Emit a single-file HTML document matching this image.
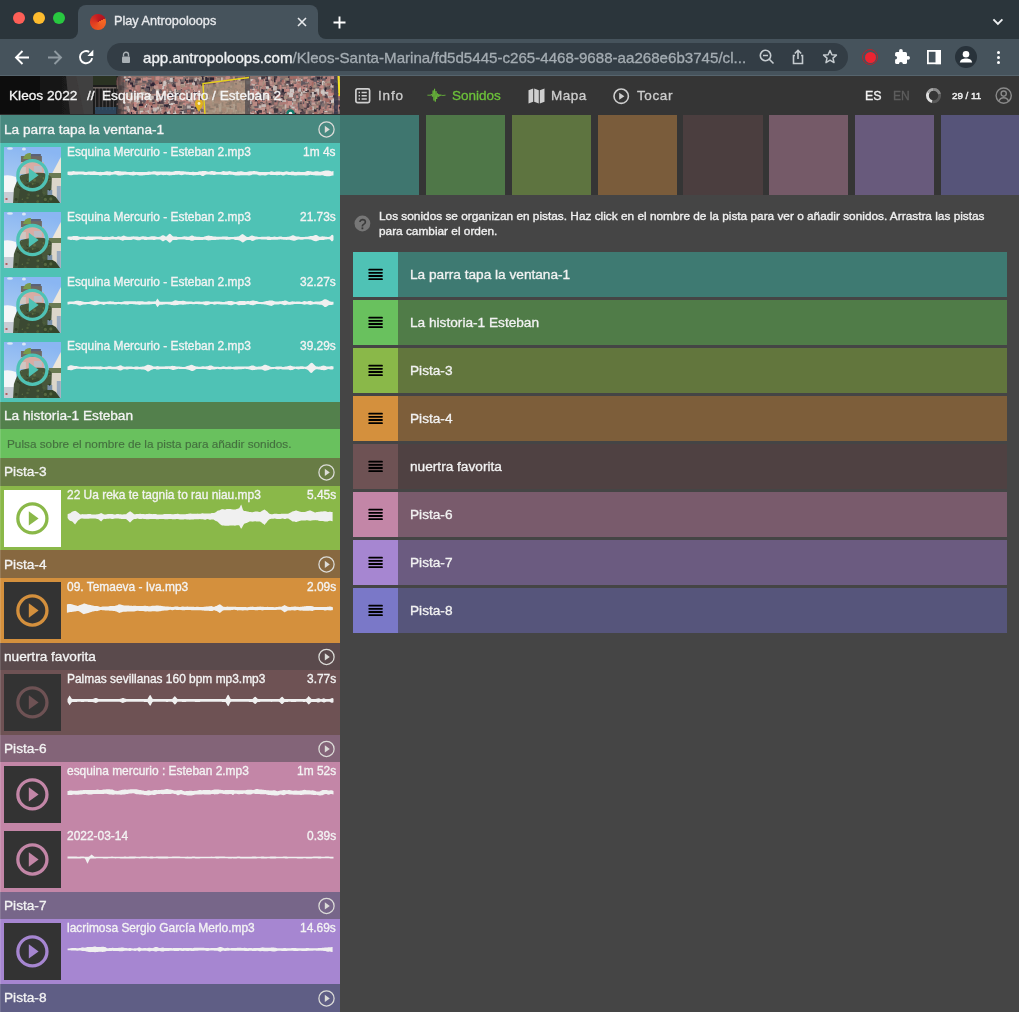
<!DOCTYPE html>
<html><head><meta charset="utf-8">
<style>
*{margin:0;padding:0;box-sizing:border-box}
html,body{width:1019px;height:1012px;overflow:hidden;background:#454545;font-family:"Liberation Sans",sans-serif;position:relative}
.a{position:absolute}
.t{position:absolute;white-space:nowrap;line-height:1;will-change:transform;-webkit-text-stroke:0.32px currentColor}
svg{position:absolute;overflow:visible}
</style></head><body>
<!-- ============ BROWSER CHROME ============ -->
<div class="a" style="left:0;top:0;width:1019px;height:39px;background:#2b353b"></div>
<div class="a" style="left:0;top:39px;width:1019px;height:37px;background:#46535c"></div>
<div class="a" style="left:0;top:75px;width:1019px;height:1px;background:#56646d"></div>
<!-- tab -->
<div class="a" style="left:78px;top:5px;width:240px;height:34px;background:#46535c;border-radius:8px 8px 0 0"></div>
<div class="a" style="left:70px;top:31px;width:8px;height:8px;background:#46535c"></div>
<div class="a" style="left:70px;top:31px;width:8px;height:8px;background:#2b353b;border-bottom-right-radius:8px"></div>
<div class="a" style="left:318px;top:31px;width:8px;height:8px;background:#46535c"></div>
<div class="a" style="left:318px;top:31px;width:8px;height:8px;background:#2b353b;border-bottom-left-radius:8px"></div>
<!-- traffic lights -->
<div class="a" style="left:13px;top:12px;width:12px;height:12px;border-radius:50%;background:#fe5f57"></div>
<div class="a" style="left:33px;top:12px;width:12px;height:12px;border-radius:50%;background:#febc2e"></div>
<div class="a" style="left:53px;top:12px;width:12px;height:12px;border-radius:50%;background:#28c840"></div>
<!-- favicon -->
<div class="a" style="left:90.2px;top:14.1px;width:15.6px;height:15.6px;border-radius:50%;background:conic-gradient(from 0deg,#c21a22 0deg,#b0141f 62deg,#f86a24 63deg,#f06024 120deg,#e84e20 200deg,#e03c22 260deg,#cc2822 320deg,#c21a22 360deg)"></div>
<div class="t" style="left:114px;top:15px;font-size:12.7px;color:#e8eaed">Play Antropoloops</div>
<svg style="left:297px;top:17px" width="10" height="10"><path d="M1 1L9 9M9 1L1 9" stroke="#e8eaed" stroke-width="1.6"/></svg>
<svg style="left:333px;top:15.5px" width="13" height="13"><path d="M6.5 0.5V12.5M0.5 6.5H12.5" stroke="#ffffff" stroke-width="1.9"/></svg>
<svg style="left:992px;top:18px" width="13" height="9"><path d="M1.4 1.4L5.9 5.9L10.4 1.4" stroke="#eef0f2" stroke-width="1.9" fill="none"/></svg>
<!-- nav arrows -->
<svg style="left:14px;top:49px" width="17" height="17"><path d="M15 8.5H2.5M8.5 2L2 8.5L8.5 15" stroke="#ffffff" stroke-width="1.9" fill="none"/></svg>
<svg style="left:46px;top:49px" width="17" height="17"><path d="M2 8.5H14.5M8.5 2L15 8.5L8.5 15" stroke="#8f9aa1" stroke-width="1.9" fill="none"/></svg>
<svg style="left:78px;top:49px" width="17" height="17"><path d="M11.2 2.9A6.1 6.1 0 1 0 14.1 9.1" stroke="#ffffff" stroke-width="1.9" fill="none"/><path d="M9.4 6.9H15.3V0.7Z" fill="#ffffff"/></svg>
<!-- url pill -->
<div class="a" style="left:107px;top:43px;width:741px;height:28px;border-radius:14px;background:#333d45"></div>
<svg style="left:121px;top:51px" width="10" height="13"><path d="M2.5 5.5V3.8A2.5 2.5 0 0 1 7.5 3.8V5.5" stroke="#a9b0b5" stroke-width="1.4" fill="none"/><rect x="1" y="5.5" width="8" height="6.5" rx="1" fill="#a9b0b5"/></svg>
<div class="t" style="left:142.5px;top:50px;font-size:15.11px;color:#eef0f2">app.antropoloops.com<span style="color:#a4acb2">/Kleos-Santa-Marina/fd5d5445-c265-4468-9688-aa268e6b3745/cl...</span></div>
<svg style="left:758px;top:48px" width="18" height="18"><circle cx="7.5" cy="7.5" r="5.2" stroke="#c5cbcf" stroke-width="1.6" fill="none"/><path d="M11.3 11.3L15.5 15.5M5 7.5H10" stroke="#c5cbcf" stroke-width="1.6"/></svg>
<svg style="left:790px;top:49px" width="16" height="16"><path d="M8 10V1.5M4.8 4.5L8 1.3L11.2 4.5" stroke="#c5cbcf" stroke-width="1.6" fill="none"/><path d="M5 6.5H3.5V14.5H12.5V6.5H11" stroke="#c5cbcf" stroke-width="1.6" fill="none"/></svg>
<svg style="left:822px;top:49px" width="16" height="16"><path d="M8 1.5L9.9 5.7L14.4 6.1L11 9.1L12 13.6L8 11.2L4 13.6L5 9.1L1.6 6.1L6.1 5.7Z" stroke="#c5cbcf" stroke-width="1.5" fill="none" stroke-linejoin="round"/></svg>
<div class="a" style="left:862px;top:49px;width:16px;height:16px;border-radius:50%;border:1.3px solid #b3262d;background:#46535c"></div>
<div class="a" style="left:864.5px;top:51.5px;width:11px;height:11px;border-radius:50%;background:#ee2431"></div>
<svg style="left:894px;top:49px" width="17" height="17"><rect x="1.1" y="3" width="11.9" height="12" rx="1.6" fill="#fff"/><circle cx="6.9" cy="1.9" r="1.9" fill="#fff"/><rect x="5.5" y="2" width="2.8" height="2" fill="#fff"/><circle cx="14.1" cy="8.8" r="1.9" fill="#fff"/><rect x="12" y="7.4" width="2.2" height="2.8" fill="#fff"/><circle cx="1.3" cy="8.8" r="1.8" fill="#46535c"/><circle cx="6.9" cy="14.8" r="1.9" fill="#46535c"/></svg>
<svg style="left:927px;top:49.8px" width="14" height="14.2"><rect x="0.9" y="0.9" width="12.2" height="12.4" stroke="#ffffff" stroke-width="1.8" fill="none"/><rect x="8.5" y="0" width="5.5" height="14.2" fill="#ffffff"/></svg>
<div class="a" style="left:955px;top:46px;width:22px;height:22px;border-radius:50%;background:#28323a"></div>
<svg style="left:955px;top:46px" width="22" height="22"><circle cx="11" cy="8.2" r="3.3" fill="#fff"/><path d="M4.8 16.5C5.5 13.2 8 12.4 11 12.4C14 12.4 16.5 13.2 17.2 16.5Z" fill="#fff"/></svg>
<div class="a" style="left:996.5px;top:50.8px;width:3.2px;height:3.2px;border-radius:50%;background:#fff"></div>
<div class="a" style="left:996.5px;top:56px;width:3.2px;height:3.2px;border-radius:50%;background:#fff"></div>
<div class="a" style="left:996.5px;top:61.2px;width:3.2px;height:3.2px;border-radius:50%;background:#fff"></div>

<!-- ============ PAGE ============ -->
<div class="a" style="left:0;top:76px;width:1019px;height:936px;background:#454545"></div>
<svg style="left:0;top:76px" width="340" height="39" viewBox="0 0 340 39">
<defs><linearGradient id="hg" x1="0" x2="1" y1="0" y2="0"><stop offset="0" stop-color="#0e0e0e"/><stop offset="0.55" stop-color="#1a1a1a"/><stop offset="1" stop-color="#2a2826"/></linearGradient></defs>
<defs><filter id="pb" x="0" y="0" width="1" height="1"><feGaussianBlur stdDeviation="0.6"/></filter></defs><g filter="url(#pb)">
<rect x="0" y="0" width="120" height="39" fill="url(#hg)"/>
<path d="M66 0L94 0L97 39L70 39Z" fill="#3c3a3a"/>
<path d="M76 0L94 0L96 39L84 39Z" fill="#444242" opacity="0.6"/>
<rect x="93" y="0" width="26" height="39" fill="#1e1c1c"/>
<rect x="93" y="0" width="26" height="9" fill="#2a3024"/>
<rect x="93" y="11" width="26" height="1.6" fill="#6a605c"/>
<rect x="95.0" y="12" width="1" height="22" fill="#8a8888" opacity="0.45"/>
<rect x="98.6" y="12" width="1" height="22" fill="#8a8888" opacity="0.45"/>
<rect x="102.2" y="12" width="1" height="22" fill="#8a8888" opacity="0.45"/>
<rect x="105.8" y="12" width="1" height="22" fill="#8a8888" opacity="0.45"/>
<rect x="109.4" y="12" width="1" height="22" fill="#8a8888" opacity="0.45"/>
<rect x="113.0" y="12" width="1" height="22" fill="#8a8888" opacity="0.45"/>
<rect x="116.6" y="12" width="1" height="22" fill="#8a8888" opacity="0.45"/>
<rect x="95" y="31" width="23" height="8" fill="#32506a" opacity="0.8"/>
<rect x="0" y="0" width="40" height="39" fill="#0a0a0a" opacity="0.5"/>
</g>
<defs><filter id="mb" x="0" y="0" width="1" height="1"><feGaussianBlur stdDeviation="0.7"/></filter></defs>
<g filter="url(#mb)">
<rect x="118" y="0" width="222" height="39" fill="#9a7c74"/>
<rect x="188.5" y="5.9" width="3.5" height="1.5" fill="#8a7a7a"/>
<rect x="197.9" y="2.3" width="3.0" height="1.3" fill="#bc8a86"/>
<rect x="209.7" y="9.4" width="3.1" height="1.4" fill="#8a7a7a"/>
<rect x="328.2" y="24.6" width="3.2" height="1.4" fill="#443a44"/>
<rect x="127.1" y="8.6" width="3.1" height="1.7" fill="#bc8a86"/>
<rect x="148.3" y="4.6" width="2.3" height="4.1" fill="#5a4a52"/>
<rect x="139.1" y="22.3" width="1.9" height="1.5" fill="#b4746e"/>
<rect x="242.4" y="24.1" width="2.9" height="3.1" fill="#e2dad6"/>
<rect x="220.3" y="36.0" width="2.5" height="2.1" fill="#5a4a52"/>
<rect x="272.6" y="9.5" width="3.2" height="3.0" fill="#e2dad6"/>
<rect x="279.4" y="11.2" width="4.6" height="1.6" fill="#bc8a86"/>
<rect x="153.0" y="13.3" width="4.5" height="2.7" fill="#b4746e"/>
<rect x="287.3" y="22.3" width="4.3" height="2.3" fill="#c48a84"/>
<rect x="249.1" y="22.6" width="2.8" height="4.1" fill="#d0a49c"/>
<rect x="222.2" y="25.9" width="1.4" height="3.7" fill="#6a6068"/>
<rect x="179.7" y="15.0" width="3.5" height="1.3" fill="#6a6068"/>
<rect x="195.6" y="23.8" width="2.9" height="2.0" fill="#7e6a6a"/>
<rect x="145.0" y="9.7" width="2.6" height="4.2" fill="#b4746e"/>
<rect x="153.3" y="15.7" width="2.2" height="1.7" fill="#bc8a86"/>
<rect x="309.5" y="10.9" width="2.7" height="2.5" fill="#443a44"/>
<rect x="330.5" y="5.9" width="1.8" height="2.0" fill="#b49c8c"/>
<rect x="118.7" y="32.4" width="1.8" height="2.2" fill="#d6cac6"/>
<rect x="209.8" y="14.4" width="3.2" height="4.5" fill="#cc9890"/>
<rect x="218.3" y="34.0" width="4.5" height="3.6" fill="#443a44"/>
<rect x="205.2" y="15.4" width="2.9" height="2.6" fill="#302838"/>
<rect x="131.1" y="8.1" width="1.8" height="2.4" fill="#cc9890"/>
<rect x="138.9" y="22.1" width="3.1" height="4.5" fill="#c08680"/>
<rect x="131.8" y="8.1" width="2.5" height="3.4" fill="#c48a84"/>
<rect x="250.9" y="18.5" width="1.6" height="2.9" fill="#6a6068"/>
<rect x="223.6" y="12.2" width="1.7" height="3.8" fill="#d0a49c"/>
<rect x="223.2" y="27.0" width="3.0" height="1.9" fill="#c48a84"/>
<rect x="148.8" y="21.2" width="1.3" height="3.0" fill="#b4746e"/>
<rect x="271.9" y="10.2" width="2.5" height="1.8" fill="#b49c8c"/>
<rect x="235.3" y="30.4" width="2.4" height="2.0" fill="#302838"/>
<rect x="296.6" y="31.9" width="3.8" height="2.0" fill="#d89a94"/>
<rect x="195.6" y="1.1" width="1.3" height="2.2" fill="#d0a49c"/>
<rect x="159.4" y="23.6" width="2.4" height="4.0" fill="#c48a84"/>
<rect x="329.9" y="14.2" width="2.0" height="2.0" fill="#302838"/>
<rect x="191.7" y="18.8" width="4.6" height="3.3" fill="#c08680"/>
<rect x="223.4" y="25.5" width="4.0" height="1.5" fill="#8a7a7a"/>
<rect x="319.8" y="30.5" width="3.8" height="2.9" fill="#5a4a52"/>
<rect x="213.2" y="24.8" width="1.5" height="4.5" fill="#443a44"/>
<rect x="219.7" y="29.0" width="1.5" height="1.8" fill="#d6cac6"/>
<rect x="122.2" y="23.0" width="2.8" height="3.5" fill="#d89a94"/>
<rect x="263.2" y="13.7" width="3.1" height="1.7" fill="#c08680"/>
<rect x="295.1" y="28.3" width="1.6" height="3.8" fill="#d6cac6"/>
<rect x="213.2" y="34.0" width="4.1" height="1.9" fill="#d0a49c"/>
<rect x="163.7" y="19.5" width="3.9" height="2.3" fill="#bc8a86"/>
<rect x="302.9" y="2.4" width="3.8" height="4.3" fill="#bc8a86"/>
<rect x="301.3" y="34.2" width="1.7" height="1.7" fill="#c08680"/>
<rect x="311.5" y="30.3" width="3.3" height="3.9" fill="#d6cac6"/>
<rect x="154.6" y="18.5" width="3.7" height="3.1" fill="#e2dad6"/>
<rect x="268.8" y="20.7" width="2.9" height="3.9" fill="#cc9890"/>
<rect x="171.7" y="10.8" width="3.9" height="3.0" fill="#c08680"/>
<rect x="286.2" y="35.6" width="2.8" height="3.3" fill="#302838"/>
<rect x="271.2" y="17.6" width="3.1" height="2.9" fill="#b49c8c"/>
<rect x="272.6" y="34.2" width="4.5" height="2.1" fill="#302838"/>
<rect x="304.2" y="5.3" width="1.6" height="2.7" fill="#b4746e"/>
<rect x="266.3" y="16.7" width="1.9" height="2.3" fill="#8a7a7a"/>
<rect x="316.9" y="6.0" width="3.7" height="3.5" fill="#d6cac6"/>
<rect x="172.7" y="5.4" width="2.8" height="3.8" fill="#8a7a7a"/>
<rect x="205.2" y="19.0" width="4.7" height="4.1" fill="#5a4a52"/>
<rect x="274.2" y="38.8" width="2.6" height="2.7" fill="#c48a84"/>
<rect x="187.3" y="28.2" width="1.3" height="3.1" fill="#6a6068"/>
<rect x="273.5" y="15.0" width="3.0" height="2.2" fill="#b4746e"/>
<rect x="141.3" y="35.8" width="2.0" height="4.3" fill="#b4746e"/>
<rect x="175.5" y="1.5" width="3.9" height="2.1" fill="#d6cac6"/>
<rect x="299.6" y="33.1" width="3.6" height="4.5" fill="#443a44"/>
<rect x="149.5" y="35.8" width="3.2" height="3.7" fill="#b4746e"/>
<rect x="178.5" y="31.2" width="1.8" height="4.3" fill="#d0a49c"/>
<rect x="326.2" y="24.7" width="4.0" height="1.5" fill="#b49c8c"/>
<rect x="130.9" y="33.6" width="2.8" height="2.4" fill="#bc8a86"/>
<rect x="323.6" y="10.4" width="1.7" height="3.0" fill="#b49c8c"/>
<rect x="326.1" y="37.8" width="2.1" height="1.8" fill="#7e6a6a"/>
<rect x="256.8" y="20.7" width="1.9" height="2.8" fill="#5a4a52"/>
<rect x="176.6" y="31.3" width="4.7" height="1.3" fill="#c08680"/>
<rect x="280.2" y="21.5" width="1.9" height="2.9" fill="#6a6068"/>
<rect x="139.8" y="31.9" width="2.7" height="2.9" fill="#443a44"/>
<rect x="333.3" y="12.0" width="2.0" height="2.0" fill="#302838"/>
<rect x="302.4" y="27.6" width="3.4" height="2.6" fill="#c48a84"/>
<rect x="335.9" y="32.6" width="1.2" height="3.4" fill="#d0a49c"/>
<rect x="212.5" y="2.2" width="3.5" height="2.5" fill="#7e6a6a"/>
<rect x="250.1" y="27.0" width="1.4" height="1.8" fill="#d0a49c"/>
<rect x="215.9" y="10.3" width="4.6" height="4.6" fill="#e2dad6"/>
<rect x="170.8" y="37.7" width="2.3" height="2.4" fill="#c08680"/>
<rect x="191.1" y="3.3" width="2.2" height="3.5" fill="#b49c8c"/>
<rect x="229.1" y="0.2" width="2.1" height="1.5" fill="#443a44"/>
<rect x="247.4" y="15.4" width="2.2" height="3.4" fill="#b4746e"/>
<rect x="247.2" y="20.6" width="3.8" height="3.5" fill="#443a44"/>
<rect x="287.2" y="28.1" width="2.9" height="2.2" fill="#d6cac6"/>
<rect x="125.8" y="32.6" width="4.3" height="3.4" fill="#d6cac6"/>
<rect x="319.8" y="29.4" width="3.2" height="4.0" fill="#c08680"/>
<rect x="301.1" y="22.8" width="4.3" height="3.6" fill="#b49c8c"/>
<rect x="135.1" y="1.6" width="3.4" height="4.6" fill="#443a44"/>
<rect x="303.2" y="21.8" width="3.4" height="3.4" fill="#b49c8c"/>
<rect x="225.6" y="0.1" width="4.0" height="3.8" fill="#b4746e"/>
<rect x="263.7" y="2.6" width="3.8" height="2.1" fill="#b4746e"/>
<rect x="305.5" y="9.2" width="3.8" height="2.0" fill="#6a6068"/>
<rect x="226.6" y="14.9" width="2.9" height="3.6" fill="#cc9890"/>
<rect x="254.2" y="25.1" width="1.5" height="1.7" fill="#d0a49c"/>
<rect x="261.9" y="27.0" width="3.4" height="1.7" fill="#d89a94"/>
<rect x="129.6" y="10.5" width="3.6" height="3.6" fill="#d89a94"/>
<rect x="181.2" y="20.1" width="2.8" height="2.8" fill="#8a7a7a"/>
<rect x="338.5" y="21.4" width="2.3" height="1.5" fill="#d89a94"/>
<rect x="119.9" y="17.9" width="4.1" height="4.6" fill="#6a6068"/>
<rect x="338.6" y="15.1" width="4.4" height="4.5" fill="#b4746e"/>
<rect x="246.2" y="5.5" width="3.0" height="4.5" fill="#d6cac6"/>
<rect x="251.2" y="24.6" width="2.2" height="1.6" fill="#c48a84"/>
<rect x="167.8" y="35.0" width="2.9" height="1.3" fill="#c08680"/>
<rect x="328.8" y="26.6" width="2.6" height="3.7" fill="#bc8a86"/>
<rect x="193.0" y="12.3" width="4.1" height="1.2" fill="#e2dad6"/>
<rect x="304.0" y="4.7" width="4.4" height="3.7" fill="#7e6a6a"/>
<rect x="172.7" y="2.5" width="2.6" height="4.2" fill="#b4746e"/>
<rect x="196.8" y="16.7" width="2.2" height="1.4" fill="#8a7a7a"/>
<rect x="127.6" y="25.8" width="3.4" height="1.7" fill="#d0a49c"/>
<rect x="213.7" y="12.3" width="3.9" height="3.9" fill="#bc8a86"/>
<rect x="314.1" y="31.7" width="3.4" height="4.4" fill="#302838"/>
<rect x="277.2" y="1.9" width="3.8" height="2.8" fill="#d6cac6"/>
<rect x="260.4" y="11.2" width="1.4" height="4.4" fill="#d6cac6"/>
<rect x="154.3" y="16.2" width="2.2" height="2.1" fill="#d0a49c"/>
<rect x="207.0" y="9.3" width="2.9" height="3.5" fill="#8a7a7a"/>
<rect x="153.5" y="6.3" width="1.9" height="4.4" fill="#d89a94"/>
<rect x="239.3" y="17.7" width="2.4" height="3.9" fill="#bc8a86"/>
<rect x="147.3" y="7.5" width="1.5" height="2.4" fill="#b4746e"/>
<rect x="187.5" y="14.4" width="4.0" height="1.9" fill="#c08680"/>
<rect x="283.9" y="16.1" width="2.6" height="3.0" fill="#443a44"/>
<rect x="176.5" y="29.3" width="2.9" height="3.2" fill="#c48a84"/>
<rect x="144.2" y="19.6" width="3.4" height="4.2" fill="#302838"/>
<rect x="136.7" y="35.0" width="2.5" height="3.5" fill="#bc8a86"/>
<rect x="329.7" y="33.1" width="4.3" height="1.3" fill="#cc9890"/>
<rect x="211.2" y="29.8" width="4.0" height="4.6" fill="#d89a94"/>
<rect x="116.0" y="15.3" width="4.4" height="4.1" fill="#6a6068"/>
<rect x="333.8" y="9.7" width="1.6" height="1.7" fill="#8a7a7a"/>
<rect x="326.9" y="28.1" width="3.5" height="3.9" fill="#6a6068"/>
<rect x="135.0" y="30.3" width="1.2" height="1.6" fill="#cc9890"/>
<rect x="260.6" y="11.8" width="1.6" height="2.1" fill="#bc8a86"/>
<rect x="272.5" y="4.4" width="1.4" height="3.0" fill="#302838"/>
<rect x="202.9" y="8.7" width="3.3" height="1.2" fill="#7e6a6a"/>
<rect x="339.2" y="10.9" width="2.3" height="4.1" fill="#b49c8c"/>
<rect x="222.5" y="9.2" width="2.1" height="4.6" fill="#7e6a6a"/>
<rect x="128.4" y="7.6" width="4.3" height="3.5" fill="#b4746e"/>
<rect x="173.6" y="26.0" width="4.4" height="2.0" fill="#cc9890"/>
<rect x="271.9" y="28.0" width="2.5" height="2.6" fill="#c08680"/>
<rect x="294.5" y="28.8" width="3.0" height="1.9" fill="#302838"/>
<rect x="185.8" y="32.0" width="2.0" height="2.0" fill="#7e6a6a"/>
<rect x="140.4" y="24.3" width="3.3" height="4.3" fill="#d89a94"/>
<rect x="209.4" y="25.9" width="4.5" height="1.7" fill="#443a44"/>
<rect x="128.2" y="0.9" width="3.3" height="2.7" fill="#cc9890"/>
<rect x="157.2" y="17.5" width="3.7" height="2.3" fill="#8a7a7a"/>
<rect x="339.4" y="36.3" width="2.4" height="1.8" fill="#6a6068"/>
<rect x="123.1" y="25.9" width="2.5" height="2.5" fill="#e2dad6"/>
<rect x="215.1" y="4.2" width="1.5" height="1.5" fill="#bc8a86"/>
<rect x="330.0" y="4.8" width="4.6" height="1.9" fill="#c48a84"/>
<rect x="288.2" y="12.0" width="4.0" height="1.5" fill="#d89a94"/>
<rect x="159.8" y="21.1" width="2.8" height="2.3" fill="#d89a94"/>
<rect x="122.8" y="16.0" width="4.0" height="3.9" fill="#cc9890"/>
<rect x="200.1" y="18.1" width="4.0" height="1.4" fill="#302838"/>
<rect x="283.4" y="35.0" width="2.4" height="2.2" fill="#cc9890"/>
<rect x="174.7" y="27.9" width="2.3" height="2.2" fill="#c08680"/>
<rect x="277.6" y="23.2" width="4.0" height="4.5" fill="#b4746e"/>
<rect x="121.4" y="9.1" width="2.9" height="4.5" fill="#443a44"/>
<rect x="292.9" y="35.6" width="4.1" height="1.7" fill="#d89a94"/>
<rect x="157.0" y="31.3" width="3.8" height="4.1" fill="#d6cac6"/>
<rect x="252.0" y="12.8" width="2.3" height="2.5" fill="#b4746e"/>
<rect x="230.7" y="15.3" width="1.8" height="2.6" fill="#cc9890"/>
<rect x="223.9" y="21.2" width="1.8" height="2.7" fill="#8a7a7a"/>
<rect x="337.3" y="10.3" width="1.5" height="1.5" fill="#d89a94"/>
<rect x="337.4" y="37.9" width="1.8" height="1.7" fill="#6a6068"/>
<rect x="254.9" y="26.3" width="3.8" height="4.2" fill="#8a7a7a"/>
<rect x="290.7" y="11.5" width="2.2" height="2.1" fill="#d0a49c"/>
<rect x="281.3" y="7.8" width="2.1" height="2.1" fill="#d6cac6"/>
<rect x="179.0" y="35.4" width="1.9" height="1.4" fill="#d0a49c"/>
<rect x="338.3" y="19.8" width="2.0" height="4.0" fill="#6a6068"/>
<rect x="338.0" y="4.0" width="2.9" height="4.1" fill="#6a6068"/>
<rect x="320.8" y="1.6" width="2.2" height="1.6" fill="#302838"/>
<rect x="250.5" y="32.3" width="1.9" height="1.5" fill="#5a4a52"/>
<rect x="216.6" y="10.1" width="3.9" height="4.5" fill="#8a7a7a"/>
<rect x="258.8" y="27.7" width="2.4" height="1.3" fill="#e2dad6"/>
<rect x="147.7" y="8.0" width="2.1" height="3.3" fill="#302838"/>
<rect x="298.5" y="31.9" width="2.6" height="2.5" fill="#7e6a6a"/>
<rect x="133.5" y="1.2" width="2.9" height="2.9" fill="#bc8a86"/>
<rect x="138.7" y="15.4" width="3.1" height="3.4" fill="#b4746e"/>
<rect x="262.3" y="15.5" width="2.1" height="4.7" fill="#7e6a6a"/>
<rect x="209.6" y="2.0" width="3.8" height="4.3" fill="#bc8a86"/>
<rect x="209.3" y="33.7" width="4.7" height="2.5" fill="#302838"/>
<rect x="203.5" y="15.8" width="4.5" height="2.7" fill="#5a4a52"/>
<rect x="210.9" y="32.0" width="2.6" height="4.3" fill="#6a6068"/>
<rect x="289.2" y="5.1" width="1.4" height="1.7" fill="#443a44"/>
<rect x="135.9" y="24.3" width="2.5" height="3.0" fill="#d6cac6"/>
<rect x="193.9" y="6.3" width="1.8" height="1.4" fill="#443a44"/>
<rect x="225.9" y="31.4" width="4.6" height="1.9" fill="#d6cac6"/>
<rect x="303.6" y="1.7" width="4.4" height="2.3" fill="#443a44"/>
<rect x="135.3" y="27.8" width="3.6" height="4.3" fill="#b49c8c"/>
<rect x="255.1" y="24.0" width="1.9" height="2.9" fill="#302838"/>
<rect x="125.3" y="36.6" width="1.7" height="2.5" fill="#d6cac6"/>
<rect x="171.3" y="28.3" width="4.3" height="1.3" fill="#cc9890"/>
<rect x="265.6" y="12.6" width="2.6" height="2.8" fill="#7e6a6a"/>
<rect x="261.4" y="12.0" width="2.1" height="2.6" fill="#c48a84"/>
<rect x="216.1" y="17.1" width="1.3" height="3.4" fill="#d89a94"/>
<rect x="220.2" y="17.4" width="3.4" height="4.1" fill="#5a4a52"/>
<rect x="297.6" y="15.6" width="1.4" height="2.5" fill="#c48a84"/>
<rect x="136.5" y="17.2" width="3.0" height="1.3" fill="#d6cac6"/>
<rect x="134.4" y="28.6" width="3.9" height="3.0" fill="#cc9890"/>
<rect x="284.5" y="34.9" width="3.5" height="3.9" fill="#c08680"/>
<rect x="308.0" y="38.8" width="3.8" height="4.1" fill="#302838"/>
<rect x="145.5" y="34.5" width="2.2" height="4.0" fill="#5a4a52"/>
<rect x="269.7" y="28.1" width="2.0" height="4.1" fill="#d0a49c"/>
<rect x="151.6" y="35.0" width="2.2" height="4.1" fill="#d6cac6"/>
<rect x="172.9" y="37.6" width="2.9" height="3.3" fill="#b49c8c"/>
<rect x="187.5" y="1.4" width="1.8" height="1.8" fill="#d0a49c"/>
<rect x="268.2" y="34.9" width="1.8" height="3.9" fill="#8a7a7a"/>
<rect x="288.1" y="1.9" width="4.2" height="4.6" fill="#6a6068"/>
<rect x="240.4" y="22.6" width="4.3" height="1.6" fill="#443a44"/>
<rect x="281.3" y="14.5" width="2.5" height="2.5" fill="#d6cac6"/>
<rect x="196.7" y="29.8" width="2.7" height="1.8" fill="#cc9890"/>
<rect x="182.4" y="20.1" width="2.3" height="4.6" fill="#e2dad6"/>
<rect x="280.2" y="29.1" width="2.0" height="2.2" fill="#bc8a86"/>
<rect x="209.6" y="14.2" width="1.4" height="2.9" fill="#cc9890"/>
<rect x="121.0" y="0.1" width="2.4" height="1.6" fill="#c48a84"/>
<rect x="235.6" y="16.1" width="2.3" height="1.7" fill="#c48a84"/>
<rect x="255.8" y="18.5" width="1.7" height="4.5" fill="#b49c8c"/>
<rect x="274.5" y="17.6" width="1.4" height="1.7" fill="#d0a49c"/>
<rect x="206.0" y="10.3" width="1.2" height="3.5" fill="#c48a84"/>
<rect x="249.2" y="22.6" width="3.3" height="3.0" fill="#d89a94"/>
<rect x="171.7" y="35.2" width="1.4" height="3.1" fill="#443a44"/>
<rect x="157.6" y="6.2" width="4.4" height="1.6" fill="#302838"/>
<rect x="147.9" y="7.8" width="3.3" height="3.0" fill="#bc8a86"/>
<rect x="298.2" y="6.8" width="2.3" height="2.3" fill="#cc9890"/>
<rect x="338.7" y="28.2" width="2.9" height="3.1" fill="#443a44"/>
<rect x="305.2" y="29.1" width="2.8" height="3.8" fill="#6a6068"/>
<rect x="155.3" y="38.9" width="2.1" height="3.5" fill="#8a7a7a"/>
<rect x="191.2" y="29.2" width="3.6" height="4.2" fill="#cc9890"/>
<rect x="175.6" y="21.6" width="2.7" height="4.0" fill="#d0a49c"/>
<rect x="182.2" y="36.2" width="4.3" height="1.5" fill="#c08680"/>
<rect x="154.0" y="35.3" width="4.1" height="1.9" fill="#5a4a52"/>
<rect x="283.1" y="12.7" width="4.3" height="2.3" fill="#b49c8c"/>
<rect x="201.0" y="33.2" width="4.4" height="4.6" fill="#d89a94"/>
<rect x="221.8" y="20.7" width="1.2" height="1.3" fill="#b49c8c"/>
<rect x="243.8" y="12.0" width="1.9" height="3.4" fill="#b4746e"/>
<rect x="242.6" y="6.7" width="1.3" height="1.6" fill="#5a4a52"/>
<rect x="193.2" y="5.5" width="1.3" height="1.3" fill="#cc9890"/>
<rect x="272.1" y="28.7" width="1.4" height="3.3" fill="#c48a84"/>
<rect x="160.6" y="37.2" width="3.1" height="3.5" fill="#443a44"/>
<rect x="140.0" y="8.0" width="1.6" height="1.3" fill="#b4746e"/>
<rect x="300.8" y="24.6" width="2.2" height="1.5" fill="#8a7a7a"/>
<rect x="293.4" y="25.2" width="2.2" height="2.4" fill="#d0a49c"/>
<rect x="120.7" y="10.0" width="2.2" height="3.7" fill="#c48a84"/>
<rect x="319.9" y="30.0" width="3.3" height="2.9" fill="#7e6a6a"/>
<rect x="254.5" y="1.2" width="2.6" height="2.7" fill="#8a7a7a"/>
<rect x="193.7" y="27.5" width="3.1" height="2.0" fill="#b4746e"/>
<rect x="244.7" y="11.2" width="2.7" height="3.0" fill="#7e6a6a"/>
<rect x="286.7" y="38.1" width="1.2" height="2.9" fill="#d89a94"/>
<rect x="271.7" y="32.2" width="4.6" height="3.3" fill="#d0a49c"/>
<rect x="245.5" y="6.2" width="4.1" height="4.5" fill="#b49c8c"/>
<rect x="227.6" y="4.3" width="3.4" height="1.5" fill="#8a7a7a"/>
<rect x="256.7" y="13.9" width="2.6" height="2.6" fill="#b4746e"/>
<rect x="210.6" y="25.2" width="2.5" height="2.3" fill="#bc8a86"/>
<rect x="317.9" y="19.5" width="2.5" height="4.3" fill="#b49c8c"/>
<rect x="327.4" y="4.9" width="3.3" height="3.6" fill="#cc9890"/>
<rect x="194.1" y="12.7" width="1.7" height="4.2" fill="#e2dad6"/>
<rect x="154.0" y="17.1" width="3.9" height="3.2" fill="#d6cac6"/>
<rect x="190.8" y="25.1" width="3.6" height="3.0" fill="#d0a49c"/>
<rect x="183.5" y="27.4" width="4.2" height="1.7" fill="#d6cac6"/>
<rect x="334.3" y="28.2" width="3.3" height="2.4" fill="#b49c8c"/>
<rect x="189.5" y="7.4" width="4.6" height="3.8" fill="#8a7a7a"/>
<rect x="152.9" y="25.7" width="1.9" height="1.7" fill="#d6cac6"/>
<rect x="294.1" y="28.6" width="2.7" height="1.9" fill="#8a7a7a"/>
<rect x="178.9" y="34.5" width="2.8" height="1.2" fill="#bc8a86"/>
<rect x="271.3" y="19.5" width="3.4" height="2.8" fill="#d6cac6"/>
<rect x="173.6" y="28.8" width="1.2" height="2.0" fill="#bc8a86"/>
<rect x="273.1" y="22.9" width="3.5" height="4.2" fill="#b49c8c"/>
<rect x="268.2" y="25.0" width="2.8" height="2.3" fill="#8a7a7a"/>
<rect x="316.4" y="9.5" width="2.6" height="3.7" fill="#5a4a52"/>
<rect x="172.0" y="16.5" width="2.8" height="3.4" fill="#bc8a86"/>
<rect x="232.1" y="25.8" width="4.3" height="4.3" fill="#e2dad6"/>
<rect x="290.3" y="15.2" width="2.9" height="4.6" fill="#cc9890"/>
<rect x="172.3" y="8.5" width="3.7" height="4.5" fill="#302838"/>
<rect x="232.3" y="3.9" width="3.2" height="3.1" fill="#d89a94"/>
<rect x="230.7" y="24.9" width="4.1" height="3.0" fill="#bc8a86"/>
<rect x="282.2" y="17.8" width="4.7" height="1.8" fill="#8a7a7a"/>
<rect x="279.3" y="23.9" width="3.4" height="2.1" fill="#443a44"/>
<rect x="205.5" y="0.5" width="2.7" height="2.7" fill="#c48a84"/>
<rect x="246.0" y="4.3" width="2.3" height="2.6" fill="#b49c8c"/>
<rect x="338.7" y="37.5" width="2.8" height="1.8" fill="#b4746e"/>
<rect x="297.3" y="24.7" width="2.8" height="3.2" fill="#b49c8c"/>
<rect x="298.5" y="5.7" width="3.5" height="4.1" fill="#bc8a86"/>
<rect x="220.9" y="11.5" width="3.1" height="1.6" fill="#d89a94"/>
<rect x="195.5" y="33.2" width="2.1" height="2.5" fill="#d0a49c"/>
<rect x="336.2" y="26.5" width="2.9" height="4.0" fill="#d0a49c"/>
<rect x="196.2" y="25.5" width="2.3" height="2.9" fill="#b4746e"/>
<rect x="263.7" y="14.1" width="4.5" height="4.2" fill="#cc9890"/>
<rect x="135.1" y="22.0" width="2.3" height="4.5" fill="#c48a84"/>
<rect x="257.8" y="0.6" width="1.2" height="4.5" fill="#7e6a6a"/>
<rect x="172.0" y="4.0" width="1.7" height="2.0" fill="#6a6068"/>
<rect x="193.6" y="6.0" width="4.4" height="4.0" fill="#5a4a52"/>
<rect x="252.5" y="26.8" width="4.6" height="1.5" fill="#7e6a6a"/>
<rect x="160.2" y="27.0" width="3.1" height="3.8" fill="#6a6068"/>
<rect x="266.4" y="4.6" width="1.6" height="2.7" fill="#d6cac6"/>
<rect x="222.0" y="21.7" width="2.9" height="4.4" fill="#d89a94"/>
<rect x="171.2" y="6.4" width="3.3" height="3.8" fill="#5a4a52"/>
<rect x="304.3" y="18.3" width="3.2" height="3.5" fill="#6a6068"/>
<rect x="200.0" y="16.3" width="4.6" height="1.5" fill="#c48a84"/>
<rect x="258.5" y="1.1" width="3.3" height="3.6" fill="#e2dad6"/>
<rect x="297.1" y="3.7" width="2.9" height="3.9" fill="#d6cac6"/>
<rect x="123.6" y="28.0" width="3.4" height="2.4" fill="#c48a84"/>
<rect x="192.5" y="30.4" width="3.1" height="4.4" fill="#7e6a6a"/>
<rect x="213.5" y="16.5" width="3.1" height="4.1" fill="#7e6a6a"/>
<rect x="195.6" y="19.3" width="2.4" height="4.6" fill="#c48a84"/>
<rect x="334.4" y="25.5" width="4.0" height="2.4" fill="#e2dad6"/>
<rect x="275.8" y="5.0" width="4.6" height="1.5" fill="#cc9890"/>
<rect x="205.3" y="21.6" width="2.6" height="3.2" fill="#443a44"/>
<rect x="183.3" y="0.2" width="1.9" height="4.4" fill="#cc9890"/>
<rect x="292.7" y="35.5" width="3.3" height="3.4" fill="#b4746e"/>
<rect x="163.6" y="26.0" width="2.8" height="3.9" fill="#8a7a7a"/>
<rect x="264.7" y="33.9" width="2.7" height="1.6" fill="#c08680"/>
<rect x="198.6" y="32.1" width="4.0" height="3.2" fill="#d0a49c"/>
<rect x="309.2" y="7.2" width="1.3" height="1.3" fill="#cc9890"/>
<rect x="227.5" y="20.4" width="4.1" height="3.9" fill="#bc8a86"/>
<rect x="244.9" y="35.8" width="2.8" height="1.2" fill="#443a44"/>
<rect x="249.0" y="38.7" width="3.5" height="1.7" fill="#bc8a86"/>
<rect x="238.9" y="3.2" width="2.9" height="4.3" fill="#c08680"/>
<rect x="211.6" y="0.4" width="3.5" height="4.7" fill="#b4746e"/>
<rect x="164.9" y="4.7" width="2.9" height="2.2" fill="#b49c8c"/>
<rect x="217.0" y="29.0" width="4.4" height="2.5" fill="#d6cac6"/>
<rect x="279.5" y="3.3" width="3.4" height="3.7" fill="#6a6068"/>
<rect x="266.0" y="34.7" width="4.4" height="1.4" fill="#cc9890"/>
<rect x="118.6" y="0.6" width="3.5" height="4.1" fill="#b4746e"/>
<rect x="203.1" y="12.2" width="3.3" height="4.6" fill="#d89a94"/>
<rect x="252.4" y="12.3" width="4.5" height="3.7" fill="#d89a94"/>
<rect x="267.6" y="5.7" width="4.0" height="2.5" fill="#5a4a52"/>
<rect x="257.1" y="16.3" width="2.6" height="4.0" fill="#d0a49c"/>
<rect x="291.8" y="22.1" width="2.2" height="1.4" fill="#e2dad6"/>
<rect x="310.8" y="28.3" width="1.3" height="1.7" fill="#7e6a6a"/>
<rect x="247.0" y="38.1" width="2.1" height="2.6" fill="#443a44"/>
<rect x="250.8" y="34.9" width="4.0" height="2.2" fill="#c08680"/>
<rect x="188.0" y="10.5" width="1.8" height="4.4" fill="#cc9890"/>
<rect x="180.6" y="5.5" width="4.3" height="4.7" fill="#d6cac6"/>
<rect x="177.3" y="33.2" width="4.0" height="3.6" fill="#d89a94"/>
<rect x="193.7" y="3.3" width="3.1" height="4.0" fill="#302838"/>
<rect x="292.4" y="28.2" width="4.6" height="2.3" fill="#cc9890"/>
<rect x="267.8" y="18.1" width="1.9" height="2.1" fill="#c08680"/>
<rect x="293.3" y="17.9" width="1.5" height="4.0" fill="#b4746e"/>
<rect x="168.2" y="22.6" width="4.3" height="4.3" fill="#e2dad6"/>
<rect x="222.8" y="23.0" width="1.9" height="1.9" fill="#5a4a52"/>
<rect x="296.5" y="11.3" width="3.2" height="2.5" fill="#d6cac6"/>
<rect x="171.2" y="36.0" width="2.9" height="4.2" fill="#c48a84"/>
<rect x="257.7" y="30.7" width="1.7" height="3.3" fill="#c48a84"/>
<rect x="178.8" y="23.7" width="1.5" height="1.9" fill="#d89a94"/>
<rect x="247.4" y="8.3" width="4.4" height="2.2" fill="#8a7a7a"/>
<rect x="328.0" y="29.9" width="4.1" height="4.6" fill="#d0a49c"/>
<rect x="305.0" y="13.2" width="4.7" height="2.5" fill="#c08680"/>
<rect x="127.4" y="21.7" width="4.2" height="2.8" fill="#b4746e"/>
<rect x="309.3" y="25.0" width="4.4" height="3.7" fill="#b4746e"/>
<rect x="173.6" y="22.0" width="3.4" height="4.5" fill="#443a44"/>
<rect x="156.9" y="33.1" width="2.5" height="2.0" fill="#b49c8c"/>
<rect x="154.6" y="36.7" width="4.5" height="1.4" fill="#c08680"/>
<rect x="303.5" y="1.8" width="4.0" height="3.7" fill="#d89a94"/>
<rect x="128.5" y="5.6" width="3.8" height="4.5" fill="#7e6a6a"/>
<rect x="248.1" y="17.2" width="3.5" height="2.8" fill="#c48a84"/>
<rect x="173.6" y="4.8" width="2.9" height="1.8" fill="#b49c8c"/>
<rect x="296.9" y="35.7" width="4.3" height="2.8" fill="#302838"/>
<rect x="294.9" y="6.1" width="4.1" height="1.5" fill="#c48a84"/>
<rect x="315.1" y="5.5" width="2.8" height="1.5" fill="#443a44"/>
<rect x="304.7" y="24.5" width="2.8" height="2.4" fill="#b49c8c"/>
<rect x="223.0" y="24.5" width="1.7" height="2.0" fill="#cc9890"/>
<rect x="156.4" y="17.6" width="4.3" height="2.7" fill="#d6cac6"/>
<rect x="175.7" y="16.1" width="1.7" height="2.1" fill="#7e6a6a"/>
<rect x="190.9" y="6.5" width="2.9" height="2.3" fill="#d89a94"/>
<rect x="141.6" y="38.2" width="1.4" height="4.3" fill="#302838"/>
<rect x="241.4" y="32.6" width="1.6" height="3.8" fill="#c48a84"/>
<rect x="212.8" y="10.2" width="2.0" height="2.0" fill="#443a44"/>
<rect x="180.8" y="35.0" width="1.4" height="3.7" fill="#7e6a6a"/>
<rect x="148.3" y="25.0" width="2.7" height="3.0" fill="#d6cac6"/>
<rect x="215.2" y="30.8" width="4.5" height="2.2" fill="#c48a84"/>
<rect x="213.5" y="35.6" width="2.0" height="3.2" fill="#d6cac6"/>
<rect x="304.9" y="20.3" width="2.0" height="1.8" fill="#b4746e"/>
<rect x="301.7" y="34.7" width="3.8" height="3.9" fill="#5a4a52"/>
<rect x="162.2" y="23.9" width="3.7" height="4.0" fill="#7e6a6a"/>
<rect x="161.3" y="2.6" width="3.8" height="2.6" fill="#cc9890"/>
<rect x="232.1" y="13.6" width="2.2" height="3.4" fill="#d89a94"/>
<rect x="136.2" y="16.0" width="3.9" height="1.7" fill="#d0a49c"/>
<rect x="171.6" y="22.0" width="4.6" height="1.3" fill="#c48a84"/>
<rect x="244.8" y="33.5" width="2.4" height="4.5" fill="#b4746e"/>
<rect x="143.1" y="27.9" width="4.1" height="4.2" fill="#e2dad6"/>
<rect x="290.5" y="33.9" width="3.2" height="4.3" fill="#7e6a6a"/>
<rect x="311.5" y="37.2" width="2.9" height="3.0" fill="#d6cac6"/>
<rect x="120.6" y="37.7" width="2.0" height="1.8" fill="#8a7a7a"/>
<rect x="185.9" y="21.7" width="4.5" height="1.3" fill="#302838"/>
<rect x="174.6" y="32.7" width="3.4" height="2.8" fill="#b49c8c"/>
<rect x="273.4" y="4.0" width="4.2" height="3.7" fill="#cc9890"/>
<rect x="177.2" y="18.1" width="3.3" height="3.9" fill="#8a7a7a"/>
<rect x="143.3" y="15.8" width="1.7" height="3.3" fill="#b49c8c"/>
<rect x="149.0" y="22.3" width="3.8" height="1.8" fill="#c08680"/>
<rect x="326.0" y="15.2" width="2.7" height="4.1" fill="#cc9890"/>
<rect x="204.6" y="36.7" width="3.9" height="2.4" fill="#b49c8c"/>
<rect x="303.8" y="27.9" width="4.2" height="3.2" fill="#e2dad6"/>
<rect x="298.6" y="33.1" width="1.4" height="3.0" fill="#c48a84"/>
<rect x="171.8" y="16.5" width="3.4" height="2.5" fill="#5a4a52"/>
<rect x="131.5" y="16.9" width="3.0" height="1.3" fill="#d6cac6"/>
<rect x="210.2" y="15.5" width="4.7" height="2.8" fill="#cc9890"/>
<rect x="297.3" y="34.5" width="4.3" height="1.3" fill="#d0a49c"/>
<rect x="321.6" y="24.3" width="3.4" height="4.0" fill="#cc9890"/>
<rect x="255.2" y="9.8" width="3.0" height="2.7" fill="#cc9890"/>
<rect x="180.4" y="11.9" width="3.5" height="1.6" fill="#d0a49c"/>
<rect x="134.9" y="23.0" width="4.5" height="2.7" fill="#d6cac6"/>
<rect x="314.3" y="35.7" width="3.2" height="2.2" fill="#b4746e"/>
<rect x="281.9" y="11.2" width="2.8" height="3.6" fill="#b49c8c"/>
<rect x="261.7" y="7.8" width="3.7" height="2.8" fill="#7e6a6a"/>
<rect x="253.3" y="18.3" width="2.3" height="2.0" fill="#b49c8c"/>
<rect x="158.3" y="21.3" width="4.6" height="2.6" fill="#c48a84"/>
<rect x="152.4" y="37.1" width="2.3" height="2.3" fill="#d0a49c"/>
<rect x="179.8" y="38.5" width="2.2" height="3.9" fill="#5a4a52"/>
<rect x="239.5" y="23.6" width="2.4" height="3.5" fill="#443a44"/>
<rect x="302.9" y="13.8" width="3.9" height="3.0" fill="#d6cac6"/>
<rect x="209.4" y="26.1" width="1.7" height="1.9" fill="#d0a49c"/>
<rect x="299.9" y="20.2" width="3.8" height="3.8" fill="#d89a94"/>
<rect x="176.2" y="24.6" width="3.4" height="3.7" fill="#bc8a86"/>
<rect x="311.1" y="0.2" width="3.9" height="3.3" fill="#d89a94"/>
<rect x="205.0" y="38.7" width="1.7" height="4.2" fill="#d0a49c"/>
<rect x="311.5" y="23.7" width="2.5" height="2.8" fill="#6a6068"/>
<rect x="180.5" y="13.8" width="2.4" height="3.0" fill="#443a44"/>
<rect x="261.2" y="0.3" width="3.8" height="4.7" fill="#443a44"/>
<rect x="215.5" y="7.2" width="2.3" height="1.7" fill="#443a44"/>
<rect x="246.3" y="3.4" width="4.4" height="2.3" fill="#b49c8c"/>
<rect x="330.8" y="8.0" width="2.7" height="4.4" fill="#c08680"/>
<rect x="121.7" y="10.0" width="4.3" height="2.2" fill="#7e6a6a"/>
<rect x="236.6" y="38.9" width="3.0" height="3.0" fill="#bc8a86"/>
<rect x="203.3" y="14.0" width="3.3" height="2.4" fill="#c08680"/>
<rect x="267.5" y="20.5" width="1.5" height="2.5" fill="#443a44"/>
<rect x="261.3" y="36.2" width="1.7" height="1.9" fill="#bc8a86"/>
<rect x="225.0" y="17.2" width="3.4" height="4.7" fill="#e2dad6"/>
<rect x="270.9" y="29.1" width="1.5" height="2.5" fill="#c48a84"/>
<rect x="335.2" y="32.2" width="3.0" height="1.6" fill="#7e6a6a"/>
<rect x="270.5" y="32.0" width="4.7" height="4.3" fill="#bc8a86"/>
<rect x="257.4" y="20.4" width="4.1" height="1.9" fill="#302838"/>
<rect x="208.3" y="2.3" width="3.2" height="1.6" fill="#cc9890"/>
<rect x="270.9" y="0.4" width="1.2" height="3.7" fill="#c08680"/>
<rect x="321.4" y="15.5" width="1.5" height="1.3" fill="#c08680"/>
<rect x="160.0" y="19.4" width="3.1" height="2.1" fill="#d6cac6"/>
<rect x="244.7" y="16.0" width="1.6" height="1.7" fill="#8a7a7a"/>
<rect x="122.5" y="3.0" width="4.5" height="2.9" fill="#6a6068"/>
<rect x="253.3" y="31.5" width="1.4" height="1.2" fill="#e2dad6"/>
<rect x="148.2" y="9.3" width="2.2" height="1.3" fill="#8a7a7a"/>
<rect x="308.5" y="37.0" width="1.4" height="1.9" fill="#443a44"/>
<rect x="120.4" y="8.6" width="2.6" height="3.9" fill="#cc9890"/>
<rect x="214.5" y="24.2" width="2.1" height="1.4" fill="#5a4a52"/>
<rect x="186.5" y="35.1" width="4.1" height="2.3" fill="#d0a49c"/>
<rect x="331.0" y="19.3" width="4.5" height="2.1" fill="#443a44"/>
<rect x="267.2" y="22.8" width="2.6" height="2.6" fill="#d89a94"/>
<rect x="121.0" y="33.9" width="1.5" height="1.8" fill="#443a44"/>
<rect x="157.8" y="37.9" width="2.2" height="3.2" fill="#8a7a7a"/>
<rect x="191.0" y="34.0" width="2.4" height="3.5" fill="#8a7a7a"/>
<rect x="210.6" y="35.6" width="3.1" height="2.6" fill="#6a6068"/>
<rect x="179.5" y="9.2" width="1.3" height="3.5" fill="#e2dad6"/>
<rect x="296.3" y="9.4" width="1.7" height="1.9" fill="#d6cac6"/>
<rect x="240.3" y="18.2" width="4.0" height="2.0" fill="#c48a84"/>
<rect x="195.1" y="28.2" width="2.5" height="4.6" fill="#302838"/>
<rect x="182.6" y="18.6" width="1.9" height="4.2" fill="#d6cac6"/>
<rect x="327.0" y="38.9" width="3.3" height="2.7" fill="#c48a84"/>
<rect x="235.8" y="15.8" width="3.0" height="1.6" fill="#8a7a7a"/>
<rect x="267.8" y="3.6" width="4.2" height="3.8" fill="#443a44"/>
<rect x="122.4" y="28.0" width="1.7" height="1.3" fill="#b4746e"/>
<rect x="271.6" y="30.3" width="2.0" height="1.9" fill="#8a7a7a"/>
<rect x="131.3" y="35.6" width="4.0" height="3.9" fill="#302838"/>
<rect x="130.8" y="12.1" width="2.0" height="1.6" fill="#443a44"/>
<rect x="179.2" y="15.7" width="4.4" height="3.9" fill="#d6cac6"/>
<rect x="325.8" y="6.9" width="2.5" height="4.0" fill="#c48a84"/>
<rect x="316.9" y="1.0" width="3.7" height="2.8" fill="#443a44"/>
<rect x="194.9" y="24.5" width="1.8" height="1.6" fill="#b49c8c"/>
<rect x="275.6" y="1.6" width="1.3" height="1.8" fill="#302838"/>
<rect x="285.6" y="6.1" width="3.8" height="3.1" fill="#5a4a52"/>
<rect x="242.5" y="8.9" width="2.9" height="3.0" fill="#bc8a86"/>
<rect x="266.1" y="22.4" width="4.5" height="1.6" fill="#7e6a6a"/>
<rect x="317.8" y="34.1" width="3.2" height="3.6" fill="#b49c8c"/>
<rect x="268.6" y="1.4" width="2.3" height="3.9" fill="#c48a84"/>
<rect x="283.9" y="3.4" width="3.6" height="2.6" fill="#b49c8c"/>
<rect x="179.0" y="3.5" width="4.5" height="2.7" fill="#e2dad6"/>
<rect x="270.9" y="28.8" width="4.1" height="3.4" fill="#6a6068"/>
<rect x="229.9" y="26.4" width="1.9" height="3.6" fill="#d6cac6"/>
<rect x="225.7" y="7.4" width="4.5" height="4.1" fill="#d0a49c"/>
<rect x="155.1" y="6.4" width="3.9" height="2.0" fill="#d0a49c"/>
<rect x="171.9" y="2.3" width="2.5" height="2.6" fill="#302838"/>
<rect x="258.6" y="5.4" width="3.6" height="2.9" fill="#d89a94"/>
<rect x="169.3" y="9.4" width="3.0" height="2.8" fill="#c48a84"/>
<rect x="272.4" y="5.2" width="3.7" height="3.3" fill="#b49c8c"/>
<rect x="190.7" y="31.8" width="3.1" height="3.9" fill="#5a4a52"/>
<rect x="267.7" y="6.0" width="4.6" height="4.1" fill="#443a44"/>
<rect x="302.2" y="4.5" width="2.2" height="2.5" fill="#302838"/>
<rect x="125.7" y="34.9" width="2.3" height="1.6" fill="#7e6a6a"/>
<rect x="216.4" y="4.4" width="2.3" height="2.8" fill="#c48a84"/>
<rect x="180.8" y="21.7" width="1.4" height="2.8" fill="#d89a94"/>
<rect x="134.8" y="28.0" width="4.6" height="3.2" fill="#8a7a7a"/>
<rect x="260.5" y="37.3" width="2.9" height="3.9" fill="#e2dad6"/>
<rect x="117.9" y="35.9" width="3.5" height="3.4" fill="#d0a49c"/>
<rect x="262.3" y="3.0" width="3.8" height="1.3" fill="#443a44"/>
<rect x="304.1" y="11.6" width="1.9" height="3.4" fill="#5a4a52"/>
<rect x="138.9" y="28.0" width="2.3" height="3.4" fill="#443a44"/>
<rect x="157.3" y="32.2" width="2.3" height="2.5" fill="#c48a84"/>
<rect x="303.7" y="9.9" width="1.4" height="1.6" fill="#443a44"/>
<rect x="318.8" y="36.9" width="2.9" height="2.9" fill="#5a4a52"/>
<rect x="339.0" y="23.5" width="3.4" height="1.7" fill="#b49c8c"/>
<rect x="152.7" y="17.3" width="4.6" height="1.5" fill="#cc9890"/>
<rect x="306.5" y="18.7" width="2.0" height="2.5" fill="#cc9890"/>
<rect x="304.3" y="33.4" width="4.0" height="2.7" fill="#7e6a6a"/>
<rect x="132.1" y="2.2" width="3.7" height="4.3" fill="#b4746e"/>
<rect x="214.3" y="26.0" width="4.1" height="4.4" fill="#5a4a52"/>
<rect x="200.9" y="0.2" width="4.0" height="3.6" fill="#302838"/>
<rect x="221.0" y="21.2" width="3.0" height="2.7" fill="#d6cac6"/>
<rect x="334.3" y="37.5" width="3.4" height="4.0" fill="#cc9890"/>
<rect x="277.9" y="12.9" width="3.5" height="3.2" fill="#bc8a86"/>
<rect x="329.4" y="18.7" width="3.5" height="2.2" fill="#e2dad6"/>
<rect x="234.8" y="24.7" width="4.2" height="2.0" fill="#6a6068"/>
<rect x="270.9" y="5.7" width="3.2" height="3.1" fill="#bc8a86"/>
<rect x="196.6" y="9.4" width="2.7" height="2.1" fill="#b49c8c"/>
<rect x="156.4" y="34.7" width="3.1" height="1.6" fill="#d0a49c"/>
<rect x="261.5" y="7.3" width="3.5" height="3.7" fill="#b49c8c"/>
<rect x="240.1" y="8.8" width="3.2" height="1.6" fill="#b4746e"/>
<rect x="306.7" y="26.5" width="4.0" height="1.7" fill="#8a7a7a"/>
<rect x="256.4" y="37.5" width="3.0" height="2.8" fill="#443a44"/>
<rect x="237.9" y="37.8" width="1.9" height="2.9" fill="#b4746e"/>
<rect x="146.6" y="30.3" width="1.4" height="2.0" fill="#c48a84"/>
<rect x="125.3" y="27.4" width="4.5" height="2.8" fill="#8a7a7a"/>
<rect x="274.5" y="16.6" width="4.3" height="3.4" fill="#302838"/>
<rect x="242.1" y="35.8" width="4.2" height="1.8" fill="#e2dad6"/>
<rect x="296.1" y="28.7" width="1.2" height="2.1" fill="#b49c8c"/>
<rect x="199.6" y="28.8" width="4.5" height="3.7" fill="#cc9890"/>
<rect x="298.9" y="13.8" width="2.4" height="2.3" fill="#8a7a7a"/>
<rect x="123.6" y="35.5" width="2.0" height="2.4" fill="#6a6068"/>
<rect x="120.8" y="38.6" width="2.7" height="4.0" fill="#d89a94"/>
<rect x="140.7" y="31.2" width="1.8" height="3.1" fill="#7e6a6a"/>
<rect x="311.7" y="26.1" width="4.1" height="3.3" fill="#d0a49c"/>
<rect x="236.6" y="26.9" width="4.0" height="4.5" fill="#c08680"/>
<rect x="121.5" y="38.8" width="2.9" height="2.9" fill="#cc9890"/>
<rect x="295.3" y="1.4" width="1.8" height="4.1" fill="#443a44"/>
<rect x="304.8" y="37.7" width="3.6" height="2.8" fill="#b49c8c"/>
<rect x="311.6" y="23.8" width="1.5" height="2.4" fill="#302838"/>
<rect x="185.7" y="5.1" width="3.4" height="1.9" fill="#c48a84"/>
<rect x="278.9" y="12.9" width="2.8" height="4.5" fill="#e2dad6"/>
<rect x="117.3" y="22.6" width="2.4" height="1.3" fill="#6a6068"/>
<rect x="312.3" y="23.7" width="3.4" height="3.7" fill="#d6cac6"/>
<rect x="177.1" y="10.7" width="3.0" height="2.1" fill="#d6cac6"/>
<rect x="338.2" y="1.3" width="3.2" height="3.9" fill="#302838"/>
<rect x="289.4" y="24.7" width="3.4" height="2.5" fill="#7e6a6a"/>
<rect x="293.6" y="9.3" width="4.0" height="1.7" fill="#b4746e"/>
<rect x="184.1" y="29.8" width="3.8" height="3.0" fill="#b49c8c"/>
<rect x="194.5" y="21.5" width="2.6" height="1.4" fill="#e2dad6"/>
<rect x="266.5" y="34.5" width="3.9" height="3.0" fill="#b49c8c"/>
<rect x="297.3" y="38.9" width="1.7" height="1.9" fill="#6a6068"/>
<rect x="206.7" y="15.4" width="3.9" height="4.5" fill="#b4746e"/>
<rect x="148.2" y="28.1" width="2.1" height="3.2" fill="#e2dad6"/>
<rect x="132.5" y="7.4" width="4.4" height="3.2" fill="#7e6a6a"/>
<rect x="246.0" y="38.5" width="2.4" height="3.9" fill="#bc8a86"/>
<rect x="277.5" y="36.0" width="4.1" height="2.3" fill="#5a4a52"/>
<rect x="177.8" y="10.0" width="1.3" height="1.8" fill="#d0a49c"/>
<rect x="169.1" y="0.8" width="1.4" height="2.8" fill="#7e6a6a"/>
<rect x="309.6" y="25.3" width="1.9" height="3.8" fill="#d6cac6"/>
<rect x="250.6" y="3.1" width="4.0" height="4.3" fill="#e2dad6"/>
<rect x="277.1" y="0.2" width="2.1" height="3.4" fill="#c08680"/>
<rect x="259.3" y="36.0" width="1.9" height="2.3" fill="#c08680"/>
<rect x="261.4" y="15.8" width="3.6" height="2.4" fill="#cc9890"/>
<rect x="309.4" y="31.1" width="1.5" height="3.3" fill="#d89a94"/>
<rect x="337.3" y="15.6" width="4.5" height="4.3" fill="#c08680"/>
<rect x="323.3" y="22.0" width="4.7" height="1.4" fill="#e2dad6"/>
<rect x="151.1" y="0.7" width="1.9" height="3.1" fill="#b4746e"/>
<rect x="196.2" y="14.1" width="2.4" height="3.6" fill="#d6cac6"/>
<rect x="263.2" y="23.5" width="2.4" height="3.8" fill="#d0a49c"/>
<rect x="298.2" y="18.6" width="1.3" height="3.5" fill="#6a6068"/>
<rect x="241.3" y="14.1" width="3.1" height="2.2" fill="#d0a49c"/>
<rect x="118.0" y="18.6" width="3.5" height="3.9" fill="#c48a84"/>
<rect x="149.7" y="24.5" width="2.6" height="4.6" fill="#c08680"/>
<rect x="255.9" y="4.8" width="3.1" height="1.9" fill="#5a4a52"/>
<rect x="174.0" y="23.6" width="3.8" height="4.4" fill="#5a4a52"/>
<rect x="234.4" y="13.7" width="3.7" height="2.7" fill="#d89a94"/>
<rect x="163.7" y="35.6" width="4.4" height="2.6" fill="#302838"/>
<rect x="188.5" y="35.2" width="1.6" height="3.8" fill="#b4746e"/>
<rect x="296.7" y="35.6" width="3.6" height="2.4" fill="#b49c8c"/>
<rect x="242.4" y="16.0" width="4.4" height="4.5" fill="#b49c8c"/>
<rect x="122.9" y="0.8" width="3.7" height="2.0" fill="#c48a84"/>
<rect x="161.5" y="29.6" width="3.4" height="2.2" fill="#d89a94"/>
<rect x="164.5" y="22.2" width="1.7" height="4.2" fill="#d0a49c"/>
<rect x="329.8" y="5.3" width="2.3" height="1.5" fill="#c08680"/>
<rect x="224.8" y="34.7" width="1.8" height="3.6" fill="#6a6068"/>
<rect x="163.5" y="2.0" width="3.9" height="4.2" fill="#c48a84"/>
<rect x="126.3" y="30.2" width="2.7" height="2.7" fill="#d6cac6"/>
<rect x="338.8" y="11.6" width="1.3" height="1.6" fill="#c08680"/>
<rect x="145.9" y="11.8" width="3.0" height="2.4" fill="#5a4a52"/>
<rect x="220.0" y="15.5" width="2.6" height="3.4" fill="#443a44"/>
<rect x="313.6" y="38.2" width="1.3" height="2.0" fill="#c08680"/>
<rect x="124.5" y="19.7" width="2.0" height="2.7" fill="#8a7a7a"/>
<rect x="279.2" y="1.9" width="4.3" height="1.4" fill="#8a7a7a"/>
<rect x="143.0" y="19.0" width="1.7" height="2.7" fill="#5a4a52"/>
<rect x="166.2" y="21.1" width="3.4" height="3.1" fill="#8a7a7a"/>
<rect x="234.7" y="32.7" width="4.6" height="1.5" fill="#302838"/>
<rect x="307.1" y="37.9" width="2.0" height="1.5" fill="#5a4a52"/>
<rect x="119.4" y="10.5" width="4.6" height="1.9" fill="#cc9890"/>
<rect x="207.4" y="21.7" width="2.5" height="1.2" fill="#cc9890"/>
<rect x="262.3" y="21.2" width="3.1" height="3.6" fill="#d0a49c"/>
<rect x="205.4" y="12.4" width="2.7" height="4.6" fill="#443a44"/>
<rect x="286.5" y="34.4" width="4.0" height="4.3" fill="#c08680"/>
<rect x="169.6" y="19.5" width="4.7" height="3.6" fill="#443a44"/>
<rect x="338.0" y="32.2" width="3.5" height="1.5" fill="#cc9890"/>
<rect x="319.5" y="1.9" width="3.6" height="2.3" fill="#6a6068"/>
<rect x="239.0" y="12.3" width="4.6" height="1.2" fill="#d89a94"/>
<rect x="230.3" y="23.1" width="4.7" height="2.0" fill="#443a44"/>
<rect x="195.6" y="2.5" width="4.6" height="2.1" fill="#e2dad6"/>
<rect x="132.1" y="31.1" width="3.5" height="4.4" fill="#d0a49c"/>
<rect x="174.8" y="32.8" width="4.2" height="2.4" fill="#d89a94"/>
<rect x="243.8" y="39.0" width="1.4" height="3.9" fill="#c48a84"/>
<rect x="233.4" y="20.6" width="4.0" height="2.0" fill="#5a4a52"/>
<rect x="150.2" y="25.8" width="1.8" height="4.5" fill="#cc9890"/>
<rect x="188.1" y="14.1" width="4.2" height="2.7" fill="#bc8a86"/>
<rect x="150.5" y="9.8" width="1.6" height="2.4" fill="#7e6a6a"/>
<rect x="217.4" y="3.4" width="2.6" height="4.7" fill="#8a7a7a"/>
<rect x="216.6" y="18.7" width="4.0" height="3.9" fill="#d6cac6"/>
<rect x="117.3" y="5.1" width="2.9" height="3.5" fill="#c48a84"/>
<rect x="233.2" y="31.3" width="2.1" height="3.1" fill="#c08680"/>
<rect x="243.8" y="2.3" width="1.8" height="3.7" fill="#d0a49c"/>
<rect x="321.4" y="10.0" width="2.1" height="2.7" fill="#d89a94"/>
<rect x="308.4" y="7.9" width="2.7" height="4.0" fill="#c48a84"/>
<rect x="322.2" y="28.0" width="2.5" height="1.3" fill="#7e6a6a"/>
<rect x="333.2" y="16.8" width="3.3" height="2.1" fill="#b49c8c"/>
<rect x="202.3" y="22.6" width="4.4" height="1.9" fill="#c48a84"/>
<rect x="130.2" y="7.9" width="4.2" height="1.5" fill="#6a6068"/>
<rect x="201.0" y="20.5" width="2.9" height="4.4" fill="#c08680"/>
<rect x="140.1" y="22.0" width="4.5" height="3.7" fill="#bc8a86"/>
<rect x="208.9" y="18.5" width="4.3" height="2.7" fill="#d89a94"/>
<rect x="146.3" y="29.4" width="1.2" height="2.0" fill="#302838"/>
<rect x="206.0" y="1.6" width="3.6" height="3.1" fill="#443a44"/>
<rect x="288.5" y="4.6" width="2.0" height="1.5" fill="#c08680"/>
<rect x="138.8" y="3.4" width="3.8" height="3.2" fill="#cc9890"/>
<rect x="300.6" y="7.8" width="2.4" height="4.2" fill="#bc8a86"/>
<rect x="305.0" y="5.5" width="2.6" height="1.4" fill="#d6cac6"/>
<rect x="187.8" y="7.4" width="4.6" height="1.9" fill="#d0a49c"/>
<rect x="232.5" y="3.4" width="2.5" height="3.5" fill="#7e6a6a"/>
<rect x="240.5" y="19.9" width="2.7" height="1.4" fill="#7e6a6a"/>
<rect x="171.7" y="14.8" width="2.7" height="3.1" fill="#7e6a6a"/>
<rect x="161.2" y="2.0" width="3.1" height="2.5" fill="#6a6068"/>
<rect x="263.0" y="27.7" width="1.7" height="4.5" fill="#e2dad6"/>
<rect x="160.9" y="35.9" width="3.1" height="1.4" fill="#e2dad6"/>
<rect x="117.9" y="2.6" width="4.5" height="4.1" fill="#cc9890"/>
<rect x="177.3" y="31.0" width="2.2" height="3.7" fill="#6a6068"/>
<rect x="206.9" y="28.4" width="1.9" height="1.9" fill="#5a4a52"/>
<rect x="213.2" y="24.9" width="1.4" height="4.2" fill="#b4746e"/>
<rect x="298.4" y="19.4" width="1.2" height="3.7" fill="#5a4a52"/>
<rect x="227.6" y="26.3" width="3.6" height="2.2" fill="#302838"/>
<rect x="235.7" y="6.2" width="3.9" height="3.7" fill="#8a7a7a"/>
<rect x="220.3" y="7.9" width="1.5" height="1.4" fill="#b49c8c"/>
<rect x="263.6" y="10.0" width="4.4" height="3.6" fill="#d6cac6"/>
<rect x="310.5" y="36.0" width="1.7" height="1.8" fill="#6a6068"/>
<rect x="181.8" y="9.1" width="3.2" height="2.3" fill="#d6cac6"/>
<rect x="185.3" y="10.1" width="3.1" height="2.0" fill="#b49c8c"/>
<rect x="203.7" y="1.3" width="2.5" height="3.4" fill="#b49c8c"/>
<rect x="262.7" y="27.1" width="1.9" height="1.7" fill="#5a4a52"/>
<rect x="212.3" y="26.5" width="1.6" height="4.1" fill="#8a7a7a"/>
<rect x="263.3" y="8.2" width="3.5" height="3.0" fill="#b4746e"/>
<rect x="181.1" y="13.6" width="3.8" height="2.9" fill="#b4746e"/>
<rect x="160.9" y="10.9" width="2.3" height="3.2" fill="#b4746e"/>
<rect x="161.1" y="18.3" width="3.9" height="3.9" fill="#b49c8c"/>
<rect x="245.6" y="11.7" width="3.2" height="1.6" fill="#c08680"/>
<rect x="193.1" y="36.8" width="3.5" height="1.4" fill="#e2dad6"/>
<rect x="194.5" y="18.8" width="2.4" height="2.5" fill="#8a7a7a"/>
<rect x="292.5" y="11.6" width="1.4" height="3.2" fill="#8a7a7a"/>
<rect x="283.3" y="4.4" width="1.8" height="2.6" fill="#cc9890"/>
<rect x="123.6" y="20.0" width="1.5" height="3.5" fill="#d6cac6"/>
<rect x="209.0" y="32.7" width="1.5" height="3.7" fill="#5a4a52"/>
<rect x="196.5" y="25.8" width="1.5" height="1.2" fill="#d89a94"/>
<rect x="184.0" y="10.2" width="1.6" height="2.0" fill="#d6cac6"/>
<rect x="227.1" y="20.9" width="1.6" height="2.8" fill="#5a4a52"/>
<rect x="243.3" y="1.6" width="2.1" height="4.5" fill="#7e6a6a"/>
<rect x="206.4" y="7.9" width="1.6" height="2.0" fill="#b49c8c"/>
<rect x="315.5" y="0.6" width="4.5" height="2.9" fill="#302838"/>
<rect x="270.3" y="8.9" width="3.8" height="1.7" fill="#d0a49c"/>
<rect x="339.6" y="16.5" width="3.4" height="1.6" fill="#8a7a7a"/>
<rect x="134.9" y="22.6" width="2.0" height="3.3" fill="#cc9890"/>
<rect x="300.0" y="2.8" width="2.4" height="1.5" fill="#302838"/>
<rect x="254.5" y="27.0" width="4.1" height="2.4" fill="#6a6068"/>
<rect x="248.6" y="7.1" width="2.3" height="4.5" fill="#bc8a86"/>
<rect x="123.2" y="30.8" width="1.7" height="3.0" fill="#5a4a52"/>
<rect x="149.9" y="13.4" width="1.7" height="1.9" fill="#b49c8c"/>
<rect x="269.7" y="27.6" width="1.4" height="1.2" fill="#d89a94"/>
<rect x="124.5" y="20.5" width="2.4" height="1.4" fill="#b4746e"/>
<rect x="160.6" y="24.4" width="4.2" height="4.0" fill="#b4746e"/>
<rect x="261.8" y="37.9" width="3.2" height="4.0" fill="#d89a94"/>
<rect x="266.7" y="29.1" width="1.7" height="4.1" fill="#7e6a6a"/>
<rect x="318.7" y="29.1" width="4.1" height="4.0" fill="#5a4a52"/>
<rect x="213.5" y="32.2" width="3.9" height="4.2" fill="#7e6a6a"/>
<rect x="283.6" y="23.2" width="3.5" height="3.4" fill="#b4746e"/>
<rect x="332.9" y="30.7" width="2.1" height="4.1" fill="#b49c8c"/>
<rect x="169.8" y="22.9" width="3.2" height="4.3" fill="#cc9890"/>
<rect x="203.8" y="30.6" width="4.0" height="3.6" fill="#e2dad6"/>
<rect x="301.0" y="15.8" width="1.5" height="3.5" fill="#e2dad6"/>
<rect x="264.6" y="35.3" width="2.7" height="2.3" fill="#7e6a6a"/>
<rect x="225.5" y="0.6" width="1.6" height="4.0" fill="#bc8a86"/>
<rect x="208.0" y="11.7" width="1.7" height="3.1" fill="#b4746e"/>
<rect x="195.2" y="32.9" width="3.4" height="2.2" fill="#b4746e"/>
<rect x="338.3" y="7.3" width="4.3" height="2.6" fill="#b49c8c"/>
<rect x="143.0" y="26.6" width="1.3" height="4.1" fill="#5a4a52"/>
<rect x="203.3" y="13.0" width="1.7" height="1.8" fill="#c48a84"/>
<rect x="315.3" y="23.8" width="4.3" height="2.6" fill="#d89a94"/>
<rect x="187.3" y="34.2" width="4.0" height="3.3" fill="#5a4a52"/>
<rect x="203.6" y="0.4" width="4.2" height="1.6" fill="#b49c8c"/>
<rect x="217.8" y="31.6" width="2.1" height="2.4" fill="#8a7a7a"/>
<rect x="336.5" y="28.6" width="3.8" height="3.5" fill="#d6cac6"/>
<rect x="324.0" y="34.9" width="3.5" height="1.5" fill="#e2dad6"/>
<rect x="215.5" y="37.4" width="2.5" height="3.5" fill="#443a44"/>
<rect x="326.1" y="31.5" width="1.4" height="3.5" fill="#d89a94"/>
<rect x="197.5" y="38.1" width="1.4" height="4.1" fill="#8a7a7a"/>
<rect x="240.9" y="17.5" width="3.8" height="4.3" fill="#6a6068"/>
<rect x="123.9" y="12.7" width="1.7" height="4.5" fill="#d0a49c"/>
<rect x="148.4" y="22.9" width="3.2" height="1.4" fill="#443a44"/>
<rect x="154.9" y="23.0" width="4.6" height="3.4" fill="#b49c8c"/>
<rect x="181.2" y="21.2" width="2.7" height="4.6" fill="#b4746e"/>
<rect x="296.3" y="26.4" width="2.5" height="4.6" fill="#c48a84"/>
<rect x="270.8" y="10.8" width="1.8" height="3.2" fill="#cc9890"/>
<rect x="293.8" y="13.5" width="1.7" height="3.0" fill="#cc9890"/>
<rect x="152.3" y="28.8" width="1.8" height="2.3" fill="#cc9890"/>
<rect x="247.5" y="37.9" width="3.9" height="2.5" fill="#5a4a52"/>
<rect x="177.0" y="34.8" width="2.9" height="3.4" fill="#6a6068"/>
<rect x="206.3" y="26.6" width="2.5" height="2.3" fill="#d89a94"/>
<rect x="175.8" y="8.0" width="4.4" height="2.8" fill="#bc8a86"/>
<rect x="258.7" y="30.4" width="2.3" height="1.7" fill="#d89a94"/>
<rect x="264.1" y="33.1" width="2.6" height="1.5" fill="#443a44"/>
<rect x="197.3" y="35.8" width="3.1" height="2.2" fill="#8a7a7a"/>
<rect x="174.2" y="30.1" width="1.3" height="4.1" fill="#7e6a6a"/>
<rect x="195.2" y="36.7" width="2.1" height="2.1" fill="#b4746e"/>
<rect x="312.1" y="3.8" width="3.3" height="4.1" fill="#8a7a7a"/>
<rect x="324.3" y="6.5" width="1.8" height="3.7" fill="#8a7a7a"/>
<rect x="289.5" y="15.4" width="4.5" height="3.8" fill="#e2dad6"/>
<rect x="205.6" y="19.5" width="2.4" height="4.2" fill="#d6cac6"/>
<rect x="235.1" y="20.3" width="3.5" height="4.4" fill="#d6cac6"/>
<rect x="163.7" y="26.6" width="4.4" height="1.4" fill="#c08680"/>
<rect x="306.8" y="26.0" width="3.2" height="2.6" fill="#d0a49c"/>
<rect x="291.9" y="26.5" width="4.2" height="1.7" fill="#b49c8c"/>
<rect x="266.4" y="29.4" width="3.0" height="4.3" fill="#cc9890"/>
<rect x="282.4" y="32.0" width="3.5" height="4.3" fill="#d6cac6"/>
<rect x="261.0" y="34.1" width="2.5" height="4.3" fill="#b4746e"/>
<rect x="288.8" y="23.6" width="3.0" height="3.3" fill="#b49c8c"/>
<rect x="185.3" y="14.0" width="3.2" height="4.3" fill="#b4746e"/>
<rect x="196.6" y="27.3" width="1.5" height="4.1" fill="#e2dad6"/>
<rect x="164.9" y="17.9" width="3.9" height="2.8" fill="#cc9890"/>
<rect x="334.9" y="23.0" width="3.3" height="1.3" fill="#6a6068"/>
<rect x="140.8" y="8.8" width="3.4" height="2.4" fill="#e2dad6"/>
<rect x="234.9" y="9.0" width="3.1" height="4.1" fill="#7e6a6a"/>
<rect x="304.0" y="31.5" width="3.1" height="1.3" fill="#5a4a52"/>
<rect x="122.4" y="19.7" width="2.7" height="1.4" fill="#d0a49c"/>
<rect x="278.3" y="22.8" width="2.6" height="3.0" fill="#bc8a86"/>
<rect x="166.7" y="33.8" width="4.7" height="4.0" fill="#e2dad6"/>
<rect x="263.4" y="9.8" width="3.4" height="3.2" fill="#bc8a86"/>
<rect x="217.7" y="26.6" width="3.7" height="2.8" fill="#e2dad6"/>
<rect x="253.9" y="4.4" width="1.8" height="3.9" fill="#b4746e"/>
<rect x="280.9" y="20.1" width="2.7" height="1.9" fill="#302838"/>
<rect x="289.2" y="7.8" width="3.8" height="4.1" fill="#7e6a6a"/>
<rect x="283.5" y="37.0" width="4.4" height="3.7" fill="#c08680"/>
<rect x="130.1" y="8.0" width="1.2" height="4.2" fill="#d0a49c"/>
<rect x="240.9" y="24.5" width="3.2" height="2.3" fill="#c48a84"/>
<rect x="184.5" y="1.7" width="1.8" height="2.4" fill="#c08680"/>
<rect x="296.2" y="17.7" width="1.6" height="1.6" fill="#d6cac6"/>
<rect x="197.5" y="34.5" width="2.9" height="1.5" fill="#e2dad6"/>
<rect x="294.0" y="18.6" width="4.1" height="1.6" fill="#8a7a7a"/>
<rect x="234.3" y="9.8" width="2.6" height="2.4" fill="#c08680"/>
<rect x="326.0" y="7.5" width="2.2" height="4.1" fill="#bc8a86"/>
<rect x="289.5" y="28.3" width="1.8" height="4.3" fill="#bc8a86"/>
<rect x="146.0" y="0.5" width="1.9" height="3.2" fill="#443a44"/>
<rect x="122.2" y="31.7" width="4.6" height="1.5" fill="#cc9890"/>
<rect x="161.7" y="22.3" width="4.4" height="4.2" fill="#e2dad6"/>
<rect x="255.9" y="34.5" width="2.9" height="3.4" fill="#302838"/>
<rect x="117.6" y="8.0" width="2.4" height="4.3" fill="#8a7a7a"/>
<rect x="248.4" y="4.9" width="1.9" height="2.8" fill="#6a6068"/>
<rect x="286.6" y="22.2" width="3.7" height="4.2" fill="#5a4a52"/>
<rect x="205.6" y="26.2" width="3.7" height="2.0" fill="#d89a94"/>
<rect x="271.0" y="18.4" width="1.7" height="4.4" fill="#443a44"/>
<rect x="130.1" y="9.3" width="4.7" height="2.0" fill="#443a44"/>
<rect x="242.8" y="29.1" width="2.0" height="3.8" fill="#cc9890"/>
<rect x="170.3" y="35.4" width="1.9" height="1.2" fill="#6a6068"/>
<rect x="126.9" y="9.4" width="4.5" height="2.0" fill="#cc9890"/>
<rect x="324.4" y="24.9" width="4.4" height="2.1" fill="#d6cac6"/>
<rect x="220.8" y="18.7" width="4.5" height="3.9" fill="#8a7a7a"/>
<rect x="157.9" y="31.5" width="1.8" height="3.0" fill="#8a7a7a"/>
<rect x="230.2" y="37.3" width="2.5" height="4.3" fill="#b4746e"/>
<rect x="306.7" y="21.7" width="4.1" height="3.0" fill="#b4746e"/>
<rect x="274.1" y="25.8" width="3.4" height="2.8" fill="#c08680"/>
<rect x="241.4" y="8.1" width="1.9" height="3.0" fill="#6a6068"/>
<rect x="162.8" y="27.6" width="3.8" height="3.6" fill="#8a7a7a"/>
<rect x="253.2" y="3.4" width="3.0" height="3.6" fill="#b4746e"/>
<rect x="279.6" y="33.1" width="4.2" height="1.6" fill="#c48a84"/>
<rect x="177.4" y="12.1" width="2.2" height="2.9" fill="#e2dad6"/>
<rect x="288.2" y="0.3" width="1.5" height="1.6" fill="#302838"/>
<rect x="232.5" y="17.8" width="2.6" height="3.3" fill="#302838"/>
<rect x="321.3" y="28.6" width="4.0" height="4.4" fill="#cc9890"/>
<rect x="276.5" y="1.2" width="3.6" height="4.2" fill="#bc8a86"/>
<rect x="295.5" y="2.1" width="3.4" height="2.2" fill="#d0a49c"/>
<rect x="274.3" y="9.9" width="2.3" height="2.4" fill="#e2dad6"/>
<rect x="201.6" y="6.3" width="1.8" height="4.5" fill="#d89a94"/>
<rect x="286.8" y="32.6" width="4.7" height="3.8" fill="#d0a49c"/>
<rect x="296.0" y="0.5" width="3.1" height="2.4" fill="#c48a84"/>
<rect x="322.3" y="12.8" width="3.9" height="3.9" fill="#e2dad6"/>
<rect x="294.0" y="20.7" width="1.6" height="4.1" fill="#e2dad6"/>
<rect x="211.2" y="13.1" width="1.4" height="1.6" fill="#6a6068"/>
<rect x="152.1" y="20.7" width="3.5" height="3.1" fill="#bc8a86"/>
<rect x="324.6" y="20.2" width="3.9" height="3.4" fill="#302838"/>
<rect x="164.8" y="29.4" width="4.3" height="3.7" fill="#bc8a86"/>
<rect x="276.3" y="38.6" width="1.8" height="2.7" fill="#5a4a52"/>
<rect x="270.7" y="29.1" width="3.8" height="2.1" fill="#d0a49c"/>
<rect x="331.2" y="3.6" width="4.2" height="3.4" fill="#d6cac6"/>
<rect x="263.0" y="23.3" width="3.6" height="2.3" fill="#b4746e"/>
<rect x="279.4" y="20.9" width="1.5" height="1.5" fill="#8a7a7a"/>
<rect x="277.8" y="25.3" width="3.0" height="4.3" fill="#6a6068"/>
<rect x="155.8" y="3.9" width="2.3" height="2.6" fill="#5a4a52"/>
<rect x="215.7" y="28.4" width="1.5" height="4.5" fill="#e2dad6"/>
<rect x="188.3" y="8.0" width="2.6" height="3.9" fill="#8a7a7a"/>
<rect x="307.5" y="31.3" width="3.5" height="2.2" fill="#c08680"/>
<rect x="305.4" y="2.8" width="1.5" height="3.9" fill="#7e6a6a"/>
<rect x="264.1" y="7.0" width="1.7" height="1.5" fill="#cc9890"/>
<rect x="201.8" y="25.4" width="3.2" height="2.0" fill="#b4746e"/>
<rect x="182.3" y="10.5" width="4.5" height="4.5" fill="#c48a84"/>
<rect x="197.5" y="28.2" width="1.7" height="4.0" fill="#d0a49c"/>
<rect x="199.0" y="6.5" width="3.5" height="4.3" fill="#5a4a52"/>
<rect x="179.9" y="14.9" width="3.9" height="2.0" fill="#302838"/>
<rect x="314.6" y="29.7" width="4.2" height="2.0" fill="#d89a94"/>
<rect x="174.9" y="0.3" width="1.5" height="2.5" fill="#c48a84"/>
<rect x="168.6" y="1.1" width="2.7" height="1.6" fill="#6a6068"/>
<rect x="240.4" y="19.2" width="2.6" height="2.9" fill="#5a4a52"/>
<rect x="319.8" y="16.6" width="1.4" height="1.9" fill="#d0a49c"/>
<rect x="196.9" y="18.3" width="4.5" height="3.1" fill="#b4746e"/>
<rect x="230.1" y="18.9" width="2.0" height="3.3" fill="#443a44"/>
<rect x="140.7" y="36.8" width="3.0" height="2.0" fill="#5a4a52"/>
<rect x="230.3" y="12.3" width="1.6" height="2.9" fill="#6a6068"/>
<rect x="323.0" y="18.0" width="3.8" height="1.5" fill="#6a6068"/>
<rect x="257.3" y="3.8" width="2.2" height="4.0" fill="#b4746e"/>
<rect x="142.8" y="38.4" width="2.9" height="1.8" fill="#c08680"/>
<rect x="256.6" y="31.7" width="4.4" height="3.5" fill="#cc9890"/>
<rect x="236.3" y="9.1" width="2.9" height="3.3" fill="#c48a84"/>
<rect x="148.5" y="31.3" width="4.5" height="3.8" fill="#c48a84"/>
<rect x="263.0" y="25.4" width="3.6" height="1.3" fill="#6a6068"/>
<rect x="318.0" y="3.2" width="2.0" height="1.3" fill="#6a6068"/>
<rect x="334.5" y="32.7" width="2.3" height="2.3" fill="#302838"/>
<rect x="326.4" y="15.7" width="3.6" height="1.2" fill="#d89a94"/>
<rect x="168.2" y="18.6" width="3.0" height="4.5" fill="#d89a94"/>
<rect x="266.7" y="8.3" width="4.4" height="1.9" fill="#d89a94"/>
<rect x="161.2" y="39.0" width="2.8" height="2.0" fill="#e2dad6"/>
<rect x="123.1" y="6.9" width="2.6" height="3.7" fill="#c48a84"/>
<rect x="288.5" y="9.3" width="4.1" height="1.7" fill="#d0a49c"/>
<rect x="251.9" y="18.5" width="3.1" height="2.6" fill="#d0a49c"/>
<rect x="169.9" y="4.7" width="4.6" height="1.7" fill="#d6cac6"/>
<rect x="339.7" y="5.3" width="2.3" height="3.8" fill="#5a4a52"/>
<rect x="168.5" y="6.5" width="3.2" height="2.8" fill="#bc8a86"/>
<rect x="172.7" y="22.2" width="2.0" height="1.7" fill="#d0a49c"/>
<rect x="332.8" y="27.8" width="1.5" height="2.7" fill="#8a7a7a"/>
<rect x="332.7" y="35.3" width="1.4" height="3.8" fill="#5a4a52"/>
<rect x="311.0" y="16.4" width="3.1" height="4.2" fill="#8a7a7a"/>
<rect x="216.0" y="19.5" width="3.1" height="3.6" fill="#c48a84"/>
<rect x="317.3" y="37.5" width="1.9" height="1.5" fill="#d0a49c"/>
<rect x="243.8" y="7.1" width="3.6" height="2.1" fill="#b49c8c"/>
<rect x="208.3" y="37.3" width="2.1" height="4.1" fill="#cc9890"/>
<rect x="255.8" y="18.4" width="3.6" height="4.0" fill="#c08680"/>
<rect x="215.7" y="13.3" width="3.9" height="4.5" fill="#5a4a52"/>
<rect x="220.3" y="12.6" width="4.6" height="4.6" fill="#b4746e"/>
<rect x="330.6" y="8.1" width="2.6" height="4.6" fill="#b49c8c"/>
<rect x="199.1" y="27.6" width="2.5" height="2.9" fill="#c48a84"/>
<rect x="144.6" y="8.7" width="2.0" height="2.1" fill="#cc9890"/>
<rect x="230.2" y="34.5" width="3.4" height="3.5" fill="#d89a94"/>
<rect x="246.4" y="36.8" width="3.2" height="2.4" fill="#bc8a86"/>
<rect x="186.4" y="31.6" width="3.6" height="3.6" fill="#5a4a52"/>
<rect x="204.3" y="4.6" width="3.4" height="2.2" fill="#302838"/>
<rect x="258.1" y="27.5" width="4.6" height="1.9" fill="#7e6a6a"/>
<rect x="261.3" y="6.4" width="1.4" height="2.8" fill="#cc9890"/>
<rect x="160.4" y="0.6" width="3.1" height="3.7" fill="#d0a49c"/>
<rect x="122.5" y="31.1" width="4.1" height="1.5" fill="#b49c8c"/>
<rect x="116.9" y="9.0" width="2.1" height="3.7" fill="#b49c8c"/>
<rect x="120.3" y="4.5" width="4.5" height="4.6" fill="#d6cac6"/>
<rect x="221.3" y="2.9" width="2.4" height="2.2" fill="#d89a94"/>
<rect x="311.9" y="13.0" width="4.4" height="2.1" fill="#d0a49c"/>
<rect x="136.5" y="24.3" width="3.6" height="2.1" fill="#e2dad6"/>
<rect x="192.5" y="19.2" width="1.9" height="4.5" fill="#cc9890"/>
<rect x="284.3" y="32.7" width="2.7" height="2.2" fill="#c08680"/>
<rect x="167.4" y="31.1" width="4.0" height="1.5" fill="#d6cac6"/>
<rect x="158.9" y="27.6" width="4.0" height="4.0" fill="#b49c8c"/>
<rect x="255.4" y="32.2" width="2.9" height="2.7" fill="#c08680"/>
<rect x="159.2" y="22.7" width="1.6" height="3.4" fill="#b49c8c"/>
<rect x="284.2" y="19.6" width="3.0" height="2.4" fill="#cc9890"/>
<rect x="122.9" y="28.3" width="2.0" height="2.2" fill="#6a6068"/>
<rect x="253.7" y="35.2" width="1.9" height="2.3" fill="#d0a49c"/>
<rect x="145.4" y="2.4" width="2.8" height="2.4" fill="#7e6a6a"/>
<rect x="204.8" y="20.4" width="2.3" height="3.9" fill="#e2dad6"/>
<rect x="136.0" y="1.9" width="3.0" height="1.7" fill="#b49c8c"/>
<rect x="219.4" y="7.7" width="1.6" height="3.0" fill="#c48a84"/>
<rect x="269.6" y="18.6" width="2.3" height="1.5" fill="#b4746e"/>
<rect x="255.7" y="17.1" width="1.4" height="4.0" fill="#b49c8c"/>
<rect x="216.7" y="33.2" width="4.5" height="2.7" fill="#c48a84"/>
<rect x="235.8" y="30.4" width="3.7" height="2.3" fill="#cc9890"/>
<rect x="139.5" y="17.8" width="3.4" height="2.2" fill="#cc9890"/>
<rect x="308.2" y="36.8" width="3.2" height="1.4" fill="#cc9890"/>
<rect x="183.2" y="2.7" width="3.8" height="3.9" fill="#bc8a86"/>
<rect x="232.4" y="5.6" width="3.6" height="3.7" fill="#cc9890"/>
<rect x="123.1" y="35.5" width="3.5" height="3.1" fill="#b4746e"/>
<rect x="186.8" y="31.9" width="3.3" height="2.6" fill="#b49c8c"/>
<rect x="154.9" y="29.8" width="2.7" height="2.4" fill="#8a7a7a"/>
<rect x="315.6" y="17.9" width="3.1" height="1.5" fill="#443a44"/>
<rect x="221.9" y="37.3" width="3.3" height="2.2" fill="#6a6068"/>
<rect x="204.1" y="7.9" width="4.0" height="3.8" fill="#d89a94"/>
<rect x="140.0" y="31.7" width="2.4" height="2.1" fill="#d0a49c"/>
<rect x="230.9" y="31.8" width="3.6" height="4.6" fill="#e2dad6"/>
<rect x="186.2" y="28.4" width="4.2" height="3.6" fill="#bc8a86"/>
<rect x="128.6" y="0.0" width="2.0" height="2.4" fill="#d0a49c"/>
<rect x="251.9" y="35.1" width="4.5" height="2.3" fill="#e2dad6"/>
<rect x="299.4" y="10.4" width="2.5" height="2.5" fill="#c48a84"/>
<rect x="204.3" y="11.1" width="4.5" height="1.2" fill="#bc8a86"/>
<rect x="285.4" y="30.0" width="3.2" height="4.4" fill="#cc9890"/>
<rect x="337.9" y="28.4" width="3.8" height="4.0" fill="#d0a49c"/>
<rect x="229.0" y="12.7" width="2.7" height="2.3" fill="#b49c8c"/>
<rect x="236.8" y="13.1" width="4.1" height="2.4" fill="#5a4a52"/>
<rect x="305.9" y="34.3" width="1.7" height="4.5" fill="#cc9890"/>
<rect x="293.8" y="32.9" width="4.6" height="4.5" fill="#d89a94"/>
<rect x="291.4" y="30.5" width="4.2" height="1.9" fill="#e2dad6"/>
<rect x="196.8" y="2.5" width="1.6" height="4.3" fill="#c08680"/>
<rect x="166.9" y="2.8" width="1.4" height="3.8" fill="#302838"/>
<rect x="308.6" y="25.0" width="2.3" height="2.9" fill="#443a44"/>
<rect x="185.4" y="24.7" width="4.3" height="2.8" fill="#c48a84"/>
<rect x="280.4" y="12.1" width="4.3" height="3.2" fill="#8a7a7a"/>
<rect x="250.4" y="38.9" width="4.3" height="1.4" fill="#6a6068"/>
<rect x="209.3" y="34.3" width="3.5" height="1.9" fill="#c48a84"/>
<rect x="237.6" y="36.2" width="3.5" height="4.2" fill="#cc9890"/>
<rect x="219.4" y="22.2" width="1.3" height="1.7" fill="#b4746e"/>
<rect x="157.2" y="11.3" width="3.0" height="3.8" fill="#8a7a7a"/>
<rect x="165.8" y="29.0" width="4.0" height="2.0" fill="#bc8a86"/>
<rect x="151.3" y="24.8" width="1.5" height="2.7" fill="#e2dad6"/>
<rect x="183.6" y="12.8" width="3.8" height="1.9" fill="#c08680"/>
<rect x="265.7" y="5.6" width="4.5" height="4.7" fill="#5a4a52"/>
<rect x="157.1" y="35.5" width="3.1" height="3.9" fill="#c48a84"/>
<rect x="128.0" y="2.2" width="3.0" height="4.4" fill="#302838"/>
<rect x="230.4" y="36.4" width="3.2" height="1.7" fill="#6a6068"/>
<rect x="296.0" y="16.5" width="3.3" height="2.1" fill="#d0a49c"/>
<rect x="168.4" y="8.4" width="3.4" height="1.4" fill="#c08680"/>
<rect x="295.8" y="35.2" width="1.8" height="3.9" fill="#d0a49c"/>
<rect x="168.0" y="32.1" width="2.0" height="1.8" fill="#302838"/>
<rect x="334.6" y="28.1" width="1.6" height="2.8" fill="#302838"/>
<rect x="177.0" y="32.7" width="4.4" height="1.4" fill="#c08680"/>
<rect x="215.1" y="3.4" width="1.4" height="4.0" fill="#bc8a86"/>
<rect x="147.8" y="17.9" width="3.4" height="4.7" fill="#e2dad6"/>
<rect x="207.4" y="28.1" width="4.7" height="2.0" fill="#bc8a86"/>
<rect x="195.9" y="17.0" width="2.3" height="3.4" fill="#6a6068"/>
<rect x="135.0" y="7.5" width="2.3" height="3.0" fill="#5a4a52"/>
<rect x="209.6" y="32.8" width="3.9" height="3.3" fill="#d89a94"/>
<rect x="327.6" y="18.4" width="1.9" height="3.3" fill="#d6cac6"/>
<rect x="228.0" y="9.1" width="2.4" height="2.5" fill="#b4746e"/>
<rect x="206.4" y="13.8" width="2.7" height="2.4" fill="#443a44"/>
<rect x="260.6" y="18.1" width="4.1" height="3.1" fill="#cc9890"/>
<rect x="306.3" y="28.4" width="2.4" height="3.4" fill="#443a44"/>
<rect x="329.3" y="24.2" width="1.7" height="3.5" fill="#c08680"/>
<rect x="328.6" y="5.7" width="2.5" height="4.2" fill="#e2dad6"/>
<rect x="248.2" y="26.4" width="2.4" height="4.5" fill="#443a44"/>
<rect x="261.8" y="11.1" width="1.7" height="4.4" fill="#c08680"/>
<rect x="254.1" y="31.5" width="2.7" height="2.2" fill="#c08680"/>
<rect x="194.4" y="20.7" width="4.5" height="3.4" fill="#d89a94"/>
<rect x="142.0" y="9.9" width="3.3" height="3.2" fill="#d0a49c"/>
<rect x="119.8" y="31.2" width="1.4" height="4.0" fill="#c08680"/>
<rect x="177.8" y="13.0" width="4.1" height="1.8" fill="#443a44"/>
<rect x="120.9" y="7.5" width="1.4" height="4.0" fill="#d6cac6"/>
<rect x="185.7" y="8.6" width="2.7" height="1.6" fill="#8a7a7a"/>
<rect x="328.1" y="21.5" width="4.4" height="1.5" fill="#d6cac6"/>
<rect x="213.2" y="7.5" width="3.8" height="4.2" fill="#443a44"/>
<rect x="210.6" y="24.6" width="3.7" height="1.8" fill="#d6cac6"/>
<rect x="334.8" y="1.5" width="1.4" height="1.6" fill="#c08680"/>
<rect x="189.4" y="27.1" width="1.8" height="2.8" fill="#8a7a7a"/>
<rect x="156.5" y="23.8" width="3.6" height="4.6" fill="#c48a84"/>
<rect x="143.1" y="33.4" width="2.3" height="2.6" fill="#6a6068"/>
<rect x="168.1" y="38.0" width="4.7" height="3.7" fill="#5a4a52"/>
<rect x="153.1" y="34.8" width="4.0" height="3.4" fill="#cc9890"/>
<rect x="215.8" y="24.3" width="4.4" height="3.9" fill="#c08680"/>
<rect x="217.2" y="34.4" width="3.3" height="2.4" fill="#443a44"/>
<rect x="230.5" y="5.8" width="1.4" height="4.0" fill="#d6cac6"/>
<rect x="227.3" y="26.8" width="1.7" height="3.5" fill="#c08680"/>
<rect x="305.2" y="14.1" width="3.7" height="1.9" fill="#443a44"/>
<rect x="279.2" y="15.9" width="4.6" height="4.5" fill="#5a4a52"/>
<rect x="186.9" y="14.7" width="2.1" height="4.4" fill="#c08680"/>
<rect x="337.9" y="26.8" width="2.3" height="3.9" fill="#d0a49c"/>
<rect x="295.4" y="13.1" width="3.2" height="3.1" fill="#d0a49c"/>
<rect x="308.3" y="38.6" width="2.9" height="4.1" fill="#cc9890"/>
<rect x="149.4" y="29.7" width="3.2" height="4.4" fill="#bc8a86"/>
<rect x="273.9" y="0.2" width="3.3" height="1.7" fill="#443a44"/>
<rect x="178.0" y="4.4" width="4.2" height="2.7" fill="#d0a49c"/>
<rect x="134.2" y="17.5" width="2.5" height="1.3" fill="#7e6a6a"/>
<rect x="164.0" y="25.5" width="2.2" height="2.5" fill="#bc8a86"/>
<rect x="288.2" y="27.0" width="3.5" height="2.2" fill="#e2dad6"/>
<rect x="205.9" y="37.1" width="2.9" height="1.6" fill="#d6cac6"/>
<rect x="297.7" y="11.5" width="3.3" height="4.2" fill="#d6cac6"/>
<rect x="194.8" y="33.2" width="4.2" height="2.1" fill="#cc9890"/>
<rect x="215.6" y="1.0" width="1.5" height="4.0" fill="#cc9890"/>
<rect x="164.3" y="23.4" width="4.3" height="1.5" fill="#7e6a6a"/>
<rect x="192.9" y="36.4" width="1.8" height="1.7" fill="#8a7a7a"/>
<rect x="260.5" y="32.7" width="2.1" height="1.8" fill="#b49c8c"/>
<rect x="222.2" y="30.6" width="2.1" height="4.4" fill="#b49c8c"/>
<rect x="152.1" y="38.9" width="2.3" height="4.7" fill="#b4746e"/>
<rect x="257.3" y="20.8" width="4.2" height="2.8" fill="#8a7a7a"/>
<rect x="209.3" y="18.3" width="2.3" height="1.4" fill="#443a44"/>
<rect x="168.0" y="18.1" width="4.1" height="4.6" fill="#d0a49c"/>
<rect x="152.0" y="26.7" width="3.1" height="2.6" fill="#5a4a52"/>
<rect x="320.9" y="35.1" width="2.8" height="4.5" fill="#c48a84"/>
<rect x="138.2" y="19.4" width="4.6" height="2.3" fill="#e2dad6"/>
<rect x="314.5" y="14.3" width="4.6" height="4.6" fill="#d6cac6"/>
<rect x="227.7" y="11.0" width="2.4" height="3.2" fill="#5a4a52"/>
<rect x="186.3" y="1.1" width="1.9" height="1.6" fill="#7e6a6a"/>
<rect x="218.0" y="14.4" width="3.9" height="4.5" fill="#c48a84"/>
<rect x="223.7" y="36.3" width="1.9" height="4.6" fill="#5a4a52"/>
<rect x="196.7" y="23.6" width="2.3" height="4.6" fill="#b49c8c"/>
<rect x="274.9" y="22.9" width="2.7" height="1.9" fill="#b4746e"/>
<rect x="162.1" y="19.8" width="1.6" height="4.1" fill="#8a7a7a"/>
<rect x="269.3" y="36.1" width="4.7" height="3.6" fill="#c08680"/>
<rect x="175.7" y="38.0" width="1.5" height="2.2" fill="#c08680"/>
<rect x="231.4" y="13.7" width="3.7" height="3.1" fill="#5a4a52"/>
<rect x="118.9" y="7.9" width="1.8" height="4.1" fill="#8a7a7a"/>
<rect x="163.2" y="4.7" width="3.2" height="3.8" fill="#e2dad6"/>
<rect x="267.2" y="15.0" width="4.7" height="1.3" fill="#bc8a86"/>
<rect x="140.8" y="29.1" width="2.1" height="1.7" fill="#c48a84"/>
<rect x="311.1" y="0.9" width="1.3" height="1.4" fill="#bc8a86"/>
<rect x="255.6" y="25.5" width="1.8" height="3.7" fill="#d6cac6"/>
<rect x="196.4" y="35.1" width="2.1" height="1.7" fill="#5a4a52"/>
<rect x="150.0" y="4.3" width="4.0" height="1.6" fill="#7e6a6a"/>
<rect x="228.6" y="22.4" width="3.2" height="2.6" fill="#c08680"/>
<rect x="278.9" y="9.2" width="1.7" height="4.4" fill="#c08680"/>
<rect x="170.2" y="32.1" width="2.0" height="1.5" fill="#d89a94"/>
<rect x="247.9" y="16.7" width="2.9" height="1.3" fill="#cc9890"/>
<rect x="217.4" y="19.6" width="4.4" height="3.3" fill="#5a4a52"/>
<rect x="160.4" y="10.1" width="3.9" height="3.8" fill="#e2dad6"/>
<rect x="261.3" y="16.5" width="2.3" height="3.0" fill="#6a6068"/>
<rect x="170.7" y="6.0" width="2.3" height="2.3" fill="#8a7a7a"/>
<rect x="274.2" y="16.7" width="1.8" height="1.4" fill="#8a7a7a"/>
<rect x="337.7" y="28.7" width="3.8" height="4.1" fill="#cc9890"/>
<rect x="179.8" y="1.5" width="1.4" height="3.0" fill="#302838"/>
<rect x="230.4" y="6.6" width="3.5" height="2.7" fill="#6a6068"/>
<rect x="136.5" y="35.2" width="1.2" height="2.0" fill="#443a44"/>
<rect x="138.6" y="15.9" width="3.1" height="2.2" fill="#c48a84"/>
<rect x="191.0" y="10.4" width="3.5" height="2.0" fill="#443a44"/>
<rect x="209.3" y="32.9" width="1.4" height="1.5" fill="#cc9890"/>
<rect x="237.6" y="38.6" width="4.4" height="1.5" fill="#d89a94"/>
<rect x="172.7" y="3.9" width="4.4" height="3.2" fill="#6a6068"/>
<rect x="181.4" y="36.4" width="4.1" height="2.9" fill="#d6cac6"/>
<rect x="131.0" y="17.1" width="3.5" height="1.3" fill="#5a4a52"/>
<rect x="245.5" y="38.1" width="1.4" height="3.7" fill="#b4746e"/>
<rect x="141.3" y="12.6" width="1.4" height="3.2" fill="#d0a49c"/>
<rect x="193.9" y="27.1" width="2.5" height="3.7" fill="#d0a49c"/>
<rect x="152.2" y="17.1" width="1.8" height="1.7" fill="#bc8a86"/>
<rect x="309.7" y="24.8" width="1.7" height="4.3" fill="#8a7a7a"/>
<rect x="141.8" y="14.8" width="3.6" height="1.2" fill="#cc9890"/>
<rect x="311.8" y="3.3" width="2.3" height="3.3" fill="#6a6068"/>
<rect x="333.1" y="25.1" width="4.5" height="3.2" fill="#302838"/>
<rect x="185.7" y="8.0" width="3.7" height="1.6" fill="#c48a84"/>
<rect x="230.4" y="22.9" width="2.0" height="2.2" fill="#d6cac6"/>
<rect x="228.9" y="16.3" width="3.5" height="1.8" fill="#7e6a6a"/>
<rect x="177.8" y="30.0" width="3.7" height="3.9" fill="#d89a94"/>
<rect x="171.8" y="36.1" width="3.0" height="2.5" fill="#7e6a6a"/>
<rect x="181.6" y="32.4" width="1.3" height="2.1" fill="#e2dad6"/>
<rect x="279.8" y="8.3" width="2.8" height="2.5" fill="#7e6a6a"/>
<rect x="217.9" y="3.4" width="2.5" height="3.5" fill="#b49c8c"/>
<rect x="336.3" y="16.9" width="3.8" height="2.1" fill="#c48a84"/>
<rect x="271.3" y="10.6" width="1.4" height="2.5" fill="#cc9890"/>
<rect x="214.0" y="23.7" width="4.3" height="4.2" fill="#7e6a6a"/>
<rect x="296.2" y="8.9" width="2.4" height="1.6" fill="#5a4a52"/>
<rect x="225.2" y="14.4" width="2.1" height="2.9" fill="#d6cac6"/>
<rect x="316.6" y="33.1" width="4.2" height="2.7" fill="#bc8a86"/>
<rect x="150.8" y="6.0" width="3.4" height="3.7" fill="#c48a84"/>
<rect x="178.9" y="36.0" width="4.2" height="2.4" fill="#5a4a52"/>
<rect x="315.5" y="16.7" width="1.9" height="3.9" fill="#c48a84"/>
<rect x="230.1" y="4.3" width="2.2" height="3.0" fill="#d0a49c"/>
<rect x="337.0" y="15.3" width="1.9" height="3.9" fill="#c48a84"/>
<rect x="141.6" y="12.5" width="1.6" height="1.3" fill="#302838"/>
<rect x="162.3" y="22.6" width="3.2" height="2.0" fill="#8a7a7a"/>
<rect x="160.8" y="33.4" width="4.4" height="2.0" fill="#e2dad6"/>
<rect x="143.2" y="22.3" width="3.0" height="4.2" fill="#b4746e"/>
<rect x="230.2" y="4.8" width="1.9" height="2.3" fill="#bc8a86"/>
<rect x="321.0" y="0.6" width="2.0" height="2.4" fill="#443a44"/>
<rect x="169.8" y="33.4" width="2.1" height="3.3" fill="#443a44"/>
<rect x="257.9" y="20.3" width="3.1" height="2.3" fill="#d89a94"/>
<rect x="289.9" y="18.7" width="4.7" height="1.4" fill="#443a44"/>
<rect x="219.5" y="23.4" width="1.8" height="3.3" fill="#d89a94"/>
<rect x="238.8" y="15.1" width="4.0" height="1.6" fill="#d0a49c"/>
<rect x="286.0" y="29.2" width="4.5" height="4.3" fill="#7e6a6a"/>
<rect x="219.5" y="8.3" width="1.2" height="1.5" fill="#b4746e"/>
<rect x="157.2" y="0.2" width="2.6" height="2.8" fill="#c48a84"/>
<rect x="231.6" y="38.3" width="1.8" height="3.0" fill="#d89a94"/>
<rect x="141.5" y="11.3" width="3.1" height="2.0" fill="#443a44"/>
<rect x="196.1" y="13.1" width="3.4" height="3.2" fill="#7e6a6a"/>
<rect x="286.6" y="24.1" width="3.7" height="4.2" fill="#c48a84"/>
<rect x="263.1" y="20.7" width="2.3" height="2.3" fill="#8a7a7a"/>
<rect x="191.9" y="16.3" width="4.5" height="2.5" fill="#443a44"/>
<rect x="116.8" y="38.9" width="1.9" height="3.1" fill="#c48a84"/>
<rect x="206.9" y="9.1" width="4.0" height="2.8" fill="#c48a84"/>
<rect x="298.6" y="2.3" width="2.5" height="4.3" fill="#e2dad6"/>
<rect x="268.8" y="26.4" width="2.9" height="2.9" fill="#302838"/>
<rect x="237.3" y="2.6" width="1.8" height="1.9" fill="#d6cac6"/>
<rect x="273.3" y="30.0" width="3.5" height="4.2" fill="#7e6a6a"/>
<rect x="239.3" y="5.2" width="2.9" height="3.4" fill="#d6cac6"/>
<rect x="177.3" y="11.7" width="1.9" height="4.6" fill="#b49c8c"/>
<rect x="266.5" y="29.0" width="2.3" height="1.6" fill="#c48a84"/>
<rect x="226.6" y="21.4" width="1.8" height="1.4" fill="#8a7a7a"/>
<rect x="134.1" y="24.4" width="3.3" height="3.6" fill="#d6cac6"/>
<rect x="175.9" y="33.0" width="1.8" height="4.1" fill="#c08680"/>
<rect x="119.5" y="34.7" width="2.7" height="4.1" fill="#6a6068"/>
<rect x="235.3" y="33.6" width="1.9" height="4.3" fill="#e2dad6"/>
<rect x="251.1" y="5.1" width="2.5" height="4.4" fill="#c08680"/>
<rect x="255.8" y="4.7" width="1.8" height="2.2" fill="#d0a49c"/>
<rect x="183.4" y="28.6" width="1.5" height="1.9" fill="#6a6068"/>
<rect x="251.1" y="37.9" width="3.1" height="1.2" fill="#cc9890"/>
<rect x="280.0" y="8.9" width="1.5" height="4.4" fill="#d89a94"/>
<rect x="253.2" y="33.6" width="1.7" height="3.6" fill="#6a6068"/>
<rect x="200.4" y="31.4" width="4.1" height="4.5" fill="#b49c8c"/>
<rect x="179.0" y="29.0" width="4.1" height="2.1" fill="#7e6a6a"/>
<rect x="204.7" y="8.7" width="2.0" height="4.5" fill="#c48a84"/>
<rect x="219.4" y="13.6" width="2.9" height="3.4" fill="#c48a84"/>
<rect x="205.9" y="6.2" width="2.9" height="4.4" fill="#443a44"/>
<rect x="151.0" y="29.8" width="2.7" height="1.8" fill="#302838"/>
<rect x="292.3" y="7.7" width="3.7" height="2.4" fill="#8a7a7a"/>
<rect x="175.1" y="13.6" width="1.6" height="2.2" fill="#302838"/>
<rect x="186.7" y="31.5" width="4.3" height="2.3" fill="#d6cac6"/>
<rect x="239.7" y="23.5" width="3.4" height="1.6" fill="#5a4a52"/>
<rect x="181.4" y="33.6" width="4.0" height="3.6" fill="#6a6068"/>
<rect x="213.8" y="26.3" width="4.5" height="1.9" fill="#8a7a7a"/>
<rect x="151.0" y="6.7" width="4.3" height="2.3" fill="#bc8a86"/>
<rect x="202.9" y="5.8" width="1.8" height="3.2" fill="#302838"/>
<rect x="152.1" y="22.9" width="1.9" height="3.5" fill="#d89a94"/>
<rect x="303.4" y="0.7" width="4.5" height="1.9" fill="#cc9890"/>
<rect x="315.3" y="25.2" width="1.6" height="2.7" fill="#7e6a6a"/>
<rect x="257.2" y="23.2" width="4.5" height="1.8" fill="#c48a84"/>
<rect x="199.2" y="18.7" width="1.4" height="3.5" fill="#7e6a6a"/>
<rect x="150.4" y="21.5" width="3.8" height="1.6" fill="#cc9890"/>
<rect x="160.2" y="8.0" width="2.1" height="4.1" fill="#d0a49c"/>
<rect x="225.6" y="9.8" width="2.3" height="2.8" fill="#c48a84"/>
<rect x="170.4" y="34.3" width="2.6" height="3.8" fill="#c08680"/>
<rect x="141.6" y="29.2" width="2.8" height="2.9" fill="#c08680"/>
<rect x="339.1" y="8.2" width="1.3" height="3.8" fill="#bc8a86"/>
<rect x="261.9" y="20.8" width="2.0" height="2.7" fill="#6a6068"/>
<rect x="267.6" y="22.8" width="3.1" height="3.9" fill="#d0a49c"/>
<rect x="155.9" y="15.8" width="4.3" height="2.6" fill="#cc9890"/>
<rect x="241.4" y="18.0" width="3.2" height="2.1" fill="#8a7a7a"/>
<rect x="133.9" y="14.4" width="4.3" height="4.6" fill="#c08680"/>
<rect x="174.0" y="19.0" width="1.8" height="1.9" fill="#d6cac6"/>
<rect x="311.9" y="16.9" width="3.4" height="4.5" fill="#d6cac6"/>
<rect x="259.9" y="25.6" width="3.5" height="1.3" fill="#6a6068"/>
<rect x="277.3" y="20.3" width="2.0" height="1.4" fill="#cc9890"/>
<rect x="266.2" y="11.2" width="4.0" height="2.3" fill="#5a4a52"/>
<rect x="141.9" y="28.5" width="1.4" height="4.5" fill="#c08680"/>
<rect x="290.6" y="35.7" width="3.7" height="3.4" fill="#bc8a86"/>
<rect x="316.5" y="4.6" width="2.8" height="2.9" fill="#6a6068"/>
<rect x="201.8" y="17.0" width="2.0" height="4.6" fill="#e2dad6"/>
<rect x="223.6" y="27.8" width="2.5" height="3.0" fill="#d0a49c"/>
<rect x="302.8" y="22.9" width="3.5" height="2.1" fill="#302838"/>
<rect x="150.4" y="15.2" width="3.3" height="2.5" fill="#5a4a52"/>
<rect x="211.3" y="36.6" width="4.3" height="2.0" fill="#c08680"/>
<rect x="209.2" y="1.3" width="2.8" height="4.4" fill="#7e6a6a"/>
<rect x="320.0" y="17.2" width="3.9" height="1.6" fill="#8a7a7a"/>
<rect x="206.7" y="19.7" width="4.1" height="4.0" fill="#c48a84"/>
<rect x="144.4" y="18.5" width="1.3" height="1.7" fill="#b49c8c"/>
<rect x="259.0" y="31.8" width="3.1" height="3.3" fill="#b4746e"/>
<rect x="146.7" y="32.0" width="2.7" height="2.1" fill="#b49c8c"/>
<rect x="186.1" y="37.6" width="3.2" height="4.6" fill="#bc8a86"/>
<rect x="184.4" y="2.3" width="1.6" height="2.7" fill="#302838"/>
<rect x="247.6" y="28.1" width="2.2" height="2.9" fill="#5a4a52"/>
<rect x="244.7" y="0.8" width="2.8" height="2.3" fill="#d0a49c"/>
<rect x="259.0" y="19.9" width="1.5" height="3.0" fill="#e2dad6"/>
<rect x="167.3" y="4.5" width="3.0" height="3.0" fill="#7e6a6a"/>
<rect x="199.7" y="16.1" width="4.3" height="2.2" fill="#b49c8c"/>
<rect x="337.8" y="36.8" width="2.1" height="4.1" fill="#302838"/>
<rect x="146.2" y="21.4" width="1.6" height="4.0" fill="#c08680"/>
<rect x="133.8" y="33.7" width="1.8" height="2.1" fill="#302838"/>
<rect x="205.4" y="6.8" width="3.5" height="2.3" fill="#8a7a7a"/>
<rect x="157.3" y="25.0" width="3.1" height="2.7" fill="#302838"/>
<rect x="330.6" y="15.3" width="3.6" height="1.9" fill="#7e6a6a"/>
<rect x="206.1" y="22.2" width="3.0" height="1.9" fill="#d6cac6"/>
<rect x="332.1" y="30.3" width="4.7" height="2.8" fill="#b4746e"/>
<rect x="169.9" y="29.0" width="3.7" height="4.5" fill="#c48a84"/>
<rect x="313.0" y="10.4" width="4.0" height="2.9" fill="#7e6a6a"/>
<rect x="250.7" y="38.4" width="4.3" height="1.8" fill="#5a4a52"/>
<rect x="154.1" y="6.1" width="3.2" height="1.9" fill="#e2dad6"/>
<rect x="309.7" y="20.5" width="1.7" height="3.1" fill="#e2dad6"/>
<rect x="333.4" y="11.3" width="1.5" height="1.9" fill="#c08680"/>
<rect x="328.6" y="8.6" width="2.8" height="2.7" fill="#443a44"/>
<rect x="292.1" y="3.7" width="4.5" height="2.6" fill="#b49c8c"/>
<rect x="121.4" y="3.9" width="3.7" height="3.2" fill="#b4746e"/>
<rect x="171.1" y="11.2" width="4.6" height="2.5" fill="#cc9890"/>
<rect x="314.6" y="4.9" width="4.2" height="1.3" fill="#d89a94"/>
<rect x="239.2" y="31.7" width="1.7" height="3.1" fill="#d0a49c"/>
<rect x="193.4" y="6.3" width="1.5" height="4.6" fill="#e2dad6"/>
<rect x="250.2" y="36.0" width="4.0" height="3.2" fill="#e2dad6"/>
<rect x="126.6" y="19.5" width="3.0" height="1.3" fill="#d0a49c"/>
<rect x="274.2" y="36.3" width="3.5" height="3.5" fill="#bc8a86"/>
<rect x="290.2" y="17.4" width="2.8" height="3.9" fill="#e2dad6"/>
<rect x="322.1" y="26.9" width="1.8" height="1.6" fill="#d6cac6"/>
<rect x="162.9" y="8.2" width="3.5" height="1.9" fill="#e2dad6"/>
<rect x="339.3" y="17.4" width="4.0" height="3.4" fill="#5a4a52"/>
<rect x="298.2" y="2.3" width="2.8" height="1.4" fill="#c08680"/>
<rect x="120.0" y="18.7" width="2.6" height="4.5" fill="#bc8a86"/>
<rect x="168.0" y="5.4" width="1.4" height="2.6" fill="#e2dad6"/>
<rect x="184.3" y="19.2" width="2.6" height="3.5" fill="#c08680"/>
<rect x="188.4" y="23.7" width="4.7" height="1.9" fill="#e2dad6"/>
<rect x="337.0" y="1.0" width="4.1" height="4.2" fill="#d89a94"/>
<rect x="272.3" y="37.7" width="4.1" height="3.3" fill="#e2dad6"/>
<rect x="118.8" y="15.0" width="2.1" height="3.4" fill="#b4746e"/>
<rect x="227.9" y="20.6" width="1.6" height="1.5" fill="#8a7a7a"/>
<rect x="227.6" y="16.9" width="3.0" height="1.3" fill="#d89a94"/>
<rect x="311.1" y="38.5" width="3.9" height="1.4" fill="#bc8a86"/>
<rect x="265.0" y="10.8" width="4.4" height="4.1" fill="#b49c8c"/>
<rect x="194.7" y="18.3" width="1.6" height="3.4" fill="#cc9890"/>
<rect x="190.3" y="21.2" width="4.4" height="3.2" fill="#c08680"/>
<rect x="212.4" y="34.4" width="3.4" height="3.2" fill="#d6cac6"/>
<rect x="255.6" y="18.6" width="3.4" height="3.1" fill="#7e6a6a"/>
<rect x="328.1" y="0.5" width="2.3" height="4.3" fill="#cc9890"/>
<rect x="287.4" y="9.5" width="4.4" height="1.8" fill="#d0a49c"/>
<rect x="169.3" y="14.9" width="2.0" height="3.7" fill="#e2dad6"/>
<rect x="253.7" y="5.5" width="4.0" height="4.1" fill="#8a7a7a"/>
<rect x="171.4" y="20.1" width="2.5" height="2.4" fill="#6a6068"/>
<rect x="155.2" y="21.8" width="3.9" height="4.5" fill="#c08680"/>
<rect x="234.2" y="31.0" width="1.4" height="1.6" fill="#c08680"/>
<rect x="205.0" y="21.4" width="4.4" height="1.4" fill="#e2dad6"/>
<rect x="131.9" y="14.8" width="4.5" height="3.1" fill="#cc9890"/>
<rect x="246.0" y="4.8" width="4.0" height="3.0" fill="#d6cac6"/>
<rect x="225.1" y="32.6" width="1.6" height="4.3" fill="#d6cac6"/>
<rect x="297.5" y="8.9" width="1.2" height="4.2" fill="#d0a49c"/>
<rect x="137.9" y="29.9" width="3.9" height="3.4" fill="#e2dad6"/>
<rect x="335.0" y="5.0" width="1.8" height="3.7" fill="#443a44"/>
<rect x="269.3" y="33.1" width="3.2" height="2.2" fill="#d0a49c"/>
<rect x="251.5" y="7.2" width="3.4" height="2.5" fill="#d6cac6"/>
<rect x="170.3" y="27.2" width="3.6" height="1.6" fill="#7e6a6a"/>
<rect x="287.7" y="11.9" width="1.5" height="2.2" fill="#6a6068"/>
<rect x="296.6" y="21.1" width="2.7" height="1.5" fill="#443a44"/>
<rect x="313.1" y="6.3" width="1.5" height="3.8" fill="#b4746e"/>
<rect x="319.6" y="15.6" width="1.6" height="2.8" fill="#cc9890"/>
<rect x="311.7" y="16.0" width="2.8" height="1.3" fill="#e2dad6"/>
<rect x="161.1" y="22.9" width="2.7" height="2.4" fill="#6a6068"/>
<rect x="235.1" y="27.3" width="1.6" height="2.5" fill="#7e6a6a"/>
<rect x="209.8" y="11.4" width="1.6" height="2.7" fill="#6a6068"/>
<rect x="179.3" y="33.7" width="3.4" height="2.9" fill="#443a44"/>
<rect x="255.4" y="3.5" width="1.6" height="1.4" fill="#6a6068"/>
<rect x="309.2" y="10.0" width="2.1" height="1.6" fill="#5a4a52"/>
<rect x="230.5" y="7.4" width="1.2" height="4.3" fill="#e2dad6"/>
<rect x="200.2" y="4.8" width="3.4" height="3.8" fill="#443a44"/>
<rect x="263.9" y="12.0" width="3.0" height="2.2" fill="#6a6068"/>
<rect x="302.0" y="11.2" width="4.2" height="3.9" fill="#d89a94"/>
<rect x="253.1" y="24.2" width="1.8" height="2.1" fill="#c08680"/>
<rect x="208.6" y="38.6" width="1.3" height="4.2" fill="#d89a94"/>
<rect x="199.8" y="32.3" width="1.9" height="3.8" fill="#6a6068"/>
<rect x="339.0" y="28.4" width="3.6" height="3.6" fill="#b4746e"/>
<rect x="135.9" y="38.1" width="2.0" height="2.5" fill="#bc8a86"/>
<rect x="199.2" y="25.8" width="3.6" height="2.8" fill="#bc8a86"/>
<rect x="197.9" y="4.2" width="1.4" height="3.0" fill="#6a6068"/>
<rect x="286.3" y="36.5" width="3.5" height="3.2" fill="#5a4a52"/>
<rect x="169.7" y="24.4" width="3.0" height="4.7" fill="#e2dad6"/>
<rect x="172.0" y="12.3" width="2.9" height="2.8" fill="#d89a94"/>
<rect x="242.1" y="8.1" width="1.4" height="1.8" fill="#c48a84"/>
<rect x="182.8" y="3.1" width="2.0" height="2.9" fill="#7e6a6a"/>
<rect x="214.9" y="21.0" width="3.1" height="1.3" fill="#b4746e"/>
<rect x="154.7" y="8.1" width="1.5" height="1.7" fill="#7e6a6a"/>
<rect x="197.0" y="5.5" width="2.3" height="2.7" fill="#8a7a7a"/>
<rect x="125.8" y="19.0" width="1.3" height="3.8" fill="#d0a49c"/>
<rect x="199.2" y="38.4" width="2.1" height="2.8" fill="#5a4a52"/>
<rect x="298.7" y="17.7" width="3.7" height="2.4" fill="#d6cac6"/>
<rect x="249.5" y="25.5" width="2.6" height="3.2" fill="#302838"/>
<rect x="184.0" y="14.1" width="2.2" height="2.0" fill="#8a7a7a"/>
<rect x="240.3" y="15.0" width="3.4" height="2.3" fill="#c08680"/>
<rect x="215.6" y="33.9" width="3.9" height="3.7" fill="#7e6a6a"/>
<rect x="227.8" y="22.3" width="2.0" height="1.9" fill="#c48a84"/>
<rect x="241.7" y="18.6" width="2.4" height="3.6" fill="#443a44"/>
<rect x="134.6" y="33.8" width="3.2" height="3.8" fill="#443a44"/>
<rect x="257.2" y="25.3" width="2.9" height="2.7" fill="#302838"/>
<rect x="225.6" y="1.4" width="3.9" height="2.0" fill="#d89a94"/>
<rect x="290.2" y="27.1" width="2.2" height="3.6" fill="#d6cac6"/>
<rect x="258.6" y="17.3" width="3.8" height="3.5" fill="#302838"/>
<rect x="179.9" y="19.2" width="1.8" height="4.4" fill="#7e6a6a"/>
<rect x="205.2" y="0.9" width="2.2" height="4.4" fill="#302838"/>
<rect x="245.4" y="6.7" width="3.8" height="1.6" fill="#d6cac6"/>
<rect x="331.8" y="11.8" width="3.9" height="2.6" fill="#6a6068"/>
<rect x="326.2" y="11.1" width="3.8" height="3.6" fill="#e2dad6"/>
<rect x="173.1" y="37.0" width="4.5" height="1.2" fill="#e2dad6"/>
<rect x="167.4" y="30.4" width="4.0" height="2.1" fill="#e2dad6"/>
<rect x="121.4" y="32.6" width="2.3" height="1.2" fill="#d0a49c"/>
<rect x="146.8" y="14.2" width="3.4" height="2.4" fill="#5a4a52"/>
<rect x="211.7" y="3.4" width="4.4" height="2.9" fill="#c48a84"/>
<rect x="233.8" y="30.2" width="3.7" height="2.4" fill="#d0a49c"/>
<rect x="241.8" y="18.5" width="2.4" height="1.7" fill="#d0a49c"/>
<rect x="252.3" y="3.8" width="4.4" height="4.3" fill="#cc9890"/>
<rect x="160.1" y="20.4" width="1.7" height="3.6" fill="#d89a94"/>
<rect x="194.5" y="19.4" width="3.5" height="1.9" fill="#b49c8c"/>
<rect x="211.3" y="38.3" width="1.9" height="3.7" fill="#cc9890"/>
<rect x="135.2" y="13.6" width="2.9" height="3.0" fill="#5a4a52"/>
<rect x="329.6" y="24.6" width="3.0" height="1.7" fill="#443a44"/>
<rect x="144.4" y="8.5" width="3.9" height="2.8" fill="#d89a94"/>
<rect x="191.7" y="15.5" width="4.6" height="2.4" fill="#d89a94"/>
<rect x="315.6" y="7.8" width="3.1" height="4.5" fill="#8a7a7a"/>
<rect x="270.4" y="18.0" width="4.6" height="2.0" fill="#8a7a7a"/>
<rect x="191.5" y="5.8" width="1.9" height="3.2" fill="#e2dad6"/>
<rect x="197.0" y="3.0" width="1.6" height="3.1" fill="#7e6a6a"/>
<rect x="325.1" y="15.0" width="4.0" height="2.9" fill="#e2dad6"/>
<rect x="183.5" y="21.3" width="1.3" height="2.9" fill="#b4746e"/>
<rect x="161.8" y="13.4" width="3.2" height="1.9" fill="#b4746e"/>
<rect x="330.3" y="3.2" width="3.7" height="3.7" fill="#d6cac6"/>
<rect x="119.5" y="36.0" width="2.7" height="3.3" fill="#d0a49c"/>
<rect x="177.6" y="1.1" width="4.4" height="2.1" fill="#cc9890"/>
<rect x="176.7" y="18.0" width="1.9" height="4.2" fill="#b49c8c"/>
<rect x="148.8" y="35.0" width="3.5" height="3.2" fill="#d6cac6"/>
<rect x="225.0" y="14.1" width="4.3" height="2.7" fill="#cc9890"/>
<rect x="229.4" y="38.5" width="2.9" height="3.2" fill="#cc9890"/>
<rect x="206.8" y="5.3" width="3.9" height="1.8" fill="#443a44"/>
<rect x="295.7" y="5.1" width="4.3" height="2.7" fill="#d0a49c"/>
<rect x="135.0" y="4.5" width="4.4" height="2.5" fill="#8a7a7a"/>
<rect x="315.4" y="19.9" width="3.0" height="4.7" fill="#302838"/>
<rect x="146.8" y="3.6" width="2.0" height="2.0" fill="#cc9890"/>
<rect x="209.7" y="1.4" width="4.4" height="2.9" fill="#302838"/>
<rect x="285.9" y="11.8" width="3.8" height="1.9" fill="#6a6068"/>
<rect x="289.7" y="6.5" width="2.4" height="4.1" fill="#e2dad6"/>
<rect x="335.1" y="4.6" width="1.9" height="1.6" fill="#e2dad6"/>
<rect x="261.2" y="30.4" width="3.0" height="3.2" fill="#cc9890"/>
<rect x="262.9" y="23.0" width="2.9" height="3.8" fill="#cc9890"/>
<rect x="144.9" y="16.6" width="2.7" height="2.7" fill="#c48a84"/>
<rect x="231.9" y="5.7" width="2.1" height="2.2" fill="#b4746e"/>
<rect x="214.7" y="12.6" width="1.6" height="2.9" fill="#5a4a52"/>
<rect x="248.6" y="14.3" width="2.0" height="1.3" fill="#cc9890"/>
<rect x="326.3" y="11.2" width="2.8" height="2.3" fill="#cc9890"/>
<rect x="319.5" y="9.2" width="3.5" height="2.8" fill="#d89a94"/>
<rect x="215.5" y="4.6" width="1.9" height="4.0" fill="#c48a84"/>
<rect x="141.6" y="23.2" width="4.6" height="3.7" fill="#6a6068"/>
<rect x="320.9" y="37.8" width="2.7" height="2.0" fill="#6a6068"/>
<rect x="265.1" y="18.5" width="4.3" height="4.5" fill="#d6cac6"/>
<rect x="138.3" y="23.0" width="2.7" height="2.1" fill="#8a7a7a"/>
<rect x="247.6" y="17.1" width="2.0" height="4.3" fill="#b4746e"/>
<rect x="214.5" y="31.7" width="1.8" height="3.7" fill="#e2dad6"/>
<rect x="332.6" y="28.3" width="1.4" height="4.3" fill="#c08680"/>
<rect x="140.8" y="16.0" width="3.4" height="3.4" fill="#e2dad6"/>
<rect x="304.8" y="17.5" width="2.3" height="1.9" fill="#7e6a6a"/>
<rect x="236.0" y="5.8" width="4.6" height="2.1" fill="#d0a49c"/>
<rect x="216.1" y="28.3" width="2.2" height="3.7" fill="#302838"/>
<rect x="319.4" y="6.5" width="1.9" height="1.7" fill="#302838"/>
<rect x="278.4" y="6.8" width="4.1" height="2.3" fill="#d89a94"/>
<rect x="335.7" y="6.0" width="2.5" height="1.4" fill="#d0a49c"/>
<rect x="155.5" y="35.7" width="2.4" height="1.9" fill="#d0a49c"/>
<rect x="301.0" y="5.0" width="4.4" height="4.7" fill="#6a6068"/>
<rect x="230.9" y="23.3" width="1.7" height="3.5" fill="#d0a49c"/>
<rect x="116.5" y="27.7" width="2.7" height="1.4" fill="#d0a49c"/>
<rect x="136.5" y="4.3" width="2.2" height="2.9" fill="#b49c8c"/>
<rect x="336.8" y="32.2" width="4.0" height="3.6" fill="#cc9890"/>
<rect x="272.4" y="34.5" width="3.5" height="1.6" fill="#cc9890"/>
<rect x="121.1" y="22.1" width="4.2" height="1.5" fill="#bc8a86"/>
<rect x="159.2" y="19.1" width="3.1" height="4.0" fill="#6a6068"/>
<rect x="126.3" y="38.3" width="2.1" height="4.2" fill="#8a7a7a"/>
<rect x="205.1" y="30.4" width="3.9" height="3.1" fill="#8a7a7a"/>
<rect x="283.2" y="37.1" width="4.2" height="3.3" fill="#e2dad6"/>
<rect x="179.2" y="10.6" width="1.5" height="4.6" fill="#cc9890"/>
<rect x="135.0" y="14.9" width="3.2" height="3.5" fill="#e2dad6"/>
<rect x="324.5" y="9.7" width="1.8" height="3.4" fill="#7e6a6a"/>
<rect x="156.2" y="34.1" width="1.6" height="1.8" fill="#b49c8c"/>
<rect x="198.4" y="20.1" width="1.7" height="4.5" fill="#bc8a86"/>
<rect x="316.3" y="18.3" width="1.3" height="4.1" fill="#c08680"/>
<rect x="261.7" y="32.6" width="1.3" height="1.4" fill="#5a4a52"/>
<rect x="144.9" y="11.5" width="4.2" height="3.6" fill="#8a7a7a"/>
<rect x="229.5" y="6.2" width="4.3" height="3.5" fill="#7e6a6a"/>
<rect x="187.5" y="5.2" width="1.8" height="2.6" fill="#d6cac6"/>
<rect x="183.9" y="5.3" width="2.3" height="2.0" fill="#c48a84"/>
<rect x="295.2" y="3.4" width="2.4" height="4.5" fill="#8a7a7a"/>
<rect x="287.4" y="20.9" width="4.0" height="3.2" fill="#8a7a7a"/>
<rect x="243.1" y="23.8" width="1.7" height="2.3" fill="#bc8a86"/>
<rect x="120.2" y="3.8" width="1.8" height="4.5" fill="#bc8a86"/>
<rect x="294.3" y="34.4" width="2.3" height="1.7" fill="#d0a49c"/>
<rect x="271.3" y="14.5" width="2.4" height="1.7" fill="#6a6068"/>
<rect x="219.2" y="31.7" width="2.4" height="2.3" fill="#8a7a7a"/>
<rect x="283.0" y="34.4" width="2.4" height="3.6" fill="#443a44"/>
<rect x="269.2" y="13.9" width="3.1" height="3.3" fill="#6a6068"/>
<rect x="177.3" y="34.5" width="4.0" height="2.3" fill="#b4746e"/>
<rect x="271.4" y="25.6" width="2.7" height="1.3" fill="#7e6a6a"/>
<rect x="240.1" y="21.0" width="2.6" height="3.2" fill="#b4746e"/>
<rect x="145.9" y="9.7" width="3.6" height="4.5" fill="#6a6068"/>
<rect x="259.5" y="31.5" width="3.6" height="4.5" fill="#cc9890"/>
<rect x="166.5" y="28.2" width="3.8" height="4.4" fill="#443a44"/>
<rect x="235.0" y="30.0" width="1.7" height="3.0" fill="#443a44"/>
<rect x="332.9" y="31.5" width="1.2" height="4.1" fill="#b49c8c"/>
<rect x="268.4" y="11.9" width="3.8" height="2.9" fill="#cc9890"/>
<rect x="197.5" y="34.4" width="3.6" height="2.8" fill="#e2dad6"/>
<rect x="331.1" y="0.3" width="4.3" height="3.7" fill="#d89a94"/>
<rect x="239.6" y="21.5" width="1.2" height="2.9" fill="#443a44"/>
<rect x="199.5" y="38.8" width="3.5" height="1.4" fill="#8a7a7a"/>
<rect x="221.1" y="3.4" width="2.6" height="2.0" fill="#6a6068"/>
<rect x="261.1" y="17.3" width="3.1" height="4.2" fill="#6a6068"/>
<rect x="245.9" y="20.7" width="3.1" height="2.9" fill="#302838"/>
<rect x="301.0" y="2.9" width="1.6" height="2.4" fill="#d6cac6"/>
<rect x="237.5" y="35.9" width="3.5" height="1.9" fill="#b49c8c"/>
<rect x="165.6" y="8.7" width="1.3" height="2.2" fill="#cc9890"/>
<rect x="119.4" y="16.3" width="4.4" height="4.0" fill="#443a44"/>
<rect x="249.8" y="11.7" width="3.8" height="3.6" fill="#5a4a52"/>
<rect x="221.5" y="18.1" width="2.2" height="1.3" fill="#6a6068"/>
<rect x="328.2" y="12.6" width="3.4" height="3.0" fill="#c08680"/>
<rect x="307.2" y="31.8" width="2.9" height="1.8" fill="#d0a49c"/>
<rect x="198.7" y="23.8" width="3.3" height="2.4" fill="#c48a84"/>
<rect x="321.0" y="15.1" width="3.8" height="4.5" fill="#e2dad6"/>
<rect x="190.0" y="28.0" width="4.1" height="1.7" fill="#c08680"/>
<rect x="248.0" y="32.2" width="1.4" height="3.1" fill="#e2dad6"/>
<rect x="336.4" y="36.5" width="1.6" height="2.5" fill="#bc8a86"/>
<rect x="235.8" y="37.3" width="2.1" height="1.3" fill="#d0a49c"/>
<rect x="272.0" y="25.0" width="1.5" height="3.1" fill="#443a44"/>
<rect x="312.5" y="10.0" width="4.1" height="1.3" fill="#bc8a86"/>
<rect x="121.5" y="11.5" width="1.3" height="1.4" fill="#cc9890"/>
<rect x="169.0" y="27.6" width="3.5" height="1.5" fill="#e2dad6"/>
<rect x="132.0" y="27.2" width="2.4" height="1.7" fill="#b4746e"/>
<rect x="282.2" y="30.6" width="4.2" height="2.8" fill="#b49c8c"/>
<rect x="333.2" y="36.1" width="3.1" height="2.2" fill="#e2dad6"/>
<rect x="335.8" y="28.5" width="3.5" height="4.2" fill="#bc8a86"/>
<rect x="254.7" y="22.4" width="4.1" height="1.5" fill="#c08680"/>
<rect x="237.5" y="33.4" width="1.4" height="4.0" fill="#6a6068"/>
<rect x="193.0" y="15.9" width="4.2" height="2.2" fill="#302838"/>
<rect x="116.7" y="3.6" width="3.7" height="1.7" fill="#d0a49c"/>
<rect x="215.2" y="23.1" width="3.6" height="3.7" fill="#c08680"/>
<rect x="336.5" y="1.1" width="4.2" height="2.3" fill="#cc9890"/>
<rect x="212.7" y="9.2" width="3.3" height="4.6" fill="#302838"/>
<rect x="324.8" y="24.9" width="2.0" height="2.0" fill="#8a7a7a"/>
<rect x="214.4" y="38.5" width="2.3" height="2.3" fill="#d89a94"/>
<rect x="325.3" y="31.0" width="2.8" height="1.8" fill="#443a44"/>
<rect x="294.4" y="7.2" width="1.6" height="3.4" fill="#6a6068"/>
<rect x="241.7" y="19.3" width="1.5" height="2.0" fill="#c48a84"/>
<rect x="307.0" y="3.3" width="3.6" height="2.6" fill="#d89a94"/>
<rect x="200.5" y="5.3" width="4.2" height="2.9" fill="#6a6068"/>
<rect x="180.5" y="3.7" width="3.3" height="4.3" fill="#5a4a52"/>
<rect x="189.6" y="8.7" width="3.4" height="3.8" fill="#b49c8c"/>
<rect x="215.8" y="31.9" width="4.2" height="3.0" fill="#d89a94"/>
<rect x="213.8" y="25.4" width="4.2" height="1.9" fill="#c48a84"/>
<rect x="302.9" y="12.9" width="1.4" height="1.6" fill="#5a4a52"/>
<rect x="282.8" y="24.6" width="4.5" height="3.5" fill="#c08680"/>
<rect x="206.3" y="22.6" width="3.0" height="1.9" fill="#d6cac6"/>
<rect x="161.3" y="33.4" width="2.6" height="4.6" fill="#c48a84"/>
<rect x="261.5" y="7.5" width="4.5" height="1.9" fill="#c08680"/>
<rect x="326.9" y="37.3" width="3.8" height="4.2" fill="#cc9890"/>
<rect x="124.2" y="11.7" width="3.3" height="4.0" fill="#8a7a7a"/>
<rect x="121.5" y="37.5" width="4.6" height="4.1" fill="#6a6068"/>
<rect x="195.8" y="32.7" width="1.3" height="3.4" fill="#6a6068"/>
<rect x="147.7" y="1.4" width="4.1" height="3.6" fill="#6a6068"/>
<rect x="186.1" y="10.4" width="4.4" height="3.1" fill="#c08680"/>
<rect x="180.4" y="34.8" width="1.3" height="3.9" fill="#b4746e"/>
<rect x="318.3" y="31.8" width="1.2" height="2.7" fill="#8a7a7a"/>
<rect x="292.7" y="18.7" width="4.1" height="1.5" fill="#8a7a7a"/>
<rect x="176.2" y="15.2" width="4.3" height="3.1" fill="#b49c8c"/>
<rect x="204.6" y="8.6" width="3.6" height="3.3" fill="#bc8a86"/>
<rect x="271.5" y="37.7" width="3.2" height="1.8" fill="#c08680"/>
<rect x="134.4" y="29.3" width="2.0" height="2.3" fill="#e2dad6"/>
<rect x="203.7" y="33.5" width="2.4" height="3.5" fill="#d89a94"/>
<rect x="160.6" y="11.9" width="1.2" height="1.9" fill="#bc8a86"/>
<rect x="162.2" y="17.6" width="4.5" height="2.0" fill="#cc9890"/>
<rect x="306.0" y="28.8" width="3.2" height="2.6" fill="#443a44"/>
<rect x="133.2" y="3.8" width="2.3" height="1.6" fill="#cc9890"/>
<rect x="309.5" y="3.4" width="3.6" height="1.3" fill="#cc9890"/>
<rect x="277.7" y="32.2" width="3.4" height="2.0" fill="#bc8a86"/>
<rect x="204.4" y="10.5" width="1.7" height="4.2" fill="#6a6068"/>
<rect x="324.9" y="6.7" width="2.1" height="3.0" fill="#cc9890"/>
<rect x="307.8" y="8.5" width="2.0" height="2.3" fill="#c48a84"/>
<rect x="261.5" y="28.6" width="3.1" height="3.8" fill="#b4746e"/>
<rect x="141.1" y="8.7" width="3.5" height="1.7" fill="#c08680"/>
<rect x="152.1" y="6.3" width="3.1" height="2.5" fill="#302838"/>
<rect x="224.3" y="31.8" width="3.6" height="4.2" fill="#d6cac6"/>
<rect x="208.8" y="14.0" width="2.3" height="1.3" fill="#7e6a6a"/>
<rect x="281.4" y="19.2" width="1.2" height="2.0" fill="#d89a94"/>
<rect x="218.4" y="8.0" width="4.1" height="4.3" fill="#8a7a7a"/>
<rect x="327.2" y="17.7" width="4.7" height="1.2" fill="#5a4a52"/>
<rect x="254.5" y="26.3" width="3.4" height="3.4" fill="#443a44"/>
<rect x="234.8" y="25.7" width="1.9" height="3.2" fill="#7e6a6a"/>
<rect x="133.0" y="30.0" width="1.8" height="2.4" fill="#302838"/>
<rect x="242.2" y="37.8" width="4.5" height="4.6" fill="#d0a49c"/>
<rect x="325.7" y="10.1" width="3.2" height="3.6" fill="#b49c8c"/>
<rect x="172.7" y="16.0" width="2.7" height="3.1" fill="#5a4a52"/>
<rect x="146.5" y="10.8" width="3.4" height="3.4" fill="#302838"/>
<rect x="226.6" y="37.2" width="1.9" height="1.8" fill="#443a44"/>
<rect x="133.2" y="13.7" width="4.3" height="3.5" fill="#b4746e"/>
<rect x="335.0" y="2.5" width="4.5" height="1.3" fill="#8a7a7a"/>
<rect x="244.7" y="37.4" width="3.8" height="1.6" fill="#c48a84"/>
<rect x="169.8" y="23.0" width="3.1" height="2.4" fill="#443a44"/>
<rect x="242.6" y="21.9" width="4.7" height="3.6" fill="#5a4a52"/>
<rect x="288.4" y="21.0" width="3.7" height="3.4" fill="#cc9890"/>
<rect x="333.4" y="29.6" width="2.0" height="3.2" fill="#6a6068"/>
<rect x="319.5" y="16.8" width="2.8" height="3.8" fill="#b4746e"/>
<rect x="225.6" y="16.6" width="3.7" height="3.7" fill="#bc8a86"/>
<rect x="295.2" y="10.3" width="3.5" height="2.9" fill="#cc9890"/>
<rect x="216.1" y="13.9" width="1.3" height="2.8" fill="#7e6a6a"/>
<rect x="182.9" y="19.1" width="1.5" height="4.3" fill="#6a6068"/>
<rect x="215.5" y="13.6" width="3.0" height="3.1" fill="#443a44"/>
<rect x="254.6" y="17.9" width="3.4" height="1.5" fill="#c48a84"/>
<rect x="179.0" y="13.7" width="2.3" height="3.8" fill="#d89a94"/>
<rect x="251.5" y="32.0" width="1.7" height="4.6" fill="#c48a84"/>
<rect x="166.4" y="12.9" width="1.7" height="3.2" fill="#cc9890"/>
<rect x="259.8" y="23.2" width="4.1" height="2.4" fill="#cc9890"/>
<rect x="277.4" y="5.6" width="4.7" height="3.2" fill="#7e6a6a"/>
<rect x="199.7" y="25.1" width="2.2" height="4.4" fill="#c48a84"/>
<rect x="161.2" y="20.1" width="2.0" height="2.9" fill="#5a4a52"/>
<rect x="225.1" y="38.3" width="1.6" height="1.9" fill="#b4746e"/>
<rect x="337.9" y="19.7" width="3.6" height="2.1" fill="#b4746e"/>
<rect x="142.3" y="34.7" width="2.4" height="4.0" fill="#d89a94"/>
<rect x="133.6" y="34.2" width="2.5" height="4.2" fill="#d89a94"/>
<rect x="144.3" y="32.4" width="3.6" height="1.9" fill="#d89a94"/>
<rect x="309.3" y="5.9" width="2.9" height="2.8" fill="#8a7a7a"/>
<rect x="205.1" y="28.2" width="3.7" height="2.0" fill="#7e6a6a"/>
<rect x="308.8" y="37.2" width="3.3" height="1.4" fill="#5a4a52"/>
<rect x="320.3" y="25.1" width="3.4" height="4.4" fill="#6a6068"/>
<rect x="145.9" y="0.4" width="1.9" height="4.0" fill="#c48a84"/>
<rect x="185.2" y="32.5" width="4.5" height="4.4" fill="#6a6068"/>
<rect x="131.4" y="15.2" width="2.8" height="2.1" fill="#8a7a7a"/>
<rect x="147.0" y="19.7" width="4.6" height="4.3" fill="#6a6068"/>
<rect x="153.4" y="12.2" width="2.3" height="2.5" fill="#5a4a52"/>
<rect x="157.7" y="10.9" width="4.6" height="1.2" fill="#d89a94"/>
<rect x="137.3" y="29.3" width="2.7" height="4.4" fill="#b49c8c"/>
<rect x="281.8" y="4.1" width="2.0" height="2.3" fill="#b4746e"/>
<rect x="289.0" y="37.6" width="3.0" height="1.5" fill="#cc9890"/>
<rect x="299.7" y="4.9" width="3.0" height="2.9" fill="#6a6068"/>
<rect x="303.3" y="3.7" width="2.3" height="1.5" fill="#443a44"/>
<rect x="139.8" y="2.0" width="2.1" height="3.4" fill="#cc9890"/>
<rect x="333.0" y="33.7" width="1.6" height="4.0" fill="#d89a94"/>
<rect x="330.2" y="9.5" width="2.9" height="2.0" fill="#d6cac6"/>
<rect x="117.1" y="5.2" width="3.9" height="3.6" fill="#c08680"/>
<rect x="133.3" y="6.8" width="3.2" height="1.9" fill="#8a7a7a"/>
<rect x="137.0" y="13.1" width="2.0" height="4.6" fill="#c08680"/>
<rect x="156.6" y="7.6" width="2.7" height="3.0" fill="#cc9890"/>
<rect x="141.5" y="8.7" width="3.5" height="1.5" fill="#8a7a7a"/>
<rect x="180.7" y="28.6" width="2.5" height="2.6" fill="#d89a94"/>
<rect x="331.9" y="22.7" width="2.0" height="3.2" fill="#cc9890"/>
<rect x="198.5" y="16.9" width="3.2" height="4.7" fill="#bc8a86"/>
<rect x="156.6" y="22.7" width="2.3" height="2.9" fill="#d6cac6"/>
<rect x="120.5" y="19.8" width="2.3" height="3.3" fill="#6a6068"/>
<rect x="320.3" y="3.6" width="1.6" height="1.7" fill="#c08680"/>
<rect x="235.3" y="8.7" width="3.9" height="2.9" fill="#c48a84"/>
<rect x="189.8" y="5.3" width="2.3" height="3.6" fill="#c48a84"/>
<rect x="171.6" y="2.8" width="3.4" height="1.3" fill="#7e6a6a"/>
<rect x="191.5" y="17.2" width="3.6" height="1.8" fill="#c48a84"/>
<rect x="167.4" y="3.5" width="2.8" height="4.0" fill="#8a7a7a"/>
<rect x="164.6" y="10.0" width="1.3" height="3.4" fill="#d89a94"/>
<rect x="323.0" y="21.6" width="4.4" height="2.8" fill="#c48a84"/>
<rect x="179.0" y="18.1" width="4.5" height="2.9" fill="#c08680"/>
<rect x="188.1" y="37.5" width="1.5" height="1.3" fill="#d89a94"/>
<rect x="196.1" y="9.7" width="1.8" height="2.6" fill="#c48a84"/>
<rect x="273.0" y="23.3" width="3.5" height="3.0" fill="#cc9890"/>
<rect x="201.8" y="20.3" width="1.3" height="1.7" fill="#c48a84"/>
<rect x="143.9" y="35.3" width="3.1" height="1.8" fill="#b4746e"/>
<rect x="176.2" y="37.5" width="2.6" height="3.6" fill="#5a4a52"/>
<rect x="309.9" y="27.5" width="1.2" height="1.4" fill="#6a6068"/>
<rect x="312.3" y="4.1" width="3.2" height="1.8" fill="#e2dad6"/>
<rect x="320.6" y="35.1" width="3.7" height="4.3" fill="#302838"/>
<rect x="318.7" y="30.0" width="1.5" height="4.2" fill="#443a44"/>
<rect x="325.7" y="19.2" width="1.5" height="3.7" fill="#5a4a52"/>
<rect x="292.5" y="32.5" width="3.8" height="1.7" fill="#e2dad6"/>
<rect x="173.3" y="11.7" width="2.0" height="3.2" fill="#bc8a86"/>
<rect x="184.8" y="21.0" width="1.8" height="2.2" fill="#c48a84"/>
<rect x="263.4" y="2.6" width="2.2" height="4.6" fill="#d0a49c"/>
<rect x="312.0" y="24.8" width="1.6" height="1.5" fill="#d6cac6"/>
<rect x="310.8" y="30.3" width="1.4" height="3.7" fill="#bc8a86"/>
<rect x="224.0" y="25.9" width="3.0" height="1.8" fill="#d89a94"/>
<rect x="144.9" y="12.1" width="4.2" height="3.2" fill="#6a6068"/>
<rect x="226.3" y="15.0" width="3.1" height="1.3" fill="#c48a84"/>
<rect x="201.7" y="10.0" width="3.0" height="1.5" fill="#c48a84"/>
<rect x="151.4" y="33.4" width="2.2" height="4.0" fill="#5a4a52"/>
<rect x="251.5" y="28.9" width="2.1" height="4.1" fill="#b49c8c"/>
<rect x="173.0" y="16.0" width="2.5" height="1.5" fill="#d0a49c"/>
<rect x="225.7" y="21.3" width="4.3" height="1.4" fill="#c48a84"/>
<rect x="132.2" y="5.7" width="1.4" height="3.5" fill="#b49c8c"/>
<rect x="295.8" y="2.4" width="1.3" height="3.4" fill="#e2dad6"/>
<rect x="178.0" y="20.1" width="1.6" height="2.5" fill="#b4746e"/>
<rect x="237.0" y="4.8" width="2.8" height="2.0" fill="#d0a49c"/>
<rect x="307.5" y="33.8" width="3.7" height="3.3" fill="#b49c8c"/>
<rect x="131.4" y="37.1" width="3.5" height="2.6" fill="#bc8a86"/>
<rect x="185.5" y="14.4" width="4.0" height="2.5" fill="#e2dad6"/>
<rect x="163.3" y="30.7" width="3.1" height="3.8" fill="#b4746e"/>
<rect x="226.3" y="7.3" width="3.7" height="3.0" fill="#c08680"/>
<rect x="159.7" y="24.8" width="1.4" height="3.2" fill="#5a4a52"/>
<rect x="145.3" y="33.8" width="2.5" height="4.4" fill="#d6cac6"/>
<rect x="328.2" y="28.0" width="3.1" height="4.1" fill="#5a4a52"/>
<rect x="310.3" y="2.7" width="2.9" height="3.8" fill="#302838"/>
<rect x="181.1" y="38.8" width="1.4" height="1.4" fill="#e2dad6"/>
<rect x="279.2" y="22.6" width="1.8" height="4.7" fill="#c48a84"/>
<rect x="307.5" y="20.8" width="3.4" height="2.7" fill="#6a6068"/>
<rect x="299.5" y="21.6" width="3.5" height="3.6" fill="#d6cac6"/>
<rect x="162.1" y="20.7" width="1.5" height="2.6" fill="#cc9890"/>
<rect x="129.2" y="36.5" width="1.7" height="4.3" fill="#cc9890"/>
<rect x="334.9" y="21.4" width="4.2" height="3.0" fill="#8a7a7a"/>
<rect x="285.2" y="17.0" width="2.7" height="2.6" fill="#d0a49c"/>
<rect x="129.7" y="20.0" width="3.7" height="3.9" fill="#c48a84"/>
<rect x="159.3" y="13.5" width="2.4" height="4.1" fill="#5a4a52"/>
<rect x="323.7" y="11.7" width="2.7" height="2.3" fill="#8a7a7a"/>
<rect x="178.9" y="26.1" width="2.6" height="3.7" fill="#7e6a6a"/>
<rect x="166.1" y="22.8" width="2.4" height="3.4" fill="#bc8a86"/>
<rect x="210.5" y="11.5" width="2.9" height="2.4" fill="#5a4a52"/>
<rect x="314.5" y="29.4" width="2.0" height="4.1" fill="#b49c8c"/>
<rect x="302.9" y="18.1" width="3.7" height="3.8" fill="#d0a49c"/>
<rect x="134.8" y="2.9" width="2.9" height="4.2" fill="#6a6068"/>
<rect x="281.7" y="33.1" width="2.9" height="4.5" fill="#8a7a7a"/>
<rect x="259.1" y="3.4" width="3.9" height="4.2" fill="#c48a84"/>
<rect x="185.7" y="38.7" width="4.7" height="1.3" fill="#d6cac6"/>
<rect x="130.5" y="34.5" width="2.0" height="2.5" fill="#6a6068"/>
<rect x="327.6" y="32.7" width="1.3" height="1.7" fill="#c48a84"/>
<rect x="311.7" y="24.0" width="3.4" height="2.7" fill="#bc8a86"/>
<rect x="246.2" y="26.0" width="2.9" height="1.9" fill="#d0a49c"/>
<rect x="311.0" y="22.4" width="4.3" height="2.2" fill="#d0a49c"/>
<rect x="125.3" y="2.9" width="4.1" height="1.7" fill="#e2dad6"/>
<rect x="128.7" y="6.1" width="4.5" height="3.9" fill="#302838"/>
<rect x="200.3" y="20.0" width="1.9" height="1.4" fill="#302838"/>
<rect x="258.0" y="1.3" width="1.5" height="3.7" fill="#d89a94"/>
<rect x="196.3" y="20.1" width="2.3" height="4.6" fill="#cc9890"/>
<rect x="210.2" y="19.7" width="1.4" height="4.3" fill="#c48a84"/>
<rect x="126.0" y="36.7" width="3.9" height="3.5" fill="#443a44"/>
<rect x="324.3" y="2.1" width="3.5" height="3.1" fill="#d6cac6"/>
<rect x="280.7" y="6.3" width="3.2" height="1.3" fill="#c08680"/>
<rect x="302.6" y="8.7" width="4.6" height="1.6" fill="#bc8a86"/>
<rect x="233.0" y="0.5" width="4.6" height="2.9" fill="#cc9890"/>
<rect x="163.9" y="36.9" width="1.5" height="1.6" fill="#b4746e"/>
<rect x="247.3" y="18.1" width="1.3" height="2.8" fill="#443a44"/>
<rect x="270.5" y="24.1" width="3.7" height="4.5" fill="#7e6a6a"/>
<rect x="221.0" y="1.7" width="2.5" height="3.0" fill="#b49c8c"/>
<rect x="174.6" y="35.4" width="4.6" height="4.5" fill="#e2dad6"/>
<rect x="234.9" y="0.6" width="2.9" height="3.4" fill="#6a6068"/>
<rect x="324.6" y="11.4" width="2.7" height="4.1" fill="#302838"/>
<rect x="123.1" y="0.5" width="2.8" height="1.5" fill="#d6cac6"/>
<rect x="135.7" y="34.4" width="2.0" height="1.7" fill="#bc8a86"/>
<rect x="292.9" y="1.0" width="2.5" height="3.8" fill="#8a7a7a"/>
<rect x="236.9" y="18.0" width="2.6" height="3.6" fill="#8a7a7a"/>
<rect x="290.6" y="17.3" width="3.4" height="1.5" fill="#d89a94"/>
<rect x="195.2" y="3.8" width="1.5" height="3.1" fill="#5a4a52"/>
<rect x="197.2" y="18.2" width="1.9" height="1.7" fill="#d89a94"/>
<rect x="157.8" y="13.1" width="3.0" height="3.7" fill="#6a6068"/>
<rect x="208.9" y="32.3" width="2.9" height="1.2" fill="#443a44"/>
<rect x="166.1" y="18.8" width="3.7" height="2.5" fill="#d89a94"/>
<rect x="288.8" y="8.3" width="2.4" height="4.0" fill="#7e6a6a"/>
<rect x="330.8" y="8.1" width="1.4" height="1.9" fill="#d6cac6"/>
<rect x="323.4" y="3.5" width="1.7" height="3.5" fill="#e2dad6"/>
<rect x="155.1" y="11.9" width="4.4" height="2.8" fill="#b49c8c"/>
<rect x="303.1" y="4.3" width="3.5" height="1.2" fill="#b4746e"/>
<rect x="296.2" y="17.4" width="3.1" height="4.3" fill="#5a4a52"/>
<rect x="319.7" y="23.7" width="1.8" height="1.8" fill="#d6cac6"/>
<rect x="130.0" y="16.3" width="2.2" height="2.8" fill="#c08680"/>
<rect x="287.3" y="10.8" width="3.4" height="2.5" fill="#d89a94"/>
<rect x="132.8" y="27.6" width="1.7" height="2.9" fill="#5a4a52"/>
<rect x="118.5" y="28.4" width="3.7" height="3.4" fill="#cc9890"/>
<rect x="296.5" y="5.0" width="1.5" height="3.6" fill="#cc9890"/>
<rect x="152.2" y="29.3" width="1.2" height="1.6" fill="#c48a84"/>
<rect x="186.3" y="19.7" width="1.7" height="2.8" fill="#8a7a7a"/>
<rect x="226.4" y="37.6" width="4.2" height="1.8" fill="#b4746e"/>
<rect x="316.4" y="22.0" width="3.0" height="1.8" fill="#e2dad6"/>
<rect x="143.6" y="28.1" width="2.4" height="1.3" fill="#b4746e"/>
<rect x="288.0" y="22.4" width="4.1" height="1.5" fill="#7e6a6a"/>
<rect x="229.7" y="24.7" width="2.0" height="3.6" fill="#443a44"/>
<rect x="248.7" y="37.3" width="2.1" height="2.0" fill="#c08680"/>
<rect x="149.5" y="31.8" width="2.1" height="1.5" fill="#c08680"/>
<rect x="222.8" y="18.6" width="3.8" height="1.5" fill="#d6cac6"/>
<rect x="174.1" y="23.0" width="2.1" height="1.9" fill="#b49c8c"/>
<rect x="220.4" y="24.1" width="3.8" height="1.2" fill="#d0a49c"/>
<rect x="175.7" y="29.4" width="4.6" height="3.8" fill="#8a7a7a"/>
<rect x="273.5" y="37.5" width="2.8" height="3.9" fill="#6a6068"/>
<rect x="132.3" y="31.9" width="4.3" height="2.3" fill="#8a7a7a"/>
<rect x="308.7" y="34.4" width="1.4" height="4.1" fill="#b49c8c"/>
<rect x="123.0" y="21.1" width="1.9" height="2.6" fill="#e2dad6"/>
<rect x="244.4" y="28.7" width="3.5" height="2.6" fill="#d89a94"/>
<rect x="232.0" y="21.0" width="4.5" height="2.9" fill="#5a4a52"/>
<rect x="305.5" y="27.2" width="3.6" height="3.0" fill="#5a4a52"/>
<rect x="265.3" y="0.3" width="2.8" height="4.6" fill="#302838"/>
<rect x="194.4" y="2.4" width="2.2" height="2.8" fill="#d6cac6"/>
<rect x="123.3" y="31.2" width="4.0" height="4.2" fill="#d0a49c"/>
<rect x="231.4" y="17.0" width="3.1" height="3.5" fill="#c48a84"/>
<rect x="268.5" y="4.3" width="1.2" height="2.1" fill="#8a7a7a"/>
<rect x="133.5" y="31.5" width="3.2" height="3.4" fill="#302838"/>
<rect x="284.8" y="27.7" width="4.1" height="4.4" fill="#cc9890"/>
<rect x="292.3" y="22.7" width="3.6" height="2.4" fill="#d6cac6"/>
<rect x="309.6" y="31.4" width="2.7" height="1.8" fill="#b4746e"/>
<rect x="169.9" y="18.5" width="1.3" height="1.4" fill="#6a6068"/>
<rect x="265.4" y="10.4" width="3.8" height="2.4" fill="#e2dad6"/>
<rect x="284.5" y="22.5" width="1.4" height="3.1" fill="#d0a49c"/>
<rect x="181.6" y="39.0" width="3.5" height="4.2" fill="#8a7a7a"/>
<rect x="156.8" y="38.6" width="3.7" height="3.0" fill="#8a7a7a"/>
<rect x="180.6" y="14.4" width="3.7" height="2.4" fill="#b4746e"/>
<rect x="139.7" y="34.3" width="3.2" height="4.6" fill="#e2dad6"/>
<rect x="218.1" y="21.0" width="3.3" height="4.3" fill="#7e6a6a"/>
<rect x="179.3" y="35.1" width="3.4" height="3.1" fill="#c08680"/>
<rect x="322.0" y="4.9" width="2.5" height="4.4" fill="#e2dad6"/>
<rect x="338.3" y="11.8" width="1.4" height="2.1" fill="#c08680"/>
<rect x="250.5" y="32.8" width="3.2" height="3.9" fill="#8a7a7a"/>
<rect x="229.9" y="36.0" width="1.7" height="3.6" fill="#cc9890"/>
<rect x="249.9" y="19.2" width="2.0" height="3.3" fill="#8a7a7a"/>
<rect x="299.7" y="3.2" width="1.4" height="4.5" fill="#b49c8c"/>
<rect x="144.4" y="31.6" width="3.7" height="3.2" fill="#bc8a86"/>
<rect x="260.8" y="5.7" width="3.5" height="3.6" fill="#b49c8c"/>
<rect x="205.6" y="37.7" width="2.6" height="4.7" fill="#5a4a52"/>
<rect x="129.6" y="34.6" width="3.9" height="3.0" fill="#d89a94"/>
<rect x="282.3" y="21.5" width="2.1" height="2.0" fill="#302838"/>
<rect x="218.5" y="15.3" width="3.5" height="4.1" fill="#d6cac6"/>
<rect x="162.9" y="19.8" width="3.2" height="3.2" fill="#6a6068"/>
<rect x="318.7" y="37.3" width="2.8" height="1.2" fill="#c08680"/>
<rect x="291.6" y="26.5" width="1.6" height="2.1" fill="#e2dad6"/>
<rect x="180.1" y="8.4" width="4.6" height="2.8" fill="#b49c8c"/>
<rect x="280.4" y="14.5" width="3.6" height="4.4" fill="#5a4a52"/>
<rect x="288.5" y="11.4" width="4.1" height="3.0" fill="#8a7a7a"/>
<rect x="296.0" y="12.5" width="1.7" height="4.0" fill="#bc8a86"/>
<rect x="214.2" y="14.1" width="3.9" height="2.6" fill="#443a44"/>
<rect x="321.3" y="29.9" width="1.8" height="2.5" fill="#c08680"/>
<rect x="128.6" y="12.3" width="4.4" height="3.5" fill="#d89a94"/>
<rect x="145.5" y="25.5" width="2.6" height="2.1" fill="#c08680"/>
<rect x="189.5" y="0.9" width="4.1" height="3.8" fill="#7e6a6a"/>
<rect x="317.5" y="9.7" width="2.6" height="1.2" fill="#c08680"/>
<rect x="238.8" y="2.0" width="2.2" height="2.7" fill="#d6cac6"/>
<rect x="254.5" y="25.1" width="3.9" height="2.0" fill="#5a4a52"/>
<rect x="156.3" y="9.4" width="1.3" height="3.1" fill="#b4746e"/>
<rect x="163.5" y="33.2" width="1.3" height="4.7" fill="#b4746e"/>
<rect x="180.0" y="37.9" width="1.8" height="1.7" fill="#443a44"/>
<rect x="255.2" y="11.8" width="4.2" height="1.2" fill="#7e6a6a"/>
<rect x="294.9" y="13.1" width="1.3" height="1.5" fill="#d6cac6"/>
<rect x="229.6" y="29.8" width="1.9" height="2.2" fill="#302838"/>
<rect x="295.8" y="27.4" width="1.6" height="1.6" fill="#cc9890"/>
<rect x="248.5" y="28.5" width="1.8" height="3.1" fill="#c08680"/>
<rect x="160.2" y="1.7" width="3.4" height="3.6" fill="#c08680"/>
<rect x="152.7" y="31.1" width="3.2" height="4.3" fill="#d6cac6"/>
<rect x="261.8" y="36.1" width="3.5" height="3.0" fill="#d89a94"/>
<rect x="331.9" y="7.3" width="2.9" height="1.9" fill="#443a44"/>
<rect x="122.6" y="33.5" width="4.0" height="2.0" fill="#6a6068"/>
<rect x="166.3" y="20.0" width="1.5" height="2.0" fill="#8a7a7a"/>
<rect x="291.0" y="15.1" width="1.8" height="4.6" fill="#d89a94"/>
<rect x="262.3" y="13.5" width="1.6" height="3.2" fill="#443a44"/>
<rect x="305.5" y="11.9" width="1.7" height="3.1" fill="#d6cac6"/>
<rect x="297.7" y="5.6" width="3.2" height="1.7" fill="#b4746e"/>
<rect x="175.4" y="30.3" width="3.9" height="3.3" fill="#d89a94"/>
<rect x="339.9" y="11.9" width="2.6" height="4.6" fill="#7e6a6a"/>
<rect x="289.6" y="0.5" width="3.4" height="3.1" fill="#b4746e"/>
<rect x="179.2" y="28.2" width="1.5" height="4.1" fill="#8a7a7a"/>
<rect x="258.4" y="29.4" width="3.1" height="3.0" fill="#d6cac6"/>
<rect x="155.7" y="34.1" width="1.7" height="2.4" fill="#5a4a52"/>
<rect x="329.5" y="16.6" width="3.5" height="1.2" fill="#bc8a86"/>
<rect x="129.6" y="4.5" width="4.5" height="1.9" fill="#7e6a6a"/>
<rect x="244.6" y="12.6" width="2.0" height="3.0" fill="#302838"/>
<rect x="267.6" y="15.8" width="1.5" height="2.9" fill="#c48a84"/>
<rect x="294.6" y="31.0" width="3.3" height="1.5" fill="#c08680"/>
<rect x="290.2" y="4.4" width="3.1" height="2.5" fill="#d0a49c"/>
<rect x="274.4" y="23.6" width="2.1" height="2.7" fill="#443a44"/>
<rect x="128.5" y="15.4" width="4.1" height="1.7" fill="#8a7a7a"/>
<rect x="205.4" y="19.7" width="3.8" height="4.0" fill="#c08680"/>
<rect x="201.4" y="27.8" width="1.9" height="3.4" fill="#c08680"/>
<rect x="243.0" y="37.5" width="2.3" height="4.5" fill="#8a7a7a"/>
<rect x="120.7" y="34.2" width="1.5" height="4.5" fill="#b4746e"/>
<rect x="326.8" y="17.5" width="4.2" height="1.3" fill="#e2dad6"/>
<rect x="289.9" y="5.8" width="1.5" height="3.0" fill="#bc8a86"/>
<rect x="156.1" y="22.1" width="4.6" height="2.1" fill="#e2dad6"/>
<rect x="331.2" y="26.2" width="2.7" height="2.7" fill="#6a6068"/>
<rect x="255.6" y="9.1" width="3.2" height="3.9" fill="#d89a94"/>
<rect x="197.1" y="34.1" width="3.2" height="4.3" fill="#6a6068"/>
<rect x="226.3" y="0.2" width="4.3" height="1.9" fill="#cc9890"/>
<rect x="205.9" y="37.1" width="2.1" height="3.8" fill="#d6cac6"/>
<rect x="336.1" y="38.7" width="2.5" height="4.6" fill="#d6cac6"/>
<rect x="233.9" y="22.0" width="1.9" height="4.0" fill="#d89a94"/>
<rect x="190.9" y="29.4" width="2.6" height="2.4" fill="#cc9890"/>
<rect x="238.9" y="5.1" width="2.8" height="1.4" fill="#5a4a52"/>
<rect x="323.6" y="36.3" width="3.7" height="4.2" fill="#c48a84"/>
<rect x="129.4" y="23.7" width="2.0" height="2.0" fill="#e2dad6"/>
<rect x="323.3" y="0.5" width="3.7" height="3.2" fill="#d89a94"/>
<rect x="286.0" y="13.0" width="3.6" height="2.6" fill="#d89a94"/>
<rect x="191.1" y="38.8" width="2.4" height="4.2" fill="#b49c8c"/>
<rect x="294.0" y="19.2" width="2.9" height="4.2" fill="#8a7a7a"/>
<rect x="209.8" y="32.0" width="3.6" height="1.6" fill="#443a44"/>
<rect x="240.6" y="2.8" width="3.6" height="2.4" fill="#5a4a52"/>
<rect x="253.8" y="36.4" width="2.7" height="2.2" fill="#c48a84"/>
<rect x="339.3" y="5.4" width="2.1" height="4.0" fill="#e2dad6"/>
<rect x="250.2" y="12.8" width="4.6" height="1.5" fill="#e2dad6"/>
<rect x="138.9" y="26.3" width="4.3" height="4.6" fill="#cc9890"/>
<rect x="286.4" y="16.4" width="1.8" height="2.8" fill="#bc8a86"/>
<rect x="280.7" y="22.4" width="1.7" height="2.2" fill="#b4746e"/>
<rect x="277.8" y="37.2" width="4.0" height="1.3" fill="#d6cac6"/>
<rect x="335.1" y="8.1" width="2.1" height="1.9" fill="#6a6068"/>
<rect x="249.3" y="20.2" width="3.9" height="3.1" fill="#e2dad6"/>
<rect x="325.8" y="36.9" width="1.2" height="4.3" fill="#8a7a7a"/>
<rect x="147.3" y="29.1" width="2.7" height="4.1" fill="#d0a49c"/>
<rect x="330.9" y="22.6" width="3.3" height="4.6" fill="#e2dad6"/>
<rect x="193.4" y="10.7" width="2.4" height="3.1" fill="#cc9890"/>
<rect x="264.2" y="37.0" width="3.3" height="3.8" fill="#c48a84"/>
<rect x="165.8" y="3.1" width="3.8" height="2.8" fill="#8a7a7a"/>
<rect x="118.1" y="4.4" width="2.8" height="2.4" fill="#c48a84"/>
<rect x="254.5" y="29.2" width="4.1" height="2.7" fill="#6a6068"/>
<rect x="275.2" y="9.0" width="2.4" height="1.4" fill="#443a44"/>
<rect x="182.8" y="27.7" width="2.0" height="1.2" fill="#d0a49c"/>
<rect x="289.9" y="12.9" width="4.7" height="3.7" fill="#e2dad6"/>
<rect x="261.4" y="28.2" width="4.5" height="2.9" fill="#d6cac6"/>
<rect x="213.3" y="10.7" width="2.5" height="3.0" fill="#7e6a6a"/>
<rect x="138.8" y="29.6" width="3.2" height="4.4" fill="#b4746e"/>
<rect x="204.8" y="33.5" width="1.3" height="1.7" fill="#c08680"/>
<rect x="172.0" y="10.6" width="1.8" height="4.6" fill="#d89a94"/>
<rect x="116.8" y="1.4" width="4.6" height="4.3" fill="#b4746e"/>
<rect x="205.6" y="21.6" width="2.4" height="2.0" fill="#d6cac6"/>
<rect x="268.7" y="35.7" width="1.6" height="4.1" fill="#e2dad6"/>
<rect x="176.0" y="16.2" width="4.6" height="3.6" fill="#443a44"/>
<rect x="128.3" y="8.6" width="3.4" height="2.3" fill="#cc9890"/>
<rect x="276.8" y="13.3" width="3.3" height="3.8" fill="#443a44"/>
<rect x="183.2" y="26.9" width="1.3" height="1.8" fill="#d89a94"/>
<rect x="201.5" y="30.0" width="3.8" height="2.6" fill="#d89a94"/>
<rect x="150.6" y="38.2" width="3.0" height="3.8" fill="#bc8a86"/>
<rect x="326.6" y="10.4" width="3.4" height="4.1" fill="#7e6a6a"/>
<rect x="335.5" y="22.9" width="2.8" height="1.3" fill="#b49c8c"/>
<rect x="270.1" y="36.7" width="1.7" height="2.0" fill="#d6cac6"/>
<rect x="176.6" y="22.0" width="3.6" height="3.0" fill="#d0a49c"/>
<rect x="255.5" y="3.3" width="3.5" height="2.9" fill="#7e6a6a"/>
<rect x="325.9" y="13.7" width="4.2" height="2.0" fill="#c08680"/>
<rect x="227.1" y="6.4" width="3.3" height="3.7" fill="#c48a84"/>
<rect x="140.8" y="18.0" width="1.9" height="2.4" fill="#7e6a6a"/>
<rect x="176.6" y="36.3" width="2.2" height="2.2" fill="#cc9890"/>
<rect x="199.5" y="37.0" width="4.6" height="1.7" fill="#b49c8c"/>
<rect x="200.8" y="19.6" width="4.1" height="3.2" fill="#b4746e"/>
<rect x="267.8" y="0.7" width="2.7" height="2.9" fill="#d6cac6"/>
<rect x="212.7" y="14.2" width="3.7" height="4.6" fill="#b4746e"/>
<rect x="210.2" y="25.1" width="1.7" height="3.3" fill="#c08680"/>
<rect x="314.3" y="5.5" width="1.8" height="4.4" fill="#cc9890"/>
<rect x="286.8" y="2.6" width="3.4" height="1.3" fill="#7e6a6a"/>
<rect x="294.0" y="12.6" width="1.2" height="3.8" fill="#7e6a6a"/>
<rect x="198.0" y="12.8" width="4.0" height="4.6" fill="#c48a84"/>
<rect x="293.2" y="7.8" width="3.7" height="3.3" fill="#d89a94"/>
<rect x="185.6" y="28.3" width="4.6" height="2.8" fill="#8a7a7a"/>
<rect x="205.7" y="16.5" width="4.0" height="4.6" fill="#c48a84"/>
<rect x="273.9" y="32.3" width="4.4" height="4.5" fill="#443a44"/>
<rect x="156.4" y="13.4" width="2.3" height="3.9" fill="#d6cac6"/>
<rect x="338.5" y="12.0" width="4.5" height="1.3" fill="#c48a84"/>
<rect x="293.1" y="0.3" width="4.0" height="2.4" fill="#b4746e"/>
<rect x="150.8" y="22.1" width="3.6" height="3.8" fill="#5a4a52"/>
<rect x="296.1" y="19.3" width="2.9" height="2.9" fill="#d89a94"/>
<rect x="191.0" y="30.3" width="2.5" height="3.6" fill="#443a44"/>
<rect x="117.3" y="27.1" width="3.8" height="1.6" fill="#c48a84"/>
<rect x="308.4" y="34.8" width="3.2" height="3.8" fill="#7e6a6a"/>
<rect x="324.0" y="2.5" width="4.3" height="3.2" fill="#c48a84"/>
<rect x="277.9" y="28.0" width="3.8" height="2.7" fill="#8a7a7a"/>
<rect x="159.6" y="21.2" width="1.7" height="4.2" fill="#d89a94"/>
<rect x="219.6" y="38.0" width="4.0" height="4.0" fill="#bc8a86"/>
<rect x="335.6" y="24.4" width="4.6" height="4.4" fill="#5a4a52"/>
<rect x="169.4" y="1.6" width="3.4" height="3.9" fill="#e2dad6"/>
<rect x="183.4" y="26.4" width="2.5" height="3.9" fill="#d89a94"/>
<rect x="247.2" y="29.0" width="1.6" height="2.0" fill="#7e6a6a"/>
<rect x="316.6" y="20.5" width="3.5" height="4.1" fill="#443a44"/>
<rect x="225.2" y="15.2" width="2.8" height="4.5" fill="#b49c8c"/>
<rect x="197.3" y="16.4" width="2.5" height="2.4" fill="#bc8a86"/>
<rect x="161.8" y="26.0" width="1.8" height="1.5" fill="#7e6a6a"/>
<rect x="326.6" y="5.3" width="4.0" height="4.4" fill="#b49c8c"/>
<rect x="287.1" y="4.8" width="3.1" height="3.0" fill="#5a4a52"/>
<rect x="335.0" y="29.5" width="3.7" height="2.2" fill="#cc9890"/>
<rect x="237.4" y="12.7" width="2.1" height="3.8" fill="#c48a84"/>
<rect x="327.1" y="7.4" width="3.5" height="1.9" fill="#b4746e"/>
<rect x="239.5" y="22.6" width="3.6" height="3.1" fill="#bc8a86"/>
<rect x="118.0" y="37.8" width="3.4" height="2.6" fill="#b49c8c"/>
<rect x="316.6" y="23.3" width="1.2" height="3.4" fill="#bc8a86"/>
<rect x="338.9" y="30.7" width="4.2" height="2.9" fill="#302838"/>
<rect x="185.6" y="9.8" width="1.3" height="1.6" fill="#d0a49c"/>
<rect x="187.0" y="33.8" width="3.6" height="2.8" fill="#b4746e"/>
<rect x="199.6" y="25.0" width="2.4" height="3.5" fill="#d6cac6"/>
<rect x="181.2" y="16.5" width="2.9" height="1.6" fill="#cc9890"/>
<rect x="187.7" y="13.1" width="2.2" height="1.7" fill="#8a7a7a"/>
<rect x="151.9" y="16.0" width="1.4" height="1.5" fill="#c48a84"/>
<rect x="312.6" y="1.3" width="4.5" height="4.6" fill="#6a6068"/>
<rect x="246.9" y="19.9" width="3.5" height="2.9" fill="#443a44"/>
<rect x="324.0" y="30.9" width="4.3" height="3.2" fill="#c48a84"/>
<rect x="193.2" y="16.9" width="2.6" height="1.9" fill="#c48a84"/>
<rect x="321.1" y="28.3" width="3.5" height="2.0" fill="#8a7a7a"/>
<rect x="245.5" y="30.2" width="1.6" height="2.9" fill="#302838"/>
<rect x="169.6" y="24.7" width="4.2" height="2.9" fill="#7e6a6a"/>
<rect x="324.2" y="37.3" width="4.2" height="4.5" fill="#d0a49c"/>
<rect x="204.2" y="17.8" width="1.9" height="2.8" fill="#d89a94"/>
<rect x="136.5" y="15.4" width="1.9" height="4.2" fill="#7e6a6a"/>
<rect x="233.4" y="22.6" width="1.9" height="3.4" fill="#443a44"/>
<rect x="295.4" y="28.1" width="3.8" height="2.1" fill="#d0a49c"/>
<rect x="179.7" y="28.7" width="4.6" height="4.5" fill="#b49c8c"/>
<rect x="226.5" y="14.1" width="1.5" height="3.1" fill="#b4746e"/>
<rect x="142.3" y="3.9" width="3.6" height="2.8" fill="#6a6068"/>
<rect x="208.2" y="38.3" width="4.3" height="2.3" fill="#b4746e"/>
<rect x="216.9" y="31.9" width="3.7" height="4.1" fill="#d0a49c"/>
<rect x="216.3" y="2.0" width="3.5" height="4.2" fill="#b49c8c"/>
<rect x="297.9" y="17.5" width="1.8" height="4.2" fill="#8a7a7a"/>
<rect x="281.7" y="24.3" width="4.4" height="1.4" fill="#e2dad6"/>
<rect x="321.9" y="26.8" width="2.5" height="3.8" fill="#8a7a7a"/>
<rect x="146.5" y="6.8" width="3.1" height="2.8" fill="#6a6068"/>
<rect x="229.4" y="33.5" width="3.8" height="2.5" fill="#cc9890"/>
<rect x="117.1" y="33.0" width="4.5" height="4.7" fill="#5a4a52"/>
<rect x="141.8" y="20.1" width="4.7" height="3.4" fill="#b4746e"/>
<rect x="147.4" y="32.6" width="3.6" height="4.6" fill="#d6cac6"/>
<rect x="250.4" y="21.6" width="1.6" height="2.4" fill="#bc8a86"/>
<rect x="123.4" y="19.1" width="1.7" height="1.4" fill="#8a7a7a"/>
<rect x="123.0" y="8.0" width="1.7" height="4.5" fill="#7e6a6a"/>
<rect x="162.9" y="25.7" width="2.0" height="1.5" fill="#8a7a7a"/>
<rect x="282.6" y="11.1" width="3.9" height="1.7" fill="#d0a49c"/>
<rect x="249.5" y="24.6" width="2.2" height="3.6" fill="#d6cac6"/>
<rect x="249.4" y="11.1" width="4.1" height="2.7" fill="#e2dad6"/>
<rect x="241.0" y="36.8" width="4.5" height="2.5" fill="#8a7a7a"/>
<rect x="279.1" y="25.5" width="1.3" height="3.6" fill="#5a4a52"/>
<rect x="159.4" y="3.7" width="1.4" height="3.1" fill="#8a7a7a"/>
<rect x="186.5" y="14.9" width="1.9" height="3.9" fill="#bc8a86"/>
<rect x="120.7" y="35.6" width="4.4" height="3.1" fill="#c48a84"/>
<rect x="315.8" y="12.7" width="1.3" height="3.5" fill="#cc9890"/>
<rect x="261.0" y="31.3" width="4.0" height="3.4" fill="#d0a49c"/>
<rect x="144.0" y="36.9" width="3.5" height="1.5" fill="#5a4a52"/>
<rect x="309.1" y="3.6" width="4.3" height="3.4" fill="#bc8a86"/>
<rect x="224.8" y="19.6" width="4.5" height="2.3" fill="#d89a94"/>
<rect x="243.5" y="36.9" width="4.3" height="3.8" fill="#cc9890"/>
<rect x="322.6" y="1.3" width="2.7" height="1.7" fill="#c48a84"/>
<rect x="151.6" y="0.5" width="2.6" height="4.1" fill="#b4746e"/>
<rect x="216.0" y="20.9" width="4.6" height="4.4" fill="#b4746e"/>
<rect x="242.5" y="29.7" width="3.8" height="3.7" fill="#c48a84"/>
<rect x="160.0" y="29.4" width="3.6" height="1.8" fill="#7e6a6a"/>
<rect x="222.0" y="32.2" width="4.5" height="3.6" fill="#b4746e"/>
<rect x="229.4" y="16.0" width="1.7" height="1.5" fill="#6a6068"/>
<rect x="329.4" y="21.4" width="3.1" height="2.4" fill="#cc9890"/>
<rect x="163.7" y="36.5" width="1.6" height="3.4" fill="#302838"/>
<rect x="160.6" y="24.5" width="3.1" height="3.4" fill="#5a4a52"/>
<rect x="254.8" y="15.5" width="4.2" height="3.6" fill="#e2dad6"/>
<rect x="203.2" y="33.6" width="3.3" height="3.0" fill="#bc8a86"/>
<rect x="337.6" y="36.3" width="3.4" height="3.9" fill="#7e6a6a"/>
<rect x="206.2" y="19.2" width="2.7" height="4.3" fill="#443a44"/>
<rect x="286.2" y="7.7" width="2.3" height="1.5" fill="#e2dad6"/>
<rect x="193.9" y="39.0" width="3.0" height="1.9" fill="#e2dad6"/>
<rect x="339.6" y="22.1" width="1.4" height="1.7" fill="#d89a94"/>
<rect x="145.2" y="35.1" width="1.4" height="1.4" fill="#d0a49c"/>
<rect x="207.1" y="21.6" width="3.3" height="1.6" fill="#e2dad6"/>
<rect x="132.4" y="16.3" width="2.4" height="2.4" fill="#8a7a7a"/>
<rect x="156.5" y="18.0" width="4.4" height="1.8" fill="#c48a84"/>
<rect x="333.5" y="35.9" width="3.7" height="2.5" fill="#6a6068"/>
<rect x="143.2" y="35.9" width="4.6" height="4.3" fill="#bc8a86"/>
<rect x="187.0" y="29.5" width="3.7" height="2.7" fill="#d6cac6"/>
<rect x="286.9" y="35.5" width="3.6" height="1.8" fill="#cc9890"/>
<rect x="170.8" y="26.9" width="4.0" height="2.1" fill="#e2dad6"/>
<rect x="267.0" y="33.5" width="1.5" height="3.8" fill="#c48a84"/>
<rect x="174.1" y="12.9" width="2.1" height="4.4" fill="#d6cac6"/>
<rect x="317.4" y="8.5" width="3.0" height="1.7" fill="#5a4a52"/>
<rect x="155.5" y="0.5" width="4.0" height="4.1" fill="#d89a94"/>
<rect x="204.6" y="31.1" width="3.1" height="3.6" fill="#b4746e"/>
<rect x="222.1" y="36.7" width="3.9" height="3.1" fill="#c48a84"/>
<rect x="146.4" y="23.2" width="2.5" height="3.6" fill="#b4746e"/>
<rect x="332.1" y="37.7" width="2.6" height="4.7" fill="#443a44"/>
<rect x="178.3" y="12.8" width="3.0" height="4.2" fill="#8a7a7a"/>
<rect x="172.6" y="23.3" width="1.6" height="1.2" fill="#443a44"/>
<rect x="254.2" y="37.5" width="2.8" height="1.5" fill="#b4746e"/>
<rect x="328.9" y="13.1" width="2.3" height="1.7" fill="#b4746e"/>
<rect x="206.7" y="8.8" width="1.2" height="2.7" fill="#cc9890"/>
<rect x="149.7" y="22.4" width="1.9" height="4.3" fill="#d0a49c"/>
<rect x="220.7" y="6.7" width="3.3" height="1.8" fill="#c48a84"/>
<rect x="214.0" y="27.8" width="3.9" height="2.1" fill="#5a4a52"/>
<rect x="128.5" y="13.6" width="3.2" height="2.0" fill="#443a44"/>
<rect x="221.1" y="1.4" width="1.6" height="3.7" fill="#d6cac6"/>
<rect x="130.7" y="35.3" width="1.5" height="3.1" fill="#302838"/>
<rect x="207.7" y="24.4" width="4.3" height="2.3" fill="#cc9890"/>
<rect x="186.6" y="2.9" width="4.7" height="3.5" fill="#c48a84"/>
<rect x="203.2" y="12.6" width="3.6" height="3.2" fill="#7e6a6a"/>
<rect x="152.0" y="13.4" width="3.6" height="4.4" fill="#6a6068"/>
<rect x="229.7" y="17.7" width="4.1" height="3.8" fill="#d89a94"/>
<rect x="271.3" y="11.6" width="1.9" height="2.1" fill="#443a44"/>
<rect x="275.6" y="35.6" width="2.6" height="1.4" fill="#5a4a52"/>
<rect x="173.4" y="28.0" width="2.9" height="2.8" fill="#c08680"/>
<rect x="326.8" y="0.9" width="2.6" height="2.3" fill="#c08680"/>
<rect x="184.6" y="22.1" width="2.7" height="1.3" fill="#d6cac6"/>
<rect x="149.5" y="22.6" width="2.1" height="2.5" fill="#6a6068"/>
<rect x="305.8" y="17.2" width="2.7" height="4.1" fill="#b4746e"/>
<rect x="118.9" y="16.5" width="4.5" height="1.2" fill="#c08680"/>
<rect x="197.6" y="19.1" width="4.4" height="1.6" fill="#b4746e"/>
<rect x="255.8" y="10.0" width="2.4" height="2.8" fill="#8a7a7a"/>
<rect x="223.5" y="2.7" width="2.5" height="4.1" fill="#bc8a86"/>
<rect x="284.7" y="28.5" width="1.6" height="4.1" fill="#d6cac6"/>
<rect x="269.6" y="4.4" width="2.7" height="4.2" fill="#d0a49c"/>
<rect x="125.4" y="13.5" width="3.6" height="2.6" fill="#c48a84"/>
<rect x="193.1" y="36.1" width="3.6" height="4.7" fill="#e2dad6"/>
<rect x="153.8" y="19.6" width="3.0" height="3.8" fill="#5a4a52"/>
<rect x="212.1" y="17.4" width="4.7" height="3.9" fill="#5a4a52"/>
<rect x="242.9" y="13.3" width="3.1" height="4.5" fill="#b49c8c"/>
<rect x="300.6" y="22.1" width="3.4" height="1.7" fill="#cc9890"/>
<rect x="184.1" y="29.8" width="3.0" height="2.3" fill="#8a7a7a"/>
<rect x="304.1" y="27.1" width="2.5" height="4.5" fill="#bc8a86"/>
<rect x="266.4" y="17.0" width="3.0" height="1.4" fill="#302838"/>
<rect x="302.1" y="23.2" width="2.8" height="4.0" fill="#c08680"/>
<rect x="222.0" y="38.0" width="2.7" height="3.4" fill="#7e6a6a"/>
<rect x="252.0" y="35.0" width="2.6" height="1.6" fill="#c08680"/>
<rect x="215.7" y="18.6" width="3.4" height="2.2" fill="#8a7a7a"/>
<rect x="276.5" y="18.7" width="3.9" height="2.9" fill="#d89a94"/>
<rect x="129.2" y="20.1" width="3.8" height="2.2" fill="#b49c8c"/>
<rect x="336.6" y="3.7" width="2.2" height="1.6" fill="#7e6a6a"/>
<rect x="168.1" y="32.5" width="3.6" height="2.2" fill="#d89a94"/>
<rect x="298.3" y="31.1" width="1.3" height="3.3" fill="#6a6068"/>
<rect x="257.6" y="23.6" width="2.7" height="4.1" fill="#b4746e"/>
<rect x="194.8" y="19.3" width="2.9" height="1.9" fill="#b4746e"/>
<rect x="302.9" y="25.5" width="1.2" height="2.6" fill="#6a6068"/>
<rect x="145.4" y="19.7" width="3.6" height="3.1" fill="#e2dad6"/>
<rect x="149.4" y="33.1" width="1.8" height="4.3" fill="#cc9890"/>
<rect x="233.5" y="28.2" width="1.6" height="4.6" fill="#e2dad6"/>
<rect x="311.5" y="7.2" width="3.7" height="2.5" fill="#8a7a7a"/>
<rect x="272.4" y="15.9" width="4.5" height="2.7" fill="#6a6068"/>
<rect x="140.0" y="32.0" width="3.8" height="2.5" fill="#b49c8c"/>
<rect x="148.5" y="4.8" width="3.3" height="2.0" fill="#6a6068"/>
<rect x="140.8" y="27.3" width="3.6" height="3.9" fill="#b4746e"/>
<rect x="146.1" y="1.8" width="3.2" height="1.5" fill="#d0a49c"/>
<rect x="238.6" y="36.4" width="4.1" height="3.5" fill="#b49c8c"/>
<rect x="181.1" y="2.4" width="3.7" height="3.5" fill="#8a7a7a"/>
<rect x="217.9" y="35.8" width="2.5" height="1.7" fill="#7e6a6a"/>
<rect x="336.8" y="17.0" width="1.7" height="2.9" fill="#d89a94"/>
<rect x="294.2" y="36.7" width="2.2" height="2.7" fill="#302838"/>
<rect x="162.6" y="16.4" width="3.4" height="2.3" fill="#d0a49c"/>
<rect x="229.8" y="14.0" width="4.6" height="2.3" fill="#c48a84"/>
<rect x="323.2" y="6.2" width="1.3" height="2.7" fill="#b49c8c"/>
<rect x="268.9" y="10.2" width="2.6" height="1.4" fill="#443a44"/>
<rect x="208.3" y="13.5" width="4.4" height="4.7" fill="#6a6068"/>
<rect x="316.7" y="25.2" width="1.6" height="2.7" fill="#b49c8c"/>
<rect x="150.7" y="19.7" width="3.0" height="3.9" fill="#d6cac6"/>
<rect x="182.5" y="17.5" width="4.6" height="2.3" fill="#cc9890"/>
<rect x="261.2" y="13.1" width="3.4" height="2.7" fill="#443a44"/>
<rect x="278.8" y="22.4" width="3.6" height="2.6" fill="#d6cac6"/>
<rect x="186.7" y="17.4" width="3.7" height="2.8" fill="#6a6068"/>
<rect x="233.5" y="18.7" width="3.7" height="1.4" fill="#d6cac6"/>
<rect x="243.0" y="20.9" width="3.8" height="2.8" fill="#bc8a86"/>
<rect x="332.6" y="33.5" width="2.6" height="2.4" fill="#bc8a86"/>
<rect x="197.6" y="8.5" width="3.4" height="3.0" fill="#c08680"/>
<rect x="283.7" y="20.0" width="3.8" height="2.9" fill="#b49c8c"/>
<rect x="210.2" y="36.5" width="4.7" height="3.2" fill="#8a7a7a"/>
<rect x="278.5" y="26.4" width="4.3" height="3.9" fill="#b49c8c"/>
<rect x="173.0" y="27.8" width="2.2" height="3.3" fill="#cc9890"/>
<rect x="121.0" y="9.5" width="3.3" height="2.3" fill="#5a4a52"/>
<rect x="282.0" y="6.9" width="1.4" height="2.0" fill="#c48a84"/>
<rect x="206.3" y="29.8" width="3.7" height="2.5" fill="#5a4a52"/>
<rect x="148.7" y="23.8" width="3.5" height="2.0" fill="#b49c8c"/>
<rect x="147.1" y="37.9" width="3.1" height="4.4" fill="#d89a94"/>
<rect x="164.1" y="28.6" width="3.4" height="2.5" fill="#302838"/>
<rect x="276.1" y="30.7" width="2.3" height="1.6" fill="#b49c8c"/>
<rect x="338.5" y="13.4" width="1.9" height="2.1" fill="#d89a94"/>
<rect x="215.0" y="11.2" width="1.3" height="3.6" fill="#bc8a86"/>
<rect x="253.1" y="15.9" width="3.7" height="2.1" fill="#d89a94"/>
<rect x="224.1" y="5.6" width="1.6" height="2.3" fill="#7e6a6a"/>
<rect x="332.0" y="16.7" width="2.6" height="2.0" fill="#b4746e"/>
<rect x="208.2" y="34.1" width="4.1" height="4.1" fill="#b49c8c"/>
<rect x="159.2" y="8.8" width="2.6" height="3.8" fill="#c48a84"/>
<rect x="166.8" y="1.1" width="3.1" height="2.8" fill="#cc9890"/>
<rect x="147.2" y="30.2" width="1.8" height="4.0" fill="#bc8a86"/>
<rect x="322.5" y="2.3" width="3.3" height="2.3" fill="#6a6068"/>
<rect x="199.1" y="21.9" width="2.5" height="2.1" fill="#5a4a52"/>
<rect x="142.8" y="16.3" width="3.5" height="1.3" fill="#d6cac6"/>
<rect x="193.4" y="9.6" width="4.2" height="2.8" fill="#d6cac6"/>
<rect x="122.9" y="36.1" width="3.7" height="4.1" fill="#bc8a86"/>
<rect x="282.1" y="13.0" width="1.8" height="3.4" fill="#302838"/>
<rect x="179.8" y="35.1" width="4.1" height="4.4" fill="#d6cac6"/>
<rect x="309.8" y="7.0" width="3.9" height="2.1" fill="#c08680"/>
<rect x="231.4" y="28.4" width="1.6" height="2.7" fill="#d0a49c"/>
<rect x="154.7" y="30.7" width="4.3" height="2.7" fill="#d6cac6"/>
<rect x="225.6" y="27.4" width="3.6" height="1.5" fill="#443a44"/>
<rect x="176.8" y="9.6" width="3.7" height="4.4" fill="#c48a84"/>
<rect x="252.6" y="25.6" width="4.6" height="4.5" fill="#cc9890"/>
<rect x="184.4" y="23.6" width="3.1" height="1.4" fill="#8a7a7a"/>
<rect x="201.1" y="33.1" width="3.7" height="2.9" fill="#7e6a6a"/>
<rect x="314.3" y="23.7" width="3.9" height="1.6" fill="#443a44"/>
<rect x="301.4" y="21.5" width="2.7" height="1.8" fill="#d89a94"/>
<rect x="140.6" y="36.2" width="2.7" height="3.2" fill="#c48a84"/>
<rect x="199.3" y="0.7" width="2.7" height="3.1" fill="#b49c8c"/>
<rect x="229.0" y="16.8" width="3.3" height="3.6" fill="#5a4a52"/>
<rect x="242.8" y="5.3" width="3.0" height="3.9" fill="#b49c8c"/>
<rect x="313.9" y="16.1" width="2.7" height="2.1" fill="#443a44"/>
<rect x="250.9" y="36.0" width="1.9" height="1.4" fill="#c48a84"/>
<rect x="260.6" y="23.0" width="4.5" height="2.5" fill="#c48a84"/>
<rect x="179.7" y="35.6" width="2.1" height="2.3" fill="#302838"/>
<rect x="215.1" y="35.5" width="1.3" height="3.4" fill="#b4746e"/>
<rect x="249.4" y="13.2" width="3.1" height="3.5" fill="#c08680"/>
<rect x="141.3" y="13.1" width="2.2" height="3.0" fill="#b49c8c"/>
<rect x="258.1" y="18.5" width="1.4" height="4.2" fill="#6a6068"/>
<rect x="136.4" y="35.3" width="1.4" height="3.3" fill="#6a6068"/>
<rect x="277.7" y="35.6" width="2.4" height="4.5" fill="#8a7a7a"/>
<rect x="177.5" y="30.1" width="4.4" height="1.9" fill="#443a44"/>
<rect x="219.0" y="30.8" width="2.4" height="4.7" fill="#e2dad6"/>
<rect x="216.4" y="6.5" width="2.2" height="4.3" fill="#d0a49c"/>
<rect x="155.2" y="32.8" width="1.5" height="2.7" fill="#e2dad6"/>
<rect x="116.3" y="4.6" width="4.1" height="4.6" fill="#c08680"/>
<rect x="178.8" y="36.5" width="2.7" height="2.5" fill="#7e6a6a"/>
<rect x="299.6" y="26.5" width="2.2" height="1.6" fill="#5a4a52"/>
<rect x="138.8" y="27.5" width="4.5" height="2.6" fill="#302838"/>
<rect x="320.2" y="33.3" width="3.1" height="4.0" fill="#c08680"/>
<rect x="157.0" y="16.4" width="1.9" height="2.3" fill="#c08680"/>
<rect x="236.9" y="8.4" width="4.1" height="4.6" fill="#cc9890"/>
<rect x="324.8" y="37.9" width="2.5" height="3.1" fill="#bc8a86"/>
<rect x="285.6" y="3.3" width="3.6" height="2.3" fill="#302838"/>
<rect x="338.0" y="13.1" width="1.2" height="2.6" fill="#8a7a7a"/>
<rect x="289.2" y="8.3" width="4.5" height="2.1" fill="#443a44"/>
<rect x="329.4" y="37.9" width="3.2" height="2.4" fill="#e2dad6"/>
<rect x="279.6" y="26.5" width="3.6" height="2.5" fill="#bc8a86"/>
<rect x="194.8" y="9.1" width="1.5" height="3.1" fill="#5a4a52"/>
<rect x="189.7" y="10.8" width="1.4" height="3.1" fill="#d89a94"/>
<rect x="233.9" y="21.4" width="2.6" height="3.1" fill="#c48a84"/>
<rect x="137.4" y="27.1" width="1.7" height="1.4" fill="#cc9890"/>
<rect x="125.1" y="16.2" width="3.2" height="1.6" fill="#6a6068"/>
<rect x="181.1" y="0.9" width="4.5" height="2.3" fill="#8a7a7a"/>
<rect x="313.9" y="30.2" width="1.7" height="2.6" fill="#b49c8c"/>
<rect x="197.7" y="25.9" width="2.8" height="3.8" fill="#443a44"/>
<rect x="127.4" y="16.0" width="2.7" height="3.6" fill="#b49c8c"/>
<rect x="334.3" y="12.4" width="1.5" height="2.0" fill="#c08680"/>
<rect x="234.3" y="24.3" width="1.7" height="1.8" fill="#b49c8c"/>
<rect x="176.0" y="34.7" width="3.3" height="2.6" fill="#b4746e"/>
<rect x="153.0" y="28.2" width="4.0" height="3.3" fill="#c08680"/>
<rect x="179.9" y="1.0" width="3.3" height="2.4" fill="#d89a94"/>
<rect x="213.2" y="13.2" width="3.4" height="2.8" fill="#b4746e"/>
<rect x="247.2" y="26.0" width="2.9" height="2.9" fill="#b49c8c"/>
<rect x="339.7" y="11.9" width="2.9" height="4.6" fill="#b49c8c"/>
<rect x="240.1" y="11.9" width="1.8" height="2.7" fill="#bc8a86"/>
<rect x="154.6" y="4.9" width="4.0" height="3.2" fill="#b4746e"/>
<rect x="138.9" y="25.7" width="3.7" height="1.9" fill="#b49c8c"/>
<rect x="128.8" y="6.6" width="1.3" height="3.0" fill="#c08680"/>
<rect x="247.9" y="23.6" width="1.4" height="1.4" fill="#c48a84"/>
<rect x="274.2" y="17.4" width="2.1" height="1.7" fill="#443a44"/>
<rect x="191.0" y="12.9" width="2.0" height="2.7" fill="#c08680"/>
<rect x="205.7" y="34.6" width="2.6" height="1.3" fill="#302838"/>
<rect x="203.1" y="20.7" width="2.0" height="2.6" fill="#443a44"/>
<rect x="315.6" y="13.4" width="1.3" height="1.8" fill="#443a44"/>
<rect x="175.1" y="1.2" width="3.2" height="4.5" fill="#cc9890"/>
<rect x="156.2" y="9.1" width="3.7" height="3.4" fill="#c48a84"/>
<rect x="131.2" y="33.8" width="3.5" height="2.2" fill="#d89a94"/>
<rect x="271.0" y="37.7" width="1.2" height="1.6" fill="#8a7a7a"/>
<rect x="328.4" y="14.9" width="3.0" height="2.3" fill="#c48a84"/>
<rect x="328.3" y="17.1" width="4.3" height="3.0" fill="#d89a94"/>
<rect x="229.4" y="19.5" width="4.0" height="1.6" fill="#d0a49c"/>
<rect x="294.6" y="11.1" width="2.5" height="3.6" fill="#5a4a52"/>
<rect x="164.5" y="30.3" width="1.4" height="3.5" fill="#7e6a6a"/>
<rect x="339.5" y="32.0" width="3.0" height="3.8" fill="#6a6068"/>
<rect x="226.8" y="20.0" width="2.5" height="4.6" fill="#d6cac6"/>
<rect x="196.0" y="25.7" width="2.0" height="2.0" fill="#b4746e"/>
<rect x="324.8" y="30.4" width="1.9" height="2.9" fill="#8a7a7a"/>
<rect x="296.6" y="8.9" width="2.9" height="3.3" fill="#c08680"/>
<rect x="229.9" y="15.8" width="3.4" height="3.1" fill="#d0a49c"/>
<rect x="243.9" y="20.6" width="2.4" height="1.5" fill="#bc8a86"/>
<rect x="289.1" y="17.0" width="3.9" height="4.1" fill="#e2dad6"/>
<rect x="297.0" y="37.7" width="1.3" height="4.5" fill="#6a6068"/>
<rect x="325.5" y="22.3" width="3.7" height="4.2" fill="#b4746e"/>
<rect x="284.0" y="12.9" width="2.0" height="2.7" fill="#c48a84"/>
<rect x="182.9" y="28.9" width="1.8" height="4.0" fill="#8a7a7a"/>
<rect x="287.6" y="24.0" width="4.6" height="3.6" fill="#6a6068"/>
<rect x="214.9" y="38.5" width="4.2" height="1.7" fill="#b4746e"/>
<rect x="332.2" y="26.8" width="3.0" height="2.6" fill="#b49c8c"/>
<rect x="327.3" y="29.2" width="2.5" height="2.2" fill="#cc9890"/>
<rect x="320.8" y="12.9" width="1.3" height="1.7" fill="#d89a94"/>
<rect x="325.4" y="0.7" width="1.5" height="2.3" fill="#443a44"/>
<rect x="249.5" y="9.7" width="3.6" height="3.2" fill="#6a6068"/>
<rect x="195.4" y="35.3" width="3.4" height="2.4" fill="#bc8a86"/>
<rect x="150.2" y="7.4" width="4.3" height="2.8" fill="#302838"/>
<rect x="258.0" y="34.1" width="3.9" height="2.7" fill="#443a44"/>
<rect x="262.1" y="22.7" width="2.8" height="2.2" fill="#5a4a52"/>
<rect x="185.9" y="4.1" width="2.6" height="2.8" fill="#443a44"/>
<rect x="202.3" y="15.7" width="4.6" height="3.7" fill="#6a6068"/>
<rect x="312.8" y="8.7" width="3.6" height="2.8" fill="#b49c8c"/>
<rect x="259.5" y="4.1" width="2.9" height="1.8" fill="#c48a84"/>
<rect x="174.1" y="3.4" width="3.4" height="2.3" fill="#b4746e"/>
<rect x="216.5" y="36.2" width="2.4" height="3.4" fill="#bc8a86"/>
<rect x="320.8" y="14.3" width="3.1" height="3.6" fill="#e2dad6"/>
<rect x="265.9" y="37.3" width="2.8" height="3.3" fill="#443a44"/>
<rect x="242.1" y="4.5" width="2.8" height="2.2" fill="#5a4a52"/>
<rect x="133.7" y="26.1" width="3.0" height="4.7" fill="#d89a94"/>
<rect x="266.0" y="16.4" width="4.6" height="1.9" fill="#c08680"/>
<rect x="277.2" y="37.6" width="3.1" height="2.5" fill="#6a6068"/>
<rect x="192.8" y="9.5" width="4.0" height="4.2" fill="#d0a49c"/>
<rect x="205.6" y="17.0" width="1.2" height="3.1" fill="#7e6a6a"/>
<rect x="337.9" y="35.5" width="4.4" height="2.1" fill="#8a7a7a"/>
<rect x="189.0" y="3.4" width="4.0" height="3.1" fill="#443a44"/>
<rect x="274.0" y="2.1" width="1.5" height="4.2" fill="#302838"/>
<rect x="216.9" y="37.9" width="3.9" height="2.0" fill="#8a7a7a"/>
<rect x="202.4" y="18.1" width="2.3" height="2.0" fill="#7e6a6a"/>
<rect x="194.5" y="36.3" width="2.3" height="2.2" fill="#cc9890"/>
<rect x="297.7" y="26.5" width="1.7" height="4.5" fill="#6a6068"/>
<rect x="189.8" y="32.4" width="3.4" height="1.3" fill="#443a44"/>
<rect x="259.1" y="5.6" width="3.6" height="4.0" fill="#cc9890"/>
<rect x="303.3" y="38.2" width="2.4" height="4.4" fill="#c08680"/>
<rect x="311.8" y="5.8" width="1.6" height="4.7" fill="#b4746e"/>
<rect x="337.6" y="17.1" width="2.7" height="1.4" fill="#443a44"/>
<rect x="120.1" y="12.0" width="4.5" height="2.2" fill="#7e6a6a"/>
<rect x="181.7" y="23.6" width="3.5" height="2.8" fill="#7e6a6a"/>
<rect x="265.2" y="1.1" width="1.4" height="2.5" fill="#bc8a86"/>
<rect x="147.5" y="1.7" width="4.2" height="1.9" fill="#cc9890"/>
<rect x="154.0" y="9.6" width="4.2" height="3.2" fill="#d0a49c"/>
<rect x="263.0" y="11.1" width="3.0" height="2.4" fill="#bc8a86"/>
<rect x="140.4" y="24.3" width="1.2" height="4.4" fill="#302838"/>
<rect x="202.2" y="10.2" width="3.0" height="1.2" fill="#b49c8c"/>
<rect x="290.6" y="32.9" width="4.6" height="2.8" fill="#bc8a86"/>
<rect x="194.7" y="11.2" width="3.0" height="4.6" fill="#cc9890"/>
<rect x="231.7" y="15.1" width="1.6" height="2.8" fill="#b4746e"/>
<rect x="227.1" y="12.1" width="2.8" height="1.2" fill="#8a7a7a"/>
<rect x="135.3" y="9.2" width="4.3" height="4.5" fill="#cc9890"/>
<rect x="124.1" y="36.3" width="1.9" height="4.6" fill="#bc8a86"/>
<rect x="252.1" y="16.6" width="1.8" height="4.4" fill="#e2dad6"/>
<rect x="292.9" y="28.6" width="3.6" height="1.6" fill="#bc8a86"/>
<rect x="168.0" y="30.5" width="1.4" height="1.5" fill="#8a7a7a"/>
<rect x="175.8" y="6.4" width="4.5" height="3.4" fill="#d0a49c"/>
<rect x="311.5" y="2.5" width="2.5" height="2.0" fill="#443a44"/>
<rect x="268.2" y="24.9" width="3.5" height="1.8" fill="#bc8a86"/>
<rect x="285.2" y="2.0" width="3.7" height="2.8" fill="#b49c8c"/>
<rect x="166.8" y="31.4" width="1.5" height="4.4" fill="#c48a84"/>
<rect x="121.5" y="6.2" width="4.4" height="4.1" fill="#7e6a6a"/>
<rect x="144.9" y="16.9" width="2.1" height="2.0" fill="#bc8a86"/>
<rect x="168.7" y="16.7" width="3.4" height="3.4" fill="#302838"/>
<rect x="211.7" y="26.6" width="2.5" height="2.1" fill="#b49c8c"/>
<rect x="137.3" y="9.8" width="2.9" height="4.6" fill="#c08680"/>
<rect x="142.8" y="1.6" width="4.2" height="3.2" fill="#d89a94"/>
<rect x="244.9" y="7.2" width="1.2" height="2.5" fill="#b4746e"/>
<rect x="330.3" y="3.1" width="4.0" height="4.3" fill="#5a4a52"/>
<rect x="181.5" y="21.1" width="4.6" height="4.3" fill="#d89a94"/>
<rect x="235.7" y="35.3" width="1.7" height="3.8" fill="#8a7a7a"/>
<rect x="191.3" y="18.1" width="4.0" height="2.1" fill="#c48a84"/>
<rect x="237.2" y="31.3" width="2.0" height="3.4" fill="#b4746e"/>
<rect x="287.1" y="16.2" width="2.0" height="2.6" fill="#d6cac6"/>
<rect x="119.5" y="9.6" width="2.7" height="4.6" fill="#5a4a52"/>
<rect x="273.0" y="9.9" width="3.8" height="4.7" fill="#d6cac6"/>
<rect x="197.3" y="17.1" width="3.6" height="2.9" fill="#e2dad6"/>
<rect x="310.2" y="16.8" width="1.8" height="1.6" fill="#5a4a52"/>
<rect x="194.2" y="19.5" width="1.6" height="2.4" fill="#302838"/>
<rect x="134.9" y="19.6" width="4.1" height="3.3" fill="#d6cac6"/>
<rect x="250.9" y="19.4" width="1.5" height="4.4" fill="#7e6a6a"/>
<rect x="234.8" y="6.9" width="2.2" height="1.6" fill="#302838"/>
<rect x="148.5" y="26.3" width="4.0" height="2.8" fill="#b4746e"/>
<rect x="190.6" y="31.9" width="3.6" height="1.5" fill="#d6cac6"/>
<rect x="315.3" y="12.5" width="3.8" height="3.0" fill="#e2dad6"/>
<rect x="136.3" y="2.3" width="4.5" height="2.2" fill="#443a44"/>
<rect x="287.5" y="24.9" width="4.5" height="4.5" fill="#d89a94"/>
<path d="M200 10L246 4L248 39L204 39Z" fill="#b4a088" opacity="0.75"/>
<rect x="245" y="0" width="5" height="39" fill="#5a5658" opacity="0.8"/>
<rect x="118" y="0" width="6" height="39" fill="#504a4a" opacity="0.6"/>
<rect x="334" y="0" width="4" height="39" fill="#3a3a50" opacity="0.8"/>
</g>
<rect x="116" y="0" width="224" height="39" fill="#1a1418" opacity="0.1"/>
<defs><linearGradient id="fade" x1="0" x2="1"><stop offset="0" stop-color="#202020" stop-opacity="1"/><stop offset="1" stop-color="#202020" stop-opacity="0"/></linearGradient></defs>
<rect x="116" y="0" width="6" height="39" fill="url(#fade)" opacity="0.6"/>
<path d="M205 39L203 7.5L249 1.5" stroke="#e8d21a" stroke-width="1.4" fill="none"/>
<path d="M338.5 0L339.5 20" stroke="#f0e020" stroke-width="2" fill="none"/>
<path d="M199 36C196 31 195 29.5 195 27.5A4 4 0 0 1 203 27.5C203 29.5 202 31 199 36Z" fill="#e0b020"/>
<circle cx="199" cy="27.5" r="1.4" fill="#f8f0c0"/>
<circle cx="290.5" cy="37.5" r="4.2" fill="#127a6a"/><circle cx="290.5" cy="37.5" r="1.8" fill="#e8f0f0"/>
</svg>
<div class="a" style="left:0;top:114px;width:340px;height:1px;background:#2e2e2e"></div>
<div class="t" style="left:9.3px;top:89px;color:#f4f4f4;font-size:13.66px">Kleos 2022</div>
<div class="t" style="left:86.6px;top:89px;color:#f4f4f4;font-size:13.66px">//</div>
<div class="t" style="left:102.4px;top:89px;color:#f4f4f4;font-size:13.66px">Esquina Mercurio / Esteban 2</div>
<div class="a" style="left:340px;top:76px;width:679px;height:39px;background:#353535"></div>
<svg style="left:355px;top:88px" width="16" height="16"><rect x="0.9" y="0.9" width="13.7" height="13.7" rx="1.6" stroke="#cfcfcf" stroke-width="1.7" fill="none"/><path d="M3.6 4.6H5M6.6 4.6H11.8M3.6 7.75H5M6.6 7.75H11.8M3.6 10.9H5M6.6 10.9H11.8" stroke="#cfcfcf" stroke-width="1.5"/></svg>
<div class="t" style="left:377.9px;top:89px;font-size:13.5px;letter-spacing:0.85px;color:#cdcdcd">Info</div>
<svg style="left:427px;top:87px" width="20" height="18"><path d="M0.4 8.2H3.8L4.6 7L5.4 9.6L6.2 3.5L7 13.5L7.6 1.8L8.3 14.6L9 4.2L9.7 12L10.4 6.4L11.1 10L11.8 7.2L12.5 9.2L13.2 7.6L13.9 8.8L14.6 7.8L15.3 8.5L18.5 8.2" stroke="#6cc23a" stroke-width="0.8" fill="none" stroke-linejoin="miter"/></svg>
<div class="t" style="left:452.3px;top:89px;font-size:13.5px;color:#6cc23a">Sonidos</div>
<svg style="left:528px;top:88px" width="17" height="16"><path d="M0.5 2.2L5.2 0.6V13.8L0.5 15.4Z M6.2 0.6L10.8 2.2V15.4L6.2 13.8Z M11.8 2.2L16.5 0.6V13.8L11.8 15.4Z" fill="#cfcfcf"/></svg>
<div class="t" style="left:551.3px;top:89px;font-size:13.5px;letter-spacing:0.5px;color:#cdcdcd">Mapa</div>
<svg style="left:613px;top:87.5px" width="17" height="17"><circle cx="8.2" cy="8.2" r="7.2" stroke="#cfcfcf" stroke-width="1.6" fill="none"/><path d="M6.2 4.7L11.4 8.2L6.2 11.7Z" fill="#cfcfcf"/></svg>
<div class="t" style="left:636.6px;top:89px;font-size:13.5px;letter-spacing:0.6px;color:#cdcdcd">Tocar</div>
<div class="t" style="left:864.6px;top:90px;font-size:12.4px;color:#f2f2f2">ES</div>
<div class="t" style="left:893.2px;top:90px;font-size:12px;color:#5e5e5e">EN</div>
<svg style="left:925px;top:87px" width="18" height="18"><circle cx="8.5" cy="8.6" r="6.2" stroke="#5a5a5a" stroke-width="2.8" fill="none"/><path d="M3.2 5.5A6.2 6.2 0 0 0 7 14.6" stroke="#e0e0e0" stroke-width="2.8" fill="none"/><path d="M8.5 2.4A6.2 6.2 0 0 0 3.2 5.5" stroke="#a8a8a8" stroke-width="2.8" fill="none"/><path d="M8.5 2.4A6.2 6.2 0 0 1 14.5 7" stroke="#8a8a8a" stroke-width="2.8" fill="none"/></svg>
<div class="t" style="left:952px;top:91px;font-size:9.8px;color:#f2f2f2;-webkit-text-stroke:0.45px #f2f2f2">29 / 11</div>
<svg style="left:995px;top:87px" width="18" height="18"><circle cx="8.7" cy="8.6" r="7.6" stroke="#8a8a8a" stroke-width="1.4" fill="none"/><circle cx="8.7" cy="6.6" r="2.6" stroke="#8a8a8a" stroke-width="1.4" fill="none"/><path d="M3.8 14.2C4.8 11.6 6.5 10.8 8.7 10.8C10.9 10.8 12.6 11.6 13.6 14.2" stroke="#8a8a8a" stroke-width="1.4" fill="none"/></svg>
<div class="a" style="left:0;top:115px;width:340px;height:28px;background:#488980"></div>
<div class="t" style="left:4.0px;top:123px;font-size:13.66px;color:#f3f3f3">La parra tapa la ventana-1</div>
<svg style="left:0;top:0" width="1" height="1"><circle cx="326.50" cy="129.40" r="7.60" stroke="#dcdcd8" stroke-width="1.25" fill="none"/><path d="M324.80 125.80L329.80 129.40L324.80 133.00Z" fill="#dcdcd8"/></svg>
<div class="a" style="left:0;top:143px;width:340px;height:259px;background:#4fc2b5"></div>
<svg style="left:4.00px;top:147.00px;overflow:hidden" width="56.8" height="56" viewBox="0 0 57 56" preserveAspectRatio="none"><defs><linearGradient id="sky147" x1="0.2" y1="0" x2="0" y2="1"><stop offset="0" stop-color="#8ab6f2"/><stop offset="0.6" stop-color="#a8caf2"/><stop offset="1" stop-color="#c4daf2"/></linearGradient><filter id="tb147" x="-5%" y="-5%" width="110%" height="110%"><feGaussianBlur stdDeviation="0.5"/></filter></defs><g filter="url(#tb147)"><rect x="-2" y="-2" width="61" height="60" fill="url(#sky147)"/><ellipse cx="6" cy="1.5" rx="3" ry="1.2" fill="#d8e6f8"/><ellipse cx="20" cy="2" rx="2" ry="1.5" fill="#d8e6f8"/><path d="M-2 29Q5 27 12 30L13 46L-2 46Z" fill="#f4f6f8"/><rect x="-2" y="45" width="12" height="13" fill="#c8ccd4"/><rect x="1.5" y="51" width="2" height="2" fill="#b06060"/><path d="M48 27L57 10L58 27Z" fill="#ece6da"/><rect x="45" y="26" width="13" height="5" fill="#6a7a52"/><rect x="46" y="31" width="12" height="26" fill="#dcd6ca"/><rect x="53" y="39" width="4" height="17" fill="#98aac0"/><rect x="17" y="9" width="21" height="7" fill="#6e6a64"/><path d="M19 12Q21 5 27 6L27 12Z" fill="#7a9a4a"/><rect x="27" y="7" width="10" height="2.2" fill="#5a6278"/><rect x="17" y="15" width="23" height="12" fill="#d8aca4"/><rect x="16" y="20" width="6" height="7" fill="#cfc6c2"/><rect x="30" y="19" width="8" height="6" fill="#bcbcc4"/><path d="M9 57L10 42Q13 33 17 28Q28 25 40 26Q46 28 48 31L47 57Z" fill="#46563a"/><path d="M14 57L16 42Q24 34 36 36L42 57Z" fill="#3a4830"/><path d="M40 49Q46 45 52 50L57 57L40 57Z" fill="#34442a"/><rect x="43.6" y="43" width="4.8" height="5" fill="#7890a8"/><circle cx="33.8" cy="48.8" r="1.4" fill="#5a6c40" opacity="0.7"/><circle cx="39.2" cy="35.0" r="1.5" fill="#5a6c40" opacity="0.7"/><circle cx="16.0" cy="41.1" r="1.0" fill="#2c3822" opacity="0.7"/><circle cx="15.6" cy="35.0" r="1.0" fill="#2c3822" opacity="0.7"/><circle cx="18.4" cy="52.3" r="0.8" fill="#66784a" opacity="0.7"/><circle cx="39.9" cy="31.9" r="0.7" fill="#66784a" opacity="0.7"/><circle cx="12.1" cy="52.4" r="1.4" fill="#2c3822" opacity="0.7"/><circle cx="45.6" cy="32.6" r="0.9" fill="#2c3822" opacity="0.7"/><circle cx="45.7" cy="43.1" r="0.8" fill="#2c3822" opacity="0.7"/><circle cx="45.9" cy="33.5" r="0.9" fill="#66784a" opacity="0.7"/><circle cx="24.6" cy="32.6" r="0.9" fill="#2c3822" opacity="0.7"/><circle cx="23.6" cy="50.9" r="1.2" fill="#5a6c40" opacity="0.7"/><circle cx="36.8" cy="29.8" r="1.4" fill="#4e5e3c" opacity="0.7"/><circle cx="28.8" cy="36.8" r="1.1" fill="#66784a" opacity="0.7"/><circle cx="18.2" cy="35.2" r="1.5" fill="#5a6c40" opacity="0.7"/><circle cx="24.5" cy="39.3" r="1.0" fill="#66784a" opacity="0.7"/><circle cx="32.2" cy="28.3" r="1.3" fill="#5a6c40" opacity="0.7"/><circle cx="33.8" cy="54.7" r="1.4" fill="#5a6c40" opacity="0.7"/><circle cx="44.5" cy="54.4" r="1.1" fill="#4e5e3c" opacity="0.7"/><circle cx="43.2" cy="35.0" r="0.7" fill="#66784a" opacity="0.7"/><circle cx="38.2" cy="50.3" r="0.6" fill="#4e5e3c" opacity="0.7"/><circle cx="45.1" cy="30.6" r="1.1" fill="#4e5e3c" opacity="0.7"/><circle cx="24.7" cy="32.1" r="1.5" fill="#4e5e3c" opacity="0.7"/><circle cx="31.1" cy="36.7" r="0.9" fill="#4e5e3c" opacity="0.7"/><circle cx="40.0" cy="45.6" r="1.6" fill="#4e5e3c" opacity="0.7"/><circle cx="17.7" cy="29.4" r="0.6" fill="#66784a" opacity="0.7"/><circle cx="37.9" cy="37.6" r="1.1" fill="#4e5e3c" opacity="0.7"/><circle cx="26.8" cy="29.6" r="1.4" fill="#5a6c40" opacity="0.7"/><circle cx="23.7" cy="33.8" r="1.2" fill="#2c3822" opacity="0.7"/><circle cx="39.6" cy="31.0" r="1.0" fill="#66784a" opacity="0.7"/><circle cx="14.1" cy="39.8" r="1.1" fill="#2c3822" opacity="0.7"/><circle cx="47.0" cy="51.9" r="1.6" fill="#66784a" opacity="0.7"/><circle cx="36.1" cy="36.9" r="0.9" fill="#4e5e3c" opacity="0.7"/><circle cx="26.1" cy="32.1" r="1.4" fill="#66784a" opacity="0.7"/><circle cx="30.6" cy="33.0" r="1.5" fill="#66784a" opacity="0.7"/><circle cx="18.3" cy="41.8" r="0.7" fill="#4e5e3c" opacity="0.7"/><circle cx="39.8" cy="38.0" r="1.4" fill="#5a6c40" opacity="0.7"/><circle cx="24.7" cy="47.7" r="1.4" fill="#4e5e3c" opacity="0.7"/><circle cx="21.3" cy="55.5" r="1.6" fill="#4e5e3c" opacity="0.7"/><circle cx="23.9" cy="33.0" r="1.1" fill="#5a6c40" opacity="0.7"/><circle cx="39.1" cy="37.1" r="1.1" fill="#4e5e3c" opacity="0.7"/><circle cx="40.6" cy="46.1" r="0.9" fill="#4e5e3c" opacity="0.7"/><circle cx="34.5" cy="48.7" r="1.0" fill="#66784a" opacity="0.7"/><circle cx="41.5" cy="52.4" r="1.6" fill="#66784a" opacity="0.7"/><circle cx="45.5" cy="42.5" r="0.8" fill="#2c3822" opacity="0.7"/></g></svg>
<svg style="left:0;top:0" width="1" height="1"><circle cx="32.40" cy="175.20" r="14.55" stroke="#4fc2b5" stroke-width="3.30" fill="none"/><path d="M28.80 168.00L38.60 175.20L28.80 182.40Z" fill="#4fc2b5"/></svg>
<div class="t" style="left:67.0px;top:147px;font-size:11.95px;color:#f3f3f3">Esquina Mercurio - Esteban 2.mp3</div>
<div class="t" style="right:683.30px;top:147px;font-size:11.95px;color:#f3f3f3">1m 4s</div>
<svg style="left:0;top:0" width="1" height="1"><path d="M67.5 171.7 L68.5 171.6 L69.5 171.6 L70.5 171.5 L71.5 171.4 L72.5 171.2 L73.5 171.1 L74.5 171.3 L75.5 171.5 L76.5 171.6 L77.5 171.6 L78.5 171.6 L79.5 171.6 L80.5 171.6 L81.5 171.5 L82.5 171.5 L83.5 171.6 L84.5 171.8 L85.5 171.9 L86.5 171.9 L87.5 171.7 L88.5 171.6 L89.5 171.6 L90.5 171.5 L91.5 171.5 L92.5 171.4 L93.5 171.3 L94.5 171.3 L95.5 171.5 L96.5 171.8 L97.5 172.0 L98.5 172.0 L99.5 171.9 L100.5 171.8 L101.5 171.9 L102.5 172.0 L103.5 172.1 L104.5 171.8 L105.5 171.5 L106.5 171.3 L107.5 171.3 L108.5 171.4 L109.5 171.4 L110.5 171.6 L111.5 171.9 L112.5 172.1 L113.5 171.8 L114.5 171.3 L115.5 171.1 L116.5 171.1 L117.5 171.1 L118.5 171.1 L119.5 171.2 L120.5 171.3 L121.5 171.4 L122.5 171.4 L123.5 171.5 L124.5 171.5 L125.5 171.6 L126.5 171.8 L127.5 172.0 L128.5 172.0 L129.5 172.1 L130.5 172.1 L131.5 172.0 L132.5 171.7 L133.5 171.6 L134.5 171.7 L135.5 172.0 L136.5 172.1 L137.5 172.0 L138.5 172.0 L139.5 171.9 L140.5 171.9 L141.5 171.9 L142.5 171.9 L143.5 171.9 L144.5 172.1 L145.5 172.1 L146.5 172.0 L147.5 171.8 L148.5 171.6 L149.5 171.6 L150.5 171.7 L151.5 171.7 L152.5 171.6 L153.5 171.3 L154.5 171.2 L155.5 171.3 L156.5 171.5 L157.5 171.6 L158.5 171.5 L159.5 171.5 L160.5 171.4 L161.5 171.5 L162.5 171.6 L163.5 171.6 L164.5 171.6 L165.5 171.5 L166.5 171.4 L167.5 171.5 L168.5 171.6 L169.5 171.6 L170.5 171.7 L171.5 171.8 L172.5 171.8 L173.5 171.6 L174.5 171.3 L175.5 171.1 L176.5 171.1 L177.5 171.1 L178.5 171.1 L179.5 171.1 L180.5 171.2 L181.5 171.2 L182.5 171.3 L183.5 171.3 L184.5 171.4 L185.5 171.5 L186.5 171.7 L187.5 171.8 L188.5 171.8 L189.5 171.9 L190.5 171.9 L191.5 171.9 L192.5 171.8 L193.5 171.8 L194.5 171.9 L195.5 172.0 L196.5 172.1 L197.5 171.9 L198.5 171.5 L199.5 171.3 L200.5 171.2 L201.5 171.2 L202.5 171.0 L203.5 170.9 L204.5 171.0 L205.5 171.1 L206.5 171.3 L207.5 171.6 L208.5 171.7 L209.5 171.6 L210.5 171.3 L211.5 171.1 L212.5 171.1 L213.5 171.2 L214.5 171.2 L215.5 171.5 L216.5 171.9 L217.5 172.1 L218.5 172.1 L219.5 172.0 L220.5 171.9 L221.5 171.7 L222.5 171.3 L223.5 171.1 L224.5 171.3 L225.5 171.5 L226.5 171.6 L227.5 171.5 L228.5 171.2 L229.5 171.1 L230.5 171.2 L231.5 171.5 L232.5 171.7 L233.5 171.8 L234.5 172.0 L235.5 172.1 L236.5 171.9 L237.5 171.6 L238.5 171.5 L239.5 171.4 L240.5 171.3 L241.5 171.3 L242.5 171.4 L243.5 171.7 L244.5 171.9 L245.5 171.9 L246.5 171.9 L247.5 171.8 L248.5 171.5 L249.5 171.2 L250.5 171.2 L251.5 171.3 L252.5 171.2 L253.5 171.1 L254.5 171.1 L255.5 171.3 L256.5 171.3 L257.5 171.5 L258.5 171.8 L259.5 172.0 L260.5 172.0 L261.5 171.9 L262.5 171.9 L263.5 171.9 L264.5 172.0 L265.5 172.0 L266.5 172.1 L267.5 172.1 L268.5 172.1 L269.5 171.9 L270.5 171.5 L271.5 171.3 L272.5 171.4 L273.5 171.8 L274.5 172.0 L275.5 171.8 L276.5 171.6 L277.5 171.5 L278.5 171.6 L279.5 171.6 L280.5 171.7 L281.5 171.7 L282.5 171.9 L283.5 171.9 L284.5 171.8 L285.5 171.5 L286.5 171.3 L287.5 171.5 L288.5 171.8 L289.5 172.0 L290.5 171.9 L291.5 171.6 L292.5 171.4 L293.5 171.6 L294.5 171.9 L295.5 172.0 L296.5 171.9 L297.5 171.8 L298.5 171.7 L299.5 171.7 L300.5 171.9 L301.5 171.9 L302.5 171.9 L303.5 171.9 L304.5 171.9 L305.5 171.7 L306.5 171.3 L307.5 171.1 L308.5 171.1 L309.5 171.2 L310.5 171.3 L311.5 171.4 L312.5 171.7 L313.5 171.8 L314.5 171.6 L315.5 171.3 L316.5 171.2 L317.5 171.3 L318.5 171.6 L319.5 171.8 L320.5 171.7 L321.5 171.5 L322.5 171.3 L323.5 171.1 L324.5 170.7 L325.5 170.4 L326.5 170.4 L327.5 170.5 L328.5 170.6 L329.5 170.8 L330.5 171.1 L331.5 171.4 L332.5 171.3 L333.5 170.9 L333.5 175.5 L332.5 175.6 L331.5 175.7 L330.5 175.9 L329.5 176.2 L328.5 176.3 L327.5 176.3 L326.5 176.2 L325.5 176.1 L324.5 175.9 L323.5 175.5 L322.5 175.3 L321.5 175.3 L320.5 175.5 L319.5 175.5 L318.5 175.5 L317.5 175.5 L316.5 175.5 L315.5 175.4 L314.5 175.3 L313.5 175.2 L312.5 175.1 L311.5 174.9 L310.5 174.8 L309.5 175.0 L308.5 175.3 L307.5 175.5 L306.5 175.4 L305.5 175.4 L304.5 175.3 L303.5 175.3 L302.5 175.2 L301.5 175.2 L300.5 175.2 L299.5 175.3 L298.5 175.3 L297.5 175.3 L296.5 175.4 L295.5 175.4 L294.5 175.4 L293.5 175.3 L292.5 175.3 L291.5 175.2 L290.5 175.1 L289.5 175.1 L288.5 174.9 L287.5 174.7 L286.5 174.5 L285.5 174.8 L284.5 175.3 L283.5 175.5 L282.5 175.4 L281.5 175.0 L280.5 174.8 L279.5 174.9 L278.5 175.1 L277.5 175.3 L276.5 175.2 L275.5 175.1 L274.5 175.0 L273.5 175.0 L272.5 175.1 L271.5 175.1 L270.5 175.0 L269.5 174.6 L268.5 174.5 L267.5 174.7 L266.5 175.2 L265.5 175.5 L264.5 175.4 L263.5 175.3 L262.5 175.2 L261.5 175.3 L260.5 175.4 L259.5 175.5 L258.5 175.2 L257.5 174.7 L256.5 174.5 L255.5 174.5 L254.5 174.5 L253.5 174.5 L252.5 174.6 L251.5 174.9 L250.5 175.2 L249.5 175.4 L248.5 175.5 L247.5 175.3 L246.5 175.2 L245.5 175.2 L244.5 175.2 L243.5 175.2 L242.5 175.2 L241.5 175.2 L240.5 175.3 L239.5 175.4 L238.5 175.5 L237.5 175.5 L236.5 175.5 L235.5 175.4 L234.5 175.3 L233.5 175.0 L232.5 174.8 L231.5 174.8 L230.5 174.7 L229.5 174.6 L228.5 174.7 L227.5 175.0 L226.5 175.1 L225.5 175.0 L224.5 174.9 L223.5 174.9 L222.5 174.8 L221.5 174.7 L220.5 174.6 L219.5 174.6 L218.5 174.5 L217.5 174.5 L216.5 174.6 L215.5 174.8 L214.5 174.9 L213.5 174.9 L212.5 174.8 L211.5 174.7 L210.5 174.7 L209.5 174.5 L208.5 174.5 L207.5 174.5 L206.5 174.6 L205.5 174.8 L204.5 175.2 L203.5 175.9 L202.5 176.1 L201.5 175.7 L200.5 175.1 L199.5 174.8 L198.5 174.9 L197.5 175.0 L196.5 175.1 L195.5 175.2 L194.5 175.3 L193.5 175.4 L192.5 175.3 L191.5 175.1 L190.5 175.1 L189.5 175.0 L188.5 174.8 L187.5 174.7 L186.5 174.7 L185.5 174.6 L184.5 174.5 L183.5 174.7 L182.5 175.1 L181.5 175.2 L180.5 175.1 L179.5 174.8 L178.5 174.6 L177.5 174.7 L176.5 174.7 L175.5 174.8 L174.5 174.9 L173.5 175.0 L172.5 175.1 L171.5 175.2 L170.5 175.3 L169.5 175.4 L168.5 175.2 L167.5 174.9 L166.5 174.7 L165.5 174.9 L164.5 175.1 L163.5 175.2 L162.5 175.1 L161.5 174.8 L160.5 174.7 L159.5 174.9 L158.5 175.3 L157.5 175.5 L156.5 175.2 L155.5 174.8 L154.5 174.5 L153.5 174.5 L152.5 174.5 L151.5 174.6 L150.5 174.7 L149.5 174.8 L148.5 174.9 L147.5 175.0 L146.5 175.1 L145.5 175.1 L144.5 175.2 L143.5 175.3 L142.5 175.4 L141.5 175.4 L140.5 175.5 L139.5 175.5 L138.5 175.3 L137.5 174.9 L136.5 174.7 L135.5 174.9 L134.5 175.3 L133.5 175.5 L132.5 175.4 L131.5 175.3 L130.5 175.3 L129.5 175.1 L128.5 174.8 L127.5 174.7 L126.5 174.7 L125.5 174.7 L124.5 174.7 L123.5 174.9 L122.5 175.2 L121.5 175.3 L120.5 175.4 L119.5 175.4 L118.5 175.4 L117.5 175.2 L116.5 174.8 L115.5 174.6 L114.5 174.6 L113.5 174.6 L112.5 174.7 L111.5 174.8 L110.5 175.2 L109.5 175.4 L108.5 175.3 L107.5 175.2 L106.5 175.1 L105.5 175.1 L104.5 175.0 L103.5 175.0 L102.5 175.1 L101.5 175.4 L100.5 175.5 L99.5 175.4 L98.5 175.1 L97.5 174.9 L96.5 174.9 L95.5 174.9 L94.5 174.9 L93.5 174.9 L92.5 175.0 L91.5 175.1 L90.5 175.0 L89.5 174.8 L88.5 174.7 L87.5 174.8 L86.5 175.0 L85.5 175.1 L84.5 175.0 L83.5 174.7 L82.5 174.5 L81.5 174.5 L80.5 174.5 L79.5 174.5 L78.5 174.6 L77.5 174.7 L76.5 174.8 L75.5 174.8 L74.5 174.8 L73.5 174.8 L72.5 174.9 L71.5 175.2 L70.5 175.3 L69.5 175.2 L68.5 174.9 L67.5 174.7Z" fill="#f0f0f0"/></svg>
<svg style="left:4.00px;top:211.85px;overflow:hidden" width="56.8" height="56" viewBox="0 0 57 56" preserveAspectRatio="none"><defs><linearGradient id="sky211" x1="0.2" y1="0" x2="0" y2="1"><stop offset="0" stop-color="#8ab6f2"/><stop offset="0.6" stop-color="#a8caf2"/><stop offset="1" stop-color="#c4daf2"/></linearGradient><filter id="tb211" x="-5%" y="-5%" width="110%" height="110%"><feGaussianBlur stdDeviation="0.5"/></filter></defs><g filter="url(#tb211)"><rect x="-2" y="-2" width="61" height="60" fill="url(#sky211)"/><ellipse cx="6" cy="1.5" rx="3" ry="1.2" fill="#d8e6f8"/><ellipse cx="20" cy="2" rx="2" ry="1.5" fill="#d8e6f8"/><path d="M-2 29Q5 27 12 30L13 46L-2 46Z" fill="#f4f6f8"/><rect x="-2" y="45" width="12" height="13" fill="#c8ccd4"/><rect x="1.5" y="51" width="2" height="2" fill="#b06060"/><path d="M48 27L57 10L58 27Z" fill="#ece6da"/><rect x="45" y="26" width="13" height="5" fill="#6a7a52"/><rect x="46" y="31" width="12" height="26" fill="#dcd6ca"/><rect x="53" y="39" width="4" height="17" fill="#98aac0"/><rect x="17" y="9" width="21" height="7" fill="#6e6a64"/><path d="M19 12Q21 5 27 6L27 12Z" fill="#7a9a4a"/><rect x="27" y="7" width="10" height="2.2" fill="#5a6278"/><rect x="17" y="15" width="23" height="12" fill="#d8aca4"/><rect x="16" y="20" width="6" height="7" fill="#cfc6c2"/><rect x="30" y="19" width="8" height="6" fill="#bcbcc4"/><path d="M9 57L10 42Q13 33 17 28Q28 25 40 26Q46 28 48 31L47 57Z" fill="#46563a"/><path d="M14 57L16 42Q24 34 36 36L42 57Z" fill="#3a4830"/><path d="M40 49Q46 45 52 50L57 57L40 57Z" fill="#34442a"/><rect x="43.6" y="43" width="4.8" height="5" fill="#7890a8"/><circle cx="33.8" cy="48.8" r="1.4" fill="#5a6c40" opacity="0.7"/><circle cx="39.2" cy="35.0" r="1.5" fill="#5a6c40" opacity="0.7"/><circle cx="16.0" cy="41.1" r="1.0" fill="#2c3822" opacity="0.7"/><circle cx="15.6" cy="35.0" r="1.0" fill="#2c3822" opacity="0.7"/><circle cx="18.4" cy="52.3" r="0.8" fill="#66784a" opacity="0.7"/><circle cx="39.9" cy="31.9" r="0.7" fill="#66784a" opacity="0.7"/><circle cx="12.1" cy="52.4" r="1.4" fill="#2c3822" opacity="0.7"/><circle cx="45.6" cy="32.6" r="0.9" fill="#2c3822" opacity="0.7"/><circle cx="45.7" cy="43.1" r="0.8" fill="#2c3822" opacity="0.7"/><circle cx="45.9" cy="33.5" r="0.9" fill="#66784a" opacity="0.7"/><circle cx="24.6" cy="32.6" r="0.9" fill="#2c3822" opacity="0.7"/><circle cx="23.6" cy="50.9" r="1.2" fill="#5a6c40" opacity="0.7"/><circle cx="36.8" cy="29.8" r="1.4" fill="#4e5e3c" opacity="0.7"/><circle cx="28.8" cy="36.8" r="1.1" fill="#66784a" opacity="0.7"/><circle cx="18.2" cy="35.2" r="1.5" fill="#5a6c40" opacity="0.7"/><circle cx="24.5" cy="39.3" r="1.0" fill="#66784a" opacity="0.7"/><circle cx="32.2" cy="28.3" r="1.3" fill="#5a6c40" opacity="0.7"/><circle cx="33.8" cy="54.7" r="1.4" fill="#5a6c40" opacity="0.7"/><circle cx="44.5" cy="54.4" r="1.1" fill="#4e5e3c" opacity="0.7"/><circle cx="43.2" cy="35.0" r="0.7" fill="#66784a" opacity="0.7"/><circle cx="38.2" cy="50.3" r="0.6" fill="#4e5e3c" opacity="0.7"/><circle cx="45.1" cy="30.6" r="1.1" fill="#4e5e3c" opacity="0.7"/><circle cx="24.7" cy="32.1" r="1.5" fill="#4e5e3c" opacity="0.7"/><circle cx="31.1" cy="36.7" r="0.9" fill="#4e5e3c" opacity="0.7"/><circle cx="40.0" cy="45.6" r="1.6" fill="#4e5e3c" opacity="0.7"/><circle cx="17.7" cy="29.4" r="0.6" fill="#66784a" opacity="0.7"/><circle cx="37.9" cy="37.6" r="1.1" fill="#4e5e3c" opacity="0.7"/><circle cx="26.8" cy="29.6" r="1.4" fill="#5a6c40" opacity="0.7"/><circle cx="23.7" cy="33.8" r="1.2" fill="#2c3822" opacity="0.7"/><circle cx="39.6" cy="31.0" r="1.0" fill="#66784a" opacity="0.7"/><circle cx="14.1" cy="39.8" r="1.1" fill="#2c3822" opacity="0.7"/><circle cx="47.0" cy="51.9" r="1.6" fill="#66784a" opacity="0.7"/><circle cx="36.1" cy="36.9" r="0.9" fill="#4e5e3c" opacity="0.7"/><circle cx="26.1" cy="32.1" r="1.4" fill="#66784a" opacity="0.7"/><circle cx="30.6" cy="33.0" r="1.5" fill="#66784a" opacity="0.7"/><circle cx="18.3" cy="41.8" r="0.7" fill="#4e5e3c" opacity="0.7"/><circle cx="39.8" cy="38.0" r="1.4" fill="#5a6c40" opacity="0.7"/><circle cx="24.7" cy="47.7" r="1.4" fill="#4e5e3c" opacity="0.7"/><circle cx="21.3" cy="55.5" r="1.6" fill="#4e5e3c" opacity="0.7"/><circle cx="23.9" cy="33.0" r="1.1" fill="#5a6c40" opacity="0.7"/><circle cx="39.1" cy="37.1" r="1.1" fill="#4e5e3c" opacity="0.7"/><circle cx="40.6" cy="46.1" r="0.9" fill="#4e5e3c" opacity="0.7"/><circle cx="34.5" cy="48.7" r="1.0" fill="#66784a" opacity="0.7"/><circle cx="41.5" cy="52.4" r="1.6" fill="#66784a" opacity="0.7"/><circle cx="45.5" cy="42.5" r="0.8" fill="#2c3822" opacity="0.7"/></g></svg>
<svg style="left:0;top:0" width="1" height="1"><circle cx="32.40" cy="240.05" r="14.55" stroke="#4fc2b5" stroke-width="3.30" fill="none"/><path d="M28.80 232.85L38.60 240.05L28.80 247.25Z" fill="#4fc2b5"/></svg>
<div class="t" style="left:67.0px;top:212px;font-size:11.95px;color:#f3f3f3">Esquina Mercurio - Esteban 2.mp3</div>
<div class="t" style="right:683.30px;top:212px;font-size:11.95px;color:#f3f3f3">21.73s</div>
<svg style="left:0;top:0" width="1" height="1"><path d="M67.5 236.7 L68.5 236.6 L69.5 236.5 L70.5 236.5 L71.5 236.4 L72.5 236.3 L73.5 236.1 L74.5 236.0 L75.5 236.0 L76.5 236.0 L77.5 236.1 L78.5 236.5 L79.5 236.8 L80.5 236.9 L81.5 236.8 L82.5 236.8 L83.5 236.8 L84.5 236.8 L85.5 236.9 L86.5 236.7 L87.5 236.5 L88.5 236.3 L89.5 236.4 L90.5 236.4 L91.5 236.5 L92.5 236.5 L93.5 236.5 L94.5 236.5 L95.5 236.6 L96.5 236.6 L97.5 236.6 L98.5 236.6 L99.5 236.5 L100.5 236.5 L101.5 236.6 L102.5 236.9 L103.5 237.0 L104.5 236.9 L105.5 236.8 L106.5 236.7 L107.5 236.8 L108.5 236.9 L109.5 237.0 L110.5 236.8 L111.5 236.4 L112.5 236.2 L113.5 236.5 L114.5 236.9 L115.5 237.1 L116.5 236.9 L117.5 236.5 L118.5 236.3 L119.5 236.5 L120.5 236.7 L121.5 236.5 L122.5 235.9 L123.5 235.5 L124.5 235.7 L125.5 236.3 L126.5 236.6 L127.5 236.8 L128.5 236.8 L129.5 236.8 L130.5 236.7 L131.5 236.6 L132.5 236.4 L133.5 236.3 L134.5 236.4 L135.5 236.5 L136.5 236.5 L137.5 236.5 L138.5 236.7 L139.5 237.0 L140.5 236.8 L141.5 236.5 L142.5 236.2 L143.5 236.3 L144.5 236.5 L145.5 236.6 L146.5 236.7 L147.5 237.0 L148.5 237.1 L149.5 236.8 L150.5 236.4 L151.5 236.2 L152.5 236.2 L153.5 236.2 L154.5 236.2 L155.5 236.4 L156.5 236.8 L157.5 237.0 L158.5 236.9 L159.5 236.7 L160.5 236.4 L161.5 235.8 L162.5 235.2 L163.5 235.2 L164.5 235.8 L165.5 236.5 L166.5 236.4 L167.5 235.6 L168.5 234.5 L169.5 233.7 L170.5 233.9 L171.5 234.9 L172.5 236.0 L173.5 236.5 L174.5 236.5 L175.5 236.4 L176.5 236.6 L177.5 236.9 L178.5 237.1 L179.5 237.1 L180.5 237.0 L181.5 237.0 L182.5 236.8 L183.5 236.5 L184.5 236.3 L185.5 236.4 L186.5 236.6 L187.5 236.7 L188.5 236.7 L189.5 236.5 L190.5 236.1 L191.5 235.6 L192.5 235.6 L193.5 236.0 L194.5 236.4 L195.5 236.6 L196.5 236.7 L197.5 236.7 L198.5 236.7 L199.5 236.8 L200.5 236.9 L201.5 237.0 L202.5 237.1 L203.5 236.9 L204.5 236.6 L205.5 236.3 L206.5 236.1 L207.5 235.7 L208.5 235.5 L209.5 235.7 L210.5 235.9 L211.5 236.1 L212.5 236.2 L213.5 236.4 L214.5 236.5 L215.5 236.6 L216.5 236.7 L217.5 236.8 L218.5 236.8 L219.5 236.8 L220.5 236.8 L221.5 236.7 L222.5 236.5 L223.5 236.5 L224.5 236.5 L225.5 236.5 L226.5 236.5 L227.5 236.6 L228.5 236.9 L229.5 237.0 L230.5 237.0 L231.5 236.9 L232.5 236.9 L233.5 236.9 L234.5 236.8 L235.5 236.8 L236.5 236.7 L237.5 236.6 L238.5 236.5 L239.5 236.1 L240.5 235.3 L241.5 234.5 L242.5 234.0 L243.5 234.4 L244.5 235.2 L245.5 236.1 L246.5 236.7 L247.5 237.1 L248.5 236.9 L249.5 236.4 L250.5 235.9 L251.5 235.5 L252.5 235.5 L253.5 235.9 L254.5 236.3 L255.5 236.6 L256.5 236.6 L257.5 236.7 L258.5 236.9 L259.5 236.9 L260.5 236.9 L261.5 236.8 L262.5 236.7 L263.5 236.7 L264.5 236.8 L265.5 236.8 L266.5 236.7 L267.5 236.5 L268.5 236.4 L269.5 236.6 L270.5 236.9 L271.5 237.0 L272.5 236.9 L273.5 236.7 L274.5 236.6 L275.5 236.7 L276.5 236.9 L277.5 237.0 L278.5 236.8 L279.5 236.6 L280.5 236.5 L281.5 236.6 L282.5 236.9 L283.5 237.1 L284.5 237.1 L285.5 236.9 L286.5 236.9 L287.5 236.8 L288.5 236.7 L289.5 236.6 L290.5 236.2 L291.5 235.7 L292.5 235.3 L293.5 235.3 L294.5 235.7 L295.5 236.2 L296.5 236.4 L297.5 236.5 L298.5 236.6 L299.5 236.7 L300.5 236.9 L301.5 236.9 L302.5 236.9 L303.5 236.9 L304.5 236.9 L305.5 236.8 L306.5 236.7 L307.5 236.7 L308.5 236.5 L309.5 236.3 L310.5 236.1 L311.5 236.1 L312.5 236.1 L313.5 235.8 L314.5 235.3 L315.5 234.9 L316.5 234.9 L317.5 235.5 L318.5 236.2 L319.5 236.7 L320.5 236.7 L321.5 236.4 L322.5 236.2 L323.5 236.4 L324.5 236.6 L325.5 236.8 L326.5 236.8 L327.5 236.9 L328.5 237.0 L329.5 236.8 L330.5 236.2 L331.5 234.9 L332.5 234.7 L333.5 235.8 L333.5 240.0 L332.5 241.3 L331.5 241.2 L330.5 239.9 L329.5 239.3 L328.5 239.2 L327.5 239.3 L326.5 239.4 L325.5 239.5 L324.5 239.7 L323.5 239.9 L322.5 240.1 L321.5 240.0 L320.5 240.0 L319.5 240.1 L318.5 240.4 L317.5 240.8 L316.5 241.2 L315.5 241.3 L314.5 241.1 L313.5 240.7 L312.5 240.2 L311.5 239.8 L310.5 239.5 L309.5 239.4 L308.5 239.3 L307.5 239.2 L306.5 239.3 L305.5 239.3 L304.5 239.3 L303.5 239.4 L302.5 239.7 L301.5 239.8 L300.5 239.7 L299.5 239.6 L298.5 239.6 L297.5 239.7 L296.5 240.1 L295.5 240.5 L294.5 240.8 L293.5 240.8 L292.5 240.6 L291.5 240.3 L290.5 240.0 L289.5 239.8 L288.5 239.7 L287.5 239.8 L286.5 239.9 L285.5 239.8 L284.5 239.7 L283.5 239.7 L282.5 239.6 L281.5 239.4 L280.5 239.3 L279.5 239.4 L278.5 239.6 L277.5 239.8 L276.5 239.8 L275.5 239.7 L274.5 239.7 L273.5 239.7 L272.5 239.8 L271.5 239.8 L270.5 239.9 L269.5 240.0 L268.5 240.1 L267.5 239.9 L266.5 239.6 L265.5 239.5 L264.5 239.5 L263.5 239.5 L262.5 239.5 L261.5 239.4 L260.5 239.3 L259.5 239.2 L258.5 239.3 L257.5 239.5 L256.5 239.5 L255.5 239.7 L254.5 240.2 L253.5 240.7 L252.5 241.0 L251.5 240.7 L250.5 240.1 L249.5 239.9 L248.5 240.0 L247.5 240.1 L246.5 240.3 L245.5 240.8 L244.5 241.5 L243.5 242.2 L242.5 242.4 L241.5 241.8 L240.5 241.0 L239.5 240.5 L238.5 240.2 L237.5 240.0 L236.5 239.9 L235.5 239.9 L234.5 239.7 L233.5 239.3 L232.5 239.2 L231.5 239.3 L230.5 239.6 L229.5 239.7 L228.5 239.8 L227.5 239.8 L226.5 239.9 L225.5 239.8 L224.5 239.6 L223.5 239.5 L222.5 239.5 L221.5 239.5 L220.5 239.5 L219.5 239.6 L218.5 239.7 L217.5 239.7 L216.5 239.8 L215.5 239.9 L214.5 239.9 L213.5 240.0 L212.5 240.0 L211.5 240.1 L210.5 240.2 L209.5 240.3 L208.5 240.4 L207.5 240.3 L206.5 239.9 L205.5 239.7 L204.5 239.7 L203.5 239.8 L202.5 239.9 L201.5 240.0 L200.5 240.1 L199.5 240.1 L198.5 240.1 L197.5 240.1 L196.5 240.1 L195.5 240.0 L194.5 240.1 L193.5 240.4 L192.5 240.8 L191.5 240.8 L190.5 240.4 L189.5 240.1 L188.5 240.1 L187.5 240.1 L186.5 240.0 L185.5 239.7 L184.5 239.6 L183.5 239.5 L182.5 239.4 L181.5 239.4 L180.5 239.4 L179.5 239.5 L178.5 239.6 L177.5 239.7 L176.5 239.9 L175.5 240.1 L174.5 239.9 L173.5 239.9 L172.5 240.3 L171.5 241.4 L170.5 242.4 L169.5 242.7 L168.5 241.9 L167.5 241.0 L166.5 240.3 L165.5 240.1 L164.5 240.6 L163.5 241.2 L162.5 241.2 L161.5 240.5 L160.5 239.8 L159.5 239.5 L158.5 239.4 L157.5 239.4 L156.5 239.5 L155.5 239.7 L154.5 239.9 L153.5 239.9 L152.5 239.8 L151.5 239.8 L150.5 239.8 L149.5 239.7 L148.5 239.7 L147.5 239.8 L146.5 240.0 L145.5 240.1 L144.5 239.9 L143.5 239.6 L142.5 239.4 L141.5 239.6 L140.5 239.9 L139.5 240.2 L138.5 240.3 L137.5 240.2 L136.5 240.1 L135.5 239.8 L134.5 239.5 L133.5 239.3 L132.5 239.5 L131.5 239.9 L130.5 240.0 L129.5 240.1 L128.5 240.1 L127.5 240.1 L126.5 240.0 L125.5 239.9 L124.5 240.1 L123.5 240.6 L122.5 240.7 L121.5 240.3 L120.5 239.9 L119.5 239.7 L118.5 239.6 L117.5 239.6 L116.5 239.7 L115.5 239.7 L114.5 239.6 L113.5 239.5 L112.5 239.4 L111.5 239.5 L110.5 239.7 L109.5 239.8 L108.5 239.8 L107.5 239.9 L106.5 240.0 L105.5 240.0 L104.5 239.9 L103.5 239.9 L102.5 239.8 L101.5 239.6 L100.5 239.5 L99.5 239.4 L98.5 239.3 L97.5 239.2 L96.5 239.3 L95.5 239.5 L94.5 239.7 L93.5 239.8 L92.5 240.0 L91.5 240.1 L90.5 240.1 L89.5 240.1 L88.5 240.1 L87.5 240.0 L86.5 239.9 L85.5 239.8 L84.5 239.6 L83.5 239.3 L82.5 239.2 L81.5 239.2 L80.5 239.3 L79.5 239.5 L78.5 239.9 L77.5 240.2 L76.5 240.4 L75.5 240.3 L74.5 240.1 L73.5 239.9 L72.5 239.8 L71.5 239.9 L70.5 239.9 L69.5 239.8 L68.5 239.5 L67.5 239.4Z" fill="#f0f0f0"/></svg>
<svg style="left:4.00px;top:276.70px;overflow:hidden" width="56.8" height="56" viewBox="0 0 57 56" preserveAspectRatio="none"><defs><linearGradient id="sky276" x1="0.2" y1="0" x2="0" y2="1"><stop offset="0" stop-color="#8ab6f2"/><stop offset="0.6" stop-color="#a8caf2"/><stop offset="1" stop-color="#c4daf2"/></linearGradient><filter id="tb276" x="-5%" y="-5%" width="110%" height="110%"><feGaussianBlur stdDeviation="0.5"/></filter></defs><g filter="url(#tb276)"><rect x="-2" y="-2" width="61" height="60" fill="url(#sky276)"/><ellipse cx="6" cy="1.5" rx="3" ry="1.2" fill="#d8e6f8"/><ellipse cx="20" cy="2" rx="2" ry="1.5" fill="#d8e6f8"/><path d="M-2 29Q5 27 12 30L13 46L-2 46Z" fill="#f4f6f8"/><rect x="-2" y="45" width="12" height="13" fill="#c8ccd4"/><rect x="1.5" y="51" width="2" height="2" fill="#b06060"/><path d="M48 27L57 10L58 27Z" fill="#ece6da"/><rect x="45" y="26" width="13" height="5" fill="#6a7a52"/><rect x="46" y="31" width="12" height="26" fill="#dcd6ca"/><rect x="53" y="39" width="4" height="17" fill="#98aac0"/><rect x="17" y="9" width="21" height="7" fill="#6e6a64"/><path d="M19 12Q21 5 27 6L27 12Z" fill="#7a9a4a"/><rect x="27" y="7" width="10" height="2.2" fill="#5a6278"/><rect x="17" y="15" width="23" height="12" fill="#d8aca4"/><rect x="16" y="20" width="6" height="7" fill="#cfc6c2"/><rect x="30" y="19" width="8" height="6" fill="#bcbcc4"/><path d="M9 57L10 42Q13 33 17 28Q28 25 40 26Q46 28 48 31L47 57Z" fill="#46563a"/><path d="M14 57L16 42Q24 34 36 36L42 57Z" fill="#3a4830"/><path d="M40 49Q46 45 52 50L57 57L40 57Z" fill="#34442a"/><rect x="43.6" y="43" width="4.8" height="5" fill="#7890a8"/><circle cx="33.8" cy="48.8" r="1.4" fill="#5a6c40" opacity="0.7"/><circle cx="39.2" cy="35.0" r="1.5" fill="#5a6c40" opacity="0.7"/><circle cx="16.0" cy="41.1" r="1.0" fill="#2c3822" opacity="0.7"/><circle cx="15.6" cy="35.0" r="1.0" fill="#2c3822" opacity="0.7"/><circle cx="18.4" cy="52.3" r="0.8" fill="#66784a" opacity="0.7"/><circle cx="39.9" cy="31.9" r="0.7" fill="#66784a" opacity="0.7"/><circle cx="12.1" cy="52.4" r="1.4" fill="#2c3822" opacity="0.7"/><circle cx="45.6" cy="32.6" r="0.9" fill="#2c3822" opacity="0.7"/><circle cx="45.7" cy="43.1" r="0.8" fill="#2c3822" opacity="0.7"/><circle cx="45.9" cy="33.5" r="0.9" fill="#66784a" opacity="0.7"/><circle cx="24.6" cy="32.6" r="0.9" fill="#2c3822" opacity="0.7"/><circle cx="23.6" cy="50.9" r="1.2" fill="#5a6c40" opacity="0.7"/><circle cx="36.8" cy="29.8" r="1.4" fill="#4e5e3c" opacity="0.7"/><circle cx="28.8" cy="36.8" r="1.1" fill="#66784a" opacity="0.7"/><circle cx="18.2" cy="35.2" r="1.5" fill="#5a6c40" opacity="0.7"/><circle cx="24.5" cy="39.3" r="1.0" fill="#66784a" opacity="0.7"/><circle cx="32.2" cy="28.3" r="1.3" fill="#5a6c40" opacity="0.7"/><circle cx="33.8" cy="54.7" r="1.4" fill="#5a6c40" opacity="0.7"/><circle cx="44.5" cy="54.4" r="1.1" fill="#4e5e3c" opacity="0.7"/><circle cx="43.2" cy="35.0" r="0.7" fill="#66784a" opacity="0.7"/><circle cx="38.2" cy="50.3" r="0.6" fill="#4e5e3c" opacity="0.7"/><circle cx="45.1" cy="30.6" r="1.1" fill="#4e5e3c" opacity="0.7"/><circle cx="24.7" cy="32.1" r="1.5" fill="#4e5e3c" opacity="0.7"/><circle cx="31.1" cy="36.7" r="0.9" fill="#4e5e3c" opacity="0.7"/><circle cx="40.0" cy="45.6" r="1.6" fill="#4e5e3c" opacity="0.7"/><circle cx="17.7" cy="29.4" r="0.6" fill="#66784a" opacity="0.7"/><circle cx="37.9" cy="37.6" r="1.1" fill="#4e5e3c" opacity="0.7"/><circle cx="26.8" cy="29.6" r="1.4" fill="#5a6c40" opacity="0.7"/><circle cx="23.7" cy="33.8" r="1.2" fill="#2c3822" opacity="0.7"/><circle cx="39.6" cy="31.0" r="1.0" fill="#66784a" opacity="0.7"/><circle cx="14.1" cy="39.8" r="1.1" fill="#2c3822" opacity="0.7"/><circle cx="47.0" cy="51.9" r="1.6" fill="#66784a" opacity="0.7"/><circle cx="36.1" cy="36.9" r="0.9" fill="#4e5e3c" opacity="0.7"/><circle cx="26.1" cy="32.1" r="1.4" fill="#66784a" opacity="0.7"/><circle cx="30.6" cy="33.0" r="1.5" fill="#66784a" opacity="0.7"/><circle cx="18.3" cy="41.8" r="0.7" fill="#4e5e3c" opacity="0.7"/><circle cx="39.8" cy="38.0" r="1.4" fill="#5a6c40" opacity="0.7"/><circle cx="24.7" cy="47.7" r="1.4" fill="#4e5e3c" opacity="0.7"/><circle cx="21.3" cy="55.5" r="1.6" fill="#4e5e3c" opacity="0.7"/><circle cx="23.9" cy="33.0" r="1.1" fill="#5a6c40" opacity="0.7"/><circle cx="39.1" cy="37.1" r="1.1" fill="#4e5e3c" opacity="0.7"/><circle cx="40.6" cy="46.1" r="0.9" fill="#4e5e3c" opacity="0.7"/><circle cx="34.5" cy="48.7" r="1.0" fill="#66784a" opacity="0.7"/><circle cx="41.5" cy="52.4" r="1.6" fill="#66784a" opacity="0.7"/><circle cx="45.5" cy="42.5" r="0.8" fill="#2c3822" opacity="0.7"/></g></svg>
<svg style="left:0;top:0" width="1" height="1"><circle cx="32.40" cy="304.90" r="14.55" stroke="#4fc2b5" stroke-width="3.30" fill="none"/><path d="M28.80 297.70L38.60 304.90L28.80 312.10Z" fill="#4fc2b5"/></svg>
<div class="t" style="left:67.0px;top:277px;font-size:11.95px;color:#f3f3f3">Esquina Mercurio - Esteban 2.mp3</div>
<div class="t" style="right:683.30px;top:277px;font-size:11.95px;color:#f3f3f3">32.27s</div>
<svg style="left:0;top:0" width="1" height="1"><path d="M67.5 301.8 L68.5 301.7 L69.5 301.5 L70.5 301.4 L71.5 301.4 L72.5 301.4 L73.5 301.4 L74.5 301.3 L75.5 301.1 L76.5 300.8 L77.5 300.7 L78.5 300.8 L79.5 300.9 L80.5 301.1 L81.5 301.3 L82.5 301.6 L83.5 301.8 L84.5 301.9 L85.5 301.9 L86.5 301.9 L87.5 301.9 L88.5 301.9 L89.5 301.7 L90.5 301.4 L91.5 301.2 L92.5 301.2 L93.5 301.2 L94.5 301.0 L95.5 300.8 L96.5 300.6 L97.5 300.8 L98.5 301.2 L99.5 301.6 L100.5 301.8 L101.5 301.8 L102.5 301.8 L103.5 301.8 L104.5 301.8 L105.5 301.7 L106.5 301.7 L107.5 301.6 L108.5 301.4 L109.5 301.3 L110.5 301.3 L111.5 301.4 L112.5 301.5 L113.5 301.6 L114.5 301.9 L115.5 302.1 L116.5 302.0 L117.5 301.9 L118.5 301.8 L119.5 301.9 L120.5 301.9 L121.5 302.0 L122.5 301.8 L123.5 301.4 L124.5 301.2 L125.5 301.2 L126.5 301.3 L127.5 301.3 L128.5 301.3 L129.5 301.3 L130.5 301.3 L131.5 301.3 L132.5 301.3 L133.5 301.3 L134.5 301.3 L135.5 301.3 L136.5 301.4 L137.5 301.3 L138.5 301.2 L139.5 301.2 L140.5 301.2 L141.5 301.3 L142.5 301.3 L143.5 301.4 L144.5 301.7 L145.5 301.8 L146.5 301.7 L147.5 301.4 L148.5 301.3 L149.5 301.3 L150.5 301.5 L151.5 301.6 L152.5 301.5 L153.5 301.4 L154.5 301.3 L155.5 301.4 L156.5 300.1 L157.5 298.6 L158.5 300.0 L159.5 301.6 L160.5 301.7 L161.5 301.7 L162.5 301.7 L163.5 301.7 L164.5 301.7 L165.5 301.7 L166.5 301.7 L167.5 301.7 L168.5 301.8 L169.5 301.8 L170.5 301.8 L171.5 301.7 L172.5 301.6 L173.5 301.1 L174.5 300.6 L175.5 300.3 L176.5 300.4 L177.5 300.7 L178.5 301.0 L179.5 301.1 L180.5 301.1 L181.5 300.9 L182.5 300.8 L183.5 300.7 L184.5 300.9 L185.5 301.2 L186.5 301.4 L187.5 301.5 L188.5 301.5 L189.5 301.4 L190.5 301.4 L191.5 301.5 L192.5 301.8 L193.5 302.0 L194.5 301.8 L195.5 301.6 L196.5 301.4 L197.5 301.5 L198.5 301.6 L199.5 301.6 L200.5 301.7 L201.5 301.8 L202.5 301.7 L203.5 301.6 L204.5 301.4 L205.5 301.3 L206.5 301.3 L207.5 301.3 L208.5 301.3 L209.5 301.5 L210.5 301.7 L211.5 301.8 L212.5 301.8 L213.5 301.7 L214.5 301.6 L215.5 301.6 L216.5 301.5 L217.5 301.5 L218.5 301.5 L219.5 301.6 L220.5 301.7 L221.5 301.8 L222.5 301.9 L223.5 302.0 L224.5 301.9 L225.5 301.6 L226.5 301.4 L227.5 301.3 L228.5 301.1 L229.5 300.9 L230.5 300.9 L231.5 301.0 L232.5 301.3 L233.5 301.5 L234.5 301.7 L235.5 301.9 L236.5 301.8 L237.5 301.6 L238.5 301.3 L239.5 301.1 L240.5 301.0 L241.5 301.0 L242.5 301.0 L243.5 301.0 L244.5 301.1 L245.5 301.2 L246.5 301.2 L247.5 301.1 L248.5 301.1 L249.5 301.2 L250.5 301.0 L251.5 300.7 L252.5 300.5 L253.5 300.5 L254.5 300.7 L255.5 300.9 L256.5 301.0 L257.5 301.3 L258.5 301.8 L259.5 302.1 L260.5 302.0 L261.5 302.0 L262.5 302.0 L263.5 301.8 L264.5 301.4 L265.5 301.2 L266.5 301.1 L267.5 300.9 L268.5 300.7 L269.5 300.6 L270.5 300.5 L271.5 300.5 L272.5 300.6 L273.5 301.0 L274.5 301.3 L275.5 301.5 L276.5 301.5 L277.5 301.6 L278.5 301.5 L279.5 301.3 L280.5 301.2 L281.5 301.2 L282.5 301.1 L283.5 300.9 L284.5 300.6 L285.5 300.6 L286.5 300.8 L287.5 301.2 L288.5 301.7 L289.5 301.9 L290.5 301.7 L291.5 301.4 L292.5 301.2 L293.5 301.4 L294.5 301.6 L295.5 301.7 L296.5 301.6 L297.5 301.5 L298.5 301.4 L299.5 301.5 L300.5 301.8 L301.5 302.0 L302.5 301.7 L303.5 301.3 L304.5 301.1 L305.5 301.2 L306.5 301.4 L307.5 301.4 L308.5 301.1 L309.5 300.9 L310.5 300.8 L311.5 301.2 L312.5 301.6 L313.5 301.9 L314.5 301.8 L315.5 301.6 L316.5 301.5 L317.5 301.5 L318.5 301.5 L319.5 301.5 L320.5 301.3 L321.5 301.0 L322.5 300.4 L323.5 299.7 L324.5 299.3 L325.5 299.3 L326.5 299.6 L327.5 300.1 L328.5 300.6 L329.5 301.2 L330.5 301.6 L331.5 301.7 L332.5 301.8 L333.5 301.8 L333.5 304.5 L332.5 304.7 L331.5 304.9 L330.5 304.9 L329.5 305.0 L328.5 305.3 L327.5 306.0 L326.5 306.7 L325.5 307.1 L324.5 306.9 L323.5 306.1 L322.5 305.2 L321.5 304.8 L320.5 304.8 L319.5 304.8 L318.5 304.6 L317.5 304.4 L316.5 304.2 L315.5 304.3 L314.5 304.3 L313.5 304.3 L312.5 304.4 L311.5 304.7 L310.5 305.0 L309.5 304.8 L308.5 304.5 L307.5 304.2 L306.5 304.3 L305.5 304.6 L304.5 304.8 L303.5 304.6 L302.5 304.3 L301.5 304.1 L300.5 304.1 L299.5 304.0 L298.5 303.9 L297.5 303.9 L296.5 304.0 L295.5 304.0 L294.5 304.1 L293.5 304.3 L292.5 304.4 L291.5 304.5 L290.5 304.7 L289.5 304.8 L288.5 304.7 L287.5 304.6 L286.5 304.7 L285.5 305.0 L284.5 305.2 L283.5 305.0 L282.5 304.6 L281.5 304.2 L280.5 304.0 L279.5 304.2 L278.5 304.4 L277.5 304.5 L276.5 304.5 L275.5 304.5 L274.5 304.5 L273.5 305.0 L272.5 305.6 L271.5 305.9 L270.5 305.8 L269.5 305.6 L268.5 305.3 L267.5 305.0 L266.5 304.7 L265.5 304.4 L264.5 304.4 L263.5 304.3 L262.5 304.3 L261.5 304.2 L260.5 304.1 L259.5 304.0 L258.5 304.0 L257.5 304.0 L256.5 304.1 L255.5 304.4 L254.5 304.8 L253.5 305.2 L252.5 305.3 L251.5 305.1 L250.5 304.9 L249.5 304.6 L248.5 304.3 L247.5 304.2 L246.5 304.3 L245.5 304.7 L244.5 305.1 L243.5 305.1 L242.5 305.1 L241.5 305.0 L240.5 305.1 L239.5 305.2 L238.5 305.2 L237.5 304.8 L236.5 304.3 L235.5 304.1 L234.5 304.3 L233.5 304.6 L232.5 304.9 L231.5 305.2 L230.5 305.2 L229.5 305.1 L228.5 304.9 L227.5 304.6 L226.5 304.4 L225.5 304.4 L224.5 304.4 L223.5 304.5 L222.5 304.4 L221.5 304.4 L220.5 304.4 L219.5 304.3 L218.5 304.2 L217.5 304.1 L216.5 304.2 L215.5 304.5 L214.5 304.7 L213.5 304.5 L212.5 304.1 L211.5 303.9 L210.5 304.1 L209.5 304.5 L208.5 304.7 L207.5 305.0 L206.5 305.2 L205.5 305.3 L204.5 305.0 L203.5 304.5 L202.5 304.2 L201.5 304.2 L200.5 304.2 L199.5 304.3 L198.5 304.2 L197.5 304.0 L196.5 303.9 L195.5 304.0 L194.5 304.2 L193.5 304.3 L192.5 304.2 L191.5 304.1 L190.5 304.1 L189.5 304.1 L188.5 304.2 L187.5 304.2 L186.5 304.3 L185.5 304.4 L184.5 304.6 L183.5 304.8 L182.5 304.7 L181.5 304.4 L180.5 304.4 L179.5 304.6 L178.5 304.8 L177.5 305.0 L176.5 305.1 L175.5 305.2 L174.5 305.2 L173.5 305.3 L172.5 305.1 L171.5 304.9 L170.5 304.7 L169.5 304.6 L168.5 304.5 L167.5 304.3 L166.5 304.2 L165.5 304.3 L164.5 304.5 L163.5 304.6 L162.5 304.7 L161.5 304.8 L160.5 304.8 L159.5 304.8 L158.5 306.1 L157.5 307.3 L156.5 305.7 L155.5 304.1 L154.5 303.9 L153.5 304.0 L152.5 304.1 L151.5 304.2 L150.5 304.3 L149.5 304.5 L148.5 304.6 L147.5 304.5 L146.5 304.4 L145.5 304.4 L144.5 304.4 L143.5 304.4 L142.5 304.4 L141.5 304.5 L140.5 304.8 L139.5 304.9 L138.5 304.7 L137.5 304.5 L136.5 304.4 L135.5 304.4 L134.5 304.3 L133.5 304.2 L132.5 304.1 L131.5 304.0 L130.5 303.9 L129.5 304.1 L128.5 304.5 L127.5 304.7 L126.5 304.6 L125.5 304.4 L124.5 304.3 L123.5 304.3 L122.5 304.3 L121.5 304.4 L120.5 304.3 L119.5 304.1 L118.5 304.0 L117.5 304.1 L116.5 304.4 L115.5 304.5 L114.5 304.4 L113.5 304.3 L112.5 304.2 L111.5 304.2 L110.5 304.2 L109.5 304.2 L108.5 304.2 L107.5 304.1 L106.5 304.0 L105.5 304.2 L104.5 304.7 L103.5 304.9 L102.5 304.6 L101.5 304.2 L100.5 304.0 L99.5 304.2 L98.5 304.4 L97.5 304.8 L96.5 305.1 L95.5 305.3 L94.5 305.2 L93.5 304.9 L92.5 304.7 L91.5 304.5 L90.5 304.3 L89.5 304.1 L88.5 303.9 L87.5 304.1 L86.5 304.3 L85.5 304.5 L84.5 304.5 L83.5 304.6 L82.5 304.8 L81.5 305.0 L80.5 305.4 L79.5 305.5 L78.5 305.3 L77.5 304.8 L76.5 304.4 L75.5 304.2 L74.5 304.2 L73.5 304.2 L72.5 304.1 L71.5 304.0 L70.5 304.0 L69.5 304.2 L68.5 304.4 L67.5 304.6Z" fill="#f0f0f0"/></svg>
<svg style="left:4.00px;top:341.55px;overflow:hidden" width="56.8" height="56" viewBox="0 0 57 56" preserveAspectRatio="none"><defs><linearGradient id="sky341" x1="0.2" y1="0" x2="0" y2="1"><stop offset="0" stop-color="#8ab6f2"/><stop offset="0.6" stop-color="#a8caf2"/><stop offset="1" stop-color="#c4daf2"/></linearGradient><filter id="tb341" x="-5%" y="-5%" width="110%" height="110%"><feGaussianBlur stdDeviation="0.5"/></filter></defs><g filter="url(#tb341)"><rect x="-2" y="-2" width="61" height="60" fill="url(#sky341)"/><ellipse cx="6" cy="1.5" rx="3" ry="1.2" fill="#d8e6f8"/><ellipse cx="20" cy="2" rx="2" ry="1.5" fill="#d8e6f8"/><path d="M-2 29Q5 27 12 30L13 46L-2 46Z" fill="#f4f6f8"/><rect x="-2" y="45" width="12" height="13" fill="#c8ccd4"/><rect x="1.5" y="51" width="2" height="2" fill="#b06060"/><path d="M48 27L57 10L58 27Z" fill="#ece6da"/><rect x="45" y="26" width="13" height="5" fill="#6a7a52"/><rect x="46" y="31" width="12" height="26" fill="#dcd6ca"/><rect x="53" y="39" width="4" height="17" fill="#98aac0"/><rect x="17" y="9" width="21" height="7" fill="#6e6a64"/><path d="M19 12Q21 5 27 6L27 12Z" fill="#7a9a4a"/><rect x="27" y="7" width="10" height="2.2" fill="#5a6278"/><rect x="17" y="15" width="23" height="12" fill="#d8aca4"/><rect x="16" y="20" width="6" height="7" fill="#cfc6c2"/><rect x="30" y="19" width="8" height="6" fill="#bcbcc4"/><path d="M9 57L10 42Q13 33 17 28Q28 25 40 26Q46 28 48 31L47 57Z" fill="#46563a"/><path d="M14 57L16 42Q24 34 36 36L42 57Z" fill="#3a4830"/><path d="M40 49Q46 45 52 50L57 57L40 57Z" fill="#34442a"/><rect x="43.6" y="43" width="4.8" height="5" fill="#7890a8"/><circle cx="33.8" cy="48.8" r="1.4" fill="#5a6c40" opacity="0.7"/><circle cx="39.2" cy="35.0" r="1.5" fill="#5a6c40" opacity="0.7"/><circle cx="16.0" cy="41.1" r="1.0" fill="#2c3822" opacity="0.7"/><circle cx="15.6" cy="35.0" r="1.0" fill="#2c3822" opacity="0.7"/><circle cx="18.4" cy="52.3" r="0.8" fill="#66784a" opacity="0.7"/><circle cx="39.9" cy="31.9" r="0.7" fill="#66784a" opacity="0.7"/><circle cx="12.1" cy="52.4" r="1.4" fill="#2c3822" opacity="0.7"/><circle cx="45.6" cy="32.6" r="0.9" fill="#2c3822" opacity="0.7"/><circle cx="45.7" cy="43.1" r="0.8" fill="#2c3822" opacity="0.7"/><circle cx="45.9" cy="33.5" r="0.9" fill="#66784a" opacity="0.7"/><circle cx="24.6" cy="32.6" r="0.9" fill="#2c3822" opacity="0.7"/><circle cx="23.6" cy="50.9" r="1.2" fill="#5a6c40" opacity="0.7"/><circle cx="36.8" cy="29.8" r="1.4" fill="#4e5e3c" opacity="0.7"/><circle cx="28.8" cy="36.8" r="1.1" fill="#66784a" opacity="0.7"/><circle cx="18.2" cy="35.2" r="1.5" fill="#5a6c40" opacity="0.7"/><circle cx="24.5" cy="39.3" r="1.0" fill="#66784a" opacity="0.7"/><circle cx="32.2" cy="28.3" r="1.3" fill="#5a6c40" opacity="0.7"/><circle cx="33.8" cy="54.7" r="1.4" fill="#5a6c40" opacity="0.7"/><circle cx="44.5" cy="54.4" r="1.1" fill="#4e5e3c" opacity="0.7"/><circle cx="43.2" cy="35.0" r="0.7" fill="#66784a" opacity="0.7"/><circle cx="38.2" cy="50.3" r="0.6" fill="#4e5e3c" opacity="0.7"/><circle cx="45.1" cy="30.6" r="1.1" fill="#4e5e3c" opacity="0.7"/><circle cx="24.7" cy="32.1" r="1.5" fill="#4e5e3c" opacity="0.7"/><circle cx="31.1" cy="36.7" r="0.9" fill="#4e5e3c" opacity="0.7"/><circle cx="40.0" cy="45.6" r="1.6" fill="#4e5e3c" opacity="0.7"/><circle cx="17.7" cy="29.4" r="0.6" fill="#66784a" opacity="0.7"/><circle cx="37.9" cy="37.6" r="1.1" fill="#4e5e3c" opacity="0.7"/><circle cx="26.8" cy="29.6" r="1.4" fill="#5a6c40" opacity="0.7"/><circle cx="23.7" cy="33.8" r="1.2" fill="#2c3822" opacity="0.7"/><circle cx="39.6" cy="31.0" r="1.0" fill="#66784a" opacity="0.7"/><circle cx="14.1" cy="39.8" r="1.1" fill="#2c3822" opacity="0.7"/><circle cx="47.0" cy="51.9" r="1.6" fill="#66784a" opacity="0.7"/><circle cx="36.1" cy="36.9" r="0.9" fill="#4e5e3c" opacity="0.7"/><circle cx="26.1" cy="32.1" r="1.4" fill="#66784a" opacity="0.7"/><circle cx="30.6" cy="33.0" r="1.5" fill="#66784a" opacity="0.7"/><circle cx="18.3" cy="41.8" r="0.7" fill="#4e5e3c" opacity="0.7"/><circle cx="39.8" cy="38.0" r="1.4" fill="#5a6c40" opacity="0.7"/><circle cx="24.7" cy="47.7" r="1.4" fill="#4e5e3c" opacity="0.7"/><circle cx="21.3" cy="55.5" r="1.6" fill="#4e5e3c" opacity="0.7"/><circle cx="23.9" cy="33.0" r="1.1" fill="#5a6c40" opacity="0.7"/><circle cx="39.1" cy="37.1" r="1.1" fill="#4e5e3c" opacity="0.7"/><circle cx="40.6" cy="46.1" r="0.9" fill="#4e5e3c" opacity="0.7"/><circle cx="34.5" cy="48.7" r="1.0" fill="#66784a" opacity="0.7"/><circle cx="41.5" cy="52.4" r="1.6" fill="#66784a" opacity="0.7"/><circle cx="45.5" cy="42.5" r="0.8" fill="#2c3822" opacity="0.7"/></g></svg>
<svg style="left:0;top:0" width="1" height="1"><circle cx="32.40" cy="369.75" r="14.55" stroke="#4fc2b5" stroke-width="3.30" fill="none"/><path d="M28.80 362.55L38.60 369.75L28.80 376.95Z" fill="#4fc2b5"/></svg>
<div class="t" style="left:67.0px;top:341px;font-size:11.95px;color:#f3f3f3">Esquina Mercurio - Esteban 2.mp3</div>
<div class="t" style="right:683.30px;top:341px;font-size:11.95px;color:#f3f3f3">39.29s</div>
<svg style="left:0;top:0" width="1" height="1"><path d="M67.5 366.6 L68.5 366.2 L69.5 365.6 L70.5 365.2 L71.5 365.2 L72.5 365.5 L73.5 365.8 L74.5 366.0 L75.5 366.1 L76.5 366.1 L77.5 366.3 L78.5 366.6 L79.5 366.8 L80.5 366.8 L81.5 366.8 L82.5 366.8 L83.5 366.7 L84.5 366.5 L85.5 366.3 L86.5 366.4 L87.5 366.4 L88.5 366.4 L89.5 366.5 L90.5 366.6 L91.5 366.7 L92.5 366.6 L93.5 366.5 L94.5 366.4 L95.5 366.5 L96.5 366.6 L97.5 366.6 L98.5 366.6 L99.5 366.4 L100.5 366.3 L101.5 366.5 L102.5 366.7 L103.5 366.9 L104.5 366.9 L105.5 366.8 L106.5 366.8 L107.5 366.6 L108.5 366.3 L109.5 366.2 L110.5 366.3 L111.5 366.6 L112.5 366.7 L113.5 366.7 L114.5 366.7 L115.5 366.8 L116.5 366.6 L117.5 366.3 L118.5 365.9 L119.5 365.4 L120.5 365.3 L121.5 365.6 L122.5 366.2 L123.5 366.6 L124.5 366.8 L125.5 366.8 L126.5 366.6 L127.5 366.5 L128.5 366.5 L129.5 366.4 L130.5 366.4 L131.5 366.5 L132.5 366.7 L133.5 366.9 L134.5 366.7 L135.5 366.5 L136.5 366.4 L137.5 366.5 L138.5 366.8 L139.5 366.9 L140.5 366.8 L141.5 366.7 L142.5 366.6 L143.5 366.5 L144.5 366.3 L145.5 365.8 L146.5 365.2 L147.5 364.8 L148.5 364.8 L149.5 365.0 L150.5 365.3 L151.5 365.6 L152.5 366.0 L153.5 366.4 L154.5 366.6 L155.5 366.5 L156.5 366.2 L157.5 366.1 L158.5 366.2 L159.5 366.5 L160.5 366.6 L161.5 366.6 L162.5 366.5 L163.5 366.5 L164.5 366.4 L165.5 366.3 L166.5 366.2 L167.5 366.3 L168.5 366.3 L169.5 366.3 L170.5 366.2 L171.5 366.0 L172.5 365.8 L173.5 365.9 L174.5 366.1 L175.5 366.3 L176.5 366.4 L177.5 366.4 L178.5 366.4 L179.5 366.5 L180.5 366.7 L181.5 366.8 L182.5 366.9 L183.5 366.9 L184.5 366.9 L185.5 366.7 L186.5 366.3 L187.5 366.0 L188.5 365.8 L189.5 365.5 L190.5 365.0 L191.5 364.7 L192.5 364.9 L193.5 365.4 L194.5 365.9 L195.5 366.2 L196.5 366.4 L197.5 366.6 L198.5 366.7 L199.5 366.8 L200.5 366.7 L201.5 366.4 L202.5 366.3 L203.5 366.3 L204.5 366.4 L205.5 366.4 L206.5 366.3 L207.5 366.2 L208.5 366.0 L209.5 365.6 L210.5 365.4 L211.5 365.5 L212.5 366.0 L213.5 366.5 L214.5 366.8 L215.5 366.8 L216.5 366.8 L217.5 366.7 L218.5 366.8 L219.5 366.9 L220.5 367.0 L221.5 366.8 L222.5 366.5 L223.5 366.3 L224.5 366.5 L225.5 366.8 L226.5 366.9 L227.5 366.8 L228.5 366.6 L229.5 366.5 L230.5 366.6 L231.5 366.8 L232.5 366.9 L233.5 366.8 L234.5 366.7 L235.5 366.6 L236.5 366.5 L237.5 366.4 L238.5 366.4 L239.5 366.4 L240.5 366.5 L241.5 366.5 L242.5 366.5 L243.5 366.6 L244.5 366.6 L245.5 366.6 L246.5 366.5 L247.5 366.5 L248.5 366.4 L249.5 366.2 L250.5 365.9 L251.5 365.6 L252.5 365.4 L253.5 365.5 L254.5 365.9 L255.5 366.4 L256.5 366.8 L257.5 366.8 L258.5 366.6 L259.5 366.5 L260.5 366.4 L261.5 366.2 L262.5 365.9 L263.5 365.3 L264.5 364.8 L265.5 364.7 L266.5 365.1 L267.5 365.5 L268.5 365.8 L269.5 366.2 L270.5 366.7 L271.5 366.9 L272.5 366.9 L273.5 366.9 L274.5 366.9 L275.5 366.7 L276.5 366.5 L277.5 366.4 L278.5 366.4 L279.5 366.5 L280.5 366.5 L281.5 366.6 L282.5 366.9 L283.5 367.0 L284.5 366.8 L285.5 366.5 L286.5 366.4 L287.5 366.3 L288.5 366.0 L289.5 365.7 L290.5 365.6 L291.5 365.9 L292.5 366.3 L293.5 366.5 L294.5 366.6 L295.5 366.7 L296.5 366.6 L297.5 366.5 L298.5 366.5 L299.5 366.4 L300.5 366.2 L301.5 366.2 L302.5 366.3 L303.5 366.6 L304.5 366.7 L305.5 366.7 L306.5 366.5 L307.5 366.0 L308.5 365.3 L309.5 364.2 L310.5 363.3 L311.5 362.8 L312.5 363.1 L313.5 364.0 L314.5 365.1 L315.5 365.9 L316.5 366.4 L317.5 366.6 L318.5 366.7 L319.5 366.6 L320.5 366.4 L321.5 366.0 L322.5 365.7 L323.5 365.5 L324.5 365.7 L325.5 366.1 L326.5 366.4 L327.5 366.5 L328.5 366.6 L329.5 366.5 L330.5 366.3 L331.5 366.1 L332.5 366.2 L333.5 366.4 L333.5 369.1 L332.5 369.4 L331.5 369.6 L330.5 369.4 L329.5 369.2 L328.5 369.1 L327.5 369.3 L326.5 369.7 L325.5 370.0 L324.5 370.3 L323.5 370.3 L322.5 370.1 L321.5 369.9 L320.5 369.7 L319.5 369.6 L318.5 369.4 L317.5 369.2 L316.5 369.3 L315.5 369.6 L314.5 370.2 L313.5 371.1 L312.5 372.3 L311.5 373.0 L310.5 372.8 L309.5 371.7 L308.5 370.6 L307.5 369.7 L306.5 369.2 L305.5 369.0 L304.5 368.8 L303.5 368.9 L302.5 368.9 L301.5 369.0 L300.5 369.1 L299.5 369.3 L298.5 369.4 L297.5 369.2 L296.5 368.9 L295.5 368.8 L294.5 369.0 L293.5 369.5 L292.5 369.9 L291.5 370.1 L290.5 370.2 L289.5 369.9 L288.5 369.6 L287.5 369.5 L286.5 369.5 L285.5 369.5 L284.5 369.6 L283.5 369.6 L282.5 369.5 L281.5 369.2 L280.5 369.1 L279.5 369.2 L278.5 369.4 L277.5 369.5 L276.5 369.3 L275.5 369.0 L274.5 368.8 L273.5 368.9 L272.5 369.1 L271.5 369.2 L270.5 369.3 L269.5 369.6 L268.5 369.9 L267.5 370.2 L266.5 370.5 L265.5 370.8 L264.5 370.8 L263.5 370.3 L262.5 369.7 L261.5 369.4 L260.5 369.5 L259.5 369.6 L258.5 369.5 L257.5 369.6 L256.5 369.7 L255.5 369.8 L254.5 369.9 L253.5 370.1 L252.5 370.2 L251.5 370.0 L250.5 369.7 L249.5 369.4 L248.5 369.2 L247.5 369.1 L246.5 369.0 L245.5 368.8 L244.5 368.7 L243.5 368.9 L242.5 369.1 L241.5 369.2 L240.5 369.2 L239.5 369.3 L238.5 369.3 L237.5 369.4 L236.5 369.5 L235.5 369.5 L234.5 369.4 L233.5 369.2 L232.5 369.0 L231.5 369.1 L230.5 369.2 L229.5 369.3 L228.5 369.3 L227.5 369.3 L226.5 369.3 L225.5 369.2 L224.5 369.0 L223.5 368.9 L222.5 369.0 L221.5 369.2 L220.5 369.3 L219.5 369.2 L218.5 369.0 L217.5 368.8 L216.5 369.0 L215.5 369.2 L214.5 369.4 L213.5 369.5 L212.5 369.4 L211.5 369.6 L210.5 369.9 L209.5 370.0 L208.5 369.8 L207.5 369.5 L206.5 369.2 L205.5 369.0 L204.5 368.9 L203.5 369.0 L202.5 369.1 L201.5 369.1 L200.5 369.0 L199.5 369.0 L198.5 369.0 L197.5 369.0 L196.5 369.1 L195.5 369.5 L194.5 370.2 L193.5 370.8 L192.5 371.1 L191.5 371.0 L190.5 370.6 L189.5 370.1 L188.5 369.7 L187.5 369.4 L186.5 369.2 L185.5 369.1 L184.5 369.1 L183.5 369.1 L182.5 369.0 L181.5 368.9 L180.5 368.9 L179.5 368.9 L178.5 368.8 L177.5 369.0 L176.5 369.2 L175.5 369.5 L174.5 369.7 L173.5 369.9 L172.5 370.0 L171.5 369.6 L170.5 369.2 L169.5 368.9 L168.5 368.8 L167.5 368.9 L166.5 368.9 L165.5 369.0 L164.5 369.0 L163.5 369.0 L162.5 369.0 L161.5 369.1 L160.5 369.1 L159.5 369.2 L158.5 369.4 L157.5 369.5 L156.5 369.4 L155.5 369.1 L154.5 368.9 L153.5 369.1 L152.5 369.4 L151.5 369.8 L150.5 370.3 L149.5 371.1 L148.5 371.6 L147.5 371.4 L146.5 370.8 L145.5 370.1 L144.5 369.7 L143.5 369.5 L142.5 369.5 L141.5 369.4 L140.5 369.2 L139.5 369.2 L138.5 369.3 L137.5 369.5 L136.5 369.6 L135.5 369.4 L134.5 369.2 L133.5 369.0 L132.5 369.0 L131.5 369.0 L130.5 369.0 L129.5 369.1 L128.5 369.3 L127.5 369.5 L126.5 369.4 L125.5 369.2 L124.5 369.2 L123.5 369.3 L122.5 369.7 L121.5 370.2 L120.5 370.5 L119.5 370.4 L118.5 370.0 L117.5 369.6 L116.5 369.3 L115.5 369.2 L114.5 369.2 L113.5 369.2 L112.5 369.2 L111.5 369.2 L110.5 369.1 L109.5 369.0 L108.5 369.1 L107.5 369.3 L106.5 369.4 L105.5 369.3 L104.5 369.1 L103.5 369.0 L102.5 369.1 L101.5 369.4 L100.5 369.5 L99.5 369.5 L98.5 369.3 L97.5 369.2 L96.5 369.2 L95.5 369.0 L94.5 368.9 L93.5 368.9 L92.5 368.9 L91.5 368.9 L90.5 369.1 L89.5 369.3 L88.5 369.5 L87.5 369.3 L86.5 369.1 L85.5 368.9 L84.5 368.9 L83.5 368.9 L82.5 368.9 L81.5 368.9 L80.5 368.8 L79.5 368.8 L78.5 368.8 L77.5 368.8 L76.5 368.8 L75.5 368.9 L74.5 369.2 L73.5 369.5 L72.5 369.9 L71.5 370.2 L70.5 370.2 L69.5 370.1 L68.5 370.0 L67.5 369.9Z" fill="#f0f0f0"/></svg>
<div class="a" style="left:0;top:402px;width:340px;height:27px;background:#53804c"></div>
<div class="t" style="left:4.0px;top:409px;font-size:13.66px;color:#f3f3f3">La historia-1 Esteban</div>
<div class="a" style="left:0;top:429px;width:340px;height:29px;background:#69c15e"></div>
<div class="t" style="left:6.6px;top:438px;font-size:11.77px;color:#44703f;-webkit-text-stroke:0.15px #44703f">Pulsa sobre el nombre de la pista para añadir sonidos.</div>
<div class="a" style="left:0;top:458px;width:340px;height:28px;background:#687c45"></div>
<div class="t" style="left:4.0px;top:465px;font-size:13.66px;color:#f3f3f3">Pista-3</div>
<svg style="left:0;top:0" width="1" height="1"><circle cx="326.50" cy="472.40" r="7.60" stroke="#dcdcd8" stroke-width="1.25" fill="none"/><path d="M324.80 468.80L329.80 472.40L324.80 476.00Z" fill="#dcdcd8"/></svg>
<div class="a" style="left:0;top:486px;width:340px;height:64px;background:#8ab849"></div>
<div class="a" style="left:4.00px;top:490.20px;width:56.80px;height:56.40px;background:#ffffff"></div>
<svg style="left:0;top:0" width="1" height="1"><circle cx="32.40" cy="518.40" r="14.55" stroke="#8ab849" stroke-width="3.30" fill="none"/><path d="M28.80 511.20L38.60 518.40L28.80 525.60Z" fill="#8ab849"/></svg>
<div class="t" style="left:67.0px;top:490px;font-size:11.95px;color:#f3f3f3">22 Ua reka te tagnia to rau niau.mp3</div>
<div class="t" style="right:683.30px;top:490px;font-size:11.95px;color:#f3f3f3">5.45s</div>
<svg style="left:0;top:0" width="1" height="1"><path d="M67.6 514.3 L68.1 513.9 L68.6 513.7 L69.1 513.5 L69.6 513.4 L70.1 513.2 L70.6 512.9 L71.1 512.5 L71.6 512.1 L72.1 511.7 L72.6 511.5 L73.1 511.3 L73.6 511.2 L74.1 511.1 L74.6 510.9 L75.1 510.7 L75.6 511.1 L76.1 511.3 L76.6 511.6 L77.1 511.9 L77.6 512.2 L78.1 512.7 L78.6 513.1 L79.1 513.6 L79.6 514.0 L80.1 514.3 L80.6 514.5 L81.1 514.5 L81.6 514.3 L82.1 514.2 L82.6 514.1 L83.1 514.2 L83.6 514.2 L84.1 514.2 L84.6 514.3 L85.1 514.3 L85.6 514.3 L86.1 514.2 L86.6 514.2 L87.1 514.2 L87.6 514.1 L88.1 514.1 L88.6 514.1 L89.1 514.1 L89.6 514.1 L90.1 514.1 L90.6 514.1 L91.1 514.3 L91.6 514.4 L92.1 514.5 L92.6 514.6 L93.1 514.6 L93.6 514.6 L94.1 514.5 L94.6 514.5 L95.1 514.5 L95.6 514.5 L96.1 514.4 L96.6 514.3 L97.1 514.3 L97.6 514.3 L98.1 514.2 L98.6 514.1 L99.1 513.9 L99.6 513.7 L100.1 513.5 L100.6 513.3 L101.1 513.0 L101.6 513.2 L102.1 513.5 L102.6 513.8 L103.1 514.1 L103.6 514.3 L104.1 514.6 L104.6 514.6 L105.1 514.6 L105.6 514.5 L106.1 514.4 L106.6 514.3 L107.1 514.2 L107.6 514.1 L108.1 514.1 L108.6 514.1 L109.1 514.1 L109.6 514.1 L110.1 514.1 L110.6 514.1 L111.1 514.1 L111.6 514.1 L112.1 514.1 L112.6 514.1 L113.1 514.2 L113.6 514.3 L114.1 514.4 L114.6 514.5 L115.1 514.5 L115.6 514.4 L116.1 514.3 L116.6 514.1 L117.1 514.0 L117.6 514.0 L118.1 514.0 L118.6 514.1 L119.1 514.2 L119.6 514.2 L120.1 514.2 L120.6 514.3 L121.1 514.3 L121.6 514.4 L122.1 514.4 L122.6 514.4 L123.1 514.4 L123.6 514.3 L124.1 514.3 L124.6 514.3 L125.1 514.2 L125.6 514.2 L126.1 514.2 L126.6 513.8 L127.1 513.3 L127.6 512.9 L128.1 512.6 L128.6 512.2 L129.1 511.9 L129.6 511.5 L130.1 511.3 L130.6 511.6 L131.1 511.9 L131.6 512.2 L132.1 512.6 L132.6 512.9 L133.1 513.4 L133.6 513.8 L134.1 514.2 L134.6 514.2 L135.1 514.2 L135.6 514.2 L136.1 514.1 L136.6 514.1 L137.1 514.1 L137.6 514.1 L138.1 514.0 L138.6 514.0 L139.1 513.9 L139.6 513.8 L140.1 513.8 L140.6 513.8 L141.1 513.9 L141.6 514.0 L142.1 514.0 L142.6 514.0 L143.1 514.0 L143.6 514.1 L144.1 514.1 L144.6 514.2 L145.1 514.2 L145.6 514.2 L146.1 514.1 L146.6 514.0 L147.1 513.9 L147.6 513.9 L148.1 513.9 L148.6 513.8 L149.1 513.8 L149.6 513.8 L150.1 513.8 L150.6 513.9 L151.1 513.9 L151.6 514.1 L152.1 514.1 L152.6 514.2 L153.1 514.1 L153.6 514.0 L154.1 513.9 L154.6 513.9 L155.1 513.9 L155.6 513.9 L156.1 514.1 L156.6 514.3 L157.1 514.5 L157.6 514.5 L158.1 514.5 L158.6 514.5 L159.1 514.4 L159.6 514.4 L160.1 514.4 L160.6 514.4 L161.1 514.4 L161.6 514.4 L162.1 514.4 L162.6 514.4 L163.1 514.3 L163.6 514.2 L164.1 514.0 L164.6 513.9 L165.1 513.9 L165.6 513.9 L166.1 514.0 L166.6 514.0 L167.1 514.0 L167.6 514.1 L168.1 514.1 L168.6 514.1 L169.1 514.1 L169.6 514.0 L170.1 514.0 L170.6 514.1 L171.1 514.1 L171.6 514.2 L172.1 514.3 L172.6 514.3 L173.1 514.3 L173.6 514.2 L174.1 514.2 L174.6 514.1 L175.1 514.1 L175.6 514.1 L176.1 514.0 L176.6 513.9 L177.1 513.8 L177.6 513.8 L178.1 513.8 L178.6 514.0 L179.1 514.1 L179.6 514.3 L180.1 514.3 L180.6 514.3 L181.1 514.3 L181.6 514.2 L182.1 514.2 L182.6 514.2 L183.1 514.2 L183.6 514.2 L184.1 514.2 L184.6 514.2 L185.1 514.2 L185.6 514.2 L186.1 514.1 L186.6 514.0 L187.1 513.9 L187.6 513.9 L188.1 513.8 L188.6 513.7 L189.1 513.7 L189.6 513.6 L190.1 513.6 L190.6 513.6 L191.1 513.6 L191.6 513.7 L192.1 513.7 L192.6 513.7 L193.1 513.7 L193.6 513.7 L194.1 513.8 L194.6 513.8 L195.1 513.8 L195.6 513.7 L196.1 513.7 L196.6 513.7 L197.1 513.7 L197.6 513.6 L198.1 513.7 L198.6 513.7 L199.1 513.8 L199.6 513.8 L200.1 513.8 L200.6 513.7 L201.1 513.6 L201.6 513.4 L202.1 513.3 L202.6 513.2 L203.1 513.3 L203.6 513.4 L204.1 513.5 L204.6 513.5 L205.1 513.6 L205.6 513.6 L206.1 513.6 L206.6 513.6 L207.1 513.6 L207.6 513.6 L208.1 513.5 L208.6 513.5 L209.1 513.5 L209.6 513.5 L210.1 513.4 L210.6 513.4 L211.1 513.3 L211.6 513.1 L212.1 513.0 L212.6 513.0 L213.1 513.0 L213.6 513.1 L214.1 513.0 L214.6 512.8 L215.1 512.6 L215.6 512.3 L216.1 511.9 L216.6 511.5 L217.1 511.1 L217.6 510.8 L218.1 510.6 L218.6 510.5 L219.1 510.4 L219.6 510.3 L220.1 510.1 L220.6 509.8 L221.1 509.6 L221.6 509.3 L222.1 509.1 L222.6 509.2 L223.1 509.2 L223.6 509.3 L224.1 509.4 L224.6 509.4 L225.1 509.5 L225.6 509.4 L226.1 509.3 L226.6 509.1 L227.1 509.0 L227.6 508.9 L228.1 509.0 L228.6 509.0 L229.1 509.0 L229.6 509.1 L230.1 509.1 L230.6 509.1 L231.1 509.2 L231.6 509.3 L232.1 509.3 L232.6 509.4 L233.1 509.4 L233.6 509.5 L234.1 509.6 L234.6 509.6 L235.1 509.6 L235.6 509.5 L236.1 509.3 L236.6 509.1 L237.1 508.9 L237.6 508.8 L238.1 508.6 L238.6 508.5 L239.1 508.3 L239.6 507.4 L240.1 506.5 L240.6 505.5 L241.1 504.5 L241.6 505.6 L242.1 507.2 L242.6 508.8 L243.1 510.2 L243.6 510.6 L244.1 510.9 L244.6 511.0 L245.1 511.0 L245.6 511.1 L246.1 511.2 L246.6 511.3 L247.1 511.4 L247.6 511.5 L248.1 511.6 L248.6 511.7 L249.1 511.9 L249.6 512.0 L250.1 512.0 L250.6 512.1 L251.1 512.1 L251.6 512.2 L252.1 512.2 L252.6 512.2 L253.1 512.1 L253.6 512.0 L254.1 511.8 L254.6 511.7 L255.1 511.6 L255.6 511.6 L256.1 511.6 L256.6 511.6 L257.1 511.6 L257.6 511.6 L258.1 511.7 L258.6 511.8 L259.1 512.0 L259.6 512.1 L260.1 512.1 L260.6 511.8 L261.1 511.5 L261.6 511.1 L262.1 510.8 L262.6 510.5 L263.1 510.3 L263.6 510.0 L264.1 509.8 L264.6 509.5 L265.1 510.0 L265.6 510.3 L266.1 510.7 L266.6 511.0 L267.1 511.4 L267.6 511.8 L268.1 512.4 L268.6 513.0 L269.1 513.6 L269.6 513.8 L270.1 514.0 L270.6 514.1 L271.1 514.2 L271.6 514.2 L272.1 514.2 L272.6 514.2 L273.1 514.1 L273.6 514.0 L274.1 513.8 L274.6 513.7 L275.1 513.7 L275.6 513.7 L276.1 513.7 L276.6 513.8 L277.1 513.8 L277.6 513.9 L278.1 513.9 L278.6 513.9 L279.1 513.9 L279.6 513.9 L280.1 513.9 L280.6 513.9 L281.1 513.8 L281.6 513.8 L282.1 513.7 L282.6 513.7 L283.1 513.7 L283.6 513.8 L284.1 513.8 L284.6 513.8 L285.1 513.8 L285.6 513.8 L286.1 513.8 L286.6 513.8 L287.1 513.8 L287.6 513.8 L288.1 513.7 L288.6 513.5 L289.1 513.3 L289.6 513.1 L290.1 512.8 L290.6 512.5 L291.1 512.2 L291.6 511.9 L292.1 511.6 L292.6 511.5 L293.1 511.3 L293.6 511.2 L294.1 511.0 L294.6 510.9 L295.1 510.7 L295.6 510.5 L296.1 510.4 L296.6 510.6 L297.1 510.7 L297.6 510.9 L298.1 511.1 L298.6 511.3 L299.1 511.5 L299.6 511.6 L300.1 511.8 L300.6 511.8 L301.1 511.9 L301.6 511.9 L302.1 512.0 L302.6 512.0 L303.1 512.0 L303.6 512.0 L304.1 512.0 L304.6 512.0 L305.1 512.0 L305.6 511.8 L306.1 511.6 L306.6 511.4 L307.1 511.2 L307.6 511.1 L308.1 510.9 L308.6 510.8 L309.1 510.6 L309.6 510.5 L310.1 510.4 L310.6 510.6 L311.1 510.8 L311.6 511.0 L312.1 511.2 L312.6 511.4 L313.1 511.6 L313.6 511.9 L314.1 512.1 L314.6 512.4 L315.1 512.5 L315.6 512.4 L316.1 512.3 L316.6 512.1 L317.1 512.0 L317.6 511.9 L318.1 511.9 L318.6 511.8 L319.1 511.8 L319.6 511.7 L320.1 511.7 L320.6 511.6 L321.1 511.6 L321.6 511.5 L322.1 511.5 L322.6 511.4 L323.1 511.4 L323.6 511.3 L324.1 511.3 L324.6 511.3 L325.1 511.2 L325.6 511.3 L326.1 511.4 L326.6 511.6 L327.1 511.8 L327.6 511.9 L328.1 511.9 L328.6 511.9 L329.1 511.8 L329.6 511.8 L330.1 511.8 L330.6 511.8 L331.1 511.9 L331.6 511.9 L332.1 512.0 L332.6 512.0 L332.6 521.2 L332.1 521.2 L331.6 521.1 L331.1 520.9 L330.6 520.7 L330.1 520.7 L329.6 520.8 L329.1 520.9 L328.6 521.1 L328.1 521.3 L327.6 521.5 L327.1 521.6 L326.6 521.6 L326.1 521.6 L325.6 521.5 L325.1 521.5 L324.6 521.4 L324.1 521.3 L323.6 521.2 L323.1 521.1 L322.6 521.1 L322.1 521.0 L321.6 521.1 L321.1 521.1 L320.6 521.1 L320.1 521.1 L319.6 521.0 L319.1 520.8 L318.6 520.7 L318.1 520.5 L317.6 520.3 L317.1 520.3 L316.6 520.2 L316.1 520.2 L315.6 520.2 L315.1 520.1 L314.6 520.2 L314.1 520.2 L313.6 520.2 L313.1 520.2 L312.6 520.3 L312.1 520.4 L311.6 520.5 L311.1 520.6 L310.6 520.7 L310.1 520.7 L309.6 520.7 L309.1 520.6 L308.6 520.5 L308.1 520.4 L307.6 520.3 L307.1 520.3 L306.6 520.3 L306.1 520.3 L305.6 520.4 L305.1 520.4 L304.6 520.4 L304.1 520.4 L303.6 520.4 L303.1 520.5 L302.6 520.5 L302.1 520.5 L301.6 520.6 L301.1 520.6 L300.6 520.7 L300.1 520.7 L299.6 520.9 L299.1 521.1 L298.6 521.2 L298.1 521.4 L297.6 521.6 L297.1 521.8 L296.6 521.9 L296.1 522.1 L295.6 521.9 L295.1 521.7 L294.6 521.5 L294.1 521.5 L293.6 521.5 L293.1 521.5 L292.6 521.4 L292.1 521.2 L291.6 520.8 L291.1 520.5 L290.6 520.1 L290.1 519.7 L289.6 519.4 L289.1 519.1 L288.6 518.8 L288.1 518.5 L287.6 518.4 L287.1 518.4 L286.6 518.6 L286.1 518.7 L285.6 518.9 L285.1 519.0 L284.6 519.0 L284.1 518.9 L283.6 518.7 L283.1 518.6 L282.6 518.5 L282.1 518.6 L281.6 518.7 L281.1 518.8 L280.6 519.0 L280.1 519.0 L279.6 519.0 L279.1 519.0 L278.6 519.0 L278.1 519.0 L277.6 519.0 L277.1 519.0 L276.6 518.9 L276.1 518.8 L275.6 518.7 L275.1 518.6 L274.6 518.6 L274.1 518.6 L273.6 518.7 L273.1 518.7 L272.6 518.7 L272.1 518.7 L271.6 518.7 L271.1 518.7 L270.6 518.9 L270.1 519.1 L269.6 519.3 L269.1 519.4 L268.6 519.9 L268.1 520.5 L267.6 521.1 L267.1 521.8 L266.6 522.4 L266.1 523.0 L265.6 523.6 L265.1 524.3 L264.6 524.9 L264.1 524.5 L263.6 524.1 L263.1 523.7 L262.6 523.4 L262.1 523.0 L261.6 522.6 L261.1 522.2 L260.6 521.9 L260.1 521.5 L259.6 521.4 L259.1 521.4 L258.6 521.4 L258.1 521.4 L257.6 521.4 L257.1 521.4 L256.6 521.4 L256.1 521.4 L255.6 521.3 L255.1 521.3 L254.6 521.3 L254.1 521.4 L253.6 521.5 L253.1 521.6 L252.6 521.7 L252.1 521.6 L251.6 521.6 L251.1 521.5 L250.6 521.4 L250.1 521.3 L249.6 521.5 L249.1 521.8 L248.6 522.0 L248.1 522.2 L247.6 522.5 L247.1 522.7 L246.6 522.9 L246.1 523.0 L245.6 523.2 L245.1 523.4 L244.6 523.6 L244.1 524.0 L243.6 524.7 L243.1 525.5 L242.6 526.5 L242.1 527.4 L241.6 528.3 L241.1 528.8 L240.6 527.9 L240.1 527.0 L239.6 526.1 L239.1 525.3 L238.6 525.2 L238.1 525.2 L237.6 525.2 L237.1 525.2 L236.6 525.3 L236.1 525.5 L235.6 525.6 L235.1 525.7 L234.6 525.7 L234.1 525.6 L233.6 525.5 L233.1 525.5 L232.6 525.5 L232.1 525.5 L231.6 525.5 L231.1 525.6 L230.6 525.6 L230.1 525.6 L229.6 525.6 L229.1 525.7 L228.6 525.7 L228.1 525.7 L227.6 525.7 L227.1 525.7 L226.6 525.7 L226.1 525.7 L225.6 525.7 L225.1 525.7 L224.6 525.7 L224.1 525.6 L223.6 525.5 L223.1 525.4 L222.6 525.4 L222.1 525.4 L221.6 525.2 L221.1 524.9 L220.6 524.5 L220.1 524.2 L219.6 523.8 L219.1 523.3 L218.6 522.8 L218.1 522.3 L217.6 521.8 L217.1 521.5 L216.6 521.3 L216.1 521.1 L215.6 520.9 L215.1 520.6 L214.6 520.2 L214.1 519.9 L213.6 519.6 L213.1 519.5 L212.6 519.5 L212.1 519.5 L211.6 519.6 L211.1 519.6 L210.6 519.7 L210.1 519.7 L209.6 519.7 L209.1 519.5 L208.6 519.3 L208.1 519.2 L207.6 519.1 L207.1 519.1 L206.6 519.3 L206.1 519.5 L205.6 519.7 L205.1 519.7 L204.6 519.7 L204.1 519.6 L203.6 519.4 L203.1 519.3 L202.6 519.2 L202.1 519.2 L201.6 519.2 L201.1 519.2 L200.6 519.2 L200.1 519.1 L199.6 519.1 L199.1 519.2 L198.6 519.2 L198.1 519.2 L197.6 519.2 L197.1 519.2 L196.6 519.2 L196.1 519.3 L195.6 519.3 L195.1 519.3 L194.6 519.3 L194.1 519.3 L193.6 519.4 L193.1 519.4 L192.6 519.5 L192.1 519.5 L191.6 519.5 L191.1 519.6 L190.6 519.6 L190.1 519.7 L189.6 519.7 L189.1 519.6 L188.6 519.6 L188.1 519.6 L187.6 519.6 L187.1 519.5 L186.6 519.5 L186.1 519.3 L185.6 519.2 L185.1 519.2 L184.6 519.2 L184.1 519.3 L183.6 519.4 L183.1 519.4 L182.6 519.5 L182.1 519.5 L181.6 519.5 L181.1 519.4 L180.6 519.4 L180.1 519.4 L179.6 519.4 L179.1 519.3 L178.6 519.2 L178.1 519.1 L177.6 519.0 L177.1 519.0 L176.6 519.1 L176.1 519.1 L175.6 519.2 L175.1 519.2 L174.6 519.2 L174.1 519.2 L173.6 519.2 L173.1 519.2 L172.6 519.2 L172.1 519.2 L171.6 519.1 L171.1 519.1 L170.6 519.0 L170.1 518.9 L169.6 518.9 L169.1 519.0 L168.6 519.1 L168.1 519.2 L167.6 519.2 L167.1 519.2 L166.6 519.2 L166.1 519.2 L165.6 519.2 L165.1 519.2 L164.6 519.2 L164.1 519.1 L163.6 519.1 L163.1 519.0 L162.6 519.0 L162.1 519.0 L161.6 519.0 L161.1 519.0 L160.6 519.0 L160.1 519.0 L159.6 519.0 L159.1 519.1 L158.6 519.2 L158.1 519.2 L157.6 519.3 L157.1 519.3 L156.6 519.2 L156.1 519.2 L155.6 519.1 L155.1 519.1 L154.6 519.1 L154.1 519.1 L153.6 519.1 L153.1 519.1 L152.6 519.1 L152.1 519.1 L151.6 519.1 L151.1 519.1 L150.6 519.1 L150.1 519.1 L149.6 519.1 L149.1 519.2 L148.6 519.2 L148.1 519.2 L147.6 519.2 L147.1 519.2 L146.6 519.2 L146.1 519.2 L145.6 519.1 L145.1 519.1 L144.6 519.1 L144.1 519.0 L143.6 518.9 L143.1 518.8 L142.6 518.7 L142.1 518.8 L141.6 518.9 L141.1 519.0 L140.6 519.1 L140.1 519.1 L139.6 519.1 L139.1 519.0 L138.6 518.8 L138.1 518.7 L137.6 518.6 L137.1 518.6 L136.6 518.7 L136.1 518.9 L135.6 519.0 L135.1 519.1 L134.6 519.1 L134.1 519.0 L133.6 519.3 L133.1 519.7 L132.6 520.1 L132.1 520.5 L131.6 521.0 L131.1 521.6 L130.6 522.1 L130.1 522.6 L129.6 522.3 L129.1 521.8 L128.6 521.3 L128.1 520.8 L127.6 520.3 L127.1 519.9 L126.6 519.4 L126.1 519.0 L125.6 518.9 L125.1 518.9 L124.6 518.9 L124.1 519.0 L123.6 519.0 L123.1 519.0 L122.6 519.0 L122.1 519.0 L121.6 518.9 L121.1 518.9 L120.6 518.8 L120.1 518.7 L119.6 518.7 L119.1 518.7 L118.6 518.6 L118.1 518.6 L117.6 518.5 L117.1 518.5 L116.6 518.5 L116.1 518.5 L115.6 518.5 L115.1 518.5 L114.6 518.6 L114.1 518.7 L113.6 518.8 L113.1 519.0 L112.6 519.1 L112.1 519.0 L111.6 518.9 L111.1 518.8 L110.6 518.7 L110.1 518.6 L109.6 518.6 L109.1 518.7 L108.6 518.7 L108.1 518.8 L107.6 518.8 L107.1 518.8 L106.6 518.8 L106.1 518.9 L105.6 518.9 L105.1 518.9 L104.6 518.9 L104.1 518.8 L103.6 519.0 L103.1 519.4 L102.6 519.8 L102.1 520.4 L101.6 521.0 L101.1 521.4 L100.6 521.1 L100.1 520.7 L99.6 520.3 L99.1 519.8 L98.6 519.4 L98.1 519.0 L97.6 519.0 L97.1 518.9 L96.6 518.8 L96.1 518.7 L95.6 518.5 L95.1 518.5 L94.6 518.5 L94.1 518.4 L93.6 518.4 L93.1 518.4 L92.6 518.4 L92.1 518.4 L91.6 518.4 L91.1 518.5 L90.6 518.6 L90.1 518.6 L89.6 518.6 L89.1 518.7 L88.6 518.7 L88.1 518.8 L87.6 518.8 L87.1 518.8 L86.6 518.8 L86.1 518.8 L85.6 518.8 L85.1 518.8 L84.6 518.8 L84.1 518.7 L83.6 518.7 L83.1 518.6 L82.6 518.6 L82.1 518.6 L81.6 518.6 L81.1 518.6 L80.6 518.8 L80.1 519.1 L79.6 519.4 L79.1 519.7 L78.6 520.1 L78.1 520.4 L77.6 521.1 L77.1 521.7 L76.6 522.4 L76.1 523.1 L75.6 523.8 L75.1 524.5 L74.6 524.0 L74.1 523.5 L73.6 522.9 L73.1 522.3 L72.6 521.8 L72.1 521.4 L71.6 521.2 L71.1 521.1 L70.6 521.0 L70.1 520.8 L69.6 520.5 L69.1 520.1 L68.6 519.5 L68.1 518.7 L67.6 518.0Z" fill="#f0f0f0"/></svg>
<div class="a" style="left:0;top:550px;width:340px;height:28px;background:#876840"></div>
<div class="t" style="left:4.0px;top:558px;font-size:13.66px;color:#f3f3f3">Pista-4</div>
<svg style="left:0;top:0" width="1" height="1"><circle cx="326.50" cy="564.40" r="7.60" stroke="#dcdcd8" stroke-width="1.25" fill="none"/><path d="M324.80 560.80L329.80 564.40L324.80 568.00Z" fill="#dcdcd8"/></svg>
<div class="a" style="left:0;top:578px;width:340px;height:65px;background:#d4903d"></div>
<div class="a" style="left:4.00px;top:582.30px;width:56.80px;height:56.40px;background:#333333"></div>
<svg style="left:0;top:0" width="1" height="1"><circle cx="32.40" cy="610.50" r="14.55" stroke="#d4903d" stroke-width="3.30" fill="none"/><path d="M28.80 603.30L38.60 610.50L28.80 617.70Z" fill="#d4903d"/></svg>
<div class="t" style="left:67.0px;top:582px;font-size:11.95px;color:#f3f3f3">09. Temaeva - Iva.mp3</div>
<div class="t" style="right:683.30px;top:582px;font-size:11.95px;color:#f3f3f3">2.09s</div>
<svg style="left:0;top:0" width="1" height="1"><path d="M66.9 604.2 L67.4 604.2 L67.9 604.2 L68.4 604.1 L68.9 604.1 L69.4 604.1 L69.9 604.0 L70.4 604.0 L70.9 604.0 L71.4 604.2 L71.9 604.3 L72.4 604.5 L72.9 604.6 L73.4 604.7 L73.9 604.9 L74.4 605.0 L74.9 605.2 L75.4 605.3 L75.9 605.5 L76.4 605.6 L76.9 605.8 L77.4 605.9 L77.9 606.0 L78.4 605.8 L78.9 605.5 L79.4 605.3 L79.9 605.1 L80.4 604.9 L80.9 604.7 L81.4 604.6 L81.9 604.4 L82.4 604.2 L82.9 604.0 L83.4 603.7 L83.9 603.5 L84.4 603.4 L84.9 603.5 L85.4 603.7 L85.9 603.9 L86.4 604.1 L86.9 604.3 L87.4 604.5 L87.9 604.6 L88.4 604.7 L88.9 604.8 L89.4 604.8 L89.9 604.9 L90.4 605.0 L90.9 605.1 L91.4 605.3 L91.9 605.4 L92.4 605.4 L92.9 605.5 L93.4 605.7 L93.9 605.8 L94.4 605.9 L94.9 606.0 L95.4 606.1 L95.9 606.1 L96.4 606.1 L96.9 606.0 L97.4 606.1 L97.9 606.2 L98.4 606.3 L98.9 606.5 L99.4 606.7 L99.9 606.8 L100.4 606.9 L100.9 606.9 L101.4 606.8 L101.9 606.7 L102.4 606.6 L102.9 606.6 L103.4 606.6 L103.9 606.5 L104.4 606.4 L104.9 606.4 L105.4 606.4 L105.9 606.4 L106.4 606.5 L106.9 606.6 L107.4 606.6 L107.9 606.6 L108.4 606.5 L108.9 606.3 L109.4 606.2 L109.9 606.1 L110.4 606.1 L110.9 606.0 L111.4 606.0 L111.9 606.0 L112.4 606.0 L112.9 606.0 L113.4 605.9 L113.9 605.9 L114.4 605.9 L114.9 605.9 L115.4 605.7 L115.9 605.6 L116.4 605.5 L116.9 605.3 L117.4 605.2 L117.9 604.9 L118.4 604.6 L118.9 604.3 L119.4 604.3 L119.9 604.4 L120.4 604.5 L120.9 604.6 L121.4 604.8 L121.9 604.9 L122.4 605.0 L122.9 605.2 L123.4 605.3 L123.9 605.4 L124.4 605.4 L124.9 605.5 L125.4 605.5 L125.9 605.5 L126.4 605.6 L126.9 605.6 L127.4 605.6 L127.9 605.6 L128.4 605.6 L128.9 605.6 L129.4 605.7 L129.9 605.7 L130.4 605.7 L130.9 605.8 L131.4 605.8 L131.9 605.8 L132.4 605.9 L132.9 605.9 L133.4 605.8 L133.9 605.8 L134.4 605.7 L134.9 605.7 L135.4 605.7 L135.9 605.8 L136.4 605.9 L136.9 606.0 L137.4 606.1 L137.9 606.1 L138.4 606.1 L138.9 606.1 L139.4 606.1 L139.9 606.0 L140.4 606.0 L140.9 606.0 L141.4 606.0 L141.9 605.9 L142.4 605.9 L142.9 605.9 L143.4 605.9 L143.9 605.8 L144.4 605.8 L144.9 605.7 L145.4 605.8 L145.9 605.8 L146.4 606.0 L146.9 606.1 L147.4 606.1 L147.9 606.1 L148.4 606.2 L148.9 606.2 L149.4 606.3 L149.9 606.3 L150.4 606.2 L150.9 606.1 L151.4 605.9 L151.9 605.8 L152.4 605.7 L152.9 605.7 L153.4 605.7 L153.9 605.7 L154.4 605.7 L154.9 605.7 L155.4 605.7 L155.9 605.6 L156.4 605.6 L156.9 605.6 L157.4 605.6 L157.9 605.6 L158.4 605.6 L158.9 605.7 L159.4 605.7 L159.9 605.7 L160.4 605.7 L160.9 605.8 L161.4 605.9 L161.9 606.0 L162.4 606.1 L162.9 606.2 L163.4 606.2 L163.9 606.3 L164.4 606.3 L164.9 606.4 L165.4 606.4 L165.9 606.5 L166.4 606.5 L166.9 606.5 L167.4 606.6 L167.9 606.6 L168.4 606.6 L168.9 606.7 L169.4 606.7 L169.9 606.7 L170.4 606.7 L170.9 606.8 L171.4 606.9 L171.9 606.9 L172.4 607.0 L172.9 607.0 L173.4 606.9 L173.9 606.8 L174.4 606.7 L174.9 606.6 L175.4 606.6 L175.9 606.6 L176.4 606.6 L176.9 606.6 L177.4 606.6 L177.9 606.6 L178.4 606.7 L178.9 606.9 L179.4 607.0 L179.9 607.1 L180.4 607.0 L180.9 606.9 L181.4 606.8 L181.9 606.6 L182.4 606.6 L182.9 606.6 L183.4 606.6 L183.9 606.7 L184.4 606.8 L184.9 606.8 L185.4 606.8 L185.9 606.7 L186.4 606.7 L186.9 606.6 L187.4 606.6 L187.9 606.6 L188.4 606.7 L188.9 606.7 L189.4 606.8 L189.9 606.8 L190.4 606.8 L190.9 606.8 L191.4 606.7 L191.9 606.7 L192.4 606.7 L192.9 606.7 L193.4 606.7 L193.9 606.8 L194.4 606.9 L194.9 606.9 L195.4 606.9 L195.9 606.9 L196.4 606.8 L196.9 606.8 L197.4 606.8 L197.9 606.8 L198.4 606.8 L198.9 606.9 L199.4 606.9 L199.9 606.9 L200.4 606.9 L200.9 606.9 L201.4 607.0 L201.9 607.0 L202.4 607.0 L202.9 607.0 L203.4 606.9 L203.9 606.8 L204.4 606.8 L204.9 606.7 L205.4 606.7 L205.9 606.6 L206.4 606.6 L206.9 606.5 L207.4 606.5 L207.9 606.4 L208.4 606.4 L208.9 606.3 L209.4 606.2 L209.9 606.2 L210.4 606.2 L210.9 606.1 L211.4 606.1 L211.9 606.2 L212.4 606.4 L212.9 606.5 L213.4 606.7 L213.9 606.9 L214.4 606.7 L214.9 606.5 L215.4 606.3 L215.9 606.1 L216.4 605.9 L216.9 605.7 L217.4 605.4 L217.9 605.1 L218.4 604.9 L218.9 604.6 L219.4 604.4 L219.9 604.2 L220.4 604.6 L220.9 604.9 L221.4 605.3 L221.9 605.7 L222.4 606.1 L222.9 606.5 L223.4 606.7 L223.9 606.8 L224.4 606.8 L224.9 606.9 L225.4 606.9 L225.9 606.8 L226.4 606.7 L226.9 606.7 L227.4 606.6 L227.9 606.6 L228.4 606.7 L228.9 606.7 L229.4 606.7 L229.9 606.7 L230.4 606.7 L230.9 606.8 L231.4 606.8 L231.9 606.8 L232.4 606.8 L232.9 606.8 L233.4 606.8 L233.9 606.7 L234.4 606.7 L234.9 606.7 L235.4 606.7 L235.9 606.8 L236.4 606.9 L236.9 607.0 L237.4 607.1 L237.9 607.1 L238.4 607.1 L238.9 607.1 L239.4 607.1 L239.9 607.1 L240.4 607.1 L240.9 607.1 L241.4 607.1 L241.9 607.1 L242.4 607.1 L242.9 607.1 L243.4 607.1 L243.9 607.1 L244.4 607.1 L244.9 607.1 L245.4 607.1 L245.9 607.1 L246.4 607.2 L246.9 607.2 L247.4 607.2 L247.9 607.2 L248.4 607.1 L248.9 607.0 L249.4 606.9 L249.9 606.8 L250.4 606.8 L250.9 606.8 L251.4 606.7 L251.9 606.7 L252.4 606.6 L252.9 606.7 L253.4 606.8 L253.9 606.9 L254.4 607.1 L254.9 607.1 L255.4 607.1 L255.9 607.0 L256.4 606.9 L256.9 606.8 L257.4 606.8 L257.9 606.8 L258.4 606.7 L258.9 606.7 L259.4 606.7 L259.9 606.6 L260.4 606.6 L260.9 606.7 L261.4 606.7 L261.9 606.7 L262.4 606.7 L262.9 606.8 L263.4 606.8 L263.9 607.0 L264.4 607.1 L264.9 607.1 L265.4 607.1 L265.9 607.0 L266.4 606.9 L266.9 606.9 L267.4 606.8 L267.9 606.8 L268.4 606.9 L268.9 607.0 L269.4 607.0 L269.9 607.0 L270.4 607.0 L270.9 607.1 L271.4 607.1 L271.9 607.1 L272.4 607.1 L272.9 607.1 L273.4 607.1 L273.9 607.2 L274.4 607.2 L274.9 607.2 L275.4 607.2 L275.9 607.1 L276.4 607.0 L276.9 606.9 L277.4 606.9 L277.9 606.9 L278.4 606.8 L278.9 606.7 L279.4 606.7 L279.9 606.6 L280.4 606.7 L280.9 606.8 L281.4 606.7 L281.9 606.5 L282.4 606.3 L282.9 606.0 L283.4 605.7 L283.9 605.4 L284.4 605.1 L284.9 605.2 L285.4 605.5 L285.9 605.7 L286.4 606.0 L286.9 606.2 L287.4 606.4 L287.9 606.7 L288.4 606.8 L288.9 606.9 L289.4 606.9 L289.9 607.0 L290.4 607.0 L290.9 606.9 L291.4 606.8 L291.9 606.8 L292.4 606.7 L292.9 606.7 L293.4 606.7 L293.9 606.6 L294.4 606.6 L294.9 606.6 L295.4 606.6 L295.9 606.6 L296.4 606.7 L296.9 606.7 L297.4 606.7 L297.9 606.7 L298.4 606.8 L298.9 606.9 L299.4 606.9 L299.9 606.9 L300.4 606.8 L300.9 606.8 L301.4 606.7 L301.9 606.7 L302.4 606.6 L302.9 606.5 L303.4 606.5 L303.9 606.4 L304.4 606.3 L304.9 606.3 L305.4 606.3 L305.9 606.2 L306.4 606.1 L306.9 606.1 L307.4 606.0 L307.9 606.0 L308.4 606.0 L308.9 606.0 L309.4 605.9 L309.9 605.9 L310.4 605.9 L310.9 606.0 L311.4 606.1 L311.9 606.2 L312.4 606.2 L312.9 606.3 L313.4 606.6 L313.9 606.9 L314.4 607.0 L314.9 607.0 L315.4 607.0 L315.9 607.0 L316.4 607.0 L316.9 607.0 L317.4 607.0 L317.9 607.0 L318.4 606.9 L318.9 606.9 L319.4 606.9 L319.9 606.9 L320.4 606.9 L320.9 606.9 L321.4 607.0 L321.9 607.0 L322.4 607.0 L322.9 607.0 L323.4 607.0 L323.9 607.0 L324.4 607.0 L324.9 607.0 L325.4 607.0 L325.9 607.0 L326.4 606.9 L326.9 606.9 L327.4 606.8 L327.9 606.8 L328.4 606.8 L328.9 606.7 L329.4 606.6 L329.9 606.6 L330.4 606.6 L330.9 606.7 L331.4 606.8 L331.9 606.9 L332.4 607.0 L332.9 607.5 L332.9 609.7 L332.4 610.3 L331.9 610.3 L331.4 610.3 L330.9 610.3 L330.4 610.4 L329.9 610.4 L329.4 610.3 L328.9 610.3 L328.4 610.2 L327.9 610.2 L327.4 610.1 L326.9 610.2 L326.4 610.3 L325.9 610.4 L325.4 610.4 L324.9 610.5 L324.4 610.4 L323.9 610.3 L323.4 610.1 L322.9 610.0 L322.4 609.9 L321.9 610.0 L321.4 610.0 L320.9 610.0 L320.4 610.0 L319.9 610.0 L319.4 610.0 L318.9 610.0 L318.4 609.9 L317.9 609.9 L317.4 609.9 L316.9 609.9 L316.4 610.0 L315.9 610.1 L315.4 610.1 L314.9 610.1 L314.4 610.2 L313.9 610.3 L313.4 610.5 L312.9 610.8 L312.4 610.9 L311.9 610.9 L311.4 610.8 L310.9 610.7 L310.4 610.7 L309.9 610.6 L309.4 610.7 L308.9 610.7 L308.4 610.7 L307.9 610.8 L307.4 610.8 L306.9 610.8 L306.4 610.7 L305.9 610.7 L305.4 610.7 L304.9 610.7 L304.4 610.7 L303.9 610.7 L303.4 610.7 L302.9 610.7 L302.4 610.6 L301.9 610.6 L301.4 610.6 L300.9 610.6 L300.4 610.7 L299.9 610.6 L299.4 610.5 L298.9 610.3 L298.4 610.2 L297.9 610.1 L297.4 610.1 L296.9 610.1 L296.4 610.2 L295.9 610.3 L295.4 610.4 L294.9 610.5 L294.4 610.4 L293.9 610.4 L293.4 610.3 L292.9 610.3 L292.4 610.3 L291.9 610.3 L291.4 610.3 L290.9 610.4 L290.4 610.4 L289.9 610.5 L289.4 610.5 L288.9 610.5 L288.4 610.5 L287.9 610.5 L287.4 610.8 L286.9 611.1 L286.4 611.4 L285.9 611.6 L285.4 611.9 L284.9 612.2 L284.4 612.3 L283.9 611.9 L283.4 611.5 L282.9 611.1 L282.4 610.8 L281.9 610.4 L281.4 610.1 L280.9 609.8 L280.4 609.8 L279.9 609.8 L279.4 609.8 L278.9 609.8 L278.4 609.8 L277.9 609.8 L277.4 609.8 L276.9 609.8 L276.4 609.9 L275.9 609.9 L275.4 609.9 L274.9 609.9 L274.4 609.9 L273.9 609.9 L273.4 609.9 L272.9 609.9 L272.4 609.9 L271.9 609.9 L271.4 610.0 L270.9 610.0 L270.4 610.1 L269.9 610.1 L269.4 610.0 L268.9 610.0 L268.4 610.0 L267.9 609.9 L267.4 609.9 L266.9 609.9 L266.4 609.9 L265.9 609.9 L265.4 609.9 L264.9 609.9 L264.4 610.0 L263.9 610.1 L263.4 610.2 L262.9 610.3 L262.4 610.4 L261.9 610.3 L261.4 610.2 L260.9 610.0 L260.4 609.9 L259.9 609.9 L259.4 609.9 L258.9 610.0 L258.4 610.1 L257.9 610.2 L257.4 610.3 L256.9 610.2 L256.4 610.2 L255.9 610.2 L255.4 610.2 L254.9 610.2 L254.4 610.1 L253.9 610.1 L253.4 610.0 L252.9 609.9 L252.4 609.9 L251.9 609.9 L251.4 609.9 L250.9 609.9 L250.4 609.9 L249.9 609.9 L249.4 610.0 L248.9 610.1 L248.4 610.2 L247.9 610.3 L247.4 610.4 L246.9 610.4 L246.4 610.3 L245.9 610.3 L245.4 610.3 L244.9 610.3 L244.4 610.3 L243.9 610.3 L243.4 610.4 L242.9 610.4 L242.4 610.4 L241.9 610.4 L241.4 610.3 L240.9 610.3 L240.4 610.2 L239.9 610.2 L239.4 610.3 L238.9 610.3 L238.4 610.3 L237.9 610.4 L237.4 610.4 L236.9 610.3 L236.4 610.1 L235.9 610.0 L235.4 609.9 L234.9 609.8 L234.4 609.8 L233.9 609.8 L233.4 609.8 L232.9 609.9 L232.4 609.9 L231.9 609.9 L231.4 610.1 L230.9 610.2 L230.4 610.3 L229.9 610.3 L229.4 610.3 L228.9 610.3 L228.4 610.3 L227.9 610.3 L227.4 610.2 L226.9 610.2 L226.4 610.2 L225.9 610.2 L225.4 610.2 L224.9 610.2 L224.4 610.3 L223.9 610.3 L223.4 610.4 L222.9 610.5 L222.4 610.9 L221.9 611.3 L221.4 611.8 L220.9 612.2 L220.4 612.6 L219.9 613.0 L219.4 612.7 L218.9 612.4 L218.4 612.0 L217.9 611.7 L217.4 611.4 L216.9 611.1 L216.4 611.0 L215.9 610.8 L215.4 610.7 L214.9 610.5 L214.4 610.3 L213.9 610.2 L213.4 610.5 L212.9 610.7 L212.4 610.9 L211.9 611.1 L211.4 611.1 L210.9 611.0 L210.4 611.0 L209.9 610.9 L209.4 610.9 L208.9 610.8 L208.4 610.8 L207.9 610.7 L207.4 610.7 L206.9 610.7 L206.4 610.7 L205.9 610.7 L205.4 610.7 L204.9 610.7 L204.4 610.7 L203.9 610.6 L203.4 610.5 L202.9 610.5 L202.4 610.4 L201.9 610.4 L201.4 610.3 L200.9 610.3 L200.4 610.2 L199.9 610.2 L199.4 610.2 L198.9 610.2 L198.4 610.2 L197.9 610.2 L197.4 610.2 L196.9 610.2 L196.4 610.2 L195.9 610.3 L195.4 610.3 L194.9 610.3 L194.4 610.3 L193.9 610.3 L193.4 610.3 L192.9 610.3 L192.4 610.3 L191.9 610.3 L191.4 610.2 L190.9 610.1 L190.4 610.1 L189.9 610.1 L189.4 610.0 L188.9 610.0 L188.4 609.9 L187.9 609.9 L187.4 609.9 L186.9 609.9 L186.4 610.0 L185.9 610.1 L185.4 610.1 L184.9 610.2 L184.4 610.2 L183.9 610.2 L183.4 610.3 L182.9 610.3 L182.4 610.3 L181.9 610.2 L181.4 610.1 L180.9 610.0 L180.4 609.9 L179.9 609.8 L179.4 609.9 L178.9 609.9 L178.4 610.0 L177.9 610.1 L177.4 610.1 L176.9 610.0 L176.4 609.9 L175.9 609.8 L175.4 609.8 L174.9 609.7 L174.4 609.8 L173.9 609.9 L173.4 610.1 L172.9 610.2 L172.4 610.2 L171.9 610.2 L171.4 610.0 L170.9 609.9 L170.4 609.8 L169.9 609.7 L169.4 609.9 L168.9 610.0 L168.4 610.2 L167.9 610.3 L167.4 610.4 L166.9 610.4 L166.4 610.4 L165.9 610.5 L165.4 610.5 L164.9 610.5 L164.4 610.6 L163.9 610.6 L163.4 610.7 L162.9 610.7 L162.4 610.7 L161.9 610.8 L161.4 611.0 L160.9 611.1 L160.4 611.2 L159.9 611.3 L159.4 611.3 L158.9 611.3 L158.4 611.4 L157.9 611.4 L157.4 611.4 L156.9 611.4 L156.4 611.4 L155.9 611.4 L155.4 611.3 L154.9 611.3 L154.4 611.3 L153.9 611.3 L153.4 611.3 L152.9 611.3 L152.4 611.3 L151.9 611.3 L151.4 611.4 L150.9 611.4 L150.4 611.4 L149.9 611.4 L149.4 611.4 L148.9 611.4 L148.4 611.4 L147.9 611.3 L147.4 611.3 L146.9 611.3 L146.4 611.4 L145.9 611.4 L145.4 611.4 L144.9 611.4 L144.4 611.3 L143.9 611.2 L143.4 611.1 L142.9 611.0 L142.4 611.0 L141.9 611.0 L141.4 611.0 L140.9 611.0 L140.4 611.0 L139.9 611.0 L139.4 611.0 L138.9 610.9 L138.4 610.8 L137.9 610.8 L137.4 610.7 L136.9 610.8 L136.4 610.9 L135.9 611.1 L135.4 611.2 L134.9 611.3 L134.4 611.4 L133.9 611.4 L133.4 611.5 L132.9 611.5 L132.4 611.6 L131.9 611.6 L131.4 611.6 L130.9 611.6 L130.4 611.5 L129.9 611.6 L129.4 611.6 L128.9 611.6 L128.4 611.6 L127.9 611.6 L127.4 611.6 L126.9 611.6 L126.4 611.7 L125.9 611.8 L125.4 611.8 L124.9 611.8 L124.4 611.8 L123.9 611.8 L123.4 611.8 L122.9 611.8 L122.4 612.0 L121.9 612.2 L121.4 612.3 L120.9 612.5 L120.4 612.6 L119.9 612.8 L119.4 612.9 L118.9 612.8 L118.4 612.5 L117.9 612.2 L117.4 611.9 L116.9 611.7 L116.4 611.5 L115.9 611.4 L115.4 611.2 L114.9 611.0 L114.4 611.0 L113.9 610.9 L113.4 610.9 L112.9 610.9 L112.4 610.8 L111.9 610.8 L111.4 610.8 L110.9 610.8 L110.4 610.8 L109.9 610.7 L109.4 610.7 L108.9 610.6 L108.4 610.6 L107.9 610.5 L107.4 610.5 L106.9 610.5 L106.4 610.4 L105.9 610.4 L105.4 610.4 L104.9 610.4 L104.4 610.3 L103.9 610.3 L103.4 610.2 L102.9 610.2 L102.4 610.2 L101.9 610.1 L101.4 610.1 L100.9 610.1 L100.4 610.1 L99.9 610.2 L99.4 610.4 L98.9 610.6 L98.4 610.8 L97.9 611.0 L97.4 611.1 L96.9 611.2 L96.4 611.1 L95.9 611.1 L95.4 611.0 L94.9 611.1 L94.4 611.2 L93.9 611.3 L93.4 611.4 L92.9 611.5 L92.4 611.6 L91.9 611.7 L91.4 611.9 L90.9 612.1 L90.4 612.2 L89.9 612.4 L89.4 612.6 L88.9 612.7 L88.4 612.9 L87.9 613.1 L87.4 613.2 L86.9 613.3 L86.4 613.5 L85.9 613.6 L85.4 613.7 L84.9 613.8 L84.4 614.0 L83.9 614.2 L83.4 613.9 L82.9 613.7 L82.4 613.4 L81.9 613.1 L81.4 612.7 L80.9 612.4 L80.4 612.1 L79.9 611.7 L79.4 611.5 L78.9 611.3 L78.4 611.1 L77.9 610.9 L77.4 611.0 L76.9 611.1 L76.4 611.2 L75.9 611.3 L75.4 611.4 L74.9 611.5 L74.4 611.5 L73.9 611.6 L73.4 611.7 L72.9 611.7 L72.4 611.8 L71.9 611.9 L71.4 611.9 L70.9 611.9 L70.4 612.0 L69.9 612.1 L69.4 612.2 L68.9 612.3 L68.4 612.5 L67.9 612.6 L67.4 612.7 L66.9 612.8Z" fill="#f0f0f0"/></svg>
<div class="a" style="left:0;top:643px;width:340px;height:27px;background:#5a4a4c"></div>
<div class="t" style="left:4.0px;top:650px;font-size:13.66px;color:#f3f3f3">nuertra favorita</div>
<svg style="left:0;top:0" width="1" height="1"><circle cx="326.50" cy="656.90" r="7.60" stroke="#dcdcd8" stroke-width="1.25" fill="none"/><path d="M324.80 653.30L329.80 656.90L324.80 660.50Z" fill="#dcdcd8"/></svg>
<div class="a" style="left:0;top:670px;width:340px;height:65px;background:#6e5254"></div>
<div class="a" style="left:4.00px;top:674.20px;width:56.80px;height:56.40px;background:#333333"></div>
<svg style="left:0;top:0" width="1" height="1"><circle cx="32.40" cy="702.40" r="14.55" stroke="#6e5254" stroke-width="3.30" fill="none"/><path d="M28.80 695.20L38.60 702.40L28.80 709.60Z" fill="#6e5254"/></svg>
<div class="t" style="left:67.0px;top:674px;font-size:11.95px;color:#f3f3f3">Palmas sevillanas 160 bpm mp3.mp3</div>
<div class="t" style="right:683.30px;top:674px;font-size:11.95px;color:#f3f3f3">3.77s</div>
<svg style="left:0;top:0" width="1" height="1"><path d="M67.5 698.9 L68.5 697.2 L69.5 695.5 L70.5 696.8 L71.5 698.4 L72.5 698.9 L73.5 698.9 L74.5 698.9 L75.5 699.0 L76.5 699.1 L77.5 699.0 L78.5 699.0 L79.5 698.9 L80.5 698.9 L81.5 698.9 L82.5 698.9 L83.5 698.9 L84.5 698.9 L85.5 699.0 L86.5 699.0 L87.5 699.1 L88.5 699.1 L89.5 699.1 L90.5 699.1 L91.5 699.1 L92.5 699.1 L93.5 698.8 L94.5 698.3 L95.5 697.9 L96.5 698.1 L97.5 698.4 L98.5 698.9 L99.5 699.0 L100.5 699.1 L101.5 699.1 L102.5 699.0 L103.5 699.0 L104.5 699.0 L105.5 699.0 L106.5 699.1 L107.5 699.0 L108.5 698.9 L109.5 698.9 L110.5 698.9 L111.5 698.9 L112.5 698.9 L113.5 698.9 L114.5 699.0 L115.5 699.0 L116.5 699.0 L117.5 698.9 L118.5 698.9 L119.5 698.9 L120.5 698.7 L121.5 698.4 L122.5 697.9 L123.5 698.1 L124.5 698.4 L125.5 698.8 L126.5 698.9 L127.5 698.9 L128.5 698.9 L129.5 699.0 L130.5 699.1 L131.5 699.1 L132.5 699.0 L133.5 698.9 L134.5 698.9 L135.5 699.0 L136.5 699.0 L137.5 699.0 L138.5 698.9 L139.5 698.9 L140.5 698.9 L141.5 699.0 L142.5 699.1 L143.5 699.1 L144.5 699.0 L145.5 699.0 L146.5 699.0 L147.5 698.9 L148.5 697.3 L149.5 695.5 L150.5 695.0 L151.5 696.9 L152.5 698.7 L153.5 699.0 L154.5 699.1 L155.5 699.1 L156.5 699.1 L157.5 699.1 L158.5 699.1 L159.5 698.9 L160.5 698.9 L161.5 698.9 L162.5 699.0 L163.5 699.0 L164.5 699.0 L165.5 698.9 L166.5 698.9 L167.5 698.9 L168.5 699.0 L169.5 699.1 L170.5 699.1 L171.5 699.0 L172.5 698.7 L173.5 697.5 L174.5 696.3 L175.5 696.7 L176.5 697.9 L177.5 698.9 L178.5 698.9 L179.5 698.9 L180.5 699.1 L181.5 699.1 L182.5 699.1 L183.5 699.1 L184.5 699.0 L185.5 699.1 L186.5 699.1 L187.5 699.1 L188.5 699.1 L189.5 699.0 L190.5 698.9 L191.5 699.0 L192.5 699.0 L193.5 699.0 L194.5 699.0 L195.5 698.9 L196.5 698.9 L197.5 698.9 L198.5 699.0 L199.5 699.0 L200.5 699.0 L201.5 698.9 L202.5 698.9 L203.5 698.9 L204.5 698.9 L205.5 698.9 L206.5 698.9 L207.5 699.0 L208.5 699.1 L209.5 699.1 L210.5 699.0 L211.5 699.0 L212.5 699.0 L213.5 698.9 L214.5 698.9 L215.5 698.9 L216.5 699.0 L217.5 699.0 L218.5 699.0 L219.5 699.0 L220.5 699.0 L221.5 699.0 L222.5 699.1 L223.5 699.1 L224.5 699.0 L225.5 699.0 L226.5 697.3 L227.5 695.3 L228.5 694.7 L229.5 696.7 L230.5 698.7 L231.5 699.0 L232.5 699.0 L233.5 699.0 L234.5 699.0 L235.5 699.0 L236.5 699.0 L237.5 699.0 L238.5 699.0 L239.5 699.0 L240.5 699.1 L241.5 699.1 L242.5 699.1 L243.5 699.0 L244.5 699.0 L245.5 698.9 L246.5 698.9 L247.5 698.9 L248.5 698.9 L249.5 699.0 L250.5 699.1 L251.5 699.1 L252.5 699.1 L253.5 698.1 L254.5 697.0 L255.5 696.7 L256.5 697.7 L257.5 698.8 L258.5 699.0 L259.5 699.0 L260.5 699.0 L261.5 699.0 L262.5 699.1 L263.5 699.1 L264.5 699.1 L265.5 699.1 L266.5 699.1 L267.5 699.0 L268.5 698.9 L269.5 699.0 L270.5 699.0 L271.5 699.0 L272.5 699.0 L273.5 699.0 L274.5 699.0 L275.5 699.0 L276.5 699.1 L277.5 699.1 L278.5 699.0 L279.5 699.0 L280.5 698.0 L281.5 696.9 L282.5 696.8 L283.5 697.9 L284.5 698.9 L285.5 699.0 L286.5 699.1 L287.5 699.1 L288.5 699.1 L289.5 699.1 L290.5 699.1 L291.5 698.9 L292.5 698.9 L293.5 698.9 L294.5 698.9 L295.5 698.9 L296.5 698.9 L297.5 699.1 L298.5 699.1 L299.5 699.1 L300.5 699.0 L301.5 699.0 L302.5 699.0 L303.5 699.0 L304.5 698.9 L305.5 699.0 L306.5 698.6 L307.5 697.4 L308.5 696.1 L309.5 696.9 L310.5 698.1 L311.5 698.9 L312.5 698.9 L313.5 698.9 L314.5 698.9 L315.5 698.9 L316.5 698.8 L317.5 698.4 L318.5 698.2 L319.5 698.6 L320.5 699.0 L321.5 699.0 L322.5 698.7 L323.5 698.3 L324.5 698.4 L325.5 698.9 L326.5 699.1 L327.5 699.1 L328.5 699.1 L329.5 699.0 L330.5 698.7 L331.5 698.2 L332.5 698.1 L333.5 698.7 L333.5 702.2 L332.5 702.8 L331.5 702.8 L330.5 702.2 L329.5 701.8 L328.5 701.7 L327.5 701.7 L326.5 701.8 L325.5 702.0 L324.5 702.4 L323.5 702.5 L322.5 702.0 L321.5 701.8 L320.5 701.8 L319.5 702.2 L318.5 702.6 L317.5 702.5 L316.5 702.1 L315.5 701.9 L314.5 701.9 L313.5 701.9 L312.5 701.9 L311.5 701.9 L310.5 702.7 L309.5 703.9 L308.5 704.6 L307.5 703.3 L306.5 702.1 L305.5 701.8 L304.5 701.9 L303.5 701.9 L302.5 701.8 L301.5 701.8 L300.5 701.8 L299.5 701.7 L298.5 701.7 L297.5 701.7 L296.5 701.8 L295.5 701.9 L294.5 701.9 L293.5 701.9 L292.5 701.9 L291.5 701.9 L290.5 701.7 L289.5 701.7 L288.5 701.7 L287.5 701.9 L286.5 701.9 L285.5 701.9 L284.5 701.9 L283.5 702.9 L282.5 704.0 L281.5 703.9 L280.5 702.9 L279.5 701.9 L278.5 701.8 L277.5 701.8 L276.5 701.8 L275.5 701.7 L274.5 701.7 L273.5 701.7 L272.5 701.8 L271.5 701.9 L270.5 701.8 L269.5 701.8 L268.5 701.8 L267.5 701.8 L266.5 701.7 L265.5 701.7 L264.5 701.7 L263.5 701.7 L262.5 701.7 L261.5 701.8 L260.5 701.8 L259.5 701.9 L258.5 701.9 L257.5 701.9 L256.5 702.9 L255.5 704.0 L254.5 703.8 L253.5 702.8 L252.5 701.9 L251.5 701.9 L250.5 701.9 L249.5 701.9 L248.5 701.8 L247.5 701.7 L246.5 701.7 L245.5 701.7 L244.5 701.7 L243.5 701.7 L242.5 701.8 L241.5 701.8 L240.5 701.8 L239.5 701.8 L238.5 701.8 L237.5 701.8 L236.5 701.8 L235.5 701.8 L234.5 701.8 L233.5 701.8 L232.5 701.8 L231.5 701.8 L230.5 702.1 L229.5 704.1 L228.5 706.2 L227.5 705.5 L226.5 703.5 L225.5 701.9 L224.5 701.9 L223.5 701.9 L222.5 701.9 L221.5 701.8 L220.5 701.8 L219.5 701.8 L218.5 701.7 L217.5 701.7 L216.5 701.7 L215.5 701.8 L214.5 701.8 L213.5 701.8 L212.5 701.8 L211.5 701.8 L210.5 701.8 L209.5 701.8 L208.5 701.8 L207.5 701.8 L206.5 701.8 L205.5 701.8 L204.5 701.8 L203.5 701.7 L202.5 701.7 L201.5 701.8 L200.5 701.8 L199.5 701.9 L198.5 701.9 L197.5 701.9 L196.5 701.9 L195.5 701.9 L194.5 701.8 L193.5 701.8 L192.5 701.8 L191.5 701.8 L190.5 701.8 L189.5 701.8 L188.5 701.8 L187.5 701.8 L186.5 701.8 L185.5 701.9 L184.5 701.9 L183.5 701.9 L182.5 701.9 L181.5 701.8 L180.5 701.8 L179.5 701.8 L178.5 701.7 L177.5 701.8 L176.5 702.9 L175.5 704.2 L174.5 704.4 L173.5 703.2 L172.5 701.9 L171.5 701.8 L170.5 701.8 L169.5 701.8 L168.5 701.8 L167.5 701.9 L166.5 701.9 L165.5 701.8 L164.5 701.7 L163.5 701.7 L162.5 701.7 L161.5 701.7 L160.5 701.8 L159.5 701.7 L158.5 701.7 L157.5 701.7 L156.5 701.7 L155.5 701.7 L154.5 701.7 L153.5 701.7 L152.5 702.0 L151.5 703.8 L150.5 705.7 L149.5 705.3 L148.5 703.5 L147.5 701.9 L146.5 701.9 L145.5 701.9 L144.5 701.9 L143.5 701.8 L142.5 701.8 L141.5 701.8 L140.5 701.8 L139.5 701.8 L138.5 701.8 L137.5 701.8 L136.5 701.8 L135.5 701.8 L134.5 701.8 L133.5 701.8 L132.5 701.8 L131.5 701.8 L130.5 701.8 L129.5 701.8 L128.5 701.8 L127.5 701.8 L126.5 701.8 L125.5 701.9 L124.5 702.3 L123.5 702.7 L122.5 702.9 L121.5 702.5 L120.5 702.1 L119.5 701.7 L118.5 701.7 L117.5 701.7 L116.5 701.7 L115.5 701.7 L114.5 701.8 L113.5 701.8 L112.5 701.8 L111.5 701.8 L110.5 701.7 L109.5 701.7 L108.5 701.8 L107.5 701.8 L106.5 701.8 L105.5 701.8 L104.5 701.7 L103.5 701.7 L102.5 701.7 L101.5 701.7 L100.5 701.7 L99.5 701.7 L98.5 701.8 L97.5 702.3 L96.5 702.7 L95.5 702.9 L94.5 702.6 L93.5 702.2 L92.5 701.9 L91.5 701.9 L90.5 701.9 L89.5 701.9 L88.5 701.9 L87.5 701.8 L86.5 701.7 L85.5 701.7 L84.5 701.7 L83.5 701.9 L82.5 701.9 L81.5 701.9 L80.5 701.7 L79.5 701.7 L78.5 701.7 L77.5 701.8 L76.5 701.9 L75.5 701.9 L74.5 701.9 L73.5 701.9 L72.5 701.9 L71.5 702.4 L70.5 704.0 L69.5 705.3 L68.5 703.6 L67.5 701.9Z" fill="#f0f0f0"/></svg>
<div class="a" style="left:0;top:735px;width:340px;height:27px;background:#836478"></div>
<div class="t" style="left:4.0px;top:742px;font-size:13.66px;color:#f3f3f3">Pista-6</div>
<svg style="left:0;top:0" width="1" height="1"><circle cx="326.50" cy="748.90" r="7.60" stroke="#dcdcd8" stroke-width="1.25" fill="none"/><path d="M324.80 745.30L329.80 748.90L324.80 752.50Z" fill="#dcdcd8"/></svg>
<div class="a" style="left:0;top:762px;width:340px;height:130px;background:#c386a7"></div>
<div class="a" style="left:4.00px;top:766.20px;width:56.80px;height:56.40px;background:#333333"></div>
<svg style="left:0;top:0" width="1" height="1"><circle cx="32.40" cy="794.40" r="14.55" stroke="#c386a7" stroke-width="3.30" fill="none"/><path d="M28.80 787.20L38.60 794.40L28.80 801.60Z" fill="#c386a7"/></svg>
<div class="t" style="left:67.0px;top:766px;font-size:11.95px;color:#f3f3f3">esquina mercurio : Esteban 2.mp3</div>
<div class="t" style="right:683.30px;top:766px;font-size:11.95px;color:#f3f3f3">1m 52s</div>
<svg style="left:0;top:0" width="1" height="1"><path d="M67.5 791.0 L68.5 790.9 L69.5 790.6 L70.5 790.5 L71.5 790.5 L72.5 790.7 L73.5 790.7 L74.5 790.7 L75.5 790.8 L76.5 790.8 L77.5 790.7 L78.5 790.5 L79.5 790.4 L80.5 790.3 L81.5 790.3 L82.5 790.2 L83.5 790.1 L84.5 790.0 L85.5 790.0 L86.5 789.9 L87.5 789.9 L88.5 789.9 L89.5 790.0 L90.5 790.1 L91.5 790.1 L92.5 790.1 L93.5 790.1 L94.5 790.1 L95.5 790.0 L96.5 789.8 L97.5 789.6 L98.5 789.7 L99.5 789.9 L100.5 790.0 L101.5 789.9 L102.5 789.7 L103.5 789.5 L104.5 789.5 L105.5 789.4 L106.5 789.3 L107.5 789.3 L108.5 789.3 L109.5 789.3 L110.5 789.4 L111.5 789.5 L112.5 789.6 L113.5 790.0 L114.5 790.5 L115.5 790.8 L116.5 790.8 L117.5 790.9 L118.5 790.8 L119.5 790.6 L120.5 790.2 L121.5 789.9 L122.5 789.8 L123.5 789.7 L124.5 789.6 L125.5 789.6 L126.5 789.7 L127.5 789.8 L128.5 789.6 L129.5 789.4 L130.5 789.3 L131.5 789.3 L132.5 789.2 L133.5 789.2 L134.5 789.2 L135.5 789.2 L136.5 789.3 L137.5 789.4 L138.5 789.8 L139.5 790.1 L140.5 790.1 L141.5 790.2 L142.5 790.4 L143.5 790.6 L144.5 790.9 L145.5 791.1 L146.5 790.9 L147.5 790.4 L148.5 790.2 L149.5 790.3 L150.5 790.7 L151.5 790.8 L152.5 790.6 L153.5 790.3 L154.5 790.1 L155.5 790.1 L156.5 790.1 L157.5 790.2 L158.5 790.1 L159.5 790.0 L160.5 789.9 L161.5 789.8 L162.5 789.8 L163.5 789.7 L164.5 789.5 L165.5 789.2 L166.5 789.1 L167.5 789.1 L168.5 789.3 L169.5 789.4 L170.5 789.6 L171.5 789.8 L172.5 790.0 L173.5 790.2 L174.5 790.4 L175.5 790.5 L176.5 790.5 L177.5 790.3 L178.5 790.2 L179.5 790.2 L180.5 790.0 L181.5 790.0 L182.5 790.4 L183.5 790.9 L184.5 791.3 L185.5 791.2 L186.5 791.0 L187.5 790.9 L188.5 790.9 L189.5 790.8 L190.5 790.8 L191.5 790.8 L192.5 790.9 L193.5 791.0 L194.5 790.8 L195.5 790.7 L196.5 790.7 L197.5 790.5 L198.5 790.2 L199.5 790.1 L200.5 790.1 L201.5 790.2 L202.5 790.2 L203.5 790.1 L204.5 790.1 L205.5 790.0 L206.5 790.0 L207.5 789.9 L208.5 789.9 L209.5 790.0 L210.5 790.2 L211.5 790.2 L212.5 790.0 L213.5 789.7 L214.5 789.5 L215.5 789.5 L216.5 789.5 L217.5 789.5 L218.5 789.6 L219.5 789.7 L220.5 789.7 L221.5 789.9 L222.5 790.1 L223.5 790.2 L224.5 790.2 L225.5 790.0 L226.5 789.9 L227.5 790.0 L228.5 789.9 L229.5 789.9 L230.5 789.9 L231.5 790.0 L232.5 790.0 L233.5 790.1 L234.5 790.3 L235.5 790.3 L236.5 790.3 L237.5 790.2 L238.5 790.2 L239.5 790.2 L240.5 790.2 L241.5 790.2 L242.5 790.3 L243.5 790.3 L244.5 790.3 L245.5 790.2 L246.5 789.9 L247.5 789.7 L248.5 789.8 L249.5 789.8 L250.5 789.8 L251.5 789.8 L252.5 789.9 L253.5 790.0 L254.5 789.7 L255.5 789.3 L256.5 789.1 L257.5 789.1 L258.5 789.3 L259.5 789.5 L260.5 789.5 L261.5 789.6 L262.5 789.7 L263.5 789.8 L264.5 789.9 L265.5 790.0 L266.5 790.2 L267.5 790.3 L268.5 790.3 L269.5 790.4 L270.5 790.5 L271.5 790.6 L272.5 790.5 L273.5 790.3 L274.5 790.2 L275.5 790.5 L276.5 791.0 L277.5 791.2 L278.5 791.1 L279.5 790.7 L280.5 790.5 L281.5 790.4 L282.5 790.2 L283.5 790.1 L284.5 790.1 L285.5 790.3 L286.5 790.3 L287.5 790.2 L288.5 790.1 L289.5 790.0 L290.5 790.2 L291.5 790.5 L292.5 790.8 L293.5 790.7 L294.5 790.6 L295.5 790.6 L296.5 790.6 L297.5 790.7 L298.5 790.7 L299.5 790.7 L300.5 790.5 L301.5 790.4 L302.5 790.2 L303.5 790.0 L304.5 789.8 L305.5 789.9 L306.5 790.2 L307.5 790.3 L308.5 790.3 L309.5 790.3 L310.5 790.4 L311.5 790.4 L312.5 790.3 L313.5 790.4 L314.5 790.7 L315.5 791.1 L316.5 791.4 L317.5 791.5 L318.5 791.5 L319.5 791.5 L320.5 791.1 L321.5 790.4 L322.5 790.0 L323.5 789.9 L324.5 790.0 L325.5 790.0 L326.5 790.1 L327.5 790.3 L328.5 790.5 L329.5 790.4 L330.5 790.2 L331.5 790.2 L332.5 790.5 L333.5 790.9 L333.5 794.6 L332.5 794.3 L331.5 794.0 L330.5 794.1 L329.5 794.5 L328.5 794.7 L327.5 794.4 L326.5 794.0 L325.5 793.9 L324.5 794.3 L323.5 794.8 L322.5 795.2 L321.5 795.3 L320.5 795.4 L319.5 795.4 L318.5 795.3 L317.5 795.0 L316.5 794.8 L315.5 794.9 L314.5 794.9 L313.5 794.9 L312.5 794.8 L311.5 794.7 L310.5 794.6 L309.5 794.5 L308.5 794.5 L307.5 794.5 L306.5 794.5 L305.5 794.5 L304.5 794.6 L303.5 794.7 L302.5 794.8 L301.5 794.9 L300.5 794.9 L299.5 794.8 L298.5 794.7 L297.5 794.8 L296.5 794.8 L295.5 794.8 L294.5 794.8 L293.5 794.7 L292.5 794.6 L291.5 794.6 L290.5 794.5 L289.5 794.4 L288.5 794.3 L287.5 794.1 L286.5 794.1 L285.5 794.4 L284.5 794.9 L283.5 795.2 L282.5 795.1 L281.5 794.7 L280.5 794.5 L279.5 794.8 L278.5 795.3 L277.5 795.5 L276.5 795.5 L275.5 795.4 L274.5 795.4 L273.5 795.3 L272.5 795.3 L271.5 795.2 L270.5 795.1 L269.5 795.0 L268.5 794.9 L267.5 794.7 L266.5 794.4 L265.5 794.1 L264.5 794.2 L263.5 794.3 L262.5 794.2 L261.5 794.2 L260.5 794.2 L259.5 794.1 L258.5 794.1 L257.5 794.1 L256.5 794.1 L255.5 794.0 L254.5 793.7 L253.5 793.6 L252.5 793.8 L251.5 794.2 L250.5 794.4 L249.5 794.4 L248.5 794.5 L247.5 794.5 L246.5 794.3 L245.5 793.9 L244.5 793.6 L243.5 793.7 L242.5 793.9 L241.5 794.0 L240.5 794.0 L239.5 794.2 L238.5 794.2 L237.5 794.1 L236.5 793.8 L235.5 793.7 L234.5 793.7 L233.5 794.8 L232.5 794.9 L231.5 794.0 L230.5 794.1 L229.5 794.1 L228.5 794.2 L227.5 794.2 L226.5 794.2 L225.5 794.2 L224.5 794.1 L223.5 794.0 L222.5 793.8 L221.5 793.6 L220.5 793.5 L219.5 793.6 L218.5 794.0 L217.5 794.2 L216.5 794.2 L215.5 794.3 L214.5 794.4 L213.5 794.1 L212.5 793.9 L211.5 794.1 L210.5 794.5 L209.5 794.5 L208.5 794.6 L207.5 794.6 L206.5 794.4 L205.5 794.4 L204.5 794.4 L203.5 794.3 L202.5 794.3 L201.5 794.4 L200.5 794.4 L199.5 794.4 L198.5 794.4 L197.5 794.4 L196.5 794.4 L195.5 794.6 L194.5 794.8 L193.5 795.0 L192.5 795.2 L191.5 795.4 L190.5 795.6 L189.5 795.6 L188.5 795.5 L187.5 795.4 L186.5 795.3 L185.5 795.1 L184.5 794.9 L183.5 794.7 L182.5 794.4 L181.5 794.2 L180.5 794.2 L179.5 794.7 L178.5 795.3 L177.5 795.2 L176.5 794.5 L175.5 794.1 L174.5 793.9 L173.5 793.7 L172.5 793.6 L171.5 793.7 L170.5 793.9 L169.5 794.0 L168.5 793.9 L167.5 793.9 L166.5 793.9 L165.5 794.0 L164.5 794.1 L163.5 794.3 L162.5 794.2 L161.5 793.9 L160.5 793.8 L159.5 793.9 L158.5 794.1 L157.5 794.1 L156.5 794.3 L155.5 794.7 L154.5 795.0 L153.5 794.9 L152.5 794.8 L151.5 794.7 L150.5 794.9 L149.5 795.2 L148.5 795.4 L147.5 795.3 L146.5 795.2 L145.5 795.0 L144.5 794.9 L143.5 794.8 L142.5 794.6 L141.5 794.5 L140.5 794.5 L139.5 794.4 L138.5 794.3 L137.5 794.2 L136.5 794.2 L135.5 794.0 L134.5 793.5 L133.5 793.3 L132.5 793.3 L131.5 793.4 L130.5 793.5 L129.5 793.6 L128.5 793.8 L127.5 793.9 L126.5 794.0 L125.5 794.2 L124.5 794.4 L123.5 794.5 L122.5 794.6 L121.5 794.7 L120.5 794.7 L119.5 794.5 L118.5 794.4 L117.5 794.4 L116.5 794.4 L115.5 794.3 L114.5 794.4 L113.5 794.7 L112.5 794.8 L111.5 794.6 L110.5 794.5 L109.5 794.4 L108.5 794.2 L107.5 793.9 L106.5 793.8 L105.5 793.8 L104.5 793.8 L103.5 793.9 L102.5 794.0 L101.5 794.1 L100.5 794.1 L99.5 794.1 L98.5 794.0 L97.5 793.9 L96.5 793.9 L95.5 794.0 L94.5 794.0 L93.5 794.1 L92.5 794.3 L91.5 794.4 L90.5 794.4 L89.5 794.4 L88.5 794.4 L87.5 794.2 L86.5 793.9 L85.5 793.7 L84.5 793.9 L83.5 794.1 L82.5 794.3 L81.5 794.4 L80.5 794.6 L79.5 794.6 L78.5 794.7 L77.5 794.7 L76.5 794.7 L75.5 794.7 L74.5 794.6 L73.5 794.6 L72.5 794.7 L71.5 794.9 L70.5 795.0 L69.5 795.1 L68.5 795.1 L67.5 795.1Z" fill="#f0f0f0"/></svg>
<div class="a" style="left:4.00px;top:831.30px;width:56.80px;height:56.40px;background:#333333"></div>
<svg style="left:0;top:0" width="1" height="1"><circle cx="32.40" cy="859.50" r="14.55" stroke="#c386a7" stroke-width="3.30" fill="none"/><path d="M28.80 852.30L38.60 859.50L28.80 866.70Z" fill="#c386a7"/></svg>
<div class="t" style="left:67.0px;top:831px;font-size:11.95px;color:#f3f3f3">2022-03-14</div>
<div class="t" style="right:683.30px;top:831px;font-size:11.95px;color:#f3f3f3">0.39s</div>
<svg style="left:0;top:0" width="1" height="1"><path d="M67.5 856.6 L68.5 856.6 L69.5 856.6 L70.5 856.6 L71.5 856.6 L72.5 856.6 L73.5 856.6 L74.5 856.6 L75.5 856.6 L76.5 856.6 L77.5 856.7 L78.5 856.7 L79.5 856.7 L80.5 856.6 L81.5 856.6 L82.5 856.6 L83.5 856.6 L84.5 856.7 L85.5 856.7 L86.5 856.7 L87.5 856.7 L88.5 856.7 L89.5 856.3 L90.5 855.4 L91.5 854.6 L92.5 855.3 L93.5 856.1 L94.5 856.7 L95.5 856.7 L96.5 856.7 L97.5 856.7 L98.5 856.7 L99.5 856.7 L100.5 856.7 L101.5 856.7 L102.5 856.7 L103.5 856.7 L104.5 856.7 L105.5 856.7 L106.5 856.7 L107.5 856.7 L108.5 856.7 L109.5 856.7 L110.5 856.7 L111.5 856.6 L112.5 856.6 L113.5 856.7 L114.5 856.7 L115.5 856.7 L116.5 856.7 L117.5 856.7 L118.5 856.7 L119.5 856.7 L120.5 856.7 L121.5 856.7 L122.5 856.7 L123.5 856.7 L124.5 856.6 L125.5 856.6 L126.5 856.7 L127.5 856.7 L128.5 856.7 L129.5 856.6 L130.5 856.6 L131.5 856.6 L132.5 856.6 L133.5 856.6 L134.5 856.6 L135.5 856.6 L136.5 856.7 L137.5 856.7 L138.5 856.7 L139.5 856.7 L140.5 856.7 L141.5 856.6 L142.5 856.6 L143.5 856.6 L144.5 856.6 L145.5 856.6 L146.5 856.6 L147.5 856.7 L148.5 856.7 L149.5 856.7 L150.5 856.6 L151.5 856.6 L152.5 856.6 L153.5 856.7 L154.5 856.7 L155.5 856.7 L156.5 856.6 L157.5 856.6 L158.5 856.6 L159.5 856.6 L160.5 856.6 L161.5 856.6 L162.5 856.6 L163.5 856.6 L164.5 856.6 L165.5 856.6 L166.5 856.6 L167.5 856.6 L168.5 856.7 L169.5 856.7 L170.5 856.7 L171.5 856.7 L172.5 856.6 L173.5 856.6 L174.5 856.6 L175.5 856.6 L176.5 856.6 L177.5 856.6 L178.5 856.6 L179.5 856.6 L180.5 856.7 L181.5 856.7 L182.5 856.7 L183.5 856.7 L184.5 856.7 L185.5 856.7 L186.5 856.7 L187.5 856.6 L188.5 856.7 L189.5 856.7 L190.5 856.7 L191.5 856.7 L192.5 856.6 L193.5 856.6 L194.5 856.6 L195.5 856.7 L196.5 856.7 L197.5 856.7 L198.5 856.7 L199.5 856.7 L200.5 856.7 L201.5 856.7 L202.5 856.7 L203.5 856.7 L204.5 856.7 L205.5 856.7 L206.5 856.7 L207.5 856.7 L208.5 856.7 L209.5 856.7 L210.5 856.7 L211.5 856.6 L212.5 856.7 L213.5 856.7 L214.5 856.7 L215.5 856.6 L216.5 856.6 L217.5 856.6 L218.5 856.6 L219.5 856.6 L220.5 856.6 L221.5 856.6 L222.5 856.6 L223.5 856.6 L224.5 856.6 L225.5 856.7 L226.5 856.7 L227.5 856.7 L228.5 856.7 L229.5 856.7 L230.5 856.7 L231.5 856.7 L232.5 856.7 L233.5 856.7 L234.5 856.7 L235.5 856.7 L236.5 856.7 L237.5 856.6 L238.5 856.6 L239.5 856.6 L240.5 856.7 L241.5 856.7 L242.5 856.7 L243.5 856.7 L244.5 856.7 L245.5 856.7 L246.5 856.7 L247.5 856.7 L248.5 856.7 L249.5 856.7 L250.5 856.7 L251.5 856.7 L252.5 856.6 L253.5 856.6 L254.5 856.6 L255.5 856.6 L256.5 856.7 L257.5 856.7 L258.5 856.7 L259.5 856.7 L260.5 856.7 L261.5 856.6 L262.5 856.6 L263.5 856.6 L264.5 856.7 L265.5 856.7 L266.5 856.7 L267.5 856.7 L268.5 856.7 L269.5 856.7 L270.5 856.6 L271.5 856.6 L272.5 856.6 L273.5 856.6 L274.5 856.6 L275.5 856.6 L276.5 856.7 L277.5 856.7 L278.5 856.7 L279.5 856.7 L280.5 856.7 L281.5 856.7 L282.5 856.7 L283.5 856.6 L284.5 856.6 L285.5 856.6 L286.5 856.6 L287.5 856.7 L288.5 856.7 L289.5 856.7 L290.5 856.7 L291.5 856.7 L292.5 856.7 L293.5 856.7 L294.5 856.7 L295.5 856.7 L296.5 856.7 L297.5 856.7 L298.5 856.7 L299.5 856.7 L300.5 856.7 L301.5 856.7 L302.5 856.7 L303.5 856.7 L304.5 856.7 L305.5 856.7 L306.5 856.7 L307.5 856.7 L308.5 856.7 L309.5 856.7 L310.5 856.7 L311.5 856.7 L312.5 856.7 L313.5 856.6 L314.5 856.6 L315.5 856.6 L316.5 856.6 L317.5 856.6 L318.5 856.6 L319.5 856.6 L320.5 856.6 L321.5 856.7 L322.5 856.7 L323.5 856.7 L324.5 856.7 L325.5 856.6 L326.5 856.6 L327.5 856.6 L328.5 856.6 L329.5 856.7 L330.5 856.7 L331.5 856.7 L332.5 856.7 L333.5 856.7 L333.5 858.4 L332.5 858.4 L331.5 858.4 L330.5 858.4 L329.5 858.3 L328.5 858.3 L327.5 858.3 L326.5 858.3 L325.5 858.3 L324.5 858.3 L323.5 858.3 L322.5 858.3 L321.5 858.3 L320.5 858.4 L319.5 858.4 L318.5 858.4 L317.5 858.3 L316.5 858.3 L315.5 858.3 L314.5 858.3 L313.5 858.3 L312.5 858.3 L311.5 858.4 L310.5 858.4 L309.5 858.4 L308.5 858.4 L307.5 858.4 L306.5 858.4 L305.5 858.3 L304.5 858.3 L303.5 858.3 L302.5 858.4 L301.5 858.4 L300.5 858.4 L299.5 858.4 L298.5 858.4 L297.5 858.4 L296.5 858.3 L295.5 858.3 L294.5 858.3 L293.5 858.3 L292.5 858.3 L291.5 858.3 L290.5 858.3 L289.5 858.3 L288.5 858.3 L287.5 858.4 L286.5 858.4 L285.5 858.4 L284.5 858.3 L283.5 858.3 L282.5 858.3 L281.5 858.3 L280.5 858.3 L279.5 858.3 L278.5 858.3 L277.5 858.3 L276.5 858.3 L275.5 858.4 L274.5 858.4 L273.5 858.4 L272.5 858.4 L271.5 858.4 L270.5 858.4 L269.5 858.3 L268.5 858.3 L267.5 858.3 L266.5 858.4 L265.5 858.4 L264.5 858.4 L263.5 858.4 L262.5 858.4 L261.5 858.4 L260.5 858.3 L259.5 858.3 L258.5 858.3 L257.5 858.3 L256.5 858.4 L255.5 858.4 L254.5 858.4 L253.5 858.4 L252.5 858.4 L251.5 858.4 L250.5 858.4 L249.5 858.4 L248.5 858.4 L247.5 858.4 L246.5 858.4 L245.5 858.4 L244.5 858.4 L243.5 858.4 L242.5 858.4 L241.5 858.4 L240.5 858.4 L239.5 858.3 L238.5 858.3 L237.5 858.3 L236.5 858.4 L235.5 858.4 L234.5 858.4 L233.5 858.4 L232.5 858.3 L231.5 858.4 L230.5 858.4 L229.5 858.4 L228.5 858.4 L227.5 858.3 L226.5 858.3 L225.5 858.3 L224.5 858.3 L223.5 858.3 L222.5 858.3 L221.5 858.3 L220.5 858.3 L219.5 858.3 L218.5 858.4 L217.5 858.4 L216.5 858.4 L215.5 858.3 L214.5 858.3 L213.5 858.3 L212.5 858.3 L211.5 858.3 L210.5 858.3 L209.5 858.3 L208.5 858.3 L207.5 858.3 L206.5 858.3 L205.5 858.3 L204.5 858.3 L203.5 858.3 L202.5 858.3 L201.5 858.3 L200.5 858.3 L199.5 858.4 L198.5 858.4 L197.5 858.4 L196.5 858.4 L195.5 858.4 L194.5 858.3 L193.5 858.3 L192.5 858.3 L191.5 858.4 L190.5 858.4 L189.5 858.4 L188.5 858.4 L187.5 858.4 L186.5 858.4 L185.5 858.4 L184.5 858.3 L183.5 858.3 L182.5 858.3 L181.5 858.3 L180.5 858.3 L179.5 858.3 L178.5 858.3 L177.5 858.3 L176.5 858.3 L175.5 858.3 L174.5 858.3 L173.5 858.3 L172.5 858.3 L171.5 858.3 L170.5 858.3 L169.5 858.3 L168.5 858.3 L167.5 858.4 L166.5 858.4 L165.5 858.4 L164.5 858.4 L163.5 858.4 L162.5 858.4 L161.5 858.4 L160.5 858.4 L159.5 858.4 L158.5 858.4 L157.5 858.3 L156.5 858.3 L155.5 858.3 L154.5 858.3 L153.5 858.3 L152.5 858.4 L151.5 858.4 L150.5 858.4 L149.5 858.3 L148.5 858.3 L147.5 858.3 L146.5 858.3 L145.5 858.3 L144.5 858.3 L143.5 858.3 L142.5 858.3 L141.5 858.3 L140.5 858.3 L139.5 858.4 L138.5 858.3 L137.5 858.3 L136.5 858.3 L135.5 858.3 L134.5 858.4 L133.5 858.4 L132.5 858.4 L131.5 858.4 L130.5 858.4 L129.5 858.4 L128.5 858.4 L127.5 858.4 L126.5 858.4 L125.5 858.4 L124.5 858.4 L123.5 858.4 L122.5 858.4 L121.5 858.4 L120.5 858.4 L119.5 858.3 L118.5 858.3 L117.5 858.3 L116.5 858.3 L115.5 858.4 L114.5 858.3 L113.5 858.3 L112.5 858.3 L111.5 858.3 L110.5 858.3 L109.5 858.3 L108.5 858.3 L107.5 858.4 L106.5 858.4 L105.5 858.4 L104.5 858.4 L103.5 858.4 L102.5 858.3 L101.5 858.3 L100.5 858.3 L99.5 858.3 L98.5 858.3 L97.5 858.3 L96.5 858.3 L95.5 858.4 L94.5 858.4 L93.5 858.4 L92.5 858.4 L91.5 858.4 L90.5 858.4 L89.5 859.6 L88.5 861.7 L87.5 863.8 L86.5 861.7 L85.5 859.6 L84.5 858.3 L83.5 858.3 L82.5 858.3 L81.5 858.3 L80.5 858.4 L79.5 858.4 L78.5 858.4 L77.5 858.4 L76.5 858.4 L75.5 858.4 L74.5 858.4 L73.5 858.4 L72.5 858.4 L71.5 858.4 L70.5 858.4 L69.5 858.4 L68.5 858.4 L67.5 858.4Z" fill="#f0f0f0"/></svg>
<div class="a" style="left:0;top:892px;width:340px;height:27px;background:#776689"></div>
<div class="t" style="left:4.0px;top:899px;font-size:13.66px;color:#f3f3f3">Pista-7</div>
<svg style="left:0;top:0" width="1" height="1"><circle cx="326.50" cy="905.90" r="7.60" stroke="#dcdcd8" stroke-width="1.25" fill="none"/><path d="M324.80 902.30L329.80 905.90L324.80 909.50Z" fill="#dcdcd8"/></svg>
<div class="a" style="left:0;top:919px;width:340px;height:65px;background:#a686d1"></div>
<div class="a" style="left:4.00px;top:923.20px;width:56.80px;height:56.40px;background:#333333"></div>
<svg style="left:0;top:0" width="1" height="1"><circle cx="32.40" cy="951.40" r="14.55" stroke="#a686d1" stroke-width="3.30" fill="none"/><path d="M28.80 944.20L38.60 951.40L28.80 958.60Z" fill="#a686d1"/></svg>
<div class="t" style="left:67.0px;top:923px;font-size:11.95px;color:#f3f3f3">lacrimosa Sergio García Merlo.mp3</div>
<div class="t" style="right:683.30px;top:923px;font-size:11.95px;color:#f3f3f3">14.69s</div>
<svg style="left:0;top:0" width="1" height="1"><path d="M67.6 948.5 L68.1 948.5 L68.6 948.4 L69.1 948.4 L69.6 948.4 L70.1 948.3 L70.6 948.3 L71.1 948.2 L71.6 948.1 L72.1 948.0 L72.6 948.0 L73.1 948.0 L73.6 948.0 L74.1 948.0 L74.6 947.9 L75.1 947.9 L75.6 948.0 L76.1 948.1 L76.6 948.2 L77.1 948.3 L77.6 948.3 L78.1 948.3 L78.6 948.2 L79.1 948.1 L79.6 948.1 L80.1 948.0 L80.6 947.9 L81.1 947.7 L81.6 947.6 L82.1 947.5 L82.6 947.3 L83.1 947.4 L83.6 947.5 L84.1 947.6 L84.6 947.7 L85.1 947.7 L85.6 947.5 L86.1 947.4 L86.6 947.2 L87.1 947.1 L87.6 947.0 L88.1 947.0 L88.6 947.0 L89.1 947.1 L89.6 947.1 L90.1 947.1 L90.6 947.1 L91.1 947.0 L91.6 947.0 L92.1 946.9 L92.6 946.9 L93.1 946.8 L93.6 946.7 L94.1 946.6 L94.6 946.5 L95.1 946.5 L95.6 946.6 L96.1 946.7 L96.6 946.9 L97.1 947.0 L97.6 947.1 L98.1 947.1 L98.6 947.0 L99.1 947.0 L99.6 947.0 L100.1 947.0 L100.6 946.9 L101.1 946.9 L101.6 946.8 L102.1 946.7 L102.6 946.7 L103.1 946.7 L103.6 946.8 L104.1 946.9 L104.6 947.0 L105.1 947.0 L105.6 947.2 L106.1 947.6 L106.6 947.9 L107.1 948.2 L107.6 948.2 L108.1 948.2 L108.6 948.2 L109.1 948.1 L109.6 948.1 L110.1 948.1 L110.6 948.1 L111.1 948.0 L111.6 947.9 L112.1 947.8 L112.6 947.7 L113.1 947.8 L113.6 947.9 L114.1 948.0 L114.6 948.0 L115.1 948.1 L115.6 948.0 L116.1 948.0 L116.6 948.0 L117.1 947.9 L117.6 947.9 L118.1 947.9 L118.6 947.8 L119.1 947.8 L119.6 947.7 L120.1 947.7 L120.6 947.7 L121.1 947.6 L121.6 947.6 L122.1 947.5 L122.6 947.6 L123.1 947.6 L123.6 947.7 L124.1 947.8 L124.6 947.9 L125.1 947.9 L125.6 948.0 L126.1 948.0 L126.6 948.1 L127.1 948.2 L127.6 948.3 L128.1 948.2 L128.6 948.2 L129.1 948.1 L129.6 948.0 L130.1 948.0 L130.6 948.1 L131.1 948.2 L131.6 948.3 L132.1 948.3 L132.6 948.4 L133.1 948.4 L133.6 948.4 L134.1 948.3 L134.6 948.3 L135.1 948.3 L135.6 948.3 L136.1 948.3 L136.6 948.3 L137.1 948.3 L137.6 948.1 L138.1 947.8 L138.6 947.5 L139.1 947.3 L139.6 947.5 L140.1 947.6 L140.6 947.9 L141.1 948.1 L141.6 948.2 L142.1 948.2 L142.6 948.2 L143.1 948.2 L143.6 948.1 L144.1 948.0 L144.6 948.0 L145.1 948.0 L145.6 948.0 L146.1 948.1 L146.6 948.2 L147.1 948.2 L147.6 948.1 L148.1 947.9 L148.6 947.8 L149.1 947.7 L149.6 947.7 L150.1 947.8 L150.6 947.9 L151.1 948.0 L151.6 948.1 L152.1 948.2 L152.6 948.1 L153.1 947.9 L153.6 947.7 L154.1 947.5 L154.6 947.3 L155.1 947.1 L155.6 947.0 L156.1 946.9 L156.6 946.9 L157.1 947.1 L157.6 947.3 L158.1 947.5 L158.6 947.8 L159.1 948.0 L159.6 948.0 L160.1 948.0 L160.6 947.9 L161.1 947.8 L161.6 947.8 L162.1 947.7 L162.6 947.6 L163.1 947.6 L163.6 947.7 L164.1 947.9 L164.6 948.0 L165.1 948.1 L165.6 948.1 L166.1 948.1 L166.6 948.0 L167.1 947.9 L167.6 947.9 L168.1 947.9 L168.6 948.0 L169.1 948.0 L169.6 948.1 L170.1 948.1 L170.6 948.1 L171.1 948.1 L171.6 948.1 L172.1 948.2 L172.6 948.2 L173.1 948.1 L173.6 948.1 L174.1 948.0 L174.6 947.9 L175.1 947.9 L175.6 947.9 L176.1 947.9 L176.6 947.9 L177.1 947.9 L177.6 947.9 L178.1 947.9 L178.6 947.9 L179.1 948.0 L179.6 948.0 L180.1 948.0 L180.6 948.0 L181.1 948.1 L181.6 948.1 L182.1 948.2 L182.6 948.2 L183.1 948.1 L183.6 948.0 L184.1 948.0 L184.6 947.9 L185.1 947.9 L185.6 947.9 L186.1 947.9 L186.6 947.9 L187.1 947.9 L187.6 947.9 L188.1 947.9 L188.6 948.0 L189.1 948.0 L189.6 948.0 L190.1 948.0 L190.6 948.0 L191.1 948.1 L191.6 948.1 L192.1 948.2 L192.6 948.2 L193.1 948.1 L193.6 948.0 L194.1 947.8 L194.6 947.7 L195.1 947.7 L195.6 947.7 L196.1 947.7 L196.6 947.7 L197.1 947.7 L197.6 947.7 L198.1 947.8 L198.6 947.8 L199.1 947.8 L199.6 947.8 L200.1 947.8 L200.6 947.8 L201.1 947.8 L201.6 947.7 L202.1 947.7 L202.6 947.7 L203.1 947.7 L203.6 947.8 L204.1 947.8 L204.6 947.9 L205.1 947.9 L205.6 947.9 L206.1 948.0 L206.6 948.0 L207.1 948.0 L207.6 948.1 L208.1 948.1 L208.6 948.1 L209.1 948.1 L209.6 948.2 L210.1 948.2 L210.6 948.1 L211.1 948.1 L211.6 948.0 L212.1 947.9 L212.6 947.9 L213.1 947.9 L213.6 947.9 L214.1 947.9 L214.6 947.9 L215.1 947.9 L215.6 948.0 L216.1 948.0 L216.6 948.0 L217.1 947.9 L217.6 947.8 L218.1 947.6 L218.6 947.5 L219.1 947.3 L219.6 947.1 L220.1 947.0 L220.6 946.9 L221.1 947.1 L221.6 947.3 L222.1 947.5 L222.6 947.6 L223.1 947.8 L223.6 947.9 L224.1 948.1 L224.6 948.2 L225.1 948.2 L225.6 948.1 L226.1 948.0 L226.6 947.9 L227.1 947.8 L227.6 947.7 L228.1 947.8 L228.6 947.9 L229.1 948.1 L229.6 948.2 L230.1 948.3 L230.6 948.2 L231.1 948.1 L231.6 948.0 L232.1 947.9 L232.6 947.9 L233.1 947.9 L233.6 948.0 L234.1 948.0 L234.6 948.1 L235.1 948.1 L235.6 948.0 L236.1 948.0 L236.6 947.9 L237.1 947.8 L237.6 947.8 L238.1 947.8 L238.6 947.8 L239.1 947.7 L239.6 947.7 L240.1 947.7 L240.6 947.7 L241.1 947.8 L241.6 947.9 L242.1 947.9 L242.6 947.9 L243.1 947.9 L243.6 947.9 L244.1 947.8 L244.6 947.8 L245.1 947.8 L245.6 947.9 L246.1 948.0 L246.6 948.1 L247.1 948.2 L247.6 948.2 L248.1 948.2 L248.6 948.1 L249.1 948.0 L249.6 947.9 L250.1 947.9 L250.6 947.9 L251.1 948.0 L251.6 948.1 L252.1 948.2 L252.6 948.2 L253.1 948.2 L253.6 948.1 L254.1 948.0 L254.6 948.0 L255.1 948.0 L255.6 948.0 L256.1 948.0 L256.6 948.0 L257.1 948.1 L257.6 948.1 L258.1 948.1 L258.6 948.1 L259.1 948.0 L259.6 948.0 L260.1 948.0 L260.6 947.8 L261.1 947.7 L261.6 947.5 L262.1 947.4 L262.6 947.3 L263.1 947.4 L263.6 947.5 L264.1 947.6 L264.6 947.7 L265.1 947.7 L265.6 947.7 L266.1 947.7 L266.6 947.7 L267.1 947.7 L267.6 947.7 L268.1 947.7 L268.6 947.7 L269.1 947.7 L269.6 947.8 L270.1 947.8 L270.6 947.7 L271.1 947.6 L271.6 947.5 L272.1 947.5 L272.6 947.4 L273.1 947.5 L273.6 947.5 L274.1 947.6 L274.6 947.7 L275.1 947.7 L275.6 947.8 L276.1 947.9 L276.6 948.0 L277.1 948.2 L277.6 948.2 L278.1 948.3 L278.6 948.3 L279.1 948.3 L279.6 948.3 L280.1 948.3 L280.6 948.3 L281.1 948.3 L281.6 948.2 L282.1 948.2 L282.6 948.2 L283.1 948.2 L283.6 948.1 L284.1 948.1 L284.6 948.0 L285.1 948.0 L285.6 948.1 L286.1 948.2 L286.6 948.2 L287.1 948.3 L287.6 948.3 L288.1 948.3 L288.6 948.3 L289.1 948.3 L289.6 948.3 L290.1 948.3 L290.6 948.3 L291.1 948.2 L291.6 948.1 L292.1 948.0 L292.6 947.9 L293.1 948.0 L293.6 948.0 L294.1 948.0 L294.6 948.0 L295.1 948.0 L295.6 948.1 L296.1 948.1 L296.6 948.2 L297.1 948.2 L297.6 948.3 L298.1 948.2 L298.6 948.2 L299.1 948.2 L299.6 948.2 L300.1 948.2 L300.6 948.2 L301.1 948.2 L301.6 948.2 L302.1 948.3 L302.6 948.3 L303.1 948.3 L303.6 948.2 L304.1 948.2 L304.6 948.2 L305.1 948.2 L305.6 948.2 L306.1 948.1 L306.6 948.1 L307.1 948.1 L307.6 948.1 L308.1 948.1 L308.6 948.1 L309.1 948.2 L309.6 948.2 L310.1 948.2 L310.6 948.2 L311.1 948.2 L311.6 948.2 L312.1 948.2 L312.6 948.2 L313.1 948.2 L313.6 948.2 L314.1 948.2 L314.6 948.2 L315.1 948.2 L315.6 948.2 L316.1 948.2 L316.6 948.2 L317.1 948.2 L317.6 948.2 L318.1 948.1 L318.6 948.1 L319.1 948.1 L319.6 948.0 L320.1 948.0 L320.6 948.0 L321.1 947.9 L321.6 947.9 L322.1 947.8 L322.6 947.7 L323.1 947.7 L323.6 947.7 L324.1 947.7 L324.6 947.6 L325.1 947.6 L325.6 947.5 L326.1 947.5 L326.6 947.5 L327.1 947.4 L327.6 947.4 L328.1 947.3 L328.6 947.3 L329.1 947.3 L329.6 947.3 L330.1 947.3 L330.6 947.2 L331.1 947.2 L331.6 947.1 L332.1 947.1 L332.6 947.1 L332.6 952.1 L332.1 952.1 L331.6 952.0 L331.1 951.8 L330.6 951.7 L330.1 951.6 L329.6 951.6 L329.1 951.6 L328.6 951.7 L328.1 951.7 L327.6 951.7 L327.1 951.6 L326.6 951.4 L326.1 951.2 L325.6 951.1 L325.1 950.9 L324.6 950.9 L324.1 950.9 L323.6 950.9 L323.1 950.8 L322.6 950.8 L322.1 950.7 L321.6 950.7 L321.1 950.7 L320.6 950.7 L320.1 950.6 L319.6 950.7 L319.1 950.7 L318.6 950.7 L318.1 950.7 L317.6 950.8 L317.1 950.8 L316.6 950.7 L316.1 950.7 L315.6 950.6 L315.1 950.6 L314.6 950.6 L314.1 950.6 L313.6 950.6 L313.1 950.7 L312.6 950.7 L312.1 950.7 L311.6 950.7 L311.1 950.7 L310.6 950.8 L310.1 950.8 L309.6 950.8 L309.1 950.8 L308.6 950.8 L308.1 950.8 L307.6 950.8 L307.1 950.9 L306.6 950.9 L306.1 950.9 L305.6 950.9 L305.1 950.9 L304.6 950.9 L304.1 950.9 L303.6 950.9 L303.1 950.9 L302.6 950.9 L302.1 950.9 L301.6 950.9 L301.1 950.8 L300.6 950.8 L300.1 950.8 L299.6 950.8 L299.1 950.8 L298.6 950.8 L298.1 950.9 L297.6 950.9 L297.1 950.9 L296.6 950.9 L296.1 950.9 L295.6 950.9 L295.1 950.9 L294.6 950.9 L294.1 950.9 L293.6 950.9 L293.1 950.8 L292.6 950.8 L292.1 950.8 L291.6 950.8 L291.1 950.8 L290.6 950.8 L290.1 950.8 L289.6 950.8 L289.1 950.8 L288.6 950.8 L288.1 950.8 L287.6 950.8 L287.1 950.9 L286.6 950.9 L286.1 951.0 L285.6 951.0 L285.1 951.1 L284.6 951.1 L284.1 951.0 L283.6 951.0 L283.1 951.0 L282.6 951.0 L282.1 951.0 L281.6 950.9 L281.1 950.8 L280.6 950.7 L280.1 950.7 L279.6 950.7 L279.1 950.7 L278.6 950.7 L278.1 950.7 L277.6 950.8 L277.1 950.9 L276.6 951.0 L276.1 951.2 L275.6 951.3 L275.1 951.4 L274.6 951.4 L274.1 951.4 L273.6 951.4 L273.1 951.4 L272.6 951.4 L272.1 951.3 L271.6 951.3 L271.1 951.2 L270.6 951.1 L270.1 951.0 L269.6 951.1 L269.1 951.1 L268.6 951.1 L268.1 951.2 L267.6 951.2 L267.1 951.2 L266.6 951.2 L266.1 951.3 L265.6 951.3 L265.1 951.3 L264.6 951.3 L264.1 951.2 L263.6 951.2 L263.1 951.1 L262.6 951.1 L262.1 951.1 L261.6 951.1 L261.1 951.2 L260.6 951.3 L260.1 951.2 L259.6 951.2 L259.1 951.0 L258.6 950.9 L258.1 950.8 L257.6 950.7 L257.1 950.7 L256.6 950.8 L256.1 950.9 L255.6 950.9 L255.1 951.0 L254.6 951.0 L254.1 951.0 L253.6 950.9 L253.1 950.9 L252.6 950.9 L252.1 950.9 L251.6 950.8 L251.1 950.8 L250.6 950.7 L250.1 950.7 L249.6 950.7 L249.1 950.8 L248.6 950.9 L248.1 950.9 L247.6 951.0 L247.1 951.0 L246.6 950.9 L246.1 950.9 L245.6 950.9 L245.1 950.9 L244.6 950.9 L244.1 950.8 L243.6 950.8 L243.1 950.8 L242.6 950.8 L242.1 950.8 L241.6 950.8 L241.1 950.8 L240.6 950.8 L240.1 950.8 L239.6 950.8 L239.1 950.7 L238.6 950.7 L238.1 950.7 L237.6 950.7 L237.1 950.7 L236.6 950.7 L236.1 950.8 L235.6 950.8 L235.1 950.9 L234.6 950.8 L234.1 950.8 L233.6 950.8 L233.1 950.7 L232.6 950.7 L232.1 950.7 L231.6 950.7 L231.1 950.6 L230.6 950.6 L230.1 950.6 L229.6 950.6 L229.1 950.7 L228.6 950.7 L228.1 950.7 L227.6 950.7 L227.1 950.8 L226.6 950.8 L226.1 950.9 L225.6 950.9 L225.1 950.9 L224.6 950.9 L224.1 950.8 L223.6 950.7 L223.1 950.6 L222.6 950.7 L222.1 950.9 L221.6 951.1 L221.1 951.4 L220.6 951.7 L220.1 951.7 L219.6 951.6 L219.1 951.4 L218.6 951.2 L218.1 951.0 L217.6 950.8 L217.1 950.7 L216.6 950.7 L216.1 950.7 L215.6 950.7 L215.1 950.7 L214.6 950.7 L214.1 950.7 L213.6 950.6 L213.1 950.6 L212.6 950.6 L212.1 950.6 L211.6 950.6 L211.1 950.6 L210.6 950.6 L210.1 950.6 L209.6 950.6 L209.1 950.7 L208.6 950.8 L208.1 951.0 L207.6 951.0 L207.1 951.0 L206.6 950.9 L206.1 950.8 L205.6 950.7 L205.1 950.6 L204.6 950.6 L204.1 950.6 L203.6 950.6 L203.1 950.6 L202.6 950.6 L202.1 950.6 L201.6 950.6 L201.1 950.6 L200.6 950.6 L200.1 950.6 L199.6 950.6 L199.1 950.6 L198.6 950.6 L198.1 950.7 L197.6 950.7 L197.1 950.7 L196.6 950.7 L196.1 950.7 L195.6 950.7 L195.1 950.7 L194.6 950.8 L194.1 950.9 L193.6 951.0 L193.1 951.1 L192.6 951.1 L192.1 951.1 L191.6 951.0 L191.1 950.9 L190.6 950.8 L190.1 950.7 L189.6 950.7 L189.1 950.8 L188.6 950.9 L188.1 951.0 L187.6 951.0 L187.1 951.0 L186.6 950.9 L186.1 950.8 L185.6 950.8 L185.1 950.7 L184.6 950.8 L184.1 950.8 L183.6 950.9 L183.1 951.0 L182.6 951.1 L182.1 951.0 L181.6 950.9 L181.1 950.8 L180.6 950.7 L180.1 950.6 L179.6 950.6 L179.1 950.7 L178.6 950.9 L178.1 951.0 L177.6 951.1 L177.1 951.1 L176.6 951.1 L176.1 951.1 L175.6 951.0 L175.1 951.0 L174.6 951.0 L174.1 950.9 L173.6 950.8 L173.1 950.7 L172.6 950.7 L172.1 950.7 L171.6 950.7 L171.1 950.7 L170.6 950.8 L170.1 950.8 L169.6 950.8 L169.1 950.9 L168.6 950.9 L168.1 951.0 L167.6 951.1 L167.1 951.0 L166.6 951.0 L166.1 950.9 L165.6 950.9 L165.1 950.9 L164.6 951.0 L164.1 951.2 L163.6 951.4 L163.1 951.6 L162.6 951.6 L162.1 951.5 L161.6 951.4 L161.1 951.3 L160.6 951.2 L160.1 951.1 L159.6 951.0 L159.1 950.8 L158.6 950.9 L158.1 950.9 L157.6 951.1 L157.1 951.2 L156.6 951.4 L156.1 951.6 L155.6 951.5 L155.1 951.4 L154.6 951.3 L154.1 951.2 L153.6 951.1 L153.1 951.0 L152.6 950.9 L152.1 950.8 L151.6 950.9 L151.1 951.0 L150.6 951.2 L150.1 951.3 L149.6 951.4 L149.1 951.4 L148.6 951.3 L148.1 951.1 L147.6 951.0 L147.1 950.8 L146.6 950.8 L146.1 950.7 L145.6 950.7 L145.1 950.7 L144.6 950.7 L144.1 950.7 L143.6 950.7 L143.1 950.8 L142.6 950.8 L142.1 950.8 L141.6 950.8 L141.1 950.8 L140.6 951.0 L140.1 951.2 L139.6 951.4 L139.1 951.5 L138.6 951.2 L138.1 950.9 L137.6 950.6 L137.1 950.5 L136.6 950.6 L136.1 950.7 L135.6 950.9 L135.1 951.0 L134.6 951.0 L134.1 950.8 L133.6 950.7 L133.1 950.6 L132.6 950.5 L132.1 950.5 L131.6 950.6 L131.1 950.8 L130.6 950.9 L130.1 950.9 L129.6 950.9 L129.1 950.9 L128.6 950.8 L128.1 950.7 L127.6 950.7 L127.1 950.7 L126.6 950.7 L126.1 950.7 L125.6 950.7 L125.1 950.7 L124.6 950.8 L124.1 950.9 L123.6 951.0 L123.1 951.1 L122.6 951.2 L122.1 951.2 L121.6 951.2 L121.1 951.3 L120.6 951.3 L120.1 951.3 L119.6 951.3 L119.1 951.2 L118.6 951.1 L118.1 951.0 L117.6 951.0 L117.1 951.0 L116.6 951.0 L116.1 951.0 L115.6 951.1 L115.1 951.1 L114.6 951.1 L114.1 951.0 L113.6 950.9 L113.1 950.9 L112.6 950.8 L112.1 950.8 L111.6 950.9 L111.1 950.9 L110.6 950.9 L110.1 950.9 L109.6 950.9 L109.1 950.9 L108.6 951.0 L108.1 951.0 L107.6 951.0 L107.1 951.0 L106.6 951.1 L106.1 951.3 L105.6 951.5 L105.1 951.6 L104.6 951.7 L104.1 951.7 L103.6 951.8 L103.1 951.9 L102.6 951.9 L102.1 951.9 L101.6 951.8 L101.1 951.8 L100.6 951.7 L100.1 951.7 L99.6 951.7 L99.1 951.8 L98.6 951.8 L98.1 951.9 L97.6 952.0 L97.1 952.0 L96.6 952.0 L96.1 952.1 L95.6 952.2 L95.1 952.2 L94.6 952.2 L94.1 952.1 L93.6 952.0 L93.1 952.0 L92.6 951.9 L92.1 951.9 L91.6 952.0 L91.1 952.1 L90.6 952.1 L90.1 952.2 L89.6 952.1 L89.1 952.0 L88.6 951.9 L88.1 951.8 L87.6 951.7 L87.1 951.6 L86.6 951.5 L86.1 951.4 L85.6 951.3 L85.1 951.1 L84.6 951.1 L84.1 951.1 L83.6 951.1 L83.1 951.1 L82.6 951.1 L82.1 951.0 L81.6 950.8 L81.1 950.7 L80.6 950.6 L80.1 950.5 L79.6 950.5 L79.1 950.5 L78.6 950.6 L78.1 950.7 L77.6 950.8 L77.1 950.7 L76.6 950.7 L76.1 950.6 L75.6 950.5 L75.1 950.5 L74.6 950.5 L74.1 950.5 L73.6 950.5 L73.1 950.5 L72.6 950.5 L72.1 950.5 L71.6 950.5 L71.1 950.4 L70.6 950.3 L70.1 950.2 L69.6 950.2 L69.1 950.2 L68.6 950.3 L68.1 950.3 L67.6 950.3Z" fill="#f0f0f0"/></svg>
<div class="a" style="left:0;top:984px;width:340px;height:28px;background:#5f5e85"></div>
<div class="t" style="left:4.0px;top:991px;font-size:13.66px;color:#f3f3f3">Pista-8</div>
<svg style="left:0;top:0" width="1" height="1"><circle cx="326.50" cy="998.40" r="7.60" stroke="#dcdcd8" stroke-width="1.25" fill="none"/><path d="M324.80 994.80L329.80 998.40L324.80 1002.00Z" fill="#dcdcd8"/></svg>
<div class="a" style="left:0;top:115px;width:1px;height:897px;background:rgba(255,255,255,0.13)"></div>
<div class="a" style="left:340px;top:115px;width:679px;height:80px;background:#353535"></div>
<div class="a" style="left:340.00px;top:115px;width:79.2px;height:80px;background:#3f766f"></div>
<div class="a" style="left:425.86px;top:115px;width:79.2px;height:80px;background:#4f7748"></div>
<div class="a" style="left:511.72px;top:115px;width:79.2px;height:80px;background:#5e7440"></div>
<div class="a" style="left:597.58px;top:115px;width:79.2px;height:80px;background:#7a5c3b"></div>
<div class="a" style="left:683.44px;top:115px;width:79.2px;height:80px;background:#4b3e3f"></div>
<div class="a" style="left:769.30px;top:115px;width:79.2px;height:80px;background:#755a68"></div>
<div class="a" style="left:855.16px;top:115px;width:79.2px;height:80px;background:#685a7c"></div>
<div class="a" style="left:941.02px;top:115px;width:79.2px;height:80px;background:#565479"></div>
<svg style="left:0;top:0" width="1" height="1"><circle cx="362.4" cy="223.5" r="7.9" fill="#777777"/></svg>
<svg style="left:0;top:0" width="1" height="1"><text x="362.6" y="228.7" text-anchor="middle" font-family="Liberation Sans" font-size="14" fill="#383838" stroke="#383838" stroke-width="0.3">?</text></svg>
<div class="t" style="left:378.6px;top:210.88px;font-size:11.84px;color:#f0f0f0;-webkit-text-stroke:0.35px #f0f0f0">Los sonidos se organizan en pistas. Haz click en el nombre de la pista para ver o añadir sonidos. Arrastra las pistas</div>
<div class="t" style="left:378.6px;top:226.18px;font-size:11.84px;color:#f0f0f0;-webkit-text-stroke:0.35px #f0f0f0">para cambiar el orden.</div>
<div class="a" style="left:353px;top:252px;width:654px;height:45px;background:#3e7a72"></div>
<div class="a" style="left:353px;top:252px;width:45px;height:45px;background:#4fc2b5"></div>
<svg style="left:0;top:0" width="1" height="1"><path d="M369.2 269.70H382 M369.2 272.85H382 M369.2 276.00H382 M369.2 279.15H382" stroke="#000" stroke-width="1.8" stroke-linecap="round"/></svg>
<div class="t" style="left:410.1px;top:267.84px;font-size:13.66px;color:#f2f2f2">La parra tapa la ventana-1</div>
<div class="a" style="left:353px;top:300px;width:654px;height:45px;background:#507c48"></div>
<div class="a" style="left:353px;top:300px;width:45px;height:45px;background:#69c15e"></div>
<svg style="left:0;top:0" width="1" height="1"><path d="M369.2 317.70H382 M369.2 320.85H382 M369.2 324.00H382 M369.2 327.15H382" stroke="#000" stroke-width="1.8" stroke-linecap="round"/></svg>
<div class="t" style="left:410.1px;top:315.84px;font-size:13.66px;color:#f2f2f2">La historia-1 Esteban</div>
<div class="a" style="left:353px;top:348px;width:654px;height:45px;background:#62763d"></div>
<div class="a" style="left:353px;top:348px;width:45px;height:45px;background:#8ab849"></div>
<svg style="left:0;top:0" width="1" height="1"><path d="M369.2 365.70H382 M369.2 368.85H382 M369.2 372.00H382 M369.2 375.15H382" stroke="#000" stroke-width="1.8" stroke-linecap="round"/></svg>
<div class="t" style="left:410.1px;top:363.84px;font-size:13.66px;color:#f2f2f2">Pista-3</div>
<div class="a" style="left:353px;top:396px;width:654px;height:45px;background:#7d5e3a"></div>
<div class="a" style="left:353px;top:396px;width:45px;height:45px;background:#d4903d"></div>
<svg style="left:0;top:0" width="1" height="1"><path d="M369.2 413.70H382 M369.2 416.85H382 M369.2 420.00H382 M369.2 423.15H382" stroke="#000" stroke-width="1.8" stroke-linecap="round"/></svg>
<div class="t" style="left:410.1px;top:411.84px;font-size:13.66px;color:#f2f2f2">Pista-4</div>
<div class="a" style="left:353px;top:444px;width:654px;height:45px;background:#4f4142"></div>
<div class="a" style="left:353px;top:444px;width:45px;height:45px;background:#6e5254"></div>
<svg style="left:0;top:0" width="1" height="1"><path d="M369.2 461.70H382 M369.2 464.85H382 M369.2 468.00H382 M369.2 471.15H382" stroke="#000" stroke-width="1.8" stroke-linecap="round"/></svg>
<div class="t" style="left:410.1px;top:459.84px;font-size:13.66px;color:#f2f2f2">nuertra favorita</div>
<div class="a" style="left:353px;top:492px;width:654px;height:45px;background:#795b6c"></div>
<div class="a" style="left:353px;top:492px;width:45px;height:45px;background:#c386a7"></div>
<svg style="left:0;top:0" width="1" height="1"><path d="M369.2 509.70H382 M369.2 512.85H382 M369.2 516.00H382 M369.2 519.15H382" stroke="#000" stroke-width="1.8" stroke-linecap="round"/></svg>
<div class="t" style="left:410.1px;top:507.84px;font-size:13.66px;color:#f2f2f2">Pista-6</div>
<div class="a" style="left:353px;top:540px;width:654px;height:45px;background:#6b5b80"></div>
<div class="a" style="left:353px;top:540px;width:45px;height:45px;background:#a686d1"></div>
<svg style="left:0;top:0" width="1" height="1"><path d="M369.2 557.70H382 M369.2 560.85H382 M369.2 564.00H382 M369.2 567.15H382" stroke="#000" stroke-width="1.8" stroke-linecap="round"/></svg>
<div class="t" style="left:410.1px;top:555.84px;font-size:13.66px;color:#f2f2f2">Pista-7</div>
<div class="a" style="left:353px;top:588px;width:654px;height:45px;background:#56557b"></div>
<div class="a" style="left:353px;top:588px;width:45px;height:45px;background:#7a78c8"></div>
<svg style="left:0;top:0" width="1" height="1"><path d="M369.2 605.70H382 M369.2 608.85H382 M369.2 612.00H382 M369.2 615.15H382" stroke="#000" stroke-width="1.8" stroke-linecap="round"/></svg>
<div class="t" style="left:410.1px;top:603.84px;font-size:13.66px;color:#f2f2f2">Pista-8</div>
</body></html>
